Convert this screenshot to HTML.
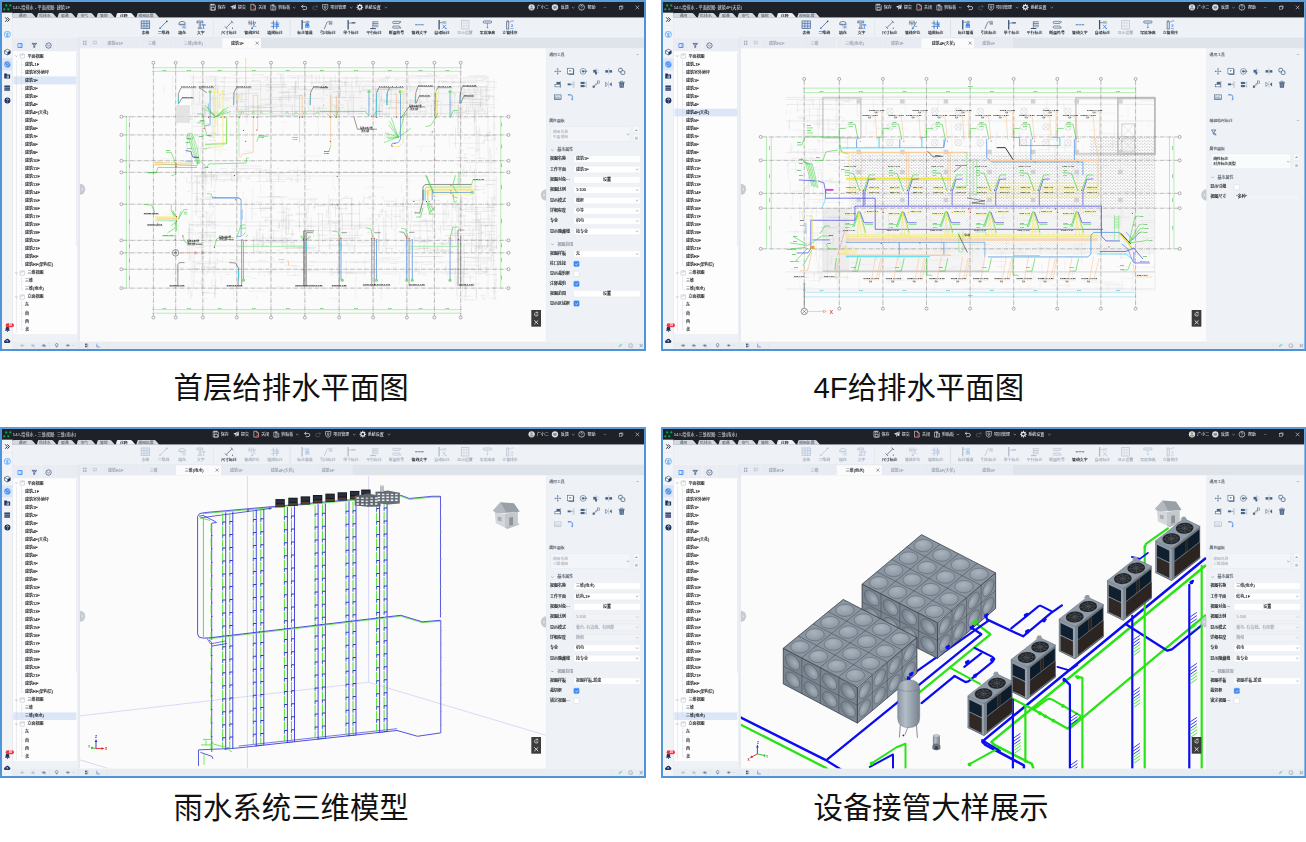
<!DOCTYPE html><html lang="zh"><head><meta charset="utf-8"><title>给排水</title><style>
html,body{margin:0;padding:0;background:#fff;}
body{width:1306px;height:842px;position:relative;overflow:hidden;font-family:"Liberation Sans","Noto Sans CJK SC",sans-serif;}
.win{filter:saturate(1.0001);position:absolute;width:1938px;height:1053px;transform:scale(0.333333);transform-origin:0 0;overflow:hidden;background:#eef1f5;}
.win div,.win span,.win svg{position:absolute;box-sizing:border-box;}
.win svg{overflow:visible;}
.t{font-size:12px;line-height:14px;white-space:nowrap;color:#101215;transform:translateY(-50%);-webkit-text-stroke:0.35px;}
.c{transform:translate(-50%,-50%);}
.cap{position:absolute;font-size:29.4px;line-height:40px;color:#111;white-space:nowrap;font-family:"Liberation Sans","Noto Sans CJK SC",sans-serif;}
.bd{left:0;top:0;width:1938px;height:1053px;border:6px solid #4f94d9;border-top-color:#5c9edc;border-radius:3px;z-index:50;pointer-events:none;}
.inp{background:#fff;border:1px solid #e3e6ec;border-radius:2px;}
.inp.dis{background:#f1f3f6;}
.cb{background:#fff;border:1.5px solid #c4c9d2;border-radius:3px;}
.cb.on{background:#3d8af2;border-color:#3d8af2;}
</style></head><body><div class="win" style="left:0px;top:0px;transform:scale(0.33333,0.333333);"><div style="left:6.0px;top:6.0px;width:1926.0px;height:1041.0px;background:#eef1f5;"></div><div style="left:6.0px;top:6.0px;width:1926.0px;height:47.4px;background:#1e2228;"></div><svg style="left:0.0px;top:0.0px;width:42.0px;height:42.0px;" viewBox="0 0 14 14"><path d="M4.3 9.3L6.2 5.4L8.3 9.3L10.3 5.4" stroke="#0a3d24" stroke-width=".5" fill="none"/><circle cx="6.2" cy="5.4" r="1.15" fill="#00a651"/><circle cx="10.3" cy="5.4" r="1.15" fill="#00a651"/><circle cx="4.3" cy="9.3" r="1.15" fill="#00a651"/><circle cx="8.3" cy="9.3" r="1.15" fill="#00a651"/></svg><span class="t" style="left:38.4px;top:22.2px;color:#dfe2e6;font-size:12.6px;-webkit-text-stroke:0;">14#-给排水 - 平面视图: 建筑1F</span><div style="left:0.0px;top:0;width:0;height:0;"><svg style="left:627.9px;top:11.1px;width:21.0px;height:21.0px;" viewBox="0 0 24 24"><path d="M3 2H17L21 6V22H3z" fill="none" stroke="#e6e8eb" stroke-width="2"/><rect x="7" y="2" width="9" height="6" fill="none" stroke="#e6e8eb" stroke-width="1.8"/><rect x="7" y="13" width="10" height="9" fill="none" stroke="#e6e8eb" stroke-width="1.8"/></svg><span class="t" style="left:653.4px;top:22.2px;color:#e4e6ea;-webkit-text-stroke:0.05px;">保存</span><svg style="left:688.5px;top:11.1px;width:21.0px;height:21.0px;" viewBox="0 0 24 24"><path d="M22 2L2 11L9 14L11 22L14 16L20 19z" fill="#e6e8eb"/><path d="M9 14L22 2L11 16" stroke="#1e2228" stroke-width="1.2" fill="none"/></svg><span class="t" style="left:714.0px;top:22.2px;color:#e4e6ea;-webkit-text-stroke:0.05px;">提交</span><svg style="left:749.4px;top:11.1px;width:21.0px;height:21.0px;" viewBox="0 0 24 24"><path d="M4 2H14L20 8V22H4z" fill="none" stroke="#e6e8eb" stroke-width="2"/><path d="M14 2V8H20" fill="none" stroke="#e6e8eb" stroke-width="1.6"/><path d="M12 13l7 8M19 13l-7 8" stroke="#f0443c" stroke-width="2.6"/></svg><span class="t" style="left:774.6px;top:22.2px;color:#e4e6ea;-webkit-text-stroke:0.05px;">关闭</span><svg style="left:809.4px;top:11.1px;width:21.0px;height:21.0px;" viewBox="0 0 24 24"><path d="M8 5H4V22H13" fill="none" stroke="#e6e8eb" stroke-width="2"/><path d="M8 3H16V7H8z" fill="#e6e8eb"/><path d="M11 9H21V22H11z" fill="none" stroke="#e6e8eb" stroke-width="2"/><path d="M14 13h4M14 17h4" stroke="#e6e8eb" stroke-width="1.5"/></svg><span class="t" style="left:834.9px;top:22.2px;color:#e4e6ea;-webkit-text-stroke:0.05px;">剪贴板</span><svg style="left:878.1px;top:18.9px;width:9.6px;height:7.2px;" viewBox="0 0 10 7"><path d="M1 1.5L5 5.5L9 1.5" stroke="#c8ccd2" stroke-width="1.6" fill="none"/></svg><svg style="left:902.4px;top:11.1px;width:21.0px;height:21.0px;" viewBox="0 0 24 24"><path d="M9 4L3 9.5L9 15" fill="none" stroke="#e6e8eb" stroke-width="2.4"/><path d="M3 9.5H15a6 5.5 0 0 1 0 11H7" fill="none" stroke="#e6e8eb" stroke-width="2.4"/></svg><svg style="left:934.5px;top:11.1px;width:21.0px;height:21.0px;" viewBox="0 0 24 24"><path d="M15 4L21 9.5L15 15" fill="none" stroke="#5a6068" stroke-width="2.2"/><path d="M21 9.5H9a6 5.5 0 0 0 0 11H17" fill="none" stroke="#5a6068" stroke-width="2.2"/></svg><svg style="left:965.4px;top:11.1px;width:21.0px;height:21.0px;" viewBox="0 0 24 24"><path d="M3 3H21V14Q21 20 12 23Q3 20 3 14z" fill="none" stroke="#e6e8eb" stroke-width="2"/><circle cx="12" cy="11" r="3.5" fill="none" stroke="#e6e8eb" stroke-width="2"/><path d="M12 15v4" stroke="#e6e8eb" stroke-width="2"/></svg><span class="t" style="left:990.9px;top:22.2px;color:#e4e6ea;-webkit-text-stroke:0.05px;">项目管理</span><svg style="left:1049.1px;top:18.9px;width:9.6px;height:7.2px;" viewBox="0 0 10 7"><path d="M1 1.5L5 5.5L9 1.5" stroke="#c8ccd2" stroke-width="1.6" fill="none"/></svg><svg style="left:1068.9px;top:11.1px;width:21.0px;height:21.0px;" viewBox="0 0 24 24"><rect x="10.2" y="0.5" width="3.6" height="6" rx="1" fill="#e6e8eb" transform="rotate(0 12 12)"/><rect x="10.2" y="0.5" width="3.6" height="6" rx="1" fill="#e6e8eb" transform="rotate(45 12 12)"/><rect x="10.2" y="0.5" width="3.6" height="6" rx="1" fill="#e6e8eb" transform="rotate(90 12 12)"/><rect x="10.2" y="0.5" width="3.6" height="6" rx="1" fill="#e6e8eb" transform="rotate(135 12 12)"/><rect x="10.2" y="0.5" width="3.6" height="6" rx="1" fill="#e6e8eb" transform="rotate(180 12 12)"/><rect x="10.2" y="0.5" width="3.6" height="6" rx="1" fill="#e6e8eb" transform="rotate(225 12 12)"/><rect x="10.2" y="0.5" width="3.6" height="6" rx="1" fill="#e6e8eb" transform="rotate(270 12 12)"/><rect x="10.2" y="0.5" width="3.6" height="6" rx="1" fill="#e6e8eb" transform="rotate(315 12 12)"/><circle cx="12" cy="12" r="6.3" fill="none" stroke="#e6e8eb" stroke-width="4.2"/></svg><span class="t" style="left:1094.4px;top:22.2px;color:#e4e6ea;-webkit-text-stroke:0.05px;">系统设置</span><svg style="left:1153.2px;top:18.9px;width:9.6px;height:7.2px;" viewBox="0 0 10 7"><path d="M1 1.5L5 5.5L9 1.5" stroke="#c8ccd2" stroke-width="1.6" fill="none"/></svg></div><svg style="left:1584.6px;top:12.0px;width:19.8px;height:19.8px;" viewBox="0 0 24 24"><circle cx="12" cy="12" r="11.5" fill="#d9dde4"/><circle cx="12" cy="9" r="4" fill="#8f98a6"/><path d="M4 20a8 7 0 0 1 16 0z" fill="#8f98a6"/><circle cx="14" cy="12" r="2" fill="#e9a23b"/></svg><span class="t" style="left:1610.4px;top:22.2px;color:#e4e6ea;-webkit-text-stroke:0.05px;">广小二</span><svg style="left:1654.5px;top:12.0px;width:19.8px;height:19.8px;" viewBox="0 0 24 24"><circle cx="12" cy="12" r="11.5" fill="#d9dde4"/><path d="M6 8h12v8h-5l-3 3v-3H6z" fill="#7d8694"/></svg><span class="t" style="left:1682.4px;top:22.2px;color:#e4e6ea;-webkit-text-stroke:0.05px;">反馈</span><svg style="left:1714.8px;top:18.9px;width:9.6px;height:7.2px;" viewBox="0 0 10 7"><path d="M1 1.5L5 5.5L9 1.5" stroke="#c8ccd2" stroke-width="1.6" fill="none"/></svg><svg style="left:1735.2px;top:12.0px;width:19.8px;height:19.8px;" viewBox="0 0 24 24"><circle cx="12" cy="12" r="10.5" fill="#1e2228" stroke="#d9dde4" stroke-width="2.4"/><path d="M9 9a3 3.4 0 1 1 4.5 3q-1.5 1-1.5 3" stroke="#d9dde4" stroke-width="2.2" fill="none"/><circle cx="12" cy="18.5" r="1.4" fill="#d9dde4"/></svg><span class="t" style="left:1762.8px;top:22.2px;color:#e4e6ea;-webkit-text-stroke:0.05px;">帮助</span><div style="left:1810.8px;top:21.6px;width:7.8px;height:1.5px;background:#b9bdc4;"></div><svg style="left:1857.0px;top:15.6px;width:13.2px;height:13.2px;" viewBox="0 0 24 24"><rect x="2" y="7" width="14" height="14" fill="none" stroke="#e6e8eb" stroke-width="2.6"/><path d="M7 7V3H21V17H16" fill="none" stroke="#e6e8eb" stroke-width="2.6"/></svg><svg style="left:1904.7px;top:15.0px;width:14.4px;height:14.4px;" viewBox="0 0 24 24"><path d="M3 3L21 21M21 3L3 21" stroke="#e6e8eb" stroke-width="2.8"/></svg><svg style="left:0.0px;top:0.0px;width:600.0px;height:60.0px;" viewBox="0 0 200 20"><path d="M12.30 17.8 L12.30 13.5 Q12.30 12.9 14.50 12.9 L31.00 12.9 Q32.00 12.9 32.60 13.700000000000001 L36.00 17.8 Z" fill="#d3d8e1"/><path d="M36.80 17.8 L38.00 13.5 Q38.20 12.9 39.00 12.9 L51.70 12.9 Q52.70 12.9 53.30 13.700000000000001 L56.70 17.8 Z" fill="#d3d8e1"/><path d="M57.50 17.8 L58.70 13.5 Q58.90 12.9 59.70 12.9 L70.80 12.9 Q71.80 12.9 72.40 13.700000000000001 L75.80 17.8 Z" fill="#d3d8e1"/><path d="M76.60 17.8 L77.80 13.5 Q78.00 12.9 78.80 12.9 L90.70 12.9 Q91.70 12.9 92.30 13.700000000000001 L95.70 17.8 Z" fill="#d3d8e1"/><path d="M96.50 17.8 L97.70 13.5 Q97.90 12.9 98.70 12.9 L109.90 12.9 Q110.90 12.9 111.50 13.700000000000001 L114.90 17.8 Z" fill="#d3d8e1"/><path d="M115.70 17.8 L116.90 13.5 Q117.10 12.9 117.90 12.9 L130.50 12.9 Q131.50 12.9 132.10 13.700000000000001 L135.50 17.8 Z" fill="#eef1f5"/><path d="M136.30 17.8 L137.50 13.5 Q137.70 12.9 138.50 12.9 L154.30 12.9 Q155.30 12.9 155.90 13.700000000000001 L159.30 17.8 Z" fill="#d3d8e1"/></svg><span class="t c" style="left:67.9px;top:46.2px;color:#6b7480;font-size:11.6px;">通用</span><span class="t c" style="left:134.8px;top:46.2px;color:#6b7480;font-size:11.6px;">给排水</span><span class="t c" style="left:194.6px;top:46.2px;color:#6b7480;font-size:11.6px;">暖通</span><span class="t c" style="left:253.1px;top:46.2px;color:#6b7480;font-size:11.6px;">电气</span><span class="t c" style="left:311.7px;top:46.2px;color:#6b7480;font-size:11.6px;">管综</span><span class="t c" style="left:371.4px;top:46.2px;color:#1f2329;font-size:11.6px;">注释</span><span class="t c" style="left:438.0px;top:46.2px;color:#6b7480;font-size:11.6px;">视图拓展</span><div style="left:36.9px;top:53.4px;width:1895.1px;height:59.1px;background:#eef1f5;"></div><svg style="left:421.2px;top:59.1px;width:30.6px;height:30.6px;" viewBox="0 0 24 24"><rect x="2" y="3" width="20" height="18" fill="#cddbf0" stroke="#4f6f9f" stroke-width="1.8"/><path d="M2 9H22M2 15H22M8.7 3V21M15.3 3V21" stroke="#4f6f9f" stroke-width="1.5" fill="none"/></svg><span class="t c" style="left:436.5px;top:99.3px;color:#1f2329;font-size:11.6px;">表格</span><svg style="left:475.2px;top:59.1px;width:30.6px;height:30.6px;" viewBox="0 0 24 24"><path d="M4 20L20 4" stroke="#3c5273" stroke-width="1.6"/><circle cx="4" cy="20" r="2" fill="#3d8af2"/><circle cx="20" cy="4" r="2" fill="#3c5273"/></svg><span class="t c" style="left:490.5px;top:99.3px;color:#1f2329;font-size:11.6px;">二维线</span><svg style="left:530.7px;top:59.1px;width:30.6px;height:30.6px;" viewBox="0 0 24 24"><path d="M4 11a8 7 0 0 1 16 0z" fill="none" stroke="#3c5273" stroke-width="1.6"/><path d="M8 11v3M12 11v5M16 11v3" stroke="#3c5273" stroke-width="1.4"/><rect x="11" y="13" width="11" height="9" fill="#c9d6ea" opacity=".9"/><circle cx="17" cy="17" r="2.2" fill="none" stroke="#3d8af2" stroke-width="1.3"/></svg><span class="t c" style="left:546.0px;top:99.3px;color:#1f2329;font-size:11.6px;">填充</span><svg style="left:587.1px;top:59.1px;width:30.6px;height:30.6px;" viewBox="0 0 24 24"><path d="M3 3H17V8H15V5.5H11.5V19H14V21H6V19H8.5V5.5H5V8H3z" fill="#e8eef8" stroke="#3c5273" stroke-width="1.3"/><path d="M14 11H23V15H21.5V13H19.5V20H21V21.5H16V20H17.5V13H15.5V15H14z" fill="#3d8af2"/></svg><span class="t c" style="left:602.4px;top:99.3px;color:#1f2329;font-size:11.6px;">文字</span><svg style="left:671.7px;top:59.1px;width:30.6px;height:30.6px;" viewBox="0 0 24 24"><path d="M5 19L19 5" stroke="#3c5273" stroke-width="1.6"/><path d="M2 16l6 6M16 2l6 6" stroke="#3c5273" stroke-width="1.6"/><circle cx="20" cy="20" r="1.3" fill="#3c5273"/></svg><span class="t c" style="left:687.0px;top:99.3px;color:#1f2329;font-size:11.6px;">尺寸标注</span><svg style="left:740.7px;top:59.1px;width:30.6px;height:30.6px;" viewBox="0 0 24 24"><path d="M5 2V12M10 2V14M15 2V12" stroke="#3c5273" stroke-width="1.5"/><path d="M3 7H8M8 9H12M13 7H18" stroke="#3c5273" stroke-width="1.2"/><path d="M21 5L13 19" stroke="#3c5273" stroke-width="1.5"/><circle cx="12" cy="20" r="2.4" fill="#3d8af2"/><path d="M17 16h5" stroke="#3d8af2" stroke-width="1.5"/></svg><span class="t c" style="left:756.0px;top:99.3px;color:#1f2329;font-size:11.6px;">管线定位</span><svg style="left:809.7px;top:59.1px;width:30.6px;height:30.6px;" viewBox="0 0 24 24"><path d="M2 8H22M2 16H22" stroke="#3d8af2" stroke-width="1.7"/><path d="M8 2V22M16 2V22" stroke="#3c5273" stroke-width="1.6"/><path d="M10 12h9" stroke="#3d8af2" stroke-width="2"/><path d="M17 8.5l5 3.5-5 3.5z" fill="#3d8af2"/><circle cx="8" cy="8" r="1.6" fill="#3d8af2"/><circle cx="16" cy="16" r="1.6" fill="#3d8af2"/></svg><span class="t c" style="left:825.0px;top:99.3px;color:#1f2329;font-size:11.6px;">墙间标注</span><svg style="left:899.7px;top:59.1px;width:30.6px;height:30.6px;" viewBox="0 0 24 24"><path d="M5 1V23" stroke="#3c5273" stroke-width="3"/><path d="M5 6H14" stroke="#3c5273" stroke-width="1.4"/><path d="M14 4h8M14 7h8" stroke="#3c5273" stroke-width="1.2"/><path d="M12 13a5 5 0 0 1 10 0v6h-10z" fill="#3d8af2"/><path d="M15 15v3M19 15v3" stroke="#fff" stroke-width="1.2"/></svg><span class="t c" style="left:915.0px;top:99.3px;color:#1f2329;font-size:11.6px;">标注管道</span><svg style="left:968.7px;top:59.1px;width:30.6px;height:30.6px;" viewBox="0 0 24 24"><path d="M3 22L9 7Q10 5 12 5H14" stroke="#3c5273" stroke-width="1.5" fill="none"/><path d="M14 4h8M14 7h8" stroke="#3c5273" stroke-width="1.2"/><rect x="14" y="9" width="8" height="2" fill="#3c5273"/></svg><span class="t c" style="left:984.0px;top:99.3px;color:#1f2329;font-size:11.6px;">引出标注</span><svg style="left:1037.7px;top:59.1px;width:30.6px;height:30.6px;" viewBox="0 0 24 24"><path d="M5 1V23" stroke="#3c5273" stroke-width="3"/><path d="M5 8H13" stroke="#3c5273" stroke-width="1.4"/><rect x="13" y="6" width="9" height="3" fill="#3c5273"/></svg><span class="t c" style="left:1053.0px;top:99.3px;color:#1f2329;font-size:11.6px;">单个标注</span><svg style="left:1106.7px;top:59.1px;width:30.6px;height:30.6px;" viewBox="0 0 24 24"><path d="M3 21H16" stroke="#3c5273" stroke-width="2.4"/><path d="M9 21V4" stroke="#3c5273" stroke-width="1.4"/><path d="M9 5h13M9 9h13M9 13h13" stroke="#3c5273" stroke-width="1.5"/><rect x="11" y="15" width="11" height="3" fill="#9fb4d6"/></svg><span class="t c" style="left:1122.0px;top:99.3px;color:#1f2329;font-size:11.6px;">平行标注</span><svg style="left:1174.2px;top:59.1px;width:30.6px;height:30.6px;" viewBox="0 0 24 24"><rect x="3" y="4" width="17" height="5" rx="2.5" fill="#dfe8f5" stroke="#3c5273" stroke-width="1.4"/><rect x="3" y="15" width="17" height="5" rx="2.5" fill="#dfe8f5" stroke="#3c5273" stroke-width="1.4"/><path d="M20 3l3 2-3 2M20 17l3 2-3 2" stroke="#3c5273" stroke-width="1.2" fill="none"/></svg><span class="t c" style="left:1189.5px;top:99.3px;color:#1f2329;font-size:11.6px;">断面符号</span><svg style="left:1242.6px;top:59.1px;width:30.6px;height:30.6px;" viewBox="0 0 24 24"><path d="M2 12H8M16 12H22" stroke="#3c5273" stroke-width="1.8"/><path d="M9 12h6" stroke="#3d8af2" stroke-width="2.4"/></svg><span class="t c" style="left:1257.9px;top:99.3px;color:#1f2329;font-size:11.6px;">管线文字</span><svg style="left:1310.7px;top:59.1px;width:30.6px;height:30.6px;" viewBox="0 0 24 24"><path d="M5 1V23" stroke="#3c5273" stroke-width="3"/><path d="M5 7H13" stroke="#3c5273" stroke-width="1.4"/><path d="M13 5h9M13 8h9" stroke="#3c5273" stroke-width="1.2"/><path d="M13 12l8 9M21 12l-8 9" stroke="#3d8af2" stroke-width="2"/><circle cx="21" cy="21" r="1.8" fill="#3d8af2"/></svg><span class="t c" style="left:1326.0px;top:99.3px;color:#1f2329;font-size:11.6px;">自动标注</span><svg style="left:1379.7px;top:59.1px;width:30.6px;height:30.6px;" viewBox="0 0 24 24"><rect x="3" y="2" width="18" height="20" fill="#eef1f6" stroke="#b5bdc9" stroke-width="1.4"/><path d="M3 8H21M3 15H21M9 2V22M15 2V22" stroke="#b5bdc9" stroke-width="1.1" stroke-dasharray="2 1.5"/></svg><span class="t c" style="left:1395.0px;top:99.3px;color:#a9b0bb;font-size:11.6px;">显示设置</span><svg style="left:1447.2px;top:59.1px;width:30.6px;height:30.6px;" viewBox="0 0 24 24"><rect x="2" y="3" width="20" height="5" rx="2.5" fill="#dfe8f5" stroke="#3c5273" stroke-width="1.5"/><path d="M12 8V19" stroke="#3d8af2" stroke-width="1.6"/><path d="M9.5 17l2.5 4 2.5-4z" fill="#3d8af2"/></svg><span class="t c" style="left:1462.5px;top:99.3px;color:#1f2329;font-size:11.6px;">梁底净高</span><svg style="left:1514.7px;top:59.1px;width:30.6px;height:30.6px;" viewBox="0 0 24 24"><rect x="4" y="5" width="5" height="17" fill="#dfe8f5" stroke="#3c5273" stroke-width="1.5"/><path d="M4 3h5" stroke="#3c5273" stroke-width="1.6"/><path d="M11 6l5-3M16 3h5" stroke="#3c5273" stroke-width="1.2" fill="none"/><path d="M14 12h4v4M14 16l4 0M13 21h7" stroke="#3d8af2" stroke-width="1.5" fill="none"/></svg><span class="t c" style="left:1530.0px;top:99.3px;color:#1f2329;font-size:11.6px;">立管排序</span><div style="left:640.8px;top:58.5px;width:1.5px;height:51.0px;background:#d5d9e0;"></div><div style="left:869.1px;top:58.5px;width:1.5px;height:51.0px;background:#d5d9e0;"></div><div style="left:6.0px;top:37.8px;width:31.2px;height:1009.2px;background:#f1f3f7;"></div><div style="left:36.6px;top:37.8px;width:1.0px;height:1009.2px;background:#dfe3ea;"></div><div style="left:6.0px;top:75.0px;width:31.2px;height:1.2px;background:#dde1e8;"></div><svg style="left:12.9px;top:49.8px;width:18.6px;height:17.4px;" viewBox="0 0 24 24"><path d="M3 3l8 9-8 9M12 3l8 9-8 9" stroke="#15181d" stroke-width="3.6" fill="none"/></svg><svg style="left:10.8px;top:92.4px;width:22.2px;height:22.2px;" viewBox="0 0 24 24"><circle cx="12" cy="12" r="11" fill="#7db8fb"/><path d="M6 14v-3a6 6 0 0 1 12 0v3" stroke="#fff" stroke-width="2.4" fill="none"/><rect x="4.5" y="12" width="4" height="6" rx="1.5" fill="#fff"/><rect x="15.5" y="12" width="4" height="6" rx="1.5" fill="#fff"/></svg><svg style="left:11.7px;top:145.5px;width:20.4px;height:20.4px;" viewBox="0 0 24 24"><path d="M12 2L22 7V17L12 22L2 17V7z" fill="#fff" stroke="#1d3461" stroke-width="2.2"/><path d="M12 12L22 7V17L12 22z" fill="#1d3461"/><path d="M2 7l10 5" stroke="#1d3461" stroke-width="2"/></svg><div style="left:6.0px;top:174.9px;width:31.2px;height:36.0px;background:#dce6f6;"></div><svg style="left:11.7px;top:182.7px;width:20.4px;height:20.4px;" viewBox="0 0 24 24"><circle cx="12" cy="12" r="11" fill="#4a90f0"/><ellipse cx="12" cy="12" rx="10" ry="4" fill="none" stroke="#cfe2fb" stroke-width="1.8" transform="rotate(-35 12 12)"/></svg><svg style="left:12.3px;top:218.4px;width:19.2px;height:19.2px;" viewBox="0 0 24 24"><path d="M1 3H10L12 7H23V22H1z" fill="#1d3461"/><rect x="10" y="11" width="8" height="8" fill="#fff"/><path d="M12 13h4v4h-4z" fill="#1d3461"/></svg><svg style="left:12.3px;top:254.7px;width:19.2px;height:18.6px;" viewBox="0 0 24 24"><rect x="1" y="2" width="22" height="5.4" fill="#1d3461"/><rect x="1" y="9.3" width="22" height="5.4" fill="#1d3461"/><rect x="1" y="16.6" width="22" height="5.4" fill="#1d3461"/></svg><svg style="left:12.6px;top:292.2px;width:18.6px;height:18.6px;" viewBox="0 0 24 24"><circle cx="12" cy="12" r="11.5" fill="#1d3461"/><path d="M8.5 9.5a3.5 3.5 0 1 1 5 3q-1.5 .8-1.5 2.5" stroke="#fff" stroke-width="2.6" fill="none"/><circle cx="12" cy="18.6" r="1.6" fill="#fff"/></svg><svg style="left:12.6px;top:976.5px;width:18.6px;height:19.8px;" viewBox="0 0 24 24"><path d="M12 2a7 7 0 0 1 7 7v6l3 4H2l3-4V9a7 7 0 0 1 7-7z" fill="#1d3461"/><circle cx="12" cy="21.5" r="2" fill="#1d3461"/></svg><div style="left:17.4px;top:969.6px;width:24.6px;height:12.6px;background:#f5343f;border-radius:6px;z-index:5;"></div><span class="t c" style="left:30.9px;top:975.9px;color:#fff;font-size:9px;z-index:6;">18</span><svg style="left:11.4px;top:1011.6px;width:21.0px;height:18.0px;" viewBox="0 0 24 21"><path d="M6 20a5 5 0 0 1-.5-10A7 7 0 0 1 19 9.5 5.3 5.3 0 0 1 18.5 20z" fill="#1d3461"/><path d="M12 17V11M9 13.5l3-3 3 3" stroke="#fff" stroke-width="2" fill="none"/></svg><div style="left:37.5px;top:112.5px;width:195.6px;height:40.8px;background:#e9ecf2;"></div><div style="left:81.6px;top:114.6px;width:1.4px;height:37.8px;background:#f7f8fa;"></div><div style="left:124.2px;top:114.6px;width:1.4px;height:37.8px;background:#f7f8fa;"></div><div style="left:166.8px;top:114.6px;width:1.4px;height:37.8px;background:#f7f8fa;"></div><div style="left:37.5px;top:112.5px;width:195.6px;height:1.2px;background:#f7f8fa;"></div><svg style="left:52.2px;top:127.8px;width:16.2px;height:16.8px;" viewBox="0 0 24 24"><rect x="1" y="1" width="22" height="22" rx="4" fill="#4a90f0"/><rect x="5" y="5" width="6" height="14" fill="#fff"/><rect x="12.5" y="5" width="6.5" height="14" fill="#bcd6fa"/></svg><svg style="left:93.6px;top:127.8px;width:18.0px;height:16.8px;" viewBox="0 0 24 24"><path d="M2 3H22L14 12V19L10 22V12z" fill="none" stroke="#1d3461" stroke-width="2.6"/><path d="M8 7h8" stroke="#1d3461" stroke-width="2.4"/></svg><svg style="left:135.6px;top:126.6px;width:19.2px;height:19.2px;" viewBox="0 0 24 24"><circle cx="12" cy="12" r="10" fill="none" stroke="#1d3461" stroke-width="2.2"/><path d="M7 10l5 4 5-4" stroke="#1d3461" stroke-width="2" fill="none"/></svg><div style="left:39.0px;top:153.6px;width:192.6px;height:848.4px;background:#fdfdfe;"></div><div style="left:228.6px;top:156.0px;width:2.7px;height:582.0px;background:#e3e6ec;border-radius:2px;"></div><svg style="left:45.3px;top:165.3px;width:7.8px;height:6.0px;" viewBox="0 0 10 7"><path d="M1 1.5L5 5.5L9 1.5" stroke="#5b6573" stroke-width="1.8" fill="none"/></svg><svg style="left:59.4px;top:160.2px;width:15.6px;height:16.2px;" viewBox="0 0 24 24"><rect x="2" y="2" width="20" height="20" rx="2" fill="#fff" stroke="#8e98a6" stroke-width="1.6"/><path d="M2 8H14V2" stroke="#8e98a6" stroke-width="1.4" fill="none"/><path d="M14 8l8-6" stroke="#8e98a6" stroke-width="1.2"/></svg><span class="t" style="left:82.5px;top:168.6px;">平面视图</span><div style="left:64.2px;top:192.7px;width:6.6px;height:0.9px;background:#c6ccd6;"></div><span class="t" style="left:75.3px;top:192.7px;">建筑-1F</span><div style="left:64.2px;top:216.8px;width:6.6px;height:0.9px;background:#c6ccd6;"></div><span class="t" style="left:75.3px;top:216.8px;">建筑室外地坪</span><div style="left:39.6px;top:229.2px;width:189.0px;height:23.4px;background:#dbe7f8;"></div><div style="left:64.2px;top:240.9px;width:6.6px;height:0.9px;background:#c6ccd6;"></div><span class="t" style="left:75.3px;top:240.9px;">建筑1F</span><div style="left:64.2px;top:265.0px;width:6.6px;height:0.9px;background:#c6ccd6;"></div><span class="t" style="left:75.3px;top:265.0px;">建筑2F</span><div style="left:64.2px;top:289.0px;width:6.6px;height:0.9px;background:#c6ccd6;"></div><span class="t" style="left:75.3px;top:289.0px;">建筑3F</span><div style="left:64.2px;top:313.1px;width:6.6px;height:0.9px;background:#c6ccd6;"></div><span class="t" style="left:75.3px;top:313.1px;">建筑4F</span><div style="left:64.2px;top:337.2px;width:6.6px;height:0.9px;background:#c6ccd6;"></div><span class="t" style="left:75.3px;top:337.2px;">建筑4F(天花)</span><div style="left:64.2px;top:361.3px;width:6.6px;height:0.9px;background:#c6ccd6;"></div><span class="t" style="left:75.3px;top:361.3px;">建筑5F</span><div style="left:64.2px;top:385.4px;width:6.6px;height:0.9px;background:#c6ccd6;"></div><span class="t" style="left:75.3px;top:385.4px;">建筑6F</span><div style="left:64.2px;top:409.5px;width:6.6px;height:0.9px;background:#c6ccd6;"></div><span class="t" style="left:75.3px;top:409.5px;">建筑7F</span><div style="left:64.2px;top:433.6px;width:6.6px;height:0.9px;background:#c6ccd6;"></div><span class="t" style="left:75.3px;top:433.6px;">建筑8F</span><div style="left:64.2px;top:457.7px;width:6.6px;height:0.9px;background:#c6ccd6;"></div><span class="t" style="left:75.3px;top:457.7px;">建筑9F</span><div style="left:64.2px;top:481.8px;width:6.6px;height:0.9px;background:#c6ccd6;"></div><span class="t" style="left:75.3px;top:481.8px;">建筑10F</span><div style="left:64.2px;top:505.9px;width:6.6px;height:0.9px;background:#c6ccd6;"></div><span class="t" style="left:75.3px;top:505.9px;">建筑11F</span><div style="left:64.2px;top:529.9px;width:6.6px;height:0.9px;background:#c6ccd6;"></div><span class="t" style="left:75.3px;top:529.9px;">建筑12F</span><div style="left:64.2px;top:554.0px;width:6.6px;height:0.9px;background:#c6ccd6;"></div><span class="t" style="left:75.3px;top:554.0px;">建筑13F</span><div style="left:64.2px;top:578.1px;width:6.6px;height:0.9px;background:#c6ccd6;"></div><span class="t" style="left:75.3px;top:578.1px;">建筑14F</span><div style="left:64.2px;top:602.2px;width:6.6px;height:0.9px;background:#c6ccd6;"></div><span class="t" style="left:75.3px;top:602.2px;">建筑15F</span><div style="left:64.2px;top:626.3px;width:6.6px;height:0.9px;background:#c6ccd6;"></div><span class="t" style="left:75.3px;top:626.3px;">建筑16F</span><div style="left:64.2px;top:650.4px;width:6.6px;height:0.9px;background:#c6ccd6;"></div><span class="t" style="left:75.3px;top:650.4px;">建筑17F</span><div style="left:64.2px;top:674.5px;width:6.6px;height:0.9px;background:#c6ccd6;"></div><span class="t" style="left:75.3px;top:674.5px;">建筑18F</span><div style="left:64.2px;top:698.6px;width:6.6px;height:0.9px;background:#c6ccd6;"></div><span class="t" style="left:75.3px;top:698.6px;">建筑19F</span><div style="left:64.2px;top:722.7px;width:6.6px;height:0.9px;background:#c6ccd6;"></div><span class="t" style="left:75.3px;top:722.7px;">建筑20F</span><div style="left:64.2px;top:746.8px;width:6.6px;height:0.9px;background:#c6ccd6;"></div><span class="t" style="left:75.3px;top:746.8px;">建筑21F</span><div style="left:64.2px;top:770.8px;width:6.6px;height:0.9px;background:#c6ccd6;"></div><span class="t" style="left:75.3px;top:770.8px;">建筑RF</span><div style="left:64.2px;top:794.9px;width:6.6px;height:0.9px;background:#c6ccd6;"></div><span class="t" style="left:75.3px;top:794.9px;">建筑RF(架构层)</span><svg style="left:45.3px;top:815.7px;width:7.8px;height:6.0px;" viewBox="0 0 10 7"><path d="M1 1.5L5 5.5L9 1.5" stroke="#5b6573" stroke-width="1.8" fill="none"/></svg><svg style="left:59.4px;top:810.6px;width:15.6px;height:16.2px;" viewBox="0 0 24 24"><rect x="2" y="2" width="20" height="20" rx="2" fill="#fff" stroke="#8e98a6" stroke-width="1.6"/><path d="M2 8H14V2" stroke="#8e98a6" stroke-width="1.4" fill="none"/><path d="M14 8l8-6" stroke="#8e98a6" stroke-width="1.2"/></svg><span class="t" style="left:82.5px;top:819.0px;">三维视图</span><div style="left:64.2px;top:843.1px;width:6.6px;height:0.9px;background:#c6ccd6;"></div><span class="t" style="left:75.3px;top:843.1px;">三维</span><div style="left:64.2px;top:867.2px;width:6.6px;height:0.9px;background:#c6ccd6;"></div><span class="t" style="left:75.3px;top:867.2px;">三维(雨水)</span><svg style="left:45.3px;top:888.0px;width:7.8px;height:6.0px;" viewBox="0 0 10 7"><path d="M1 1.5L5 5.5L9 1.5" stroke="#5b6573" stroke-width="1.8" fill="none"/></svg><svg style="left:59.4px;top:882.9px;width:15.6px;height:16.2px;" viewBox="0 0 24 24"><rect x="2" y="2" width="20" height="20" rx="2" fill="#fff" stroke="#8e98a6" stroke-width="1.6"/><path d="M2 8H14V2" stroke="#8e98a6" stroke-width="1.4" fill="none"/><path d="M14 8l8-6" stroke="#8e98a6" stroke-width="1.2"/></svg><span class="t" style="left:82.5px;top:891.3px;">立面视图</span><div style="left:64.2px;top:915.4px;width:6.6px;height:0.9px;background:#c6ccd6;"></div><span class="t" style="left:75.3px;top:915.4px;">东</span><div style="left:64.2px;top:939.5px;width:6.6px;height:0.9px;background:#c6ccd6;"></div><span class="t" style="left:75.3px;top:939.5px;">南</span><div style="left:64.2px;top:963.6px;width:6.6px;height:0.9px;background:#c6ccd6;"></div><span class="t" style="left:75.3px;top:963.6px;">西</span><div style="left:64.2px;top:987.7px;width:6.6px;height:0.9px;background:#c6ccd6;"></div><span class="t" style="left:75.3px;top:987.7px;">北</span><div style="left:63.9px;top:179.1px;width:0.9px;height:615.8px;background:#c6ccd6;"></div><div style="left:63.9px;top:829.5px;width:0.9px;height:37.7px;background:#c6ccd6;"></div><div style="left:63.9px;top:901.8px;width:0.9px;height:85.9px;background:#c6ccd6;"></div><div style="left:49.2px;top:179.1px;width:0.9px;height:819.1px;background:#c6ccd6;"></div><div style="left:233.1px;top:112.5px;width:1698.9px;height:32.4px;background:#dfe3ea;"></div><div style="left:233.1px;top:112.5px;width:6.9px;height:912.0px;background:#e6e9ef;"></div><div style="left:240.0px;top:112.5px;width:543.0px;height:32.7px;background:#e8ebf1;"></div><div style="left:240.0px;top:144.9px;width:1398.0px;height:2.4px;background:#f3f5f8;z-index:3;"></div><svg style="left:247.8px;top:120.9px;width:12.6px;height:15.0px;" viewBox="0 0 20 24"><rect x="2" y="2" width="6" height="8" fill="#9aa7bd"/><rect x="12" y="2" width="6" height="8" fill="#9aa7bd"/><rect x="2" y="14" width="6" height="8" fill="#9aa7bd"/><rect x="12" y="14" width="6" height="8" fill="#9aa7bd"/></svg><svg style="left:277.2px;top:122.4px;width:15.0px;height:12.6px;" viewBox="0 0 24 24"><path d="M3 3H21V17H12L9 21V17H3z" fill="none" stroke="#9aa7bd" stroke-width="2.4"/></svg><span class="t c" style="left:345.6px;top:129.6px;color:#9aa3b0;">建筑R1F</span><div style="left:418.8px;top:115.2px;width:1.4px;height:28.2px;background:#f4f6f9;"></div><span class="t c" style="left:456.0px;top:129.6px;color:#9aa3b0;">三维</span><div style="left:520.8px;top:115.2px;width:1.4px;height:28.2px;background:#f4f6f9;"></div><span class="t c" style="left:580.2px;top:129.6px;color:#9aa3b0;">三维(雨水)</span><div style="left:667.2px;top:114.6px;width:115.8px;height:30.6px;background:#fbfbfc;"></div><span class="t c" style="left:712.2px;top:129.6px;color:#1f2329;">建筑1F</span><svg style="left:765.9px;top:124.2px;width:10.8px;height:10.8px;" viewBox="0 0 24 24"><path d="M2 2L22 22M22 2L2 22" stroke="#2a2f36" stroke-width="3"/></svg><div style="left:299.1px;top:115.2px;width:1.4px;height:28.2px;background:#f4f6f9;"></div><div style="left:240.0px;top:145.2px;width:1398.6px;height:879.6px;background:#fbfbfb;overflow:hidden;"><svg style="left:0;top:0;width:1397.4px;height:879.6px;" viewBox="80 48.4 465.8 293.2"><rect x="192" y="86" width="296" height="28" fill="#e9e9e9" stroke="none" stroke-width="0" opacity=".25"/><path d="M268.48 106.39h30M435.13 93.46h20M329.99 80.55h12M240.62 197.64v3M201.47 122.9v30M180.72 205.5v3M175.61 267.73h8M341.13 202.17v20M220.54 204.6h30M192.64 234.36h20M229 227.13v12M315.98 282.54h8M426.12 231.37h5M260.58 184.89v8M256.46 295.48v3M215.26 149.99h12M482.28 89.7v20M453.29 143.53h30M326.39 253.69v3M476.47 180.09h18.53M404.94 142.59v20M435.34 136.89v12M276.25 286.47h8M199.23 85.44h8M242.95 161.14h12M310.48 197.27v5M449.43 135.48v12M388.71 158.74h5M219.03 124.89h5M438.42 113.57h8M300.35 156.19h20M202.04 267.9v20M407.83 176.11v30M291.45 162.97h3M294.15 115.46h5M196.83 208.97h3M210.67 95.13v8M183.56 119.41h12M244.51 151.2h8M198.64 183.28h12M264.47 104.86h30M248.69 260.98v5M228.75 289.06h8M341.96 78.17h20M375.38 92.75v8M464.27 153.1v5M420.98 147.16v5M424.11 244.9v5M434.14 240.69h5M325.08 238.67v3M318.2 116.15v20M309.82 285.64v8M282.15 122.27h5M273.14 182.04v20M320.62 220.88h30M381.3 279.43v20.57M320.14 112.7h30M428.28 293.54h12M409.02 91.36h5M202.56 106.46v12M208.97 260.44v12M277.39 197.09h5M427.78 237.61v3M472.76 170.91v5M230.7 129.42v8M415.83 146.33h20M203.91 279.48v8M381.93 257.83h20M467.44 186.38h20M331.03 271v5M419.97 106.15h5M402.94 198.88v8M337.79 182.01v3M179.04 115.62v3M330.08 200.07h3M365.2 187.27h20M252.86 187.86v12M242.96 191.29v8M459.07 118.19h12M200.74 172.8v3M303.49 120.49v8M460.5 107.21v30M282.67 129.71v5M233.56 289.17v10.83M214.54 224.27h5M304.56 189.56h8M279.47 93.02h8M345.61 172.42h3M333.34 139.36h3M467.71 124.11h3M251.09 278.54h5M203.4 168.27v30M246.63 106.06v20M394.64 92.4v3M221.42 276.13v8M372.54 254.77v3M234.51 132.29h3M273.62 198.1v8M174.47 233.77v3M247.73 113.3v8M337.91 118.94v12M219.6 151.12v3M172.38 76.2v20M223.47 180.25h12M434.34 170.54v12M457.72 293.23v6.77M489.12 150.14v30M206.81 297.59v2.41M164.78 214.6h8M178.56 223.67v12M384.63 136.28v5M175.15 114.26h8M248.19 291.29h20M171.54 273.18h5M160.36 159.01h12M379.77 128.58h3M433.71 104.8h20M167.54 141.37h5M480.81 266.54v5M399.86 272.43v12M401.43 184.68v8M375.48 81.98v30M370.16 239.32h20M335.46 187v3M355.66 275.57v24.43M375.37 91.4h3M280.84 95.92v12M370.3 214.78h30M248.37 176.18v3M328.5 194.03v30M409.82 180.04v3M238.65 244.47v5M486.87 184.62h8.13M465.01 137.51v3M375.33 89.66h5M378.26 229.98v20M164.18 85.83v8M193.34 121.63h12M333.04 177.94v12M492.76 197.19v8M473.65 75.99h12M329.72 298.77h8M467.05 284.16v3M207.48 191.49h8M434.77 187.99v3M237.51 276.68h12M213.29 288.59h30M261.15 104.08h8M200.5 147.54v8M441.1 99.37v5" stroke="#888" stroke-width="0.4" fill="none" opacity="0.22"/><path d="M464.98 86.17h8M309 110.54h3M320.56 85.56h3M205.74 101.8v14.2M266.04 85.16h20M425.82 106.98v9.02M437.65 100.5v15.5M409.47 76.08h30M377.55 79.82h8M468.13 97.1h5M294.82 86.51v29.49M389.11 91.06h5M359.98 90.56v5M212.93 95.03v12M328.16 87.98h12M357.07 84.25h5M217.78 84.04v8M251.65 74.84h12M417.48 82.82h8M208.93 85.66h8M343.54 100.44h5M463.52 90.15h30M480.95 109.64h3M319.69 106.08v9.92M339.4 77.07v20M486.53 84.44h3M236.38 114.82v1.18M410.13 101.19h12M426.94 74.06h5M470.58 101.11v8M381.07 96.19v12M224.2 76.95v20M248.47 84.96h20M353.93 115.85v0.15M386.6 111.12v4.88M356.84 75.23v12M283.76 74.92v12M387.39 77.41v5M472.17 83.53v3M409.09 89.22h12M433.1 105.04h20M341.19 82.42h5M257.54 105.94h8M380.2 99.62h5M467.67 76.37h20M310.01 82.94h20M205.81 76.53h12M407.17 87.2v3M474.14 87.83v5M350.06 93.64v8M305.48 89.7h8M223.23 77.29h3M481.43 79.2h5M424.46 86.97h12M405.1 82.22v20M248.87 89.3h12M315.29 108.1h12M200.63 76.63h3M417.92 111.74h8M292.17 114.06h3M408.57 87.29h8M410.08 99.01v16.99M209.93 108.69h3M481.82 114.06v1.94M468.63 108.22v5M245.8 107.71h30M401.09 80.36h5M287.46 89.2h20M250.18 105.62h5M388.11 94.23h20M488.98 111.11h3M215.65 78.05v12M486.5 81.27h5M379.19 102.31v13.69M426.03 105.9h8M362.9 89.66h30M324.02 81.8h5M459.67 98.29h8M266.75 84.33h20M436.58 101.44h3M334.8 108.4v7.6M202.31 86.33h3M373.15 108.77v5M303.53 110.38v5.62M426.37 101.92h3M371.82 100.04h5M293.71 75.85h8M413.33 112.39v3M314.74 89.62h20M252.04 107.4h20M314.49 107.43v8.57M384.95 77.83h5M272.71 115.51h30M480.72 87.12v20M316.29 74.76v8M309.17 91.01h3M237.75 78.77h3M459.27 93.36h5M205.77 79.98h12M379.77 89.58h20M296.12 80.8v5M223.18 94.6h5M445.37 75.83h12M375.33 100.73v3M379.2 108.63v5M451.26 100.08v15.92M442.9 81.68h5M476.26 80.57h8M265.35 104.45h5M361.51 105.81v3M288.88 90.37v12M381.25 86.86h12M266.02 90.35h8M323.7 74.98v20M331.91 92.77v20M329.78 81.54h12M210.47 89.06h8M324.8 95.43h3M229.73 112.73v3.27M346 76.28v20M389.09 106.94v3M493.82 104.75h1.18M489.43 94.66v5M409.93 83.29v8M266.93 87.6h20M438.77 80.03v20M336.43 98.86v17.14M287.32 75.55h5M384.15 85.68v8M241.47 106.96v3M204.81 110.05v5.95M366.91 111.07h3M353.39 109.98v6.02M270.75 115.6h20M290.9 77.42h5M416.8 76.03h20M384.97 115.33v0.67M463.2 104.79h30M235.56 99.87h12M301.05 76.01h12M389.2 74.94v3M282.64 95.97h20M368 98.74h5M442.68 80.66v3M264.29 80.27h3M234.13 101.95h8M270.59 74.48v30M462.27 98.98h20M475.83 104.81h5M190.12 76.58h3M262.49 76.45h3M358.03 113.52h5M348.07 100.99v15.01M438.08 81.33h8M380.92 115.75v0.25M408.2 74.27v12M331.91 105.15h12M493.97 84.98h1.03M292.33 105.49v10.51M270.31 76.21v30M323 107.11v8.89M280.16 113h5M344.77 81.13v5M251.85 80.69h8M308.56 99.25v12M382.36 103.1v12.9M353.59 93.83v20M451.54 92.36h30M459.85 107.15v8.85M213.73 112.25h5M224.13 100.12h5M233.26 75.21h3M386.28 75.79v3M210.06 98.8h8M481.14 96.42h13.86M454.68 112.41h12M252.75 78.7v3M467.89 105.66v3M382.62 86.07h3M431.55 101.15h8M319.25 74.88v8M204.76 105.91v8M373.61 94v8M199.45 91.34v12M219.98 93.7v3M256.06 110.21v3M277.57 92.31h20M422.47 115.07h3M219.19 103.2v5M370.73 114.2h20M477.88 85.92v5M260.62 80.96v30M339.54 115.63v0.37M381.52 88.94v12M462.01 105.3v10.7M197.68 82.66h8M356.21 81.19h30M330.58 96.32v19.68M387.12 88.64v8M454.74 92.91v20M241.71 92.43v8M228.45 93.4h30M248.43 86.66v29.34M378.29 104.38v5M373.88 88.64h5M247.73 114.96v1.04M240.2 101.63h5M490.07 107.39h4.93M273.52 78.59h3M460 93.48h3M431.26 103.12v12.88M280.35 74.93v8M313.44 105.12v10.88M369.17 101.18v5M389.01 110.86v5.14M450 102.54h30M321.92 84.91h30M317.97 106.86v9.14M237.72 109.68h12M379.58 91.19v24.81M456.26 111.57v4.43M308.56 94.57h3M355.72 80.76v5M220.83 98.13h20M335.1 74.68v8M315.16 113.81v2.19M246.06 95.58v3M377.27 100.78h8M311.9 74.56v12M381.71 102.35h20M258.45 105.14v10.86M493.24 114.36h1.76M229.44 106.62h30M385.87 104.27h5M384.83 108.39h12M279.77 97.03v5M333.17 106.91h5M304.73 84.65v12M336.88 107.83h8M389.59 87.45h12M384.38 101.69h8M282.47 90.17v3M466.27 106.93v5M295.27 98.46h30M480.29 101.55v8M366.44 109.88v5M295.67 80.41v12M241.21 111.43v4.57M217.57 111.87v4.13M445.83 82.29h30M213.98 109.25v6.75M359.29 85.11v5M334.34 97.4h12M234.05 94.64h12M372.88 104.85v5M332.73 97.63h30M332.06 91.88h30M384.3 100.72h3M203.99 104.93v8M218.66 94.34h5M409.05 100.26h8M391 88.34v20M468.26 85.93h8M358.98 108.72h8M340.59 88.02v8M295.17 82.55v12M290.92 87.32h8M486.69 77.68h3M359.06 91.05h20M281.62 74.26v5M334.89 106.17v3M467.5 99.69h20M395.48 102.94h30M202.04 100.61v15.39M220.92 81.61h3M220.68 113.08h3M440.9 107.03v8.97M453.05 81.76h3M321.36 100.95h3M349.26 108.64v7.36M470.18 92.75v3M371.13 115.71v0.29M335.01 91.32h3M334.02 111.62h30M191.46 102.72v3M451.83 83.17h3M195.42 104.21h5M416.98 112.76v3.24M407.63 109.93v6.07M279.41 97.41h12M474.37 84.67v3M193.48 74.62v30M378.56 90.34v8M240.63 110.16v5.84M286.47 113.85h30M396.45 80.09h3M386.69 100.45h12M427.32 93.02v8M362.88 86.28v3M388.54 107.68h20M374.78 115.05v0.95M284.12 92h5M398.87 99.27v5M276.41 74.07h8M237.97 112.67h3M232.9 111.41h20M487.49 107.48v8.52M468.69 88.57v3M337.85 90.03v25.97M261.38 99.49h30M406.04 112.89v3.11M431.46 93.31v3M298.31 76.63v12M463.56 111.17h20M344.38 82.48h5M245.11 103.44v8M299.46 106.74h5M471.4 94.72h3M331.35 77.43v8M295.2 95.82h3M252.42 110.57h20M362.99 84.99h8M478.68 106.22v9.78M267.47 75.59v5M305.35 75.16v3M455.55 93.25v3M385.15 112.73v3.27M268.44 97.71h30M470.87 95.27h5M238.72 114.56h30" stroke="#777" stroke-width="0.4" fill="none" opacity="0.3"/><path d="M187.16 163.08h8M202.59 121.11h3M201.4 252.08h12M190.34 254.91v5M194.96 224.83h21.04M195.72 163.29h3M197.39 197.21v5M212.77 202.09v5M190.71 269.24v3M212 279.52v5M214.74 286.37v12M204.85 199.23h8M193.02 137.27h8M192.65 126.44h23.35M212.68 196.77h3.32M198.35 144.65v8M194.9 263.96h8M195.54 282.18h3M201.4 232.1v30M202.8 269.69h3M192.05 183.03v8M213.75 133.95h2.25M190.87 269.15h8M205.19 197.35h10.81M190.2 116.35h20M196.8 123.46h12M203.14 141.41v5M192.91 148.32h20M188.62 227.97v12M191.26 141.22v30M210.35 223.26h5M206.77 211.6v30M201.55 179.97v8M211.94 206.72h3M208.89 140.52h7.11M191.58 269.02h8M207.07 221.79h3M213.96 294.25h2.04M207.44 266.24v8M212.04 222.04h3M189.23 250.49v12M201.92 214.87h3M188.66 229.91h5M193.51 266.36h3M213.79 251.93h2.21M203.98 222.07h12.02M199.33 180.53v3M187.36 138.64v12M208.85 136.25h3M190.11 224.89h5M203.19 253.37v5M186.56 232.84h29.44M211.19 212.71v12M187.56 182.84h12M196.05 196.15v20M213.38 265.97h2.62M201.52 292.25h8M198.66 232.41h8M191.62 175.68v5M186.62 141.65v12M214.11 232.51h1.89M205.25 164.9v30M204.85 264.36v3M193.52 211.74h12M187.18 136.8v8M189.61 225.35v20M188.53 224.61h5M201.35 278.88v12M194.22 251.41v30M211.19 228.23h4.81M197.6 216.94h8M202.44 228.76v12M186.93 177.39v5M197.5 223.77v3M190.87 291.18v8M200.74 168.41h5M209.16 145.18v3M196.44 237.02h19.56M199.2 251.32v3M215.68 240.69h0.32M206.05 141.82v5M211.5 267.1h4.5M211.69 285.65h4.31M204.92 232.31h11.08M212.12 116.8v20M200.94 293.14h15.06M211.5 167.39v20M197.39 199.22h12M196.58 180.94v20M197.54 175.25v30M200.99 197.7v5M210.09 196.16v12M188.64 285.31v8M204.24 160.65h8M198.79 283.55h3M193.7 280.84v8M209.2 215.08v12M201.52 242.08h12M187.22 240.43v12M206.29 212.65h3M201.03 235.33h14.97M191.65 193.51h12M204.74 299.29v0.71M208.39 132.97h7.61M215.35 267.99h0.65M205.68 170.27v8M215.71 279.42v12M201.72 266.17v5M191.64 149.56v30M189.2 220.86v30M187.27 191.7h3M206.72 116.72h8M188.95 118.84h3M200.94 217.8v8M212.87 210.64v5M198.33 138.36v5M201.28 121.34h3M201.67 267.46h14.33M210.01 235.62v30M195.68 247.64h8" stroke="#777" stroke-width="0.4" fill="none" opacity="0.28"/><path d="M193.95 176.06h20M213 175.98h3M296.86 175.32h3M264.42 169.99h3M260.44 168.78v3M287.91 170.86h20M296.42 181.67h3M236.78 177.5h5M237.83 177.39v3M219.21 168.78h8M190.92 180.12v1.88M203.79 174.54h12M268.15 181.38v0.62M232.15 169.92h5M231.34 172.97v8M230.97 168.49h30M213.56 174.72v5M246.05 178.72h5M232.35 177.56v4.44M259.69 170.76v11.24M217.27 173.24v5M309.75 175.54v6.46M234.16 169.94v12.06M205.06 178.01v3.99M255.11 170.33h12M276.19 168.32h3M200.32 168.83h5M269.53 167.74v14.26M286.62 178.14h5M227.35 169.62v5M237.88 171.69v10.31M295.93 179.78v2.22M211.17 171.87v10.13M297.63 166.4v15.6M219.81 179.55v2.45M201.72 170.66v8M278.09 177.4h3M263.02 172.89h8M278.6 174.84v7.16M211.56 179.43h20M252.49 180.81v1.19M231.88 166.02h30M195.16 179.67v2.33M306.9 176.9v3M215.22 180.63v1.37M240.07 177.9v4.1M216.5 174.44v7.56M240.88 180.88v1.12M272.61 179.42h30M196.52 177.17v4.83M291.59 178.45v3.55M195.24 177.24h20M255.57 181.51h30M221.23 181.42h5M239.4 169.22h8M272.35 173.78h12M219.01 174.25h12M266.91 177.17v4.83M207.03 175.01v6.99M204.16 172.79v5" stroke="#777" stroke-width="0.4" fill="none" opacity="0.28"/><path d="M287.92 250.84v1.16M278.05 212.2h8M260.63 246.17h8M421.9 221.09h3M359.04 227.87h8M267.6 196.61h12M425.7 250.89h20M408.05 249.58h12M383.05 196.46v3M403.8 248.37v3.63M410 200.38h30M439.74 243.02h8M485.7 225.42h9.3M442.23 242.5v9.5M342.95 232.25h8M340.29 226.86v8M312.12 199.23v3M403.91 241.91h30M262.38 208.12h12M288.58 212.78v20M284.76 208.74h5M487.6 201.02v3M367.45 208.22h8M456 243.9h20M319.4 233.05v18.95M468.2 199.51v3M452.39 246.62h5M251.03 241.03h30M297.88 200.76v8M354.95 225.94v26.06M488.72 249.86h6.28M448.38 236.48v8M322.77 227.98h8M408.6 212.76v8M405.27 243.49v5M359.6 200.77v30M385.94 248.82v3.18M388.38 218.2h3M487.29 207.36h7.71M461.23 210.2h3M414.21 235.71v5M305.51 228.07v3M472.77 227.74v12M446.08 203.52v20M425.08 238.39v3M485.29 224.85v12M346.03 205.59v5M439.87 203.66h20M308.04 216.85v3M484.13 221.74v3M354.36 245.76v6.24M299.39 202.42v30M291.16 237.74v8M430.34 196.65h8M341.39 237.29v8M260.66 229.81h3M330.2 229.77v3M415.43 210.26v5M255.21 251.37h12M255.13 202.18h8M385.79 212.24v30M454.87 228.95v8M418.93 241.26h12M333.88 204.45h20M257.75 242.88h3M450.48 234.05v12M487.04 234.8h7.96M463.89 230.21h3M379.42 213.43v5M260.7 205.5v8M331.19 222.23h8M332.2 223.07h5M362.55 251.24v0.76M428.11 204.04h12M372.5 210.68v20M393.18 203.79h30M387.35 239.17v5M405.11 231.54v8M444.3 209.33v5M324.48 238.75h30M459.03 209.73v20M331.93 235.44h30M492.16 222.96v8M448.26 251.81h5M251.77 244.77h12M347.04 239.25v5M285.23 236.31v8M385.06 248.5h8M296.61 247.79h20M392.22 251.3v0.7M419.12 236.39v3M328.22 205.81v8M435.83 231.08v5M303.49 218.38v5M319.25 224.11h3M429.8 249.94h20M267.99 241.72h20M283.48 206.54v20M253.68 214.08h3M330.05 237.96h30M399.4 240.82h5M351.5 198.55v30M440.11 251.32h12M363.53 196.76v8M491.94 199.14v20M454.56 204.77h3M284.95 238.96h3M338.62 215.27v30M385.97 232.81v19.19M306.35 230.65h30M257.75 232.25v19.75M489.46 221.38h5.54M379.76 211.34h8M366.56 232.7h8M404.08 218.45v3M403.03 202.84v20M386.04 206.18h20M286.58 205.94v30M440.88 225.6v8M309.43 251.01h12M473.53 246.46h12M329.34 246.6v3M253.78 241.18v10.82M335.92 208.77h12M475.19 248.92v3.08M257.52 197.16h30M306.69 207.38v12M323.12 251.68v0.32M443.75 222.73v8M283.45 212.8h3M368.96 245.89h5M399.51 249.58v2.42M466.3 207.75h28.7M441.05 244.35h5M284.25 248.43h30M277.33 250.56h3M324.16 224.15h8M291.34 234.24h3M407.33 233.26v12M490.01 197.84h4.99M403.7 196.86v5M306.75 220.11v3M261.84 246.06v3M279.51 223.29v5M250.63 208.54h20M430.86 224.04v3M455.7 249.61h3M302.71 250.18v1.82M316.88 205.92h8M486.75 207h3M386.37 216.31h3M260.14 221.41v8M419.12 251.01v0.99M347.82 213.82h12M287.05 238.61v12M470.03 231.56v5M476.94 210.26v20M492.8 242.23h2.2M456.55 239.9h30M420.08 214.16h30M413.66 221.51h20M432.82 243.79h20M383.81 217.27v30M463.01 215.89h3M378.93 230.32v21.68M267.64 240.65h30M400.07 210.84v12M335.21 229.01h20M284.81 247.93h20M300.19 205.47h8M292.23 242.03h12M482.1 243.92v8.08M260.6 217.35h12M287.69 210.08h3M412.44 225.26h8M271.56 218.15v12M360.08 222.79v5M286.72 234.09h8M411.76 230.87h20M343.38 196.99h5M313.62 229.07v8M317.28 214.14h5M357.33 225.41v12M299.41 219.7v8M341.05 198.46h12M260.23 238.17h12M398.82 210.38h5M391.78 247.79v4.21M458.67 228.49v3M330.72 199.96h12M378.82 223.81v28.19M256.27 229.2v12M421.73 220.42h12M265.95 218.27v5M452.04 233.54h30M382.71 247.84v4.16M438.46 239.11h3M457.73 227.98h3M271.62 238.19h20M451.88 207.19h8M263.42 234.7v12M284.35 218.79v3M285.65 214.72v20M295.61 226.18h20M326.69 210.28v8M375.19 219.53h3M310.89 217.29v12M312.99 207.31h3M409.8 248.22h30M393.03 216.48h8M475.25 227.14v3M252.08 199.79v20M258.65 208.3h12M424.09 240.94v11.06M349.47 236.76v5M264.14 220.29h30M283.56 245.28h20M253.48 236.39v15.61M372.06 233.74v18.26M446.47 225.93h5M474.88 207.59h3M299.4 201.13h3M411.43 210.43v12M287.94 199.17h30M289.24 220.99v5M445.32 235.59h30M473.42 214.17h5M445.85 250.89v1.11M330.27 204.74h8M383.7 201.24h12M295.07 214.66h12M452.98 202.84v5M480.16 225.47h8M254.35 239.76h3M318.6 212.97v20M271.67 203.82v8M437.44 246.64v5.36M257.94 229.53h3M481.38 232.77h3M335.81 222.94v8M293.82 240.11v8M427.3 221.48v30M443.06 229.35h12M259.7 228.44v12M282.33 228.37h8M428.27 237.12h8M480.68 214.57v30M367.66 204.35h3M308.49 204.57v8M278.81 222.2v5M260.31 210.35h5M386.05 251.33v0.67M381.02 209.42h3M481.11 223.35v28.65M418.79 208.84h5M314.72 197.73v12M276.85 227.91h3M391.74 209.1v20M375.67 241.87h5M332.64 201.49v5M419.5 241.62h8M435.99 229.14h5M480.38 219.07h12M443.21 204.29v20M287.05 215.28h5M476.6 234.42v17.58M494.34 240.33h0.66M378.76 214.48v3M405.92 207.15h30M339.57 219.04v30M335.55 205.08v12M432.66 203.56v30M471.67 237.72v14.28M356.65 242.21h20M485.43 225.77h9.57M487.27 240.1v8M457.63 209.45h20M307.98 223.59v28.41M262.3 233.16v12M417.3 248.74h12M271.34 232.54v8M471.51 219.89h8M369.82 196.92v3M366.47 219.01h8M332.18 207.96h8M364.16 197.82h8M316.4 235.27h12M381.85 209.54v5M260.17 242.08h5M331.5 204.45h5M468.01 230.17h12M328.03 245.07h20M453.5 205.08h20M459.11 201.81h5M448.3 210.05v8M491.21 237.14v14.86M283.08 238.19v8M268.6 230.94h12M322.48 213.1v30M342.09 225.24h30M410.38 223.63v28.37M263.96 242.75h30M342.41 213.42v20M428.57 237.99v3M368.21 196.4h8M393.95 228.3v3M292.53 229.02v8M309.23 239.28h3M489.65 232.33v19.67M370.78 250.58v1.42M317.98 205.06h20M261.84 225.81h5M447.82 199.45v8M291.82 213.47v3M488.01 239.52v8M295.85 213.33h12M328.62 220.54v3M338.64 213.9h12M299.97 246.89v5.11M350.02 204.95h8M318.33 226v26M414.3 238.15h8M425.74 218.15v8M279.67 221.18h3M452.53 227.72v8M338.15 250.91v1.09M273.62 229.75v12M424.39 248.08v3.92M486.99 231.5h8.01M348.94 243.13v8.87" stroke="#777" stroke-width="0.4" fill="none" opacity="0.3"/><path d="M471.8 189.96h8M462.8 271.76v20M472.37 284h8M469.23 94.51h12M455.13 206.24v5M471.95 206.22v8M483.54 267.66h5M483.21 245.91h13.79M466.87 87.36h30M467.07 222.44h29.93M492.64 236.64v20M476.38 213.69h5M470.11 205.18h3M484.38 95.88h8M474.22 248.08h12M457.48 178.05v20M456.36 198.33h12M464.43 218.48v8M477.29 130.66v20M463.78 264.67v20M456.28 251.18v3M466.26 162.37h30M458.76 104.72v12M479.73 129.78v3M495.38 152.47h1.62M475.07 109.42v12M491.98 215.89h5M462.98 168.63v8M458.21 277.43h3M463.3 234.82v5M463.45 246.22v8M494.83 282.39v17.61M455.66 157.86h12M491.27 238.84v30M478.43 218.07v20M496.64 147.26v3M484.04 172.62v3M474.11 102.47v3M470.28 274.54v12M493.29 254.84v12M496 266.99v20M476.33 126.04v8M494.38 122.48v8M496.18 176.08v30M461.76 277.2h12M455.54 127.09v20M456.16 258.9h3M456.82 275.58v20M491.06 154.46v20M475.35 220.68h5M463.59 158.01h3M491.86 287.86h5.14M479.59 220v30M486.99 205.44h10.01M474.77 168.05v30M496.58 237.7v12M474.81 111.19v12M457.64 132.49h5M478.78 243.95v5M486.15 88.42v3M463.41 80.21h12M465.1 284.75v5M456.86 202.36v20M466.04 113.75h3M495.17 247.09h1.83M461.02 196.4v20M459.44 253.13v12M455.1 267.31v20M458.6 203.56v20M488.58 97.08v3M480.83 180.56h16.17M486.29 85.3v20M474.24 106.87v30M483.21 296.33v3.67M477.94 157.56h3M465.04 273.9h3M466.51 148.03h8M480.47 295.29h5M458.15 105.01v30M463.98 164.78v12M479.13 126.38v30M458.35 84.74v3M456.29 229.79v12M457.3 216.12h8M484.67 135.58v8M456.19 164.1h5M496.2 223.88v12M490.15 298.74h6.85M465.49 170.73h3M477.85 158.49h8M487.38 132.53v8M477.34 103.07h8M469.15 94.14v3M461.77 196.8v30M465.29 281.8v18.2M495.63 99.72h1.37M486.71 274.85h10.29M485.06 297.73v2.27M480.8 116.62h16.2M471.42 155.18h3M491.38 221.05v20M482.02 210.05h14.98M457.85 166.05h3M457.81 83.2h8M478.41 238.94v30M483.88 140.16h12M459.2 146.7v12M462.28 297.65v2.35M474.35 150.99h5M489.81 129.78v5M483.17 141.08v3M458.05 99.69v30M468.1 137.87h3M459.08 296.19h12M458.74 208.41h3M455.62 267.56v5M469.93 199.28h5M488.1 135.36h8M482.85 271.93h5M470.99 248.25v5M492.24 247.78h4.76M492.5 137.84h3M482.87 264.01h5M474.85 187.23h3M484.88 100.62h3M493.77 280.17h3.23M459.97 94.94h8M465.04 154.48h3M464.34 243.73v20M497 284.25h0M494.64 195.46v5M476.44 149.58h3M466.14 283.3v12M460.53 257.48h30M463.62 225.85h8M484.55 184.49h8M455.46 223.65v20M482.03 231.12v3M464.83 189.78h20M470.31 165.22v8M491.01 160.9h5.99M464.53 211.55h30M464.11 87.9v12M490.25 146.98v8M494.46 168.44h2.54M470.12 186.53h3M476.49 288.63v11.37M463.92 279.32v5M463.48 299.91h12M495.95 246.27h1.05M469.41 227.11v3M487.34 132.46h3M489.09 213.46v12M484.89 110.29v5M466.5 171.53v5M460.68 150.67h3M472.76 97.65v12M465.63 205.44v5M495.19 139.17h1.81M457.17 281.25v3M492.97 95.52v5M472.64 196.46v8M482.44 192.82h3M475.98 196.69v30M492.75 291.72h4.25M479.87 135.74h12M484.07 136.24h5M495.16 136.64v3M457.4 230.12v5M488.58 82.11h8.42" stroke="#777" stroke-width="0.4" fill="none" opacity="0.28"/><path d="M422.04 275.12h5M288.9 275.42h12M486.14 266.85v9.15M464.53 260.65v15.35M305.93 265.89h8M257.88 260.3h8M345.51 273.69h20M213.73 267.65v8M298.48 270.09h12M437.47 269.86v6.14M239.09 263.39v12.61M444.84 268.84h30M370.61 271.38v4.62M281.76 261.12v3M449.14 273.5h20M463.61 267.91v8.09M273.09 257.4v3M216.16 260.98h5M270.87 270.22h5M224.84 274.69h5M292.28 266.45h8M417.99 273.5h8M215.6 259.25h3M205.96 275.47v0.53M412.28 262.83h12M374.58 275.79v0.21M445.88 264.46v8M259.97 271.94h12M368.8 259.83h30M332.87 272.29h20M392.35 267.3h5M474.75 260.32h20.25M419.01 266.03v9.97M410.95 256.62h30M346.4 260.23v15.77M377.49 274.04v1.96M493.58 273.97h1.42M259.02 271.43v4.57M482.41 271.89h8M349.49 262.13h20M279.51 262.5h5M474.16 273.55h12M287.78 271.7v4.3M300.67 270.33h20M212.86 269.18h20M337.48 261.05v14.95M327.14 273.05h30M405.08 266.7v9.3M378.72 258.1h12M471.35 258.66h20M332.09 268.39v7.61M449.99 269.21h8M216.14 263.88v3M414.48 256.64h30M222.5 257.41v5M374.12 264.13h5M423.31 264.52h8M461.79 265.16h20M269.17 270.81v5.19M334.19 275.13v0.87M421.42 263.86v5M229.54 259.87h12M438.09 262.78h5M346.41 272.28h30M450.63 262.42v5M448.84 269.65h30M440.61 273.26h20M430.17 261.09v3M480.37 262.54v8M271.12 263.32v8M310.3 261.68h5M396.12 271.13v4.87M264.53 274.39v1.61M412.06 271.1h8M390.06 263.61h8M354.43 262.73h3M447.38 272.96v3.04M481.17 273.46v2.54M204.64 273.4v2.6M478.58 265.4v10.6M455.3 260.28h8M209.53 258.37v3M197.8 263.4h20M416.04 259.97v12M284.9 265.53h12M382.85 273.89h12M295.21 272.78v3.22M364.85 258.12v17.88M463.28 257.37h12M458.54 269.31h5" stroke="#777" stroke-width="0.4" fill="none" opacity="0.25"/><path d="M192 78L488 78" stroke="#999" stroke-width="0.4" opacity=".4"/><path d="M192 82L488 82" stroke="#999" stroke-width="0.4" opacity=".4"/><path d="M192 86.5L488 86.5" stroke="#999" stroke-width="0.4" opacity=".4"/><path d="M192 114L488 114" stroke="#999" stroke-width="0.4" opacity=".4"/><path d="M192 172.5L488 172.5" stroke="#999" stroke-width="0.4" opacity=".4"/><path d="M192 176L488 176" stroke="#999" stroke-width="0.4" opacity=".4"/><path d="M192 222L488 222" stroke="#999" stroke-width="0.4" opacity=".4"/><path d="M192 226L488 226" stroke="#999" stroke-width="0.4" opacity=".4"/><path d="M192 246L488 246" stroke="#999" stroke-width="0.4" opacity=".4"/><path d="M192 262L488 262" stroke="#999" stroke-width="0.4" opacity=".4"/><path d="M192 272L488 272" stroke="#999" stroke-width="0.4" opacity=".4"/><path d="M192 78L192 298" stroke="#999" stroke-width="0.4" opacity=".3"/><path d="M215 78L215 298" stroke="#999" stroke-width="0.4" opacity=".3"/><path d="M476 78L476 298" stroke="#999" stroke-width="0.4" opacity=".3"/><path d="M488 78L488 298" stroke="#999" stroke-width="0.4" opacity=".3"/><path d="M494 78L494 298" stroke="#999" stroke-width="0.4" opacity=".3"/><path d="M246 78L246 116" stroke="#999" stroke-width="0.4" opacity=".35"/><path d="M246 198L246 250" stroke="#999" stroke-width="0.4" opacity=".35"/><path d="M282 78L282 116" stroke="#999" stroke-width="0.4" opacity=".35"/><path d="M282 198L282 250" stroke="#999" stroke-width="0.4" opacity=".35"/><path d="M330 78L330 116" stroke="#999" stroke-width="0.4" opacity=".35"/><path d="M330 198L330 250" stroke="#999" stroke-width="0.4" opacity=".35"/><path d="M352 78L352 116" stroke="#999" stroke-width="0.4" opacity=".35"/><path d="M352 198L352 250" stroke="#999" stroke-width="0.4" opacity=".35"/><path d="M396 78L396 116" stroke="#999" stroke-width="0.4" opacity=".35"/><path d="M396 198L396 250" stroke="#999" stroke-width="0.4" opacity=".35"/><path d="M420 78L420 116" stroke="#999" stroke-width="0.4" opacity=".35"/><path d="M420 198L420 250" stroke="#999" stroke-width="0.4" opacity=".35"/><path d="M452 78L452 116" stroke="#999" stroke-width="0.4" opacity=".35"/><path d="M452 198L452 250" stroke="#999" stroke-width="0.4" opacity=".35"/><path d="M152 67.8L461.8 67.8" stroke="#7fe07f" stroke-width="0.55" /><path d="M152 71.4L461.8 71.4" stroke="#7fe07f" stroke-width="0.55" /><path d="M152 309.7L461.8 309.7" stroke="#7fe07f" stroke-width="0.55" /><path d="M152 313.3L461.8 313.3" stroke="#7fe07f" stroke-width="0.55" /><path d="M126.4 116L126.4 288.5" stroke="#7fe07f" stroke-width="0.55" /><path d="M129.4 116L129.4 288.5" stroke="#7fe07f" stroke-width="0.55" /><path d="M500.8 116L500.8 288.5" stroke="#7fe07f" stroke-width="0.55" /><path d="M153.4 64.3L153.4 316.1" stroke="#4a4a4a" stroke-width="0.36" stroke-dasharray="4.600 .9 .7 .9"/><circle cx="153.4" cy="62.8" r="1.5" fill="#fbfbfb" stroke="#444" stroke-width="0.4"/><circle cx="153.4" cy="317.6" r="1.5" fill="#fbfbfb" stroke="#444" stroke-width="0.4"/><path d="M175.7 64.3L175.7 316.1" stroke="#4a4a4a" stroke-width="0.36" stroke-dasharray="4.600 .9 .7 .9"/><circle cx="175.7" cy="62.8" r="1.5" fill="#fbfbfb" stroke="#444" stroke-width="0.4"/><circle cx="175.7" cy="317.6" r="1.5" fill="#fbfbfb" stroke="#444" stroke-width="0.4"/><path d="M202.8 64.3L202.8 316.1" stroke="#4a4a4a" stroke-width="0.36" stroke-dasharray="4.600 .9 .7 .9"/><circle cx="202.8" cy="62.8" r="1.5" fill="#fbfbfb" stroke="#444" stroke-width="0.4"/><circle cx="202.8" cy="317.6" r="1.5" fill="#fbfbfb" stroke="#444" stroke-width="0.4"/><path d="M236.8 64.3L236.8 316.1" stroke="#4a4a4a" stroke-width="0.36" stroke-dasharray="4.600 .9 .7 .9"/><circle cx="236.8" cy="62.8" r="1.5" fill="#fbfbfb" stroke="#444" stroke-width="0.4"/><circle cx="236.8" cy="317.6" r="1.5" fill="#fbfbfb" stroke="#444" stroke-width="0.4"/><path d="M271 64.3L271 316.1" stroke="#4a4a4a" stroke-width="0.36" stroke-dasharray="4.600 .9 .7 .9"/><circle cx="271" cy="62.8" r="1.5" fill="#fbfbfb" stroke="#444" stroke-width="0.4"/><circle cx="271" cy="317.6" r="1.5" fill="#fbfbfb" stroke="#444" stroke-width="0.4"/><path d="M304.9 64.3L304.9 316.1" stroke="#4a4a4a" stroke-width="0.36" stroke-dasharray="4.600 .9 .7 .9"/><circle cx="304.9" cy="62.8" r="1.5" fill="#fbfbfb" stroke="#444" stroke-width="0.4"/><circle cx="304.9" cy="317.6" r="1.5" fill="#fbfbfb" stroke="#444" stroke-width="0.4"/><path d="M339.1 64.3L339.1 316.1" stroke="#4a4a4a" stroke-width="0.36" stroke-dasharray="4.600 .9 .7 .9"/><circle cx="339.1" cy="62.8" r="1.5" fill="#fbfbfb" stroke="#444" stroke-width="0.4"/><circle cx="339.1" cy="317.6" r="1.5" fill="#fbfbfb" stroke="#444" stroke-width="0.4"/><path d="M373.1 64.3L373.1 316.1" stroke="#4a4a4a" stroke-width="0.36" stroke-dasharray="4.600 .9 .7 .9"/><circle cx="373.1" cy="62.8" r="1.5" fill="#fbfbfb" stroke="#444" stroke-width="0.4"/><circle cx="373.1" cy="317.6" r="1.5" fill="#fbfbfb" stroke="#444" stroke-width="0.4"/><path d="M406.9 64.3L406.9 316.1" stroke="#4a4a4a" stroke-width="0.36" stroke-dasharray="4.600 .9 .7 .9"/><circle cx="406.9" cy="62.8" r="1.5" fill="#fbfbfb" stroke="#444" stroke-width="0.4"/><circle cx="406.9" cy="317.6" r="1.5" fill="#fbfbfb" stroke="#444" stroke-width="0.4"/><path d="M434.4 64.3L434.4 316.1" stroke="#4a4a4a" stroke-width="0.36" stroke-dasharray="4.600 .9 .7 .9"/><circle cx="434.4" cy="62.8" r="1.5" fill="#fbfbfb" stroke="#444" stroke-width="0.4"/><circle cx="434.4" cy="317.6" r="1.5" fill="#fbfbfb" stroke="#444" stroke-width="0.4"/><path d="M460.7 64.3L460.7 316.1" stroke="#4a4a4a" stroke-width="0.36" stroke-dasharray="4.600 .9 .7 .9"/><circle cx="460.7" cy="62.8" r="1.5" fill="#fbfbfb" stroke="#444" stroke-width="0.4"/><circle cx="460.7" cy="317.6" r="1.5" fill="#fbfbfb" stroke="#444" stroke-width="0.4"/><path d="M122.9 116.8L507 116.8" stroke="#4a4a4a" stroke-width="0.36" stroke-dasharray="4.600 .9 .7 .9"/><circle cx="121.4" cy="116.8" r="1.5" fill="#fbfbfb" stroke="#444" stroke-width="0.4"/><circle cx="508.5" cy="116.8" r="1.5" fill="#fbfbfb" stroke="#444" stroke-width="0.4"/><path d="M122.9 135L507 135" stroke="#4a4a4a" stroke-width="0.36" stroke-dasharray="4.600 .9 .7 .9"/><circle cx="121.4" cy="135" r="1.5" fill="#fbfbfb" stroke="#444" stroke-width="0.4"/><circle cx="508.5" cy="135" r="1.5" fill="#fbfbfb" stroke="#444" stroke-width="0.4"/><path d="M122.9 160.8L507 160.8" stroke="#4a4a4a" stroke-width="0.36" stroke-dasharray="4.600 .9 .7 .9"/><circle cx="121.4" cy="160.8" r="1.5" fill="#fbfbfb" stroke="#444" stroke-width="0.4"/><circle cx="508.5" cy="160.8" r="1.5" fill="#fbfbfb" stroke="#444" stroke-width="0.4"/><path d="M122.9 172.4L507 172.4" stroke="#4a4a4a" stroke-width="0.36" stroke-dasharray="4.600 .9 .7 .9"/><circle cx="121.4" cy="172.4" r="1.5" fill="#fbfbfb" stroke="#444" stroke-width="0.4"/><circle cx="508.5" cy="172.4" r="1.5" fill="#fbfbfb" stroke="#444" stroke-width="0.4"/><path d="M122.9 204.3L507 204.3" stroke="#4a4a4a" stroke-width="0.36" stroke-dasharray="4.600 .9 .7 .9"/><circle cx="121.4" cy="204.3" r="1.5" fill="#fbfbfb" stroke="#444" stroke-width="0.4"/><circle cx="508.5" cy="204.3" r="1.5" fill="#fbfbfb" stroke="#444" stroke-width="0.4"/><path d="M122.9 240.4L507 240.4" stroke="#4a4a4a" stroke-width="0.36" stroke-dasharray="4.600 .9 .7 .9"/><circle cx="121.4" cy="240.4" r="1.5" fill="#fbfbfb" stroke="#444" stroke-width="0.4"/><circle cx="508.5" cy="240.4" r="1.5" fill="#fbfbfb" stroke="#444" stroke-width="0.4"/><path d="M122.9 252.9L507 252.9" stroke="#4a4a4a" stroke-width="0.36" stroke-dasharray="4.600 .9 .7 .9"/><circle cx="121.4" cy="252.9" r="1.5" fill="#fbfbfb" stroke="#444" stroke-width="0.4"/><circle cx="508.5" cy="252.9" r="1.5" fill="#fbfbfb" stroke="#444" stroke-width="0.4"/><path d="M122.9 269.3L507 269.3" stroke="#4a4a4a" stroke-width="0.36" stroke-dasharray="4.600 .9 .7 .9"/><circle cx="121.4" cy="269.3" r="1.5" fill="#fbfbfb" stroke="#444" stroke-width="0.4"/><circle cx="508.5" cy="269.3" r="1.5" fill="#fbfbfb" stroke="#444" stroke-width="0.4"/><path d="M122.9 288.2L507 288.2" stroke="#4a4a4a" stroke-width="0.36" stroke-dasharray="4.600 .9 .7 .9"/><circle cx="121.4" cy="288.2" r="1.5" fill="#fbfbfb" stroke="#444" stroke-width="0.4"/><circle cx="508.5" cy="288.2" r="1.5" fill="#fbfbfb" stroke="#444" stroke-width="0.4"/><text x="162.55" y="70.6" font-size="1.7" fill="#3a3" font-weight="700" >8400</text><text x="162.55" y="309" font-size="1.7" fill="#3a3" font-weight="700" >8400</text><text x="187.25" y="70.6" font-size="1.7" fill="#3a3" font-weight="700" >8400</text><text x="187.25" y="309" font-size="1.7" fill="#3a3" font-weight="700" >8400</text><text x="217.8" y="70.6" font-size="1.7" fill="#3a3" font-weight="700" >8400</text><text x="217.8" y="309" font-size="1.7" fill="#3a3" font-weight="700" >8400</text><text x="251.9" y="70.6" font-size="1.7" fill="#3a3" font-weight="700" >8400</text><text x="251.9" y="309" font-size="1.7" fill="#3a3" font-weight="700" >8400</text><text x="285.95" y="70.6" font-size="1.7" fill="#3a3" font-weight="700" >8400</text><text x="285.95" y="309" font-size="1.7" fill="#3a3" font-weight="700" >8400</text><text x="320" y="70.6" font-size="1.7" fill="#3a3" font-weight="700" >8400</text><text x="320" y="309" font-size="1.7" fill="#3a3" font-weight="700" >8400</text><text x="354.1" y="70.6" font-size="1.7" fill="#3a3" font-weight="700" >8400</text><text x="354.1" y="309" font-size="1.7" fill="#3a3" font-weight="700" >8400</text><text x="388" y="70.6" font-size="1.7" fill="#3a3" font-weight="700" >8400</text><text x="388" y="309" font-size="1.7" fill="#3a3" font-weight="700" >8400</text><text x="418.65" y="70.6" font-size="1.7" fill="#3a3" font-weight="700" >8400</text><text x="418.65" y="309" font-size="1.7" fill="#3a3" font-weight="700" >8400</text><text x="445.55" y="70.6" font-size="1.7" fill="#3a3" font-weight="700" >8400</text><text x="445.55" y="309" font-size="1.7" fill="#3a3" font-weight="700" >8400</text><text x="127" y="127.9" font-size="1.7" fill="#3a3" font-weight="700" transform="rotate(-90 128 125.9)">5400</text><text x="499.5" y="127.9" font-size="1.7" fill="#3a3" font-weight="700" transform="rotate(-90 500 125.9)">5400</text><text x="127" y="149.9" font-size="1.7" fill="#3a3" font-weight="700" transform="rotate(-90 128 147.9)">5400</text><text x="499.5" y="149.9" font-size="1.7" fill="#3a3" font-weight="700" transform="rotate(-90 500 147.9)">5400</text><text x="127" y="168.6" font-size="1.7" fill="#3a3" font-weight="700" transform="rotate(-90 128 166.6)">5400</text><text x="499.5" y="168.6" font-size="1.7" fill="#3a3" font-weight="700" transform="rotate(-90 500 166.6)">5400</text><text x="127" y="190.35" font-size="1.7" fill="#3a3" font-weight="700" transform="rotate(-90 128 188.35)">5400</text><text x="499.5" y="190.35" font-size="1.7" fill="#3a3" font-weight="700" transform="rotate(-90 500 188.35)">5400</text><text x="127" y="224.35" font-size="1.7" fill="#3a3" font-weight="700" transform="rotate(-90 128 222.35)">5400</text><text x="499.5" y="224.35" font-size="1.7" fill="#3a3" font-weight="700" transform="rotate(-90 500 222.35)">5400</text><text x="127" y="248.65" font-size="1.7" fill="#3a3" font-weight="700" transform="rotate(-90 128 246.65)">5400</text><text x="499.5" y="248.65" font-size="1.7" fill="#3a3" font-weight="700" transform="rotate(-90 500 246.65)">5400</text><text x="127" y="263.1" font-size="1.7" fill="#3a3" font-weight="700" transform="rotate(-90 128 261.1)">5400</text><text x="499.5" y="263.1" font-size="1.7" fill="#3a3" font-weight="700" transform="rotate(-90 500 261.1)">5400</text><text x="127" y="280.75" font-size="1.7" fill="#3a3" font-weight="700" transform="rotate(-90 128 278.75)">5400</text><text x="499.5" y="280.75" font-size="1.7" fill="#3a3" font-weight="700" transform="rotate(-90 500 278.75)">5400</text><path d="M178.39 104.34L178.39 93.65L181.06 87.77L196.21 87.77" stroke="#222" stroke-width="0.45" fill="none" /><path d="M178.92 103.45L181.95 98.1L193.53 98.1" stroke="#222" stroke-width="0.45" fill="none" /><path d="M206.89 92.76L198.88 87.77L214.02 87.77" stroke="#222" stroke-width="0.45" fill="none" /><path d="M233.62 105.23L233.97 92.76L236.29 87.77L251.43 87.77" stroke="#222" stroke-width="0.45" fill="none" /><path d="M310.23 105.23L310.58 92.76L312.9 87.77L328.04 87.77" stroke="#222" stroke-width="0.45" fill="none" /><text x="181.36" y="87.47" font-size="1.8" fill="#111" font-weight="700" textLength="14.14">De110 h-1.20</text><text x="182.25" y="97.8" font-size="1.8" fill="#111" font-weight="700" textLength="10.58">De110 h-1.20</text><text x="199.18" y="87.47" font-size="1.8" fill="#111" font-weight="700" textLength="14.14">De110 h-1.20</text><text x="236.59" y="87.47" font-size="1.8" fill="#111" font-weight="700" textLength="14.14">De110 h-1.20</text><text x="313.2" y="87.47" font-size="1.8" fill="#111" font-weight="700" textLength="14.14">De110 h-1.20</text><path d="M178.39 97.21L178.39 104.34" stroke="#30d8f0" stroke-width="0.7" fill="none" /><path d="M233.62 95.43L233.62 105.23" stroke="#30d8f0" stroke-width="0.7" fill="none" /><path d="M310.23 96.68L310.23 104.87" stroke="#30d8f0" stroke-width="0.7" fill="none" /><rect x="175.72" y="105.23" width="14.25" height="17.82" fill="#dedede" stroke="none" stroke-width="0" opacity=".8"/><path d="M210.1 92.76L210.1 124.83L205.11 125.72" stroke="#4a90e2" stroke-width="0.7" fill="none" /><path d="M208.32 103.45L208.32 109.68" stroke="#4a90e2" stroke-width="0.6" fill="none" /><path d="M214.02 91.87L214.02 137.3L211.35 137.65" stroke="#f2e85a" stroke-width="0.7" fill="none" opacity=".85"/><path d="M217.58 91.87L217.58 135.52" stroke="#f2e85a" stroke-width="0.7" fill="none" opacity=".85"/><path d="M222.93 91.87L222.93 146.21L206.89 147.99" stroke="#f2e85a" stroke-width="0.7" fill="none" opacity=".85"/><path d="M226.49 117.7L226.49 142.64L205.11 144.42" stroke="#f2e85a" stroke-width="0.7" fill="none" opacity=".85"/><path d="M215.8 94.54L215.8 124.83" stroke="#f2e85a" stroke-width="0.7" fill="none" opacity=".85"/><path d="M219.72 94.54L219.72 108.79" stroke="#f2e85a" stroke-width="0.7" fill="none" opacity=".85"/><circle cx="210.1" cy="91.87" r="1.3" fill="#8be28b" stroke="#35d235" stroke-width="0.4"/><circle cx="214.02" cy="91.87" r="1.2" fill="#f7f09a" stroke="#f2e85a" stroke-width="0.4"/><circle cx="217.58" cy="91.87" r="1.2" fill="#f7f09a" stroke="#f2e85a" stroke-width="0.4"/><circle cx="222.93" cy="91.87" r="1.2" fill="#f7f09a" stroke="#f2e85a" stroke-width="0.4"/><circle cx="238.96" cy="96.32" r="1.2" fill="#f7f09a" stroke="#f2e85a" stroke-width="0.4"/><path d="M215.8 116.81L205.11 105.23" stroke="#35d235" stroke-width="0.5" fill="none" /><path d="M215.8 116.81L206.54 107.37" stroke="#35d235" stroke-width="0.5" fill="none" /><path d="M215.8 116.81L208.32 110.22" stroke="#35d235" stroke-width="0.5" fill="none" /><path d="M215.8 116.81L204.22 108.79" stroke="#35d235" stroke-width="0.5" fill="none" /><path d="M215.8 116.81L224.71 108.79" stroke="#35d235" stroke-width="0.5" fill="none" /><path d="M215.8 116.81L228.27 107.01" stroke="#35d235" stroke-width="0.5" fill="none" /><path d="M215.8 116.81L230.95 111.46" stroke="#35d235" stroke-width="0.5" fill="none" /><path d="M215.8 116.81L227.38 110.57" stroke="#35d235" stroke-width="0.5" fill="none" /><path d="M197.1 114.14L203.33 114.14L204.22 124.83L206.89 135.52L211.35 136.41" stroke="#35d235" stroke-width="0.55" fill="none" /><path d="M197.63 123.04L202.44 121.26" stroke="#35d235" stroke-width="0.55" fill="none" /><path d="M165.92 152.44L171.26 152.44L175.72 164.02L175.72 174.71L171.26 175.6" stroke="#35d235" stroke-width="0.55" fill="none" /><path d="M155.23 164.02L197.1 165.8L197.99 160.46" stroke="#35d235" stroke-width="0.55" fill="none" /><path d="M157.9 167.58L197.1 167.58" stroke="#35d235" stroke-width="0.55" fill="none" /><path d="M205.11 144.42L226.49 143.89L226.85 117.7" stroke="#35d235" stroke-width="0.55" fill="none" /><path d="M203.33 148.88L206.89 148.88" stroke="#35d235" stroke-width="0.55" fill="none" /><path d="M199.77 160.46L206.89 167.58L208.68 164.02L246.09 163.13L246.45 158.32L248.76 157.96" stroke="#35d235" stroke-width="0.55" fill="none" /><path d="M148.1 172.93L156.12 172.93L157.9 167.58" stroke="#35d235" stroke-width="0.55" fill="none" /><path d="M206.89 193.42L211.35 194.31L212.24 197.51" stroke="#35d235" stroke-width="0.55" fill="none" /><path d="M187.3 134.09L189.97 142.64L197.1 164.02" stroke="#35d235" stroke-width="0.45" fill="none" /><path d="M189.26 134.8L192.29 144.07L197.99 164.02" stroke="#35d235" stroke-width="0.45" fill="none" /><path d="M191.22 135.52L194.6 145.49L198.88 164.02" stroke="#35d235" stroke-width="0.45" fill="none" /><path d="M193.18 136.23L196.92 146.92L199.77 164.02" stroke="#35d235" stroke-width="0.45" fill="none" /><circle cx="189.97" cy="136.41" r="3.2" fill="none" stroke="#35d235" stroke-width="0.5"/><text x="186.41" y="139.08" font-size="1.7" fill="#2a2" font-weight="700" >DN50</text><text x="185.52" y="143.53" font-size="1.7" fill="#2a2" font-weight="700" >DN50</text><text x="187.3" y="148.88" font-size="1.7" fill="#2a2" font-weight="700" >DN50</text><text x="198.88" y="137.3" font-size="1.7" fill="#2a2" font-weight="700" >DN50</text><text x="199.77" y="121.26" font-size="1.7" fill="#2a2" font-weight="700" >DN50</text><text x="165.92" y="151.55" font-size="1.7" fill="#2a2" font-weight="700" >DN50</text><text x="206.89" y="136.05" font-size="1.7" fill="#2a2" font-weight="700" >DN50</text><text x="204.22" y="167.94" font-size="1.7" fill="#2a2" font-weight="700" >DN50</text><path d="M185.52 150.66L190.86 151.55L192.64 156.89L198.88 157.79" stroke="#3848e0" stroke-width="0.7" fill="none" /><path d="M193.53 157.43L198.88 157.43" stroke="#b030d0" stroke-width="0.9" fill="none" /><path d="M185.52 161.35L192.64 161.35" stroke="#30d8f0" stroke-width="0.8" fill="none" /><rect x="154.34" y="161.35" width="8.02" height="4.45" fill="#faf3a0" stroke="#f2e85a" stroke-width="0.4" opacity=".8"/><path d="M155.23 162.6L192.64 163.31" stroke="#f5b87a" stroke-width="0.6" fill="none" /><path d="M155.23 164.38L192.64 165.09" stroke="#f5b87a" stroke-width="0.5" fill="none" /><path d="M238.96 111.46L333.39 111.46" stroke="#7fe07f" stroke-width="0.55" fill="none" /><path d="M238.96 111.46L238.96 156.89" stroke="#7fe07f" stroke-width="0.5" fill="none" /><path d="M245.73 58.02L245.73 85.63" stroke="#f5b87a" stroke-width="0.55" fill="none" /><path d="M253.22 95.43L253.22 152.44L242.53 154.22L239.85 157.79" stroke="#f5b87a" stroke-width="0.55" fill="none" /><path d="M257.67 95.43L257.67 130.17" stroke="#f5b87a" stroke-width="0.55" fill="none" /><path d="M299.54 95.43L299.54 141.75" stroke="#f5b87a" stroke-width="0.55" fill="none" /><path d="M302.21 95.43L302.21 117.7" stroke="#f5b87a" stroke-width="0.55" fill="none" /><path d="M237.18 96.32L238.07 112.36" stroke="#f5b87a" stroke-width="0.55" fill="none" /><path d="M252.86 95.43L258.2 95.43" stroke="#f5b87a" stroke-width="0.5" fill="none" /><path d="M299.18 95.43L302.74 95.43" stroke="#f5b87a" stroke-width="0.5" fill="none" /><rect x="208.18" y="116.84" width="1" height="1" fill="#c82020" stroke="none" stroke-width="0.4" /><rect x="213.52" y="116.84" width="1" height="1" fill="#c82020" stroke="none" stroke-width="0.4" /><rect x="220.65" y="116.84" width="1" height="1" fill="#c82020" stroke="none" stroke-width="0.4" /><rect x="224.21" y="116.84" width="1" height="1" fill="#c82020" stroke="none" stroke-width="0.4" /><rect x="238.82" y="116.84" width="1" height="1" fill="#c82020" stroke="none" stroke-width="0.4" /><rect x="253.07" y="116.84" width="1" height="1" fill="#c82020" stroke="none" stroke-width="0.4" /><rect x="256.64" y="116.84" width="1" height="1" fill="#c82020" stroke="none" stroke-width="0.4" /><rect x="299.04" y="116.84" width="1" height="1" fill="#c82020" stroke="none" stroke-width="0.4" /><rect x="301.71" y="116.84" width="1" height="1" fill="#c82020" stroke="none" stroke-width="0.4" /><rect x="242.92" y="130.03" width="1" height="1" fill="#c82020" stroke="none" stroke-width="0.4" /><rect x="245.23" y="140.89" width="1" height="1" fill="#c82020" stroke="none" stroke-width="0.4" /><rect x="234.01" y="175.1" width="1" height="1" fill="#c82020" stroke="none" stroke-width="0.4" /><rect x="175.57" y="163.52" width="1" height="1" fill="#c82020" stroke="none" stroke-width="0.4" /><rect x="175.57" y="166.19" width="1" height="1" fill="#c82020" stroke="none" stroke-width="0.4" /><rect x="203.72" y="127.89" width="1" height="1" fill="#c82020" stroke="none" stroke-width="0.4" /><rect x="256.28" y="129.67" width="1" height="1" fill="#c82020" stroke="none" stroke-width="0.4" /><path d="M241.03 113.96L242.53 111.46L244.03 113.96" stroke="#35d235" stroke-width="0.45" fill="none" /><path d="M251.72 113.96L253.22 111.46L254.72 113.96" stroke="#35d235" stroke-width="0.45" fill="none" /><path d="M259.73 113.96L261.23 111.46L262.73 113.96" stroke="#35d235" stroke-width="0.45" fill="none" /><path d="M269.53 113.96L271.03 111.46L272.53 113.96" stroke="#35d235" stroke-width="0.45" fill="none" /><path d="M285.57 113.96L287.07 111.46L288.57 113.96" stroke="#35d235" stroke-width="0.45" fill="none" /><path d="M294.47 113.96L295.97 111.46L297.47 113.96" stroke="#35d235" stroke-width="0.45" fill="none" /><path d="M303.38 113.96L304.88 111.46L306.38 113.96" stroke="#35d235" stroke-width="0.45" fill="none" /><path d="M315.85 113.96L317.35 111.46L318.85 113.96" stroke="#35d235" stroke-width="0.45" fill="none" /><path d="M256.78 141.75L258.56 136.41L268.36 136.41" stroke="#35d235" stroke-width="0.5" fill="none" /><text x="259.09" y="136.05" font-size="1.7" fill="#2a2" font-weight="700" >DN100</text><text x="259.09" y="138.05" font-size="1.7" fill="#2a2" font-weight="700" >h-0.80</text><text x="292.41" y="138.54" font-size="1.7" fill="#2a2" font-weight="700" >DN100</text><text x="292.41" y="140.54" font-size="1.7" fill="#2a2" font-weight="700" >h-0.80</text><path d="M299.18 140.86L299.89 142.64" stroke="#f5b87a" stroke-width="0.5" fill="none" /><text x="324.12" y="152.44" font-size="1.7" fill="#2a2" font-weight="700" >DN100</text><text x="324.12" y="154.44" font-size="1.7" fill="#2a2" font-weight="700" >h-0.80</text><text x="147.75" y="173.46" font-size="1.7" fill="#2a2" font-weight="700" >DN150 i=0.01</text><path d="M212.24 197.87L238.96 197.87L241.1 200.01" stroke="#4a90e2" stroke-width="0.7" fill="none" /><path d="M320 87.77L328.02 87.77" stroke="#222" stroke-width="0.45" fill="none" /><path d="M376.12 117.7L376.65 92.76L378.79 87.77L403.73 87.77" stroke="#222" stroke-width="0.45" fill="none" /><path d="M386.81 105.23L387.34 92.76L389.48 87.77" stroke="#222" stroke-width="0.45" fill="none" /><path d="M415.31 103.45L415.85 92.76L417.99 86.52L433.13 86.52" stroke="#222" stroke-width="0.45" fill="none" /><path d="M416.21 103.45L418.88 96.68L430.46 96.68" stroke="#222" stroke-width="0.45" fill="none" /><path d="M434.91 115.92L435.45 92.76L437.58 87.77L451.84 87.77" stroke="#222" stroke-width="0.45" fill="none" /><path d="M459.85 103.45L460.39 92.76L462.53 86.52L476.78 86.52" stroke="#222" stroke-width="0.45" fill="none" /><path d="M460.74 103.45L463.42 96.68L474.11 96.68" stroke="#222" stroke-width="0.45" fill="none" /><path d="M353.85 116.81L357.41 129.28L377.01 129.28" stroke="#222" stroke-width="0.45" fill="none" /><path d="M401.06 117.7L409.08 107.01L425.11 107.01" stroke="#222" stroke-width="0.45" fill="none" /><text x="379.09" y="87.47" font-size="1.8" fill="#111" font-weight="700" textLength="23.94">De110 h-1.20</text><text x="418.29" y="86.22" font-size="1.8" fill="#111" font-weight="700" textLength="14.14">De110 h-1.20</text><text x="419.18" y="96.38" font-size="1.8" fill="#111" font-weight="700" textLength="10.58">De110 h-1.20</text><text x="437.88" y="87.47" font-size="1.8" fill="#111" font-weight="700" textLength="13.25">De110 h-1.20</text><text x="462.83" y="86.22" font-size="1.8" fill="#111" font-weight="700" textLength="13.25">De110 h-1.20</text><text x="463.72" y="96.38" font-size="1.8" fill="#111" font-weight="700" textLength="9.69">De110 h-1.20</text><text x="360.09" y="128.92" font-size="2.1" fill="#111" font-weight="700" >给排水出户管</text><text x="361.09" y="132.02" font-size="2.1" fill="#111" font-weight="700" >详见大样</text><text x="409.08" y="106.65" font-size="2.1" fill="#111" font-weight="700" >给排水出户管</text><text x="410.08" y="109.75" font-size="2.1" fill="#111" font-weight="700" >详见大样</text><circle cx="368.99" cy="91.87" r="1.3" fill="#8be28b" stroke="#35d235" stroke-width="0.4"/><circle cx="400.17" cy="91.87" r="1.3" fill="#8be28b" stroke="#35d235" stroke-width="0.4"/><circle cx="450.06" cy="91.87" r="1.3" fill="#8be28b" stroke="#35d235" stroke-width="0.4"/><circle cx="402.84" cy="91.87" r="1.2" fill="#f7f09a" stroke="#f2e85a" stroke-width="0.4"/><circle cx="436.16" cy="91.87" r="1.2" fill="#f7f09a" stroke="#f2e85a" stroke-width="0.4"/><path d="M368.99 93.65L368.99 115.92" stroke="#4a90e2" stroke-width="0.7" fill="none" /><path d="M400.53 93.65L400.53 139.08L398.39 142.64L392.15 143.53L391.26 146.21" stroke="#4a90e2" stroke-width="0.7" fill="none" /><path d="M450.06 93.65L450.06 117.7" stroke="#4a90e2" stroke-width="0.7" fill="none" /><path d="M376.65 93.65L376.65 115.92" stroke="#30d8f0" stroke-width="0.7" fill="none" /><path d="M386.81 93.65L386.81 105.23" stroke="#30d8f0" stroke-width="0.7" fill="none" /><path d="M415.31 95.43L415.31 103.45" stroke="#30d8f0" stroke-width="0.7" fill="none" /><path d="M459.85 95.43L459.85 103.45" stroke="#30d8f0" stroke-width="0.7" fill="none" /><path d="M403.2 93.65L403.2 142.64L400.17 146.21L393.04 147.1" stroke="#f2e85a" stroke-width="0.8" fill="none" opacity=".9"/><path d="M436.69 93.65L436.69 116.81" stroke="#f2e85a" stroke-width="0.8" fill="none" opacity=".9"/><path d="M330.69 95.43L330.69 146.21" stroke="#f5b87a" stroke-width="0.55" fill="none" /><path d="M336.39 95.43L336.39 117.7" stroke="#f5b87a" stroke-width="0.55" fill="none" /><path d="M396.61 93.65L396.61 117.7" stroke="#f5b87a" stroke-width="0.55" fill="none" /><path d="M330.33 95.43L331.05 95.43" stroke="#f5b87a" stroke-width="0.55" fill="none" /><path d="M320 111.46L365.43 111.46L368.99 116.27" stroke="#35d235" stroke-width="0.55" fill="none" /><path d="M373.45 116.27L376.12 111.46L382.36 111.46" stroke="#35d235" stroke-width="0.55" fill="none" /><path d="M425.47 126.61L430.46 125.72L435.8 117.7L437.58 113.25" stroke="#35d235" stroke-width="0.55" fill="none" /><path d="M450.06 117.7L453.62 110.57L458.07 110.57" stroke="#35d235" stroke-width="0.55" fill="none" /><path d="M328.91 151.55L330.69 146.21" stroke="#35d235" stroke-width="0.55" fill="none" /><path d="M327.13 114.14L330.69 117.34" stroke="#35d235" stroke-width="0.55" fill="none" /><path d="M333.36 114.14L336.39 117.34" stroke="#35d235" stroke-width="0.55" fill="none" /><path d="M337.82 110.57L336.39 117.34" stroke="#35d235" stroke-width="0.55" fill="none" /><path d="M402.84 116.81L407.3 113.25" stroke="#35d235" stroke-width="0.55" fill="none" /><path d="M398.39 137.3L385.03 132.84" stroke="#35d235" stroke-width="0.5" fill="none" /><path d="M398.39 137.3L384.14 142.64" stroke="#35d235" stroke-width="0.5" fill="none" /><path d="M398.39 137.3L388.59 124.83" stroke="#35d235" stroke-width="0.5" fill="none" /><path d="M398.39 137.3L389.48 121.26" stroke="#35d235" stroke-width="0.5" fill="none" /><path d="M398.39 137.3L391.26 117.7" stroke="#35d235" stroke-width="0.5" fill="none" /><path d="M398.39 137.3L404.62 114.14" stroke="#35d235" stroke-width="0.5" fill="none" /><path d="M398.39 137.3L410.86 128.39" stroke="#35d235" stroke-width="0.5" fill="none" /><path d="M398.39 137.3L387.7 139.08" stroke="#35d235" stroke-width="0.5" fill="none" /><path d="M398.39 137.3L385.92 137.3" stroke="#35d235" stroke-width="0.5" fill="none" /><text x="323.92" y="152.44" font-size="1.7" fill="#2a2" font-weight="700" >DN100</text><text x="323.92" y="154.44" font-size="1.7" fill="#2a2" font-weight="700" >h-0.80</text><rect x="329.83" y="116.84" width="1" height="1" fill="#c82020" stroke="none" stroke-width="0.4" /><rect x="335.53" y="116.84" width="1" height="1" fill="#c82020" stroke="none" stroke-width="0.4" /><rect x="371.17" y="115.77" width="1" height="1" fill="#c82020" stroke="none" stroke-width="0.4" /><rect x="376.15" y="116.84" width="1" height="1" fill="#c82020" stroke="none" stroke-width="0.4" /><rect x="396.11" y="116.84" width="1" height="1" fill="#c82020" stroke="none" stroke-width="0.4" /><rect x="400.56" y="116.84" width="1" height="1" fill="#c82020" stroke="none" stroke-width="0.4" /><rect x="435.3" y="116.84" width="1" height="1" fill="#c82020" stroke="none" stroke-width="0.4" /><rect x="329.83" y="140.89" width="1" height="1" fill="#c82020" stroke="none" stroke-width="0.4" /><rect x="431.74" y="131.45" width="1" height="1" fill="#c82020" stroke="none" stroke-width="0.4" /><rect x="434.41" y="159.6" width="1" height="1" fill="#c82020" stroke="none" stroke-width="0.4" /><rect x="336.78" y="175.99" width="1" height="1" fill="#c82020" stroke="none" stroke-width="0.4" /><rect x="391.65" y="145.71" width="1" height="1" fill="#c82020" stroke="none" stroke-width="0.4" /><rect x="394.33" y="143.03" width="1" height="1" fill="#c82020" stroke="none" stroke-width="0.4" /><circle cx="323.56" cy="105.23" r="0.6" fill="#30d8f0" stroke="none" stroke-width="0.4"/><rect x="425.11" y="185.4" width="48.1" height="9.8" fill="#fbf6a8" stroke="none" stroke-width="0" opacity=".75"/><path d="M422.98 200.01L422.98 187.18L425.11 184.51L471.43 184.51" stroke="#222" stroke-width="0.5" fill="none" /><path d="M425.11 200.01L425.11 188.96L426.89 187.18L471.43 187.18" stroke="#30d8f0" stroke-width="0.5" fill="none" /><path d="M427.79 200.01L427.79 191.64L429.03 189.85L471.43 189.85" stroke="#f5b87a" stroke-width="0.6" fill="none" /><path d="M432.24 200.01L432.24 194.31L433.31 192.53L472.32 192.53" stroke="#4a90e2" stroke-width="0.7" fill="none" /><circle cx="472.32" cy="192.53" r="1.3" fill="#8be28b" stroke="#35d235" stroke-width="0.4"/><path d="M426 176.49L433.13 192.53" stroke="#35d235" stroke-width="0.6" fill="none" /><path d="M426.89 176.85L434.02 193.42" stroke="#35d235" stroke-width="0.6" fill="none" /><path d="M425.11 175.6L427.79 176.85" stroke="#35d235" stroke-width="0.6" fill="none" /><path d="M455.4 175.6L452.73 185.4L457.18 193.42" stroke="#35d235" stroke-width="0.6" fill="none" /><path d="M458.96 172.04L458.96 185.4" stroke="#35d235" stroke-width="0.6" fill="none" /><path d="M457.18 197.87L453.62 196.98L452.73 193.42" stroke="#35d235" stroke-width="0.6" fill="none" /><path d="M471.43 185.4L472.86 180.06L481.23 180.06" stroke="#35d235" stroke-width="0.5" fill="none" /><text x="473.22" y="179.7" font-size="1.8" fill="#111" font-weight="700" >De110 h-1.20</text><rect x="450.45" y="184.9" width="1" height="1" fill="#e06020" stroke="none" stroke-width="0.4" /><rect x="450.45" y="190.24" width="1" height="1" fill="#e06020" stroke="none" stroke-width="0.4" /><rect x="450.45" y="192.92" width="1" height="1" fill="#e06020" stroke="none" stroke-width="0.4" /><path d="M212.24 198.02L238.96 198.02L241.1 199.8L241.1 236.32L237.18 236.68" stroke="#4a90e2" stroke-width="0.7" fill="none" /><path d="M243.42 239.88L243.42 279.08" stroke="#4a90e2" stroke-width="0.7" fill="none" /><path d="M241.64 239.88L241.64 286.21" stroke="#444" stroke-width="0.5" fill="none" /><rect x="240.74" y="209.6" width="2.2" height="10" fill="#a8c8f0" stroke="none" stroke-width="0" opacity=".8"/><circle cx="243.42" cy="280.33" r="1.3" fill="#8be28b" stroke="#35d235" stroke-width="0.4"/><path d="M143.65 204.61L151.67 205.14L154.34 211.38" stroke="#35d235" stroke-width="0.55" fill="none" /><path d="M171.26 204.25L171.26 211.38L176.61 216.72L176.61 230.98" stroke="#35d235" stroke-width="0.55" fill="none" /><path d="M181.06 211.38L178.39 219.4" stroke="#35d235" stroke-width="0.55" fill="none" /><path d="M178.39 219.4L183.73 209.6L187.3 209.6" stroke="#35d235" stroke-width="0.55" fill="none" /><path d="M183.73 212.27L187.3 212.27" stroke="#35d235" stroke-width="0.55" fill="none" /><path d="M183.73 214.05L187.3 214.05" stroke="#35d235" stroke-width="0.55" fill="none" /><path d="M172.15 211.38L175.72 221.18" stroke="#35d235" stroke-width="0.55" fill="none" /><path d="M173.04 210.49L176.61 219.4" stroke="#35d235" stroke-width="0.55" fill="none" /><path d="M171.26 225.63L175.72 222.07" stroke="#35d235" stroke-width="0.55" fill="none" /><path d="M167.7 232.76L174.83 228.3L175.72 222.07" stroke="#35d235" stroke-width="0.55" fill="none" /><path d="M162.36 235.96L174.83 235.96" stroke="#35d235" stroke-width="0.55" fill="none" /><path d="M182.84 235.96L184.62 241.67L187.3 243.45L202.44 243.45" stroke="#35d235" stroke-width="0.55" fill="none" /><path d="M214.38 247.37L216.69 238.99L219.37 237.75L233.62 237.75" stroke="#35d235" stroke-width="0.55" fill="none" /><path d="M237.18 236.68L240.74 225.63L245.2 224.74" stroke="#35d235" stroke-width="0.55" fill="none" /><path d="M240.74 228.3L246.09 228.3" stroke="#35d235" stroke-width="0.55" fill="none" /><path d="M242.53 235.96L245.2 232.76" stroke="#35d235" stroke-width="0.55" fill="none" /><path d="M246.09 236.68L247.87 235.43" stroke="#35d235" stroke-width="0.55" fill="none" /><path d="M300.43 236.32L303.1 239.88" stroke="#35d235" stroke-width="0.55" fill="none" /><path d="M301.32 235.43L303.63 238.99" stroke="#35d235" stroke-width="0.55" fill="none" /><path d="M311.12 236.68L307.55 239.88" stroke="#35d235" stroke-width="0.55" fill="none" /><path d="M310.23 235.43L306.66 239.53" stroke="#35d235" stroke-width="0.55" fill="none" /><rect x="155.23" y="216.72" width="21.38" height="4.99" fill="#fbf6a8" stroke="#f2e85a" stroke-width="0.4" opacity=".8"/><path d="M157.01 217.97L176.61 218.51" stroke="#f5b87a" stroke-width="0.6" fill="none" /><path d="M157.01 219.93L176.61 220.46" stroke="#30d8f0" stroke-width="0.5" fill="none" /><path d="M143.65 214.05L158.79 214.05" stroke="#111" stroke-width="0.4" /><text x="144.05" y="213.65" font-size="1.9" fill="#111" font-weight="700" textLength="14.34" lengthAdjust="spacingAndGlyphs">DN150 i=0.01</text><path d="M147.21 225.63L162.36 225.63" stroke="#111" stroke-width="0.4" /><text x="147.61" y="225.23" font-size="1.9" fill="#111" font-weight="700" textLength="14.34" lengthAdjust="spacingAndGlyphs">DN100 i=0.02</text><path d="M169.48 286.21L184.62 286.21" stroke="#111" stroke-width="0.4" /><text x="169.88" y="285.81" font-size="1.9" fill="#111" font-weight="700" textLength="14.34" lengthAdjust="spacingAndGlyphs">De110 h-1.20</text><path d="M226.49 286.21L242.53 286.21" stroke="#111" stroke-width="0.4" /><text x="226.89" y="285.81" font-size="1.9" fill="#111" font-weight="700" textLength="15.23" lengthAdjust="spacingAndGlyphs">De110 h-1.20</text><path d="M295.08 286.21L322.7 286.21" stroke="#111" stroke-width="0.4" /><text x="295.48" y="285.81" font-size="1.9" fill="#111" font-weight="700" textLength="26.81" lengthAdjust="spacingAndGlyphs">De110 h-1.20 De110 h-1.20</text><path d="M154.34 211.38L153.45 214.05" stroke="#222" stroke-width="0.45" fill="none" /><path d="M157.9 222.96L157.01 225.63" stroke="#222" stroke-width="0.45" fill="none" /><text x="162.71" y="235.61" font-size="1.7" fill="#2a2" font-weight="700" >DN100 h-0.80</text><text x="187.3" y="242.2" font-size="2.0" fill="#111" font-weight="700" >给排水出户管</text><text x="187.3" y="245" font-size="2.0" fill="#111" font-weight="700" >详见大样 DN100</text><text x="219.01" y="237.75" font-size="2.0" fill="#111" font-weight="700" >给排水出户管</text><text x="219.01" y="240.55" font-size="2.0" fill="#111" font-weight="700" >详见大样 DN100</text><rect x="176.11" y="216.22" width="1" height="1" fill="#c82020" stroke="none" stroke-width="0.4" /><rect x="176.11" y="220.68" width="1" height="1" fill="#c82020" stroke="none" stroke-width="0.4" /><rect x="174.68" y="239.38" width="1" height="1" fill="#c82020" stroke="none" stroke-width="0.4" /><rect x="182.34" y="235.46" width="1" height="1" fill="#c82020" stroke="none" stroke-width="0.4" /><rect x="235.26" y="199.3" width="1" height="1" fill="#c82020" stroke="none" stroke-width="0.4" /><rect x="241.49" y="239.38" width="1" height="1" fill="#c82020" stroke="none" stroke-width="0.4" /><rect x="245.59" y="240.27" width="1" height="1" fill="#c82020" stroke="none" stroke-width="0.4" /><rect x="213.88" y="246.87" width="1" height="1" fill="#c82020" stroke="none" stroke-width="0.4" /><rect x="303.13" y="239.38" width="1" height="1" fill="#c82020" stroke="none" stroke-width="0.4" /><rect x="305.81" y="239.38" width="1" height="1" fill="#c82020" stroke="none" stroke-width="0.4" /><circle cx="175.54" cy="252.89" r="3.2" fill="none" stroke="#222" stroke-width="0.45"/><circle cx="175.54" cy="252.89" r="1.1" fill="none" stroke="#222" stroke-width="0.4"/><circle cx="175.54" cy="252.89" r="0.4" fill="#222" stroke="none" stroke-width="0.4"/><path d="M179.28 252.89L195.31 252.89" stroke="#e88" stroke-width="0.4" fill="none" /><path d="M194.91 251.59L197.51 252.89L194.91 254.19Z" fill="none" stroke="#e05050" stroke-width=".4"/><path d="M201.5 251.59L204.1 252.89L201.5 254.19Z" fill="none" stroke="#e05050" stroke-width=".4"/><path d="M177.85 286.21L177.85 264.83L179.28 262.69L184.62 262.69" stroke="#333" stroke-width="0.5" fill="none" /><path d="M238.07 286.21L238.61 268.39L235.4 263.04L229.16 262.69" stroke="#333" stroke-width="0.5" fill="none" /><path d="M303.63 286.21L303.63 230.98L313.79 230.98" stroke="#333" stroke-width="0.5" fill="none" /><path d="M306.31 286.21L306.31 232.76L312.9 232.76" stroke="#333" stroke-width="0.5" fill="none" /><path d="M304.88 286.21L304.88 231.33" stroke="#333" stroke-width="0.5" fill="none" /><path d="M177.85 269.28L177.85 272.31" stroke="#30d8f0" stroke-width="0.8" fill="none" /><path d="M238.61 270.17L238.61 279.08" stroke="#30d8f0" stroke-width="0.8" fill="none" /><path d="M306.31 241.67L306.31 250.57" stroke="#30d8f0" stroke-width="0.8" fill="none" /><path d="M237.18 246.65L303.99 246.65" stroke="#7fe07f" stroke-width="0.55" fill="none" /><text x="278.69" y="259.84" font-size="1.9" fill="#f0a040" font-weight="700" >DN100</text><path d="M287.96 260.37L288.85 265.72" stroke="#f0a040" stroke-width="0.5" fill="none" /><path d="M422.98 190L422.98 200.69L419.77 213.16L414.42 212.8" stroke="#222" stroke-width="0.5" fill="none" /><path d="M425.11 190L425.11 200.69" stroke="#30d8f0" stroke-width="0.5" fill="none" /><path d="M427.79 190L427.79 200.69" stroke="#f5b87a" stroke-width="0.6" fill="none" /><path d="M432.24 190L432.24 193.56" stroke="#4a90e2" stroke-width="0.7" fill="none" /><path d="M426.89 202.47L429.57 213.16L434.02 207.82" stroke="#35d235" stroke-width="0.6" fill="none" /><path d="M427.79 202.47L431.35 212.27" stroke="#35d235" stroke-width="0.6" fill="none" /><path d="M429.03 202.47L434.02 211.02" stroke="#35d235" stroke-width="0.6" fill="none" /><path d="M416.21 217.08L420.66 217.08L422.98 207.82" stroke="#35d235" stroke-width="0.6" fill="none" /><path d="M428.68 214.05L433.13 214.05" stroke="#35d235" stroke-width="0.6" fill="none" /><path d="M452.73 195.34L454.51 202.47L457.18 200.69" stroke="#35d235" stroke-width="0.6" fill="none" /><rect x="413.39" y="201.08" width="1" height="1" fill="#c82020" stroke="none" stroke-width="0.4" /><rect x="337.32" y="204.64" width="1" height="1" fill="#c82020" stroke="none" stroke-width="0.4" /><rect x="426.04" y="201.08" width="1" height="1" fill="#3040c0" stroke="none" stroke-width="0.4" /><rect x="428.53" y="201.08" width="1" height="1" fill="#e06020" stroke="none" stroke-width="0.4" /><path d="M339.24 238.99L339.24 286.21" stroke="#555" stroke-width="0.5" fill="none" /><path d="M341.02 238.99L341.02 279.97" stroke="#4a90e2" stroke-width="0.75" fill="none" /><circle cx="342.27" cy="280.33" r="1.3" fill="#8be28b" stroke="#35d235" stroke-width="0.4"/><path d="M332.47 231.33L337.82 231.87L340.49 238.1" stroke="#35d235" stroke-width="0.55" fill="none" /><path d="M331.58 286.21L346.72 286.21" stroke="#111" stroke-width="0.4" /><text x="331.98" y="285.81" font-size="1.9" fill="#111" font-weight="700" textLength="14.34" lengthAdjust="spacingAndGlyphs">De110 h-1.20</text><path d="M371.67 238.99L371.67 286.21" stroke="#555" stroke-width="0.5" fill="none" /><path d="M374.34 238.99L374.34 286.21" stroke="#555" stroke-width="0.5" fill="none" /><path d="M376.48 238.99L376.48 279.97" stroke="#4a90e2" stroke-width="0.75" fill="none" /><circle cx="376.48" cy="280.33" r="1.3" fill="#8be28b" stroke="#35d235" stroke-width="0.4"/><path d="M365.96 227.95L370.77 228.84L372.56 237.21" stroke="#35d235" stroke-width="0.55" fill="none" /><path d="M362.76 285.67L390.37 285.67" stroke="#111" stroke-width="0.4" /><text x="363.16" y="285.27" font-size="1.9" fill="#111" font-weight="700" textLength="26.81" lengthAdjust="spacingAndGlyphs">De110 h-1.20 De110 h-1.20</text><path d="M409.08 238.99L409.08 286.21" stroke="#555" stroke-width="0.5" fill="none" /><path d="M406.76 238.99L406.76 279.97" stroke="#4a90e2" stroke-width="0.75" fill="none" /><path d="M412.29 238.99L412.29 279.97" stroke="#4a90e2" stroke-width="0.75" fill="none" /><circle cx="406.76" cy="280.33" r="1.3" fill="#8be28b" stroke="#35d235" stroke-width="0.4"/><circle cx="412.29" cy="280.33" r="1.3" fill="#8be28b" stroke="#35d235" stroke-width="0.4"/><path d="M401.06 228.3L405.52 229.19L408.19 237.21" stroke="#35d235" stroke-width="0.55" fill="none" /><path d="M409.08 285.67L425.11 285.67" stroke="#111" stroke-width="0.4" /><text x="409.48" y="285.27" font-size="1.9" fill="#111" font-weight="700" textLength="15.23" lengthAdjust="spacingAndGlyphs">De110 h-1.20</text><path d="M450.06 238.99L450.06 279.97" stroke="#4a90e2" stroke-width="0.75" fill="none" /><circle cx="450.06" cy="280.33" r="1.3" fill="#8be28b" stroke="#35d235" stroke-width="0.4"/><path d="M450.06 238.1L452.73 227.41L458.07 227.06" stroke="#35d235" stroke-width="0.55" fill="none" /><path d="M458.96 285.67L474.11 285.67" stroke="#111" stroke-width="0.4" /><text x="459.36" y="285.27" font-size="1.9" fill="#111" font-weight="700" textLength="14.34" lengthAdjust="spacingAndGlyphs">De110 h-1.20</text><path d="M458.07 286.21L458.07 230.09L464.31 230.09" stroke="#444" stroke-width="0.5" fill="none" /><path d="M460.74 286.21L460.74 236.32" stroke="#444" stroke-width="0.5" fill="none" /><path d="M341.38 232.76L346.72 232.76" stroke="#333" stroke-width="0.45" fill="none" /><path d="M374.34 232.76L380.57 232.76" stroke="#333" stroke-width="0.45" fill="none" /><path d="M409.08 232.4L414.42 232.4" stroke="#333" stroke-width="0.45" fill="none" /><path d="M399.28 231.87L403.73 232.4L406.76 237.75" stroke="#333" stroke-width="0.45" fill="none" /><rect x="340.52" y="237.96" width="1" height="1" fill="#c82020" stroke="none" stroke-width="0.4" /><rect x="371.17" y="237.96" width="1" height="1" fill="#c82020" stroke="none" stroke-width="0.4" /><rect x="373.84" y="237.96" width="1" height="1" fill="#c82020" stroke="none" stroke-width="0.4" /><rect x="406.26" y="237.6" width="1" height="1" fill="#c82020" stroke="none" stroke-width="0.4" /><rect x="408.58" y="237.96" width="1" height="1" fill="#c82020" stroke="none" stroke-width="0.4" /><rect x="449.56" y="237.96" width="1" height="1" fill="#c82020" stroke="none" stroke-width="0.4" /><rect x="458.11" y="239.03" width="1" height="1" fill="#c82020" stroke="none" stroke-width="0.4" /><path d="M341.02 243.45L341.02 250.57" stroke="#30d8f0" stroke-width="0.8" fill="none" /><path d="M409.08 246.65L461.64 246.65" stroke="#7fe07f" stroke-width="0.55" fill="none" /><path d="M476.78 257.7L499.94 234.54" stroke="#ccc" stroke-width="0.4" fill="none" /></svg></div><div style="left:1638.0px;top:144.9px;width:294.0px;height:874.2px;background:#eef1f5;"></div><div style="left:1638.3px;top:144.9px;width:1.2px;height:879.0px;background:#e6e9ee;"></div><span class="t" style="left:1647.6px;top:163.2px;color:#5b6573;font-size:11.6px;">通用工具</span><div style="left:1908.9px;top:162.9px;width:8.4px;height:1.2px;background:#6b7480;"></div><svg style="left:1662.0px;top:203.1px;width:22.2px;height:22.2px;" viewBox="0 0 24 24"><path d="M12 1l3 4h-6zM12 23l3-4h-6zM1 12l4-3v6zM23 12l-4-3v6z" fill="#4a6484"/><path d="M12 4v16M4 12h16" stroke="#4a6484" stroke-width="1.6"/></svg><svg style="left:1701.3px;top:203.1px;width:22.2px;height:22.2px;" viewBox="0 0 24 24"><rect x="5" y="5" width="18" height="18" fill="#4a6484"/><rect x="2" y="2" width="18" height="18" fill="#fff" stroke="#4a6484" stroke-width="2"/><rect x="9" y="9" width="4" height="4" fill="none" stroke="#4a6484" stroke-width="1.2"/></svg><svg style="left:1738.8px;top:203.1px;width:22.2px;height:22.2px;" viewBox="0 0 24 24"><circle cx="11" cy="12" r="9.500" fill="none" stroke="#4a6484" stroke-width="1.8"/><circle cx="11" cy="12" r="4" fill="#4a6484"/><path d="M11 12h12" stroke="#4a6484" stroke-width="2"/><path d="M19 8l4 4-4 4" stroke="#4a6484" stroke-width="1.6" fill="none"/></svg><svg style="left:1776.6px;top:203.1px;width:22.2px;height:22.2px;" viewBox="0 0 24 24"><path d="M13 1V23" stroke="#9fb0c6" stroke-width="1.6"/><rect x="3" y="7" width="10" height="9" fill="#4a6484"/><rect x="9" y="14" width="6" height="8" fill="#4a6484"/><path d="M15 8h7M15 15h7" stroke="#9fb0c6" stroke-width="1.6"/></svg><svg style="left:1815.0px;top:203.1px;width:22.2px;height:22.2px;" viewBox="0 0 24 24"><path d="M12 1V23" stroke="#9fb0c6" stroke-width="1.6"/><rect x="1" y="8" width="9" height="8" fill="#4a6484"/><rect x="14" y="8" width="9" height="8" fill="#4a6484"/></svg><svg style="left:1854.3px;top:203.1px;width:22.2px;height:22.2px;" viewBox="0 0 24 24"><rect x="2" y="2" width="12" height="12" rx="3.500" fill="none" stroke="#4a6484" stroke-width="2.6"/><rect x="10" y="10" width="12" height="12" rx="3.500" fill="#eef1f5" stroke="#4a6484" stroke-width="2.6"/></svg><svg style="left:1662.0px;top:242.1px;width:22.2px;height:22.2px;" viewBox="0 0 24 24"><path d="M21 2V23" stroke="#4a6484" stroke-width="1.6"/><rect x="8" y="4" width="12" height="7" fill="#4a6484"/><rect x="3" y="13" width="17" height="7" fill="#fff" stroke="#4a6484" stroke-width="2"/></svg><svg style="left:1701.3px;top:242.1px;width:22.2px;height:22.2px;" viewBox="0 0 24 24"><path d="M20 2V23M23 2V23" stroke="#9fb0c6" stroke-width="1.4"/><rect x="2" y="9" width="10" height="6" fill="#4a6484"/><path d="M12 12h7" stroke="#4a6484" stroke-width="1.8"/></svg><svg style="left:1738.8px;top:242.1px;width:22.2px;height:22.2px;" viewBox="0 0 24 24"><path d="M22 2V23" stroke="#9fb0c6" stroke-width="1.6"/><rect x="3" y="4" width="13" height="7" fill="#4a6484"/><rect x="3" y="14" width="13" height="7" fill="#4a6484"/><path d="M16 7.5h5M16 17.500h5" stroke="#4a6484" stroke-width="1.6"/></svg><svg style="left:1776.6px;top:242.1px;width:22.2px;height:22.2px;" viewBox="0 0 24 24"><rect x="1" y="16" width="7" height="7" fill="#4a6484"/><rect x="16" y="1" width="7" height="7" fill="#fff" stroke="#4a6484" stroke-width="1.8"/><path d="M7 17L17 7" stroke="#4a6484" stroke-width="1.8"/><circle cx="12" cy="12" r="2.2" fill="#fff" stroke="#4a6484" stroke-width="1.4"/></svg><svg style="left:1815.0px;top:242.1px;width:22.2px;height:22.2px;" viewBox="0 0 24 24"><path d="M12 1V23" stroke="#9fb0c6" stroke-width="1.6"/><path d="M2 5v14l7-7z" fill="none" stroke="#4a6484" stroke-width="1.8"/><path d="M22 5v14l-7-7z" fill="#4a6484"/></svg><svg style="left:1854.3px;top:242.1px;width:22.2px;height:22.2px;" viewBox="0 0 24 24"><path d="M4 7H20L18.500 23H5.500z" fill="#4a6484"/><path d="M2 5.500H22" stroke="#4a6484" stroke-width="2.4"/><path d="M8 4.500V2H16V4.500" stroke="#4a6484" stroke-width="2" fill="none"/><path d="M9.500 10v10M14.500 10v10" stroke="#c8d3e2" stroke-width="1.4"/></svg><svg style="left:1662.0px;top:279.6px;width:22.2px;height:22.2px;" viewBox="0 0 24 24"><rect x="1" y="5" width="22" height="14" fill="#dfe6f0" stroke="#4a6484" stroke-width="2"/><path d="M5 15v-5M9 15v-3M13 15v-5M17 15v-3" stroke="#4a6484" stroke-width="1.6"/><path d="M1 19h22" stroke="#4a6484" stroke-width="2.4"/></svg><svg style="left:1701.3px;top:279.6px;width:22.2px;height:22.2px;" viewBox="0 0 24 24"><path d="M3 6Q17 2 18 12L17 22" stroke="#7fb0f8" stroke-width="4.500" fill="none"/><path d="M3 4.500Q8 3 11 4M16.500 17L15.800 22" stroke="#4a6484" stroke-width="1.6" fill="none"/></svg><div style="left:1638.0px;top:344.7px;width:294.0px;height:1.5px;background:#f9fafb;"></div><span class="t" style="left:1647.6px;top:361.8px;color:#5b6573;font-size:11.6px;">属性面板</span><div style="left:1651.8px;top:378.9px;width:240.6px;height:46.2px;background:#f3f5f8;border:1px solid #e1e4ea;border-radius:2px;"></div><span class="t" style="left:1658.4px;top:394.5px;color:#b4bac4;font-size:11.4px;">视图名称</span><span class="t" style="left:1658.4px;top:409.5px;color:#b4bac4;font-size:11.4px;">平面视图</span><svg style="left:1879.5px;top:399.9px;width:9.0px;height:6.3px;" viewBox="0 0 10 7"><path d="M1 1.5L5 5.5L9 1.5" stroke="#6b7480" stroke-width="1.7" fill="none"/></svg><div style="left:1899.0px;top:378.3px;width:19.8px;height:20.4px;background:#f7f8fa;border:1px solid #e1e4ea;"></div><div style="left:1899.0px;top:404.1px;width:19.8px;height:20.4px;background:#f7f8fa;border:1px solid #e1e4ea;"></div><span class="t c" style="left:1908.9px;top:388.2px;color:#7c8593;font-size:13px;">+</span><svg style="left:1903.8px;top:409.5px;width:10.2px;height:9.6px;" viewBox="0 0 24 24"><path d="M2 5h20M2 12h20M2 19h20" stroke="#5b6573" stroke-width="2.6"/></svg><svg style="left:1653.0px;top:446.7px;width:8.4px;height:6.3px;" viewBox="0 0 10 7"><path d="M1 1.5L5 5.5L9 1.5" stroke="#6b7480" stroke-width="1.8" fill="none"/></svg><span class="t" style="left:1671.6px;top:450.0px;color:#5b6573;">基本属性</span><span class="t" style="left:1650.0px;top:477.3px;">视图名称</span><div class="inp" style="left:1721.4px;top:467.1px;width:199.2px;height:20.7px;"></div><span class="t" style="left:1728.0px;top:477.3px;color:#1f2329;">建筑1F</span><span class="t" style="left:1650.0px;top:508.3px;">工作平面</span><div class="inp" style="left:1721.4px;top:498.1px;width:199.2px;height:20.7px;"></div><span class="t" style="left:1728.0px;top:508.3px;color:#1f2329;">建筑1F</span><svg style="left:1906.5px;top:505.3px;width:9.0px;height:6.3px;" viewBox="0 0 10 7"><path d="M1 1.5L5 5.5L9 1.5" stroke="#6b7480" stroke-width="1.7" fill="none"/></svg><span class="t" style="left:1650.0px;top:539.3px;">视图对象···</span><div class="inp" style="left:1721.4px;top:529.1px;width:199.2px;height:20.7px;"></div><span class="t c" style="left:1821.0px;top:539.3px;">设置</span><span class="t" style="left:1650.0px;top:570.3px;">视图比例</span><div class="inp" style="left:1721.4px;top:560.1px;width:199.2px;height:20.7px;"></div><span class="t" style="left:1728.0px;top:570.3px;color:#1f2329;">1:100</span><svg style="left:1906.5px;top:567.3px;width:9.0px;height:6.3px;" viewBox="0 0 10 7"><path d="M1 1.5L5 5.5L9 1.5" stroke="#6b7480" stroke-width="1.7" fill="none"/></svg><span class="t" style="left:1650.0px;top:601.3px;">显示模式</span><div class="inp" style="left:1721.4px;top:591.1px;width:199.2px;height:20.7px;"></div><span class="t" style="left:1728.0px;top:601.3px;color:#1f2329;">线框</span><svg style="left:1906.5px;top:598.3px;width:9.0px;height:6.3px;" viewBox="0 0 10 7"><path d="M1 1.5L5 5.5L9 1.5" stroke="#6b7480" stroke-width="1.7" fill="none"/></svg><span class="t" style="left:1650.0px;top:632.3px;">详细程度</span><div class="inp" style="left:1721.4px;top:622.1px;width:199.2px;height:20.7px;"></div><span class="t" style="left:1728.0px;top:632.3px;color:#1f2329;">中等</span><svg style="left:1906.5px;top:629.3px;width:9.0px;height:6.3px;" viewBox="0 0 10 7"><path d="M1 1.5L5 5.5L9 1.5" stroke="#6b7480" stroke-width="1.7" fill="none"/></svg><span class="t" style="left:1650.0px;top:663.2px;">专业</span><div class="inp" style="left:1721.4px;top:653.0px;width:199.2px;height:20.7px;"></div><span class="t" style="left:1728.0px;top:663.2px;color:#1f2329;">机电</span><svg style="left:1906.5px;top:660.2px;width:9.0px;height:6.3px;" viewBox="0 0 10 7"><path d="M1 1.5L5 5.5L9 1.5" stroke="#6b7480" stroke-width="1.7" fill="none"/></svg><span class="t" style="left:1650.0px;top:694.2px;">显示隐藏线</span><div class="inp" style="left:1721.4px;top:684.0px;width:199.2px;height:20.7px;"></div><span class="t" style="left:1728.0px;top:694.2px;color:#1f2329;">按专业</span><svg style="left:1906.5px;top:691.2px;width:9.0px;height:6.3px;" viewBox="0 0 10 7"><path d="M1 1.5L5 5.5L9 1.5" stroke="#6b7480" stroke-width="1.7" fill="none"/></svg><svg style="left:1653.0px;top:729.7px;width:8.4px;height:6.3px;" viewBox="0 0 10 7"><path d="M1 1.5L5 5.5L9 1.5" stroke="#6b7480" stroke-width="1.8" fill="none"/></svg><span class="t" style="left:1671.6px;top:733.0px;color:#8a93a0;">视图范围</span><span class="t" style="left:1650.0px;top:761.8px;">视图样板</span><div class="inp" style="left:1721.4px;top:751.6px;width:199.2px;height:20.7px;"></div><span class="t" style="left:1728.0px;top:761.8px;color:#1f2329;">无</span><svg style="left:1906.5px;top:758.8px;width:9.0px;height:6.3px;" viewBox="0 0 10 7"><path d="M1 1.5L5 5.5L9 1.5" stroke="#6b7480" stroke-width="1.7" fill="none"/></svg><span class="t" style="left:1650.0px;top:791.6px;">柱口连接</span><div class="cb on" style="left:1721.4px;top:783.2px;width:17.1px;height:17.1px;"></div><svg style="left:1723.8px;top:785.6px;width:12.3px;height:12.3px;" viewBox="0 0 24 24"><path d="M4 12.500L10 18L20 6.500" stroke="#fff" stroke-width="3.4" fill="none"/></svg><span class="t" style="left:1650.0px;top:821.4px;">显示裁剪框</span><div class="cb" style="left:1721.4px;top:813.0px;width:17.1px;height:17.1px;"></div><span class="t" style="left:1650.0px;top:851.2px;">注释裁剪</span><div class="cb on" style="left:1721.4px;top:842.8px;width:17.1px;height:17.1px;"></div><svg style="left:1723.8px;top:845.2px;width:12.3px;height:12.3px;" viewBox="0 0 24 24"><path d="M4 12.500L10 18L20 6.500" stroke="#fff" stroke-width="3.4" fill="none"/></svg><span class="t" style="left:1650.0px;top:881.0px;">视图范围</span><div class="inp" style="left:1721.4px;top:870.8px;width:199.2px;height:20.7px;"></div><span class="t c" style="left:1821.0px;top:881.0px;">设置</span><span class="t" style="left:1650.0px;top:910.8px;">显示区域框</span><div class="cb on" style="left:1721.4px;top:902.4px;width:17.1px;height:17.1px;"></div><svg style="left:1723.8px;top:904.8px;width:12.3px;height:12.3px;" viewBox="0 0 24 24"><path d="M4 12.500L10 18L20 6.500" stroke="#fff" stroke-width="3.4" fill="none"/></svg><div style="left:37.5px;top:1002.0px;width:195.6px;height:22.8px;background:#eef1f5;"></div><div style="left:37.5px;top:1024.8px;width:1894.5px;height:22.2px;background:#e9edf2;"></div><div style="left:37.5px;top:1024.5px;width:1894.5px;height:1.2px;background:#f6f7f9;"></div><svg style="left:58.8px;top:1029.6px;width:15.0px;height:13.2px;" viewBox="0 0 24 24"><path d="M1 12Q12 1 23 12Q12 23 1 12z" fill="none" stroke="#aab2bf" stroke-width="2.4"/><circle cx="12" cy="12" r="4" fill="#aab2bf"/></svg><svg style="left:91.2px;top:1029.6px;width:15.0px;height:13.2px;" viewBox="0 0 24 24"><path d="M1 12Q12 1 23 12Q12 23 1 12z" fill="none" stroke="#aab2bf" stroke-width="2.4"/><circle cx="12" cy="12" r="4" fill="#aab2bf"/><path d="M16 18l6 4" stroke="#6aa6f5" stroke-width="3"/></svg><svg style="left:123.6px;top:1029.6px;width:15.0px;height:13.2px;" viewBox="0 0 24 24"><path d="M1 12Q12 1 23 12Q12 23 1 12z" fill="none" stroke="#55637a" stroke-width="2.4"/><circle cx="12" cy="12" r="4" fill="#55637a"/><path d="M15 17l7 5" stroke="#3d8af2" stroke-width="3.4"/></svg><div style="left:148.8px;top:1026.9px;width:1.2px;height:18.6px;background:#d6dae1;"></div><svg style="left:164.1px;top:1028.4px;width:12.0px;height:15.6px;" viewBox="0 0 24 25"><path d="M12 2a8 8 0 0 1 4.5 14.5V19h-9v-2.500A8 8 0 0 1 12 2z" fill="none" stroke="#1d3461" stroke-width="2.6"/><path d="M8.5 22.500h7" stroke="#1d3461" stroke-width="2.4"/></svg><svg style="left:195.6px;top:1029.9px;width:15.0px;height:12.6px;" viewBox="0 0 24 24"><path d="M1 12Q12 1 23 12Q12 23 1 12z" fill="none" stroke="#55637a" stroke-width="2.4"/><circle cx="12" cy="12" r="4" fill="#55637a"/></svg><div style="left:217.8px;top:1036.5px;width:4.2px;height:1.2px;background:#8a93a0;"></div><div style="left:235.8px;top:1026.9px;width:1.2px;height:18.6px;background:#d6dae1;"></div><svg style="left:253.8px;top:1029.0px;width:13.8px;height:15.0px;" viewBox="0 0 24 24"><rect x="3" y="2" width="7" height="8" fill="#1d3461"/><rect x="3" y="13" width="7" height="8" fill="#1d3461"/><path d="M13 2V22" stroke="#1d3461" stroke-width="2"/><path d="M14 6h7M14 17h7" stroke="#8a93a0" stroke-width="2"/></svg><svg style="left:288.0px;top:1029.0px;width:13.8px;height:15.0px;" viewBox="0 0 24 24"><path d="M4 2V20H22" stroke="#3d6fd0" stroke-width="2.6" fill="none"/><path d="M4 12a8 8 0 0 1 8 8" stroke="#3d8af2" stroke-width="2" fill="none"/></svg><div style="left:321.9px;top:1026.9px;width:1.2px;height:18.6px;background:#d6dae1;"></div><div style="left:1837.8px;top:1026.9px;width:1.2px;height:18.6px;background:#d6dae1;"></div><svg style="left:1851.6px;top:1029.0px;width:18.0px;height:15.0px;" viewBox="0 0 24 24"><rect x="2" y="8" width="20" height="8" rx="1" fill="#8fd9c0" transform="rotate(-40 12 12)"/></svg><svg style="left:1885.2px;top:1029.6px;width:14.4px;height:14.4px;" viewBox="0 0 24 24"><rect x="3" y="3" width="16" height="16" rx="2" fill="none" stroke="#7d8aa0" stroke-width="2.4"/><path d="M7 22h15V7" stroke="#b7c0ce" stroke-width="2.2" fill="none"/></svg><svg style="left:1915.8px;top:1029.6px;width:15.0px;height:14.4px;" viewBox="0 0 24 24"><path d="M3 3l7 7M21 3l-7 7M3 21l7-7M21 21l-7-7" stroke="#7d8aa0" stroke-width="2.4"/><rect x="8" y="8" width="8" height="8" fill="none" stroke="#7d8aa0" stroke-width="2"/></svg><svg style="left:240.0px;top:550.8px;width:16.2px;height:33.6px;" viewBox="0 0 10.8 22.4"><path d="M0 0A10.500 11.200 0 0 1 0 22.400z" fill="#c5cad3"/><path d="M3 9l3 2.200-3 2.200" stroke="#fff" stroke-width="1.2" fill="none"/></svg><svg style="left:1621.8px;top:568.2px;width:16.2px;height:33.6px;" viewBox="0 0 10.8 22.4"><path d="M10.8 0A10.500 11.200 0 0 0 10.8 22.400z" fill="#c5cad3"/><path d="M5 9l3 2.200-3 2.200" stroke="#fff" stroke-width="1.2" fill="none"/></svg><div style="left:1594.2px;top:930.0px;width:28.8px;height:50.4px;background:#3b3b3b;"></div><svg style="left:1599.6px;top:934.2px;width:18.0px;height:18.0px;" viewBox="0 0 24 24"><path d="M19 12a7 7 0 1 1-3-5.700" stroke="#fff" stroke-width="2.6" fill="none"/><path d="M12 3h6v6" stroke="#fff" stroke-width="2.4" fill="none"/><circle cx="12" cy="12" r="1.8" fill="#fff"/></svg><svg style="left:1600.8px;top:958.8px;width:15.6px;height:15.6px;" viewBox="0 0 24 24"><path d="M3 3L21 21M21 3L3 21" stroke="#fff" stroke-width="3.6"/></svg><div class="bd"></div></div><div class="win" style="left:661.1px;top:0px;transform:scale(0.33293,0.333333);"><div style="left:6.0px;top:6.0px;width:1926.0px;height:1041.0px;background:#eef1f5;"></div><div style="left:6.0px;top:6.0px;width:1926.0px;height:47.4px;background:#1e2228;"></div><svg style="left:0.0px;top:0.0px;width:42.0px;height:42.0px;" viewBox="0 0 14 14"><path d="M4.3 9.3L6.2 5.4L8.3 9.3L10.3 5.4" stroke="#0a3d24" stroke-width=".5" fill="none"/><circle cx="6.2" cy="5.4" r="1.15" fill="#00a651"/><circle cx="10.3" cy="5.4" r="1.15" fill="#00a651"/><circle cx="4.3" cy="9.3" r="1.15" fill="#00a651"/><circle cx="8.3" cy="9.3" r="1.15" fill="#00a651"/></svg><span class="t" style="left:38.4px;top:22.2px;color:#dfe2e6;font-size:12.6px;-webkit-text-stroke:0;">14#-给排水 - 平面视图: 建筑4F(天花)</span><div style="left:15.6px;top:0;width:0;height:0;"><svg style="left:627.9px;top:11.1px;width:21.0px;height:21.0px;" viewBox="0 0 24 24"><path d="M3 2H17L21 6V22H3z" fill="none" stroke="#e6e8eb" stroke-width="2"/><rect x="7" y="2" width="9" height="6" fill="none" stroke="#e6e8eb" stroke-width="1.8"/><rect x="7" y="13" width="10" height="9" fill="none" stroke="#e6e8eb" stroke-width="1.8"/></svg><span class="t" style="left:653.4px;top:22.2px;color:#e4e6ea;-webkit-text-stroke:0.05px;">保存</span><svg style="left:688.5px;top:11.1px;width:21.0px;height:21.0px;" viewBox="0 0 24 24"><path d="M22 2L2 11L9 14L11 22L14 16L20 19z" fill="#e6e8eb"/><path d="M9 14L22 2L11 16" stroke="#1e2228" stroke-width="1.2" fill="none"/></svg><span class="t" style="left:714.0px;top:22.2px;color:#e4e6ea;-webkit-text-stroke:0.05px;">提交</span><svg style="left:749.4px;top:11.1px;width:21.0px;height:21.0px;" viewBox="0 0 24 24"><path d="M4 2H14L20 8V22H4z" fill="none" stroke="#e6e8eb" stroke-width="2"/><path d="M14 2V8H20" fill="none" stroke="#e6e8eb" stroke-width="1.6"/><path d="M12 13l7 8M19 13l-7 8" stroke="#f0443c" stroke-width="2.6"/></svg><span class="t" style="left:774.6px;top:22.2px;color:#e4e6ea;-webkit-text-stroke:0.05px;">关闭</span><svg style="left:809.4px;top:11.1px;width:21.0px;height:21.0px;" viewBox="0 0 24 24"><path d="M8 5H4V22H13" fill="none" stroke="#e6e8eb" stroke-width="2"/><path d="M8 3H16V7H8z" fill="#e6e8eb"/><path d="M11 9H21V22H11z" fill="none" stroke="#e6e8eb" stroke-width="2"/><path d="M14 13h4M14 17h4" stroke="#e6e8eb" stroke-width="1.5"/></svg><span class="t" style="left:834.9px;top:22.2px;color:#e4e6ea;-webkit-text-stroke:0.05px;">剪贴板</span><svg style="left:878.1px;top:18.9px;width:9.6px;height:7.2px;" viewBox="0 0 10 7"><path d="M1 1.5L5 5.5L9 1.5" stroke="#c8ccd2" stroke-width="1.6" fill="none"/></svg><svg style="left:902.4px;top:11.1px;width:21.0px;height:21.0px;" viewBox="0 0 24 24"><path d="M9 4L3 9.5L9 15" fill="none" stroke="#e6e8eb" stroke-width="2.4"/><path d="M3 9.5H15a6 5.5 0 0 1 0 11H7" fill="none" stroke="#e6e8eb" stroke-width="2.4"/></svg><svg style="left:934.5px;top:11.1px;width:21.0px;height:21.0px;" viewBox="0 0 24 24"><path d="M15 4L21 9.5L15 15" fill="none" stroke="#5a6068" stroke-width="2.2"/><path d="M21 9.5H9a6 5.5 0 0 0 0 11H17" fill="none" stroke="#5a6068" stroke-width="2.2"/></svg><svg style="left:965.4px;top:11.1px;width:21.0px;height:21.0px;" viewBox="0 0 24 24"><path d="M3 3H21V14Q21 20 12 23Q3 20 3 14z" fill="none" stroke="#e6e8eb" stroke-width="2"/><circle cx="12" cy="11" r="3.5" fill="none" stroke="#e6e8eb" stroke-width="2"/><path d="M12 15v4" stroke="#e6e8eb" stroke-width="2"/></svg><span class="t" style="left:990.9px;top:22.2px;color:#e4e6ea;-webkit-text-stroke:0.05px;">项目管理</span><svg style="left:1049.1px;top:18.9px;width:9.6px;height:7.2px;" viewBox="0 0 10 7"><path d="M1 1.5L5 5.5L9 1.5" stroke="#c8ccd2" stroke-width="1.6" fill="none"/></svg><svg style="left:1068.9px;top:11.1px;width:21.0px;height:21.0px;" viewBox="0 0 24 24"><rect x="10.2" y="0.5" width="3.6" height="6" rx="1" fill="#e6e8eb" transform="rotate(0 12 12)"/><rect x="10.2" y="0.5" width="3.6" height="6" rx="1" fill="#e6e8eb" transform="rotate(45 12 12)"/><rect x="10.2" y="0.5" width="3.6" height="6" rx="1" fill="#e6e8eb" transform="rotate(90 12 12)"/><rect x="10.2" y="0.5" width="3.6" height="6" rx="1" fill="#e6e8eb" transform="rotate(135 12 12)"/><rect x="10.2" y="0.5" width="3.6" height="6" rx="1" fill="#e6e8eb" transform="rotate(180 12 12)"/><rect x="10.2" y="0.5" width="3.6" height="6" rx="1" fill="#e6e8eb" transform="rotate(225 12 12)"/><rect x="10.2" y="0.5" width="3.6" height="6" rx="1" fill="#e6e8eb" transform="rotate(270 12 12)"/><rect x="10.2" y="0.5" width="3.6" height="6" rx="1" fill="#e6e8eb" transform="rotate(315 12 12)"/><circle cx="12" cy="12" r="6.3" fill="none" stroke="#e6e8eb" stroke-width="4.2"/></svg><span class="t" style="left:1094.4px;top:22.2px;color:#e4e6ea;-webkit-text-stroke:0.05px;">系统设置</span><svg style="left:1153.2px;top:18.9px;width:9.6px;height:7.2px;" viewBox="0 0 10 7"><path d="M1 1.5L5 5.5L9 1.5" stroke="#c8ccd2" stroke-width="1.6" fill="none"/></svg></div><svg style="left:1584.6px;top:12.0px;width:19.8px;height:19.8px;" viewBox="0 0 24 24"><circle cx="12" cy="12" r="11.5" fill="#d9dde4"/><circle cx="12" cy="9" r="4" fill="#8f98a6"/><path d="M4 20a8 7 0 0 1 16 0z" fill="#8f98a6"/><circle cx="14" cy="12" r="2" fill="#e9a23b"/></svg><span class="t" style="left:1610.4px;top:22.2px;color:#e4e6ea;-webkit-text-stroke:0.05px;">广小二</span><svg style="left:1654.5px;top:12.0px;width:19.8px;height:19.8px;" viewBox="0 0 24 24"><circle cx="12" cy="12" r="11.5" fill="#d9dde4"/><path d="M6 8h12v8h-5l-3 3v-3H6z" fill="#7d8694"/></svg><span class="t" style="left:1682.4px;top:22.2px;color:#e4e6ea;-webkit-text-stroke:0.05px;">反馈</span><svg style="left:1714.8px;top:18.9px;width:9.6px;height:7.2px;" viewBox="0 0 10 7"><path d="M1 1.5L5 5.5L9 1.5" stroke="#c8ccd2" stroke-width="1.6" fill="none"/></svg><svg style="left:1735.2px;top:12.0px;width:19.8px;height:19.8px;" viewBox="0 0 24 24"><circle cx="12" cy="12" r="10.5" fill="#1e2228" stroke="#d9dde4" stroke-width="2.4"/><path d="M9 9a3 3.4 0 1 1 4.5 3q-1.5 1-1.5 3" stroke="#d9dde4" stroke-width="2.2" fill="none"/><circle cx="12" cy="18.5" r="1.4" fill="#d9dde4"/></svg><span class="t" style="left:1762.8px;top:22.2px;color:#e4e6ea;-webkit-text-stroke:0.05px;">帮助</span><div style="left:1810.8px;top:21.6px;width:7.8px;height:1.5px;background:#b9bdc4;"></div><svg style="left:1857.0px;top:15.6px;width:13.2px;height:13.2px;" viewBox="0 0 24 24"><rect x="2" y="7" width="14" height="14" fill="none" stroke="#e6e8eb" stroke-width="2.6"/><path d="M7 7V3H21V17H16" fill="none" stroke="#e6e8eb" stroke-width="2.6"/></svg><svg style="left:1904.7px;top:15.0px;width:14.4px;height:14.4px;" viewBox="0 0 24 24"><path d="M3 3L21 21M21 3L3 21" stroke="#e6e8eb" stroke-width="2.8"/></svg><svg style="left:0.0px;top:0.0px;width:600.0px;height:60.0px;" viewBox="0 0 200 20"><path d="M12.30 17.8 L12.30 13.5 Q12.30 12.9 14.50 12.9 L31.00 12.9 Q32.00 12.9 32.60 13.700000000000001 L36.00 17.8 Z" fill="#d3d8e1"/><path d="M36.80 17.8 L38.00 13.5 Q38.20 12.9 39.00 12.9 L51.70 12.9 Q52.70 12.9 53.30 13.700000000000001 L56.70 17.8 Z" fill="#d3d8e1"/><path d="M57.50 17.8 L58.70 13.5 Q58.90 12.9 59.70 12.9 L70.80 12.9 Q71.80 12.9 72.40 13.700000000000001 L75.80 17.8 Z" fill="#d3d8e1"/><path d="M76.60 17.8 L77.80 13.5 Q78.00 12.9 78.80 12.9 L90.70 12.9 Q91.70 12.9 92.30 13.700000000000001 L95.70 17.8 Z" fill="#d3d8e1"/><path d="M96.50 17.8 L97.70 13.5 Q97.90 12.9 98.70 12.9 L109.90 12.9 Q110.90 12.9 111.50 13.700000000000001 L114.90 17.8 Z" fill="#d3d8e1"/><path d="M115.70 17.8 L116.90 13.5 Q117.10 12.9 117.90 12.9 L130.50 12.9 Q131.50 12.9 132.10 13.700000000000001 L135.50 17.8 Z" fill="#eef1f5"/><path d="M136.30 17.8 L137.50 13.5 Q137.70 12.9 138.50 12.9 L154.30 12.9 Q155.30 12.9 155.90 13.700000000000001 L159.30 17.8 Z" fill="#d3d8e1"/></svg><span class="t c" style="left:67.9px;top:46.2px;color:#6b7480;font-size:11.6px;">通用</span><span class="t c" style="left:134.8px;top:46.2px;color:#6b7480;font-size:11.6px;">给排水</span><span class="t c" style="left:194.6px;top:46.2px;color:#6b7480;font-size:11.6px;">暖通</span><span class="t c" style="left:253.1px;top:46.2px;color:#6b7480;font-size:11.6px;">电气</span><span class="t c" style="left:311.7px;top:46.2px;color:#6b7480;font-size:11.6px;">管综</span><span class="t c" style="left:371.4px;top:46.2px;color:#1f2329;font-size:11.6px;">注释</span><span class="t c" style="left:438.0px;top:46.2px;color:#6b7480;font-size:11.6px;">视图拓展</span><div style="left:36.9px;top:53.4px;width:1895.1px;height:59.1px;background:#eef1f5;"></div><svg style="left:421.2px;top:59.1px;width:30.6px;height:30.6px;" viewBox="0 0 24 24"><rect x="2" y="3" width="20" height="18" fill="#cddbf0" stroke="#4f6f9f" stroke-width="1.8"/><path d="M2 9H22M2 15H22M8.7 3V21M15.3 3V21" stroke="#4f6f9f" stroke-width="1.5" fill="none"/></svg><span class="t c" style="left:436.5px;top:99.3px;color:#1f2329;font-size:11.6px;">表格</span><svg style="left:475.2px;top:59.1px;width:30.6px;height:30.6px;" viewBox="0 0 24 24"><path d="M4 20L20 4" stroke="#3c5273" stroke-width="1.6"/><circle cx="4" cy="20" r="2" fill="#3d8af2"/><circle cx="20" cy="4" r="2" fill="#3c5273"/></svg><span class="t c" style="left:490.5px;top:99.3px;color:#1f2329;font-size:11.6px;">二维线</span><svg style="left:530.7px;top:59.1px;width:30.6px;height:30.6px;" viewBox="0 0 24 24"><path d="M4 11a8 7 0 0 1 16 0z" fill="none" stroke="#3c5273" stroke-width="1.6"/><path d="M8 11v3M12 11v5M16 11v3" stroke="#3c5273" stroke-width="1.4"/><rect x="11" y="13" width="11" height="9" fill="#c9d6ea" opacity=".9"/><circle cx="17" cy="17" r="2.2" fill="none" stroke="#3d8af2" stroke-width="1.3"/></svg><span class="t c" style="left:546.0px;top:99.3px;color:#1f2329;font-size:11.6px;">填充</span><svg style="left:587.1px;top:59.1px;width:30.6px;height:30.6px;" viewBox="0 0 24 24"><path d="M3 3H17V8H15V5.5H11.5V19H14V21H6V19H8.5V5.5H5V8H3z" fill="#e8eef8" stroke="#3c5273" stroke-width="1.3"/><path d="M14 11H23V15H21.5V13H19.5V20H21V21.5H16V20H17.5V13H15.5V15H14z" fill="#3d8af2"/></svg><span class="t c" style="left:602.4px;top:99.3px;color:#1f2329;font-size:11.6px;">文字</span><svg style="left:671.7px;top:59.1px;width:30.6px;height:30.6px;" viewBox="0 0 24 24"><path d="M5 19L19 5" stroke="#3c5273" stroke-width="1.6"/><path d="M2 16l6 6M16 2l6 6" stroke="#3c5273" stroke-width="1.6"/><circle cx="20" cy="20" r="1.3" fill="#3c5273"/></svg><span class="t c" style="left:687.0px;top:99.3px;color:#1f2329;font-size:11.6px;">尺寸标注</span><svg style="left:740.7px;top:59.1px;width:30.6px;height:30.6px;" viewBox="0 0 24 24"><path d="M5 2V12M10 2V14M15 2V12" stroke="#3c5273" stroke-width="1.5"/><path d="M3 7H8M8 9H12M13 7H18" stroke="#3c5273" stroke-width="1.2"/><path d="M21 5L13 19" stroke="#3c5273" stroke-width="1.5"/><circle cx="12" cy="20" r="2.4" fill="#3d8af2"/><path d="M17 16h5" stroke="#3d8af2" stroke-width="1.5"/></svg><span class="t c" style="left:756.0px;top:99.3px;color:#1f2329;font-size:11.6px;">管线定位</span><svg style="left:809.7px;top:59.1px;width:30.6px;height:30.6px;" viewBox="0 0 24 24"><path d="M2 8H22M2 16H22" stroke="#3d8af2" stroke-width="1.7"/><path d="M8 2V22M16 2V22" stroke="#3c5273" stroke-width="1.6"/><path d="M10 12h9" stroke="#3d8af2" stroke-width="2"/><path d="M17 8.5l5 3.5-5 3.5z" fill="#3d8af2"/><circle cx="8" cy="8" r="1.6" fill="#3d8af2"/><circle cx="16" cy="16" r="1.6" fill="#3d8af2"/></svg><span class="t c" style="left:825.0px;top:99.3px;color:#1f2329;font-size:11.6px;">墙间标注</span><svg style="left:899.7px;top:59.1px;width:30.6px;height:30.6px;" viewBox="0 0 24 24"><path d="M5 1V23" stroke="#3c5273" stroke-width="3"/><path d="M5 6H14" stroke="#3c5273" stroke-width="1.4"/><path d="M14 4h8M14 7h8" stroke="#3c5273" stroke-width="1.2"/><path d="M12 13a5 5 0 0 1 10 0v6h-10z" fill="#3d8af2"/><path d="M15 15v3M19 15v3" stroke="#fff" stroke-width="1.2"/></svg><span class="t c" style="left:915.0px;top:99.3px;color:#1f2329;font-size:11.6px;">标注管道</span><svg style="left:968.7px;top:59.1px;width:30.6px;height:30.6px;" viewBox="0 0 24 24"><path d="M3 22L9 7Q10 5 12 5H14" stroke="#3c5273" stroke-width="1.5" fill="none"/><path d="M14 4h8M14 7h8" stroke="#3c5273" stroke-width="1.2"/><rect x="14" y="9" width="8" height="2" fill="#3c5273"/></svg><span class="t c" style="left:984.0px;top:99.3px;color:#1f2329;font-size:11.6px;">引出标注</span><svg style="left:1037.7px;top:59.1px;width:30.6px;height:30.6px;" viewBox="0 0 24 24"><path d="M5 1V23" stroke="#3c5273" stroke-width="3"/><path d="M5 8H13" stroke="#3c5273" stroke-width="1.4"/><rect x="13" y="6" width="9" height="3" fill="#3c5273"/></svg><span class="t c" style="left:1053.0px;top:99.3px;color:#1f2329;font-size:11.6px;">单个标注</span><svg style="left:1106.7px;top:59.1px;width:30.6px;height:30.6px;" viewBox="0 0 24 24"><path d="M3 21H16" stroke="#3c5273" stroke-width="2.4"/><path d="M9 21V4" stroke="#3c5273" stroke-width="1.4"/><path d="M9 5h13M9 9h13M9 13h13" stroke="#3c5273" stroke-width="1.5"/><rect x="11" y="15" width="11" height="3" fill="#9fb4d6"/></svg><span class="t c" style="left:1122.0px;top:99.3px;color:#1f2329;font-size:11.6px;">平行标注</span><svg style="left:1174.2px;top:59.1px;width:30.6px;height:30.6px;" viewBox="0 0 24 24"><rect x="3" y="4" width="17" height="5" rx="2.5" fill="#dfe8f5" stroke="#3c5273" stroke-width="1.4"/><rect x="3" y="15" width="17" height="5" rx="2.5" fill="#dfe8f5" stroke="#3c5273" stroke-width="1.4"/><path d="M20 3l3 2-3 2M20 17l3 2-3 2" stroke="#3c5273" stroke-width="1.2" fill="none"/></svg><span class="t c" style="left:1189.5px;top:99.3px;color:#1f2329;font-size:11.6px;">断面符号</span><svg style="left:1242.6px;top:59.1px;width:30.6px;height:30.6px;" viewBox="0 0 24 24"><path d="M2 12H8M16 12H22" stroke="#3c5273" stroke-width="1.8"/><path d="M9 12h6" stroke="#3d8af2" stroke-width="2.4"/></svg><span class="t c" style="left:1257.9px;top:99.3px;color:#1f2329;font-size:11.6px;">管线文字</span><svg style="left:1310.7px;top:59.1px;width:30.6px;height:30.6px;" viewBox="0 0 24 24"><path d="M5 1V23" stroke="#3c5273" stroke-width="3"/><path d="M5 7H13" stroke="#3c5273" stroke-width="1.4"/><path d="M13 5h9M13 8h9" stroke="#3c5273" stroke-width="1.2"/><path d="M13 12l8 9M21 12l-8 9" stroke="#3d8af2" stroke-width="2"/><circle cx="21" cy="21" r="1.8" fill="#3d8af2"/></svg><span class="t c" style="left:1326.0px;top:99.3px;color:#1f2329;font-size:11.6px;">自动标注</span><svg style="left:1379.7px;top:59.1px;width:30.6px;height:30.6px;" viewBox="0 0 24 24"><rect x="3" y="2" width="18" height="20" fill="#eef1f6" stroke="#b5bdc9" stroke-width="1.4"/><path d="M3 8H21M3 15H21M9 2V22M15 2V22" stroke="#b5bdc9" stroke-width="1.1" stroke-dasharray="2 1.5"/></svg><span class="t c" style="left:1395.0px;top:99.3px;color:#a9b0bb;font-size:11.6px;">显示设置</span><svg style="left:1447.2px;top:59.1px;width:30.6px;height:30.6px;" viewBox="0 0 24 24"><rect x="2" y="3" width="20" height="5" rx="2.5" fill="#dfe8f5" stroke="#3c5273" stroke-width="1.5"/><path d="M12 8V19" stroke="#3d8af2" stroke-width="1.6"/><path d="M9.5 17l2.5 4 2.5-4z" fill="#3d8af2"/></svg><span class="t c" style="left:1462.5px;top:99.3px;color:#1f2329;font-size:11.6px;">梁底净高</span><svg style="left:1514.7px;top:59.1px;width:30.6px;height:30.6px;" viewBox="0 0 24 24"><rect x="4" y="5" width="5" height="17" fill="#dfe8f5" stroke="#3c5273" stroke-width="1.5"/><path d="M4 3h5" stroke="#3c5273" stroke-width="1.6"/><path d="M11 6l5-3M16 3h5" stroke="#3c5273" stroke-width="1.2" fill="none"/><path d="M14 12h4v4M14 16l4 0M13 21h7" stroke="#3d8af2" stroke-width="1.5" fill="none"/></svg><span class="t c" style="left:1530.0px;top:99.3px;color:#1f2329;font-size:11.6px;">立管排序</span><div style="left:640.8px;top:58.5px;width:1.5px;height:51.0px;background:#d5d9e0;"></div><div style="left:869.1px;top:58.5px;width:1.5px;height:51.0px;background:#d5d9e0;"></div><div style="left:6.0px;top:37.8px;width:31.2px;height:1009.2px;background:#f1f3f7;"></div><div style="left:36.6px;top:37.8px;width:1.0px;height:1009.2px;background:#dfe3ea;"></div><div style="left:6.0px;top:75.0px;width:31.2px;height:1.2px;background:#dde1e8;"></div><svg style="left:12.9px;top:49.8px;width:18.6px;height:17.4px;" viewBox="0 0 24 24"><path d="M3 3l8 9-8 9M12 3l8 9-8 9" stroke="#15181d" stroke-width="3.6" fill="none"/></svg><svg style="left:10.8px;top:92.4px;width:22.2px;height:22.2px;" viewBox="0 0 24 24"><circle cx="12" cy="12" r="11" fill="#7db8fb"/><path d="M6 14v-3a6 6 0 0 1 12 0v3" stroke="#fff" stroke-width="2.4" fill="none"/><rect x="4.5" y="12" width="4" height="6" rx="1.5" fill="#fff"/><rect x="15.5" y="12" width="4" height="6" rx="1.5" fill="#fff"/></svg><svg style="left:11.7px;top:145.5px;width:20.4px;height:20.4px;" viewBox="0 0 24 24"><path d="M12 2L22 7V17L12 22L2 17V7z" fill="#fff" stroke="#1d3461" stroke-width="2.2"/><path d="M12 12L22 7V17L12 22z" fill="#1d3461"/><path d="M2 7l10 5" stroke="#1d3461" stroke-width="2"/></svg><div style="left:6.0px;top:174.9px;width:31.2px;height:36.0px;background:#dce6f6;"></div><svg style="left:11.7px;top:182.7px;width:20.4px;height:20.4px;" viewBox="0 0 24 24"><circle cx="12" cy="12" r="11" fill="#4a90f0"/><ellipse cx="12" cy="12" rx="10" ry="4" fill="none" stroke="#cfe2fb" stroke-width="1.8" transform="rotate(-35 12 12)"/></svg><svg style="left:12.3px;top:218.4px;width:19.2px;height:19.2px;" viewBox="0 0 24 24"><path d="M1 3H10L12 7H23V22H1z" fill="#1d3461"/><rect x="10" y="11" width="8" height="8" fill="#fff"/><path d="M12 13h4v4h-4z" fill="#1d3461"/></svg><svg style="left:12.3px;top:254.7px;width:19.2px;height:18.6px;" viewBox="0 0 24 24"><rect x="1" y="2" width="22" height="5.4" fill="#1d3461"/><rect x="1" y="9.3" width="22" height="5.4" fill="#1d3461"/><rect x="1" y="16.6" width="22" height="5.4" fill="#1d3461"/></svg><svg style="left:12.6px;top:292.2px;width:18.6px;height:18.6px;" viewBox="0 0 24 24"><circle cx="12" cy="12" r="11.5" fill="#1d3461"/><path d="M8.5 9.5a3.5 3.5 0 1 1 5 3q-1.5 .8-1.5 2.5" stroke="#fff" stroke-width="2.6" fill="none"/><circle cx="12" cy="18.6" r="1.6" fill="#fff"/></svg><svg style="left:12.6px;top:976.5px;width:18.6px;height:19.8px;" viewBox="0 0 24 24"><path d="M12 2a7 7 0 0 1 7 7v6l3 4H2l3-4V9a7 7 0 0 1 7-7z" fill="#1d3461"/><circle cx="12" cy="21.5" r="2" fill="#1d3461"/></svg><div style="left:17.4px;top:969.6px;width:24.6px;height:12.6px;background:#f5343f;border-radius:6px;z-index:5;"></div><span class="t c" style="left:30.9px;top:975.9px;color:#fff;font-size:9px;z-index:6;">18</span><svg style="left:11.4px;top:1011.6px;width:21.0px;height:18.0px;" viewBox="0 0 24 21"><path d="M6 20a5 5 0 0 1-.5-10A7 7 0 0 1 19 9.5 5.3 5.3 0 0 1 18.5 20z" fill="#1d3461"/><path d="M12 17V11M9 13.5l3-3 3 3" stroke="#fff" stroke-width="2" fill="none"/></svg><div style="left:37.5px;top:112.5px;width:195.6px;height:40.8px;background:#e9ecf2;"></div><div style="left:81.6px;top:114.6px;width:1.4px;height:37.8px;background:#f7f8fa;"></div><div style="left:124.2px;top:114.6px;width:1.4px;height:37.8px;background:#f7f8fa;"></div><div style="left:166.8px;top:114.6px;width:1.4px;height:37.8px;background:#f7f8fa;"></div><div style="left:37.5px;top:112.5px;width:195.6px;height:1.2px;background:#f7f8fa;"></div><svg style="left:52.2px;top:127.8px;width:16.2px;height:16.8px;" viewBox="0 0 24 24"><rect x="1" y="1" width="22" height="22" rx="4" fill="#4a90f0"/><rect x="5" y="5" width="6" height="14" fill="#fff"/><rect x="12.5" y="5" width="6.5" height="14" fill="#bcd6fa"/></svg><svg style="left:93.6px;top:127.8px;width:18.0px;height:16.8px;" viewBox="0 0 24 24"><path d="M2 3H22L14 12V19L10 22V12z" fill="none" stroke="#1d3461" stroke-width="2.6"/><path d="M8 7h8" stroke="#1d3461" stroke-width="2.4"/></svg><svg style="left:135.6px;top:126.6px;width:19.2px;height:19.2px;" viewBox="0 0 24 24"><circle cx="12" cy="12" r="10" fill="none" stroke="#1d3461" stroke-width="2.2"/><path d="M7 10l5 4 5-4" stroke="#1d3461" stroke-width="2" fill="none"/></svg><div style="left:39.0px;top:153.6px;width:192.6px;height:848.4px;background:#fdfdfe;"></div><div style="left:228.6px;top:156.0px;width:2.7px;height:582.0px;background:#e3e6ec;border-radius:2px;"></div><svg style="left:45.3px;top:165.3px;width:7.8px;height:6.0px;" viewBox="0 0 10 7"><path d="M1 1.5L5 5.5L9 1.5" stroke="#5b6573" stroke-width="1.8" fill="none"/></svg><svg style="left:59.4px;top:160.2px;width:15.6px;height:16.2px;" viewBox="0 0 24 24"><rect x="2" y="2" width="20" height="20" rx="2" fill="#fff" stroke="#8e98a6" stroke-width="1.6"/><path d="M2 8H14V2" stroke="#8e98a6" stroke-width="1.4" fill="none"/><path d="M14 8l8-6" stroke="#8e98a6" stroke-width="1.2"/></svg><span class="t" style="left:82.5px;top:168.6px;">平面视图</span><div style="left:64.2px;top:192.7px;width:6.6px;height:0.9px;background:#c6ccd6;"></div><span class="t" style="left:75.3px;top:192.7px;">建筑-1F</span><div style="left:64.2px;top:216.8px;width:6.6px;height:0.9px;background:#c6ccd6;"></div><span class="t" style="left:75.3px;top:216.8px;">建筑室外地坪</span><div style="left:64.2px;top:240.9px;width:6.6px;height:0.9px;background:#c6ccd6;"></div><span class="t" style="left:75.3px;top:240.9px;">建筑1F</span><div style="left:64.2px;top:265.0px;width:6.6px;height:0.9px;background:#c6ccd6;"></div><span class="t" style="left:75.3px;top:265.0px;">建筑2F</span><div style="left:64.2px;top:289.0px;width:6.6px;height:0.9px;background:#c6ccd6;"></div><span class="t" style="left:75.3px;top:289.0px;">建筑3F</span><div style="left:64.2px;top:313.1px;width:6.6px;height:0.9px;background:#c6ccd6;"></div><span class="t" style="left:75.3px;top:313.1px;">建筑4F</span><div style="left:39.6px;top:325.5px;width:189.0px;height:23.4px;background:#dbe7f8;"></div><div style="left:64.2px;top:337.2px;width:6.6px;height:0.9px;background:#c6ccd6;"></div><span class="t" style="left:75.3px;top:337.2px;">建筑4F(天花)</span><div style="left:64.2px;top:361.3px;width:6.6px;height:0.9px;background:#c6ccd6;"></div><span class="t" style="left:75.3px;top:361.3px;">建筑5F</span><div style="left:64.2px;top:385.4px;width:6.6px;height:0.9px;background:#c6ccd6;"></div><span class="t" style="left:75.3px;top:385.4px;">建筑6F</span><div style="left:64.2px;top:409.5px;width:6.6px;height:0.9px;background:#c6ccd6;"></div><span class="t" style="left:75.3px;top:409.5px;">建筑7F</span><div style="left:64.2px;top:433.6px;width:6.6px;height:0.9px;background:#c6ccd6;"></div><span class="t" style="left:75.3px;top:433.6px;">建筑8F</span><div style="left:64.2px;top:457.7px;width:6.6px;height:0.9px;background:#c6ccd6;"></div><span class="t" style="left:75.3px;top:457.7px;">建筑9F</span><div style="left:64.2px;top:481.8px;width:6.6px;height:0.9px;background:#c6ccd6;"></div><span class="t" style="left:75.3px;top:481.8px;">建筑10F</span><div style="left:64.2px;top:505.9px;width:6.6px;height:0.9px;background:#c6ccd6;"></div><span class="t" style="left:75.3px;top:505.9px;">建筑11F</span><div style="left:64.2px;top:529.9px;width:6.6px;height:0.9px;background:#c6ccd6;"></div><span class="t" style="left:75.3px;top:529.9px;">建筑12F</span><div style="left:64.2px;top:554.0px;width:6.6px;height:0.9px;background:#c6ccd6;"></div><span class="t" style="left:75.3px;top:554.0px;">建筑13F</span><div style="left:64.2px;top:578.1px;width:6.6px;height:0.9px;background:#c6ccd6;"></div><span class="t" style="left:75.3px;top:578.1px;">建筑14F</span><div style="left:64.2px;top:602.2px;width:6.6px;height:0.9px;background:#c6ccd6;"></div><span class="t" style="left:75.3px;top:602.2px;">建筑15F</span><div style="left:64.2px;top:626.3px;width:6.6px;height:0.9px;background:#c6ccd6;"></div><span class="t" style="left:75.3px;top:626.3px;">建筑16F</span><div style="left:64.2px;top:650.4px;width:6.6px;height:0.9px;background:#c6ccd6;"></div><span class="t" style="left:75.3px;top:650.4px;">建筑17F</span><div style="left:64.2px;top:674.5px;width:6.6px;height:0.9px;background:#c6ccd6;"></div><span class="t" style="left:75.3px;top:674.5px;">建筑18F</span><div style="left:64.2px;top:698.6px;width:6.6px;height:0.9px;background:#c6ccd6;"></div><span class="t" style="left:75.3px;top:698.6px;">建筑19F</span><div style="left:64.2px;top:722.7px;width:6.6px;height:0.9px;background:#c6ccd6;"></div><span class="t" style="left:75.3px;top:722.7px;">建筑20F</span><div style="left:64.2px;top:746.8px;width:6.6px;height:0.9px;background:#c6ccd6;"></div><span class="t" style="left:75.3px;top:746.8px;">建筑21F</span><div style="left:64.2px;top:770.8px;width:6.6px;height:0.9px;background:#c6ccd6;"></div><span class="t" style="left:75.3px;top:770.8px;">建筑RF</span><div style="left:64.2px;top:794.9px;width:6.6px;height:0.9px;background:#c6ccd6;"></div><span class="t" style="left:75.3px;top:794.9px;">建筑RF(架构层)</span><svg style="left:45.3px;top:815.7px;width:7.8px;height:6.0px;" viewBox="0 0 10 7"><path d="M1 1.5L5 5.5L9 1.5" stroke="#5b6573" stroke-width="1.8" fill="none"/></svg><svg style="left:59.4px;top:810.6px;width:15.6px;height:16.2px;" viewBox="0 0 24 24"><rect x="2" y="2" width="20" height="20" rx="2" fill="#fff" stroke="#8e98a6" stroke-width="1.6"/><path d="M2 8H14V2" stroke="#8e98a6" stroke-width="1.4" fill="none"/><path d="M14 8l8-6" stroke="#8e98a6" stroke-width="1.2"/></svg><span class="t" style="left:82.5px;top:819.0px;">三维视图</span><div style="left:64.2px;top:843.1px;width:6.6px;height:0.9px;background:#c6ccd6;"></div><span class="t" style="left:75.3px;top:843.1px;">三维</span><div style="left:64.2px;top:867.2px;width:6.6px;height:0.9px;background:#c6ccd6;"></div><span class="t" style="left:75.3px;top:867.2px;">三维(雨水)</span><svg style="left:45.3px;top:888.0px;width:7.8px;height:6.0px;" viewBox="0 0 10 7"><path d="M1 1.5L5 5.5L9 1.5" stroke="#5b6573" stroke-width="1.8" fill="none"/></svg><svg style="left:59.4px;top:882.9px;width:15.6px;height:16.2px;" viewBox="0 0 24 24"><rect x="2" y="2" width="20" height="20" rx="2" fill="#fff" stroke="#8e98a6" stroke-width="1.6"/><path d="M2 8H14V2" stroke="#8e98a6" stroke-width="1.4" fill="none"/><path d="M14 8l8-6" stroke="#8e98a6" stroke-width="1.2"/></svg><span class="t" style="left:82.5px;top:891.3px;">立面视图</span><div style="left:64.2px;top:915.4px;width:6.6px;height:0.9px;background:#c6ccd6;"></div><span class="t" style="left:75.3px;top:915.4px;">东</span><div style="left:64.2px;top:939.5px;width:6.6px;height:0.9px;background:#c6ccd6;"></div><span class="t" style="left:75.3px;top:939.5px;">南</span><div style="left:64.2px;top:963.6px;width:6.6px;height:0.9px;background:#c6ccd6;"></div><span class="t" style="left:75.3px;top:963.6px;">西</span><div style="left:64.2px;top:987.7px;width:6.6px;height:0.9px;background:#c6ccd6;"></div><span class="t" style="left:75.3px;top:987.7px;">北</span><div style="left:63.9px;top:179.1px;width:0.9px;height:615.8px;background:#c6ccd6;"></div><div style="left:63.9px;top:829.5px;width:0.9px;height:37.7px;background:#c6ccd6;"></div><div style="left:63.9px;top:901.8px;width:0.9px;height:85.9px;background:#c6ccd6;"></div><div style="left:49.2px;top:179.1px;width:0.9px;height:819.1px;background:#c6ccd6;"></div><div style="left:233.1px;top:112.5px;width:1698.9px;height:32.4px;background:#dfe3ea;"></div><div style="left:233.1px;top:112.5px;width:6.9px;height:912.0px;background:#e6e9ef;"></div><div style="left:240.0px;top:112.5px;width:816.0px;height:32.7px;background:#e8ebf1;"></div><div style="left:240.0px;top:144.9px;width:1398.0px;height:2.4px;background:#f3f5f8;z-index:3;"></div><svg style="left:247.8px;top:120.9px;width:12.6px;height:15.0px;" viewBox="0 0 20 24"><rect x="2" y="2" width="6" height="8" fill="#9aa7bd"/><rect x="12" y="2" width="6" height="8" fill="#9aa7bd"/><rect x="2" y="14" width="6" height="8" fill="#9aa7bd"/><rect x="12" y="14" width="6" height="8" fill="#9aa7bd"/></svg><svg style="left:277.2px;top:122.4px;width:15.0px;height:12.6px;" viewBox="0 0 24 24"><path d="M3 3H21V17H12L9 21V17H3z" fill="none" stroke="#9aa7bd" stroke-width="2.4"/></svg><span class="t c" style="left:347.7px;top:129.6px;color:#9aa3b0;">建筑R1F</span><div style="left:423.0px;top:115.2px;width:1.4px;height:28.2px;background:#f4f6f9;"></div><span class="t c" style="left:460.8px;top:129.6px;color:#9aa3b0;">三维</span><div style="left:526.2px;top:115.2px;width:1.4px;height:28.2px;background:#f4f6f9;"></div><span class="t c" style="left:581.5px;top:129.6px;color:#9aa3b0;">三维(雨水)</span><div style="left:664.5px;top:115.2px;width:1.4px;height:28.2px;background:#f4f6f9;"></div><span class="t c" style="left:709.5px;top:129.6px;color:#9aa3b0;">建筑1F</span><div style="left:782.1px;top:114.6px;width:157.5px;height:30.6px;background:#fbfbfc;"></div><span class="t c" style="left:847.9px;top:129.6px;color:#1f2329;">建筑4F(天花)</span><svg style="left:922.5px;top:124.2px;width:10.8px;height:10.8px;" viewBox="0 0 24 24"><path d="M2 2L22 22M22 2L2 22" stroke="#2a2f36" stroke-width="3"/></svg><span class="t c" style="left:984.0px;top:129.6px;color:#9aa3b0;">建筑5F</span><div style="left:1056.0px;top:115.2px;width:1.4px;height:28.2px;background:#f4f6f9;"></div><div style="left:299.1px;top:115.2px;width:1.4px;height:28.2px;background:#f4f6f9;"></div><div style="left:240.0px;top:145.2px;width:1398.6px;height:879.6px;background:#fbfbfb;overflow:hidden;"><svg style="left:0;top:0;width:1397.4px;height:879.6px;" viewBox="80 48.4 465.8 293.2"><g transform="scale(1.0012 1) translate(-661.1 0)"><defs><pattern id="stip" width="3.4" height="3" patternUnits="userSpaceOnUse"><circle cx=".7" cy=".7" r=".42" fill="#5c5c5c"/><circle cx="2.4" cy="2.2" r=".42" fill="#5c5c5c"/></pattern><pattern id="hat" width="2.6" height="2.6" patternUnits="userSpaceOnUse"><path d="M-0.5 3.1L3.1 -0.5" stroke="#b9b9b9" stroke-width=".35"/></pattern></defs><rect x="851" y="154" width="304" height="54.5" fill="url(#stip)" stroke="none" stroke-width="0" opacity=".95"/><rect x="1090" y="136" width="65" height="20" fill="url(#stip)" stroke="none" stroke-width="0" opacity=".9"/><rect x="823" y="208.5" width="332" height="46" fill="url(#hat)" stroke="none" stroke-width="0" opacity=".9"/><rect x="823" y="254.5" width="160" height="17" fill="url(#hat)" stroke="none" stroke-width="0" opacity=".8"/><rect x="823" y="208" width="26" height="64" fill="#e4e4e4" stroke="none" stroke-width="0" opacity=".45"/><rect x="823" y="270.5" width="160" height="1.6" fill="#cfcfcf" stroke="none" stroke-width="0.4" /><rect x="823" y="97" width="332" height="175" fill="none" stroke="#c4c4c4" stroke-width="0.5" opacity=".6"/><rect x="800" y="272" width="355" height="18" fill="none" stroke="#d0d0d0" stroke-width="0.4" stroke-dasharray="1 1" opacity=".7"/><rect x="823" y="98" width="38" height="40" fill="none" stroke="#bdbdbd" stroke-width="1.2" opacity=".8"/><rect x="1076" y="98" width="79" height="56" fill="none" stroke="#bdbdbd" stroke-width="1.6" opacity=".75"/><rect x="1118" y="98" width="37" height="56" fill="none" stroke="#b5b5b5" stroke-width="1.8" opacity=".75"/><rect x="1122" y="124" width="12.5" height="13" fill="none" stroke="#b5b5b5" stroke-width="0.6" /><path d="M1122 124L1134.5 137" stroke="#c5c5c5" stroke-width="0.4" fill="none" /><path d="M1134.5 124L1122 137" stroke="#c5c5c5" stroke-width="0.4" fill="none" /><rect x="1122" y="139" width="12.5" height="13" fill="none" stroke="#b5b5b5" stroke-width="0.6" /><path d="M1122 139L1134.5 152" stroke="#c5c5c5" stroke-width="0.4" fill="none" /><path d="M1134.5 139L1122 152" stroke="#c5c5c5" stroke-width="0.4" fill="none" /><path d="M952.93 205.04h12M1101.51 133.65h20M1012.55 132.93h12M819.46 253.26v30M1005.72 173.46v12M1013.14 127.4v3M809.31 103.88v5M1073.12 159.97v20M977.56 220.58h12M817.36 223.38v12M1153.41 259.16h1.59M1065.7 195.99h3M1068.76 174.28h8M1139.52 260.53h3M1128.08 107.1v12M932.65 111.1h30M1035.04 162.02h8M1141.74 243.3h3M1046.89 99.11v12M851.56 204.94v12M1149.57 245.52v12M828.99 178.21h5M1104.94 285.15h20M1112.52 137.67v12M1008.14 208.35v3M864.69 146.85h20M895.34 111.17h3M1020.9 99.99h8M953.23 282.11v7.89M836.09 171.52h30M1121.21 254.84v5M844.48 218.39h20M1136.6 267.26h18.4M803.49 118.05v20M873.97 232.98h8M1119.88 191.76h20M1051.81 110.27h5M1027.14 215.86h3M1124.51 136.37h3M937.82 145.07h3M922.08 207.43h5M837.07 183.92v8M1041.06 209.8v5M1126.8 188.64v8M1141.26 101.1h13.74M810.82 157.04v5M813.77 202.4h30M1131.48 239.27v5M1123.64 164.9h30M814.66 262.46v3M997.37 217.62h12M790.59 110.94v3M1152.54 266.8h2.46M1130.74 230.97h12M1095.36 113.17h20M1007.87 189.82v5M827.65 247.53v30M880.4 99.18h8M1011.74 197.05v8M949.07 269.1h8M878.47 219.4v5M927.85 209.54h8M835.65 164.69v3M1136.55 150.42h5M959.93 275.67h12M977.87 226.72v30M1148.37 184.33v3M888.63 214.26v30M996.54 156.64h20M836.14 184.78v3M884.31 247.4v3M828.55 118.04v20M1083.93 281.98h30M1090 146.42h30M960.24 234.83h5M1073.3 201.16v20M1153.82 127.72v30M818.18 276.99h30M952.24 135h3M995.89 266.71h8M1026.34 136.54v30M1080.58 275.38h3M1118.09 286.24v3.76M1077.8 158.84v30M914.6 112.98h12M941.5 150.12h3M1106.13 179.78h3M909.62 249.07h5M1154.94 270.81v19.19M1040.38 279.53v10.47M1040.26 243.26v12M893.07 237.67h30M975.75 272.09h8M926.67 260.14h20M1099.93 283.91h20M969.63 176.34v3M1009.33 102.36v3M933.82 251.61h20M820.4 129.19h20M1125.77 251.48h12M960.6 121.5v12M1131.27 274.56h20M856.65 216.25h8M1073.56 101.4h5M790.37 151.83h30M1014.69 117.24v30M1100.36 217.34h30M981.7 181.3v12M1090.49 215.85h20M1018.96 220.22h20M986.35 210.22h5M1059.34 253.43h5M902.23 275.09v5M857.79 115.69h5M818.53 171.86v12M941.58 249.46h5M1017.73 251.18h3M1037.8 272.89h8M972.6 243.32v20M1093.36 251.95h12M799.81 203.47v20M963.59 133.59h3M1096.04 288.13h30M808.86 280.64h12M821.69 172.44v12M944.7 212.98v3M801.08 135.65h12M1058.81 175.22v5M820.98 249.92v8M1081.83 233v30M996.21 133.85v20M1082.98 146.84v3M1073.08 254.23h12M907.74 201v8M1068.37 175.31h30M1080.22 155.23h3M917.23 220.27h20M886.73 282.55h8M1029.45 206.93h20M975.92 193.04v5M1067.08 286.16h3M825.87 142.75h12M804.62 134.72h12M881.41 150.21v8M973.39 283.66v6.34M822.77 182.76h30M1006.49 243.53h3M1132.34 171.48v5M985.98 212.14v12M941.24 198.66h20M981.72 190.27v8M890.62 235.3h8M1071.05 210.06h30M1064.46 172.26v8M804.51 287.83h8M1120.15 179.9h12M1064.78 105.77v3M1052.69 187.39v5M828.47 217.48h12M1103.76 165.84h5M949.42 225.9v12M1022.01 228.63v8M981.85 289.54v0.46M873.97 118.98v8M1016.62 166.32v8M1053.55 231.91v5M1063.99 133.63v5M1026.93 134.82h30M808.43 149.29h12M800.04 139.95h8M817.9 227.52h20M1148.17 190.41h6.83M912.83 240.75v3M951.06 255.65h5M1061.76 172.29h5M1027.2 287.91h8M1066.07 256.45h5M922.26 115.72h8M816.63 205.89v12M957.04 255.93h3M864.69 224.78v3M968.57 244.48h8M838.74 166.06h30M1120.42 159.23v12M1124.95 278.41h8M1082.33 155.82h8M1143.11 237.85h11.89M919.47 167.55v8M1001.79 250.65v30M1080.12 201.33v20M851.16 243.48v8M867.64 108.14v5M1142.61 222.68h12M987.78 249.1h3M886.97 117.34h8M1019.99 124.77v30M941.74 234.46v12M978.45 244.59h12M1083.88 161.26h5M984.28 236.14v30M803.06 243.11h30M787.43 169.95v3M1139.42 220.57h15.58M789.74 118.22v12M876.67 128.31h30M847.86 136.44v12M887.12 268.01h12M828.37 222.06v5M1063.91 100.31v12M799.42 117.97h5M1003.1 212.81v12M868.64 132.7h8M1122.04 277.91v12.09M1087.52 189.54h8M934.57 281.45v8.55M1139.14 190.14h5M866.23 122.92v12M1079.25 246.41v3M873.68 99.1v12M952.06 144.58v12M844.04 127.28h8M1121.09 253.33v5M1152.46 148.44h2.54M997.02 131.41v5M1098.24 255.66h3M1012.88 198.89v12M816.57 241.48v20M898.03 249.34h12M1037.74 247.81h12M986.5 198.45v5M1141.69 158.01h12M898.8 187.17h30M813.43 124.13h30M956.39 283.61v3M790.56 169.79h30M894.29 118.87v3M1097.62 235.81h20M1017.65 277.93h30M910.5 172.69h30M855.61 169.67h3M1134.72 205.62v30M950.89 170.81h3M820.83 227.8h30M857.28 104.04v12M819.25 140.73v5M946.08 245.84v8M943.57 195.73h30M840.6 230.42h12M938.08 99.98v12M903.23 249.23v5M1010.57 100.58h8M899.2 182.16h20M973.95 249.19v3M844.43 244.94v8M916.09 193.58v5M859.12 277.17v12.83M1131.35 206.5v3M859.02 113.06h5M940.06 161.38v3M919.28 186.37h3M1055.29 143.06v20M992.91 205.15h8M1061.17 270.11v8M831.26 256.16v8M920.18 243.36v8M854.48 202.74h3M934.85 248.06h30M1065 260.54v12M1022.28 244.32h5M958.7 124.6h12M935.72 161.89h5M995.6 161.09v30M1052.28 248.99v12M1007.43 187.69v12M1122.92 206v12M965.26 288.96h30M946.13 206.23h20M978.13 178.13h3M806.18 237.04v12M1006.49 242.11v8M1109.63 144.16h12M1108.16 284.7v5.3M980.18 143.16v8M1132.95 266.79v23.21M1031.64 264.23v12M846.56 222.35v12M1119.36 116.02h5M984.37 280.54h3M1054.7 101.62h5M1116.3 254.38h12M1041.45 141.54h8M1117.55 156.41h12M1072.59 246.87h5M1102.97 230.66h3M1095.19 165.35h12M1020.45 231.7h20M1019.35 133.96v3M898.94 254.81v8M1049.15 123.03v30M1073.42 177.13h5M899.34 234.13h5M1051.73 193.78v8M923.46 224.77v3M870.5 155.08v5M888.15 220.51h3M814.14 274.01v3M802.73 212.74v8M942.25 206.73h5M1064.85 144.46v8M796.64 249.54v5M798.4 186.1h20M1128.9 193.48h5M1072.63 272.57v8M1074.93 196.73v20M1020.22 286.8v3.2M850.18 247.47h5M946.72 226.01v20M1076.24 249.69h5M986.79 261.56h20M799.04 212.19h30M951.45 266.97h8M792.56 192.75v12M1052.84 262.34h3M1120.8 206.8v20M1052.49 217.28h3M801.62 157.67v20M1074.08 244.7h12M1088.79 130.12h8M969.35 224.19v20M808.56 176.25v8M1045.69 281.74h5M1066.91 287.33v2.67M978.5 287.23h3M1114.44 124.32v12M960.13 277.56v3M1050.58 285.38h20M879.43 203.51h5M817.74 140.86h8M1148.08 214.9h3M1001.95 288.98h30M1042.34 263.83v20M851.42 262.97h5M1074.32 138.57h8M1078.72 252.2h12M865.13 187.27h8M966.89 217.94v5M861.49 170.91h3M888.03 280.1h20M853.18 147.63v12M1025.65 138.99h3M842.65 277.77h8M874.88 258.99h3M904.85 171.19v3M926.73 146.46v20M897.53 214.33h12M841.67 211.91h3M937.54 189.37h30M1046.74 147.26h30M925.11 266.86v8M951.82 123.38v20M869.41 153.37v8M837.77 260.7v29.3M994.83 253.09h30M1033.41 274.38v5M916.39 120.57h8M1019.4 114.35h12M967.89 191.55h8M1045.53 139.77h12M1069.5 164.69h30M820.33 162.97v12M962.5 146.6h20M1123.47 271.19h3M809.22 175.04h3M1098.47 154.9h30M879.5 101.54h8M923.74 154.38v30M1023.02 171.19v8M919.81 208.2v5M1017.49 216.82v12M809.48 110.19v12M926.91 272.56v3M1038.18 149.66h12M1146.5 125.92h5M881.26 139.47h20M986.67 173.02v5M1099.27 244.7v3M992.92 257.4h8M824.34 100.74h30M932.21 127.19v5M844.84 216.97v12M894.37 177.06v8M983.04 142.75h5M1046.58 274.07h30M809.33 110.25v3M900.45 260.85v20M963.38 128.38v12M805.72 146v20M1042.02 145.82h30M1050.1 160.08v8M861.59 205.8v5M941.2 233.44v20M885.24 128.04h5M1032.99 141.59v5M960.11 230.91h5M886.04 145.63h30M1130.42 287.84h3M1154.02 265.07h0.98M1055.83 288.77h3M1119.85 257.72h12M810.86 181.69h30M930.53 216.23v5M929.67 230.95h20M1105.8 182.35v3M1116.87 266.94h12M905.43 100.71v20M887.02 174.23h8M963.93 167.61v8M841.95 98.38v8M787.48 161.91v5M860.61 264.38h12" stroke="#888" stroke-width="0.4" fill="none" opacity="0.22"/><path d="M808.49 199.44h20M821.24 217.21h20M798.07 150.22v5M814.36 249.57h30M840.87 269.88h9.13M790.78 162.68h20M818.91 98.92h5M809.33 237.34v8M836.71 231.58h12M820.01 218.86v3M816.85 250.71h12M844.22 101.3h5.78M806.71 229.55v20M837.89 163.74h12.11M805.98 109.2h30M792.03 158.27h30M789 120.93v8M797.35 116.37h5M797.67 101.02v12M811.81 155.83v20M834.74 100.81h5M834.26 116.83h8M847.61 137.19v12M842.82 245.7v3M846.65 155.97v5M819.61 98.84v30M810.2 214.83v5M808.05 177.42v30M818.31 200.9h3M833.28 233.18v12M812.84 167.39h5M820.63 104.79v3M814.91 149v3M845.62 124.8h4.38M802.38 210.98v5M849.32 170.58v5M843.43 117.32v5M827.55 268.6v3M818.74 278.84h3M788.45 159.66v20M815.06 195.15h12M803.9 214.8h3M814.19 235.54h5M817.79 107.24v20M790.21 269.32h8M807.36 266.98v5M793.51 130.25h12M829.64 182.22h12M849.22 134.83h0.78M847.25 274.54v5.46M813.57 99.81v8M840.06 270.11v9.89M830.47 130.06h5M823.15 104.57h8M846.23 208.63h3.77M786.51 109.63v5M809.06 153.78h12M790.57 145.65v8M812.18 180.59h20M792.08 191.03h12M823.07 149.13v8M791 215.65v5M810.81 233.02h20M826.94 164.17h8M814.22 271.68v8M786.81 208.74h3M794.46 260.85h8M803.81 115.68h20M828.08 179.92h5M809.27 165.53v30M830.63 278.15v1.85M795.97 110.27h5M806.23 219.77h20M800.22 100.84h12M800.72 196.07v3M790.26 181.59v12M845.65 191.77h4.35M809.67 123.16h12M836.86 97.66v30M836.33 262.82v17.18M832.78 239.01h3M795.97 164.88v8M843.33 101.43h6.67M821.91 275.32h3M818.47 119.8h20M828.41 190.28h8M835.76 142.16h12M849.35 204.76v5M815.4 252.69v3M818.24 123.34v20M812.01 209.03v30M812.46 98.96v5M793.01 231.92h12M819.99 102.22h3M844.37 196.4h3M805.17 136.28h20M844.8 157.17h5.2M849.57 199.5v5M818.06 262.41v12M803.11 206.76h5M813.47 184.27v8M807.37 118.37v8M789.95 193.6h20M838.39 220.53h11.61M806.12 185.57v5M819.72 231.16h8M847.84 98.3h2.16M801.76 273.29h30M805.28 208.48h20M797.76 118.58h8M791.94 143.11v8M846.4 215.44h3.6M804.29 221.42h3M800.42 142.81h3M838.44 241.26h11.56M849.98 186.73v12M821.33 266.7v13.3M825.49 221.96v5M786.36 231.86h12M826.03 264.17h3" stroke="#888" stroke-width="0.4" fill="none" opacity="0.25"/><path d="M786 97.5L1155 97.5" stroke="#aaa" stroke-width="0.4" opacity=".5"/><path d="M786 99.5L1155 99.5" stroke="#aaa" stroke-width="0.4" opacity=".5"/><path d="M786 104.5L1155 104.5" stroke="#aaa" stroke-width="0.4" opacity=".5"/><path d="M786 121L1155 121" stroke="#aaa" stroke-width="0.4" opacity=".5"/><path d="M786 152.5L1155 152.5" stroke="#aaa" stroke-width="0.4" opacity=".5"/><path d="M786 272L1155 272" stroke="#aaa" stroke-width="0.4" opacity=".5"/><path d="M786 289L1155 289" stroke="#aaa" stroke-width="0.4" opacity=".5"/><rect x="856.6" y="99.2" width="4.5" height="4.5" fill="#c9c9c9" stroke="none" stroke-width="0" opacity=".8"/><rect x="856.6" y="149.8" width="4.5" height="4.5" fill="#c9c9c9" stroke="none" stroke-width="0" opacity=".8"/><rect x="856.6" y="169.8" width="4.5" height="4.5" fill="#c9c9c9" stroke="none" stroke-width="0" opacity=".8"/><rect x="856.6" y="197.8" width="4.5" height="4.5" fill="#c9c9c9" stroke="none" stroke-width="0" opacity=".8"/><rect x="900.2" y="99.2" width="4.5" height="4.5" fill="#c9c9c9" stroke="none" stroke-width="0" opacity=".8"/><rect x="900.2" y="149.8" width="4.5" height="4.5" fill="#c9c9c9" stroke="none" stroke-width="0" opacity=".8"/><rect x="900.2" y="169.8" width="4.5" height="4.5" fill="#c9c9c9" stroke="none" stroke-width="0" opacity=".8"/><rect x="900.2" y="197.8" width="4.5" height="4.5" fill="#c9c9c9" stroke="none" stroke-width="0" opacity=".8"/><rect x="943.8" y="99.2" width="4.5" height="4.5" fill="#c9c9c9" stroke="none" stroke-width="0" opacity=".8"/><rect x="943.8" y="149.8" width="4.5" height="4.5" fill="#c9c9c9" stroke="none" stroke-width="0" opacity=".8"/><rect x="943.8" y="169.8" width="4.5" height="4.5" fill="#c9c9c9" stroke="none" stroke-width="0" opacity=".8"/><rect x="943.8" y="197.8" width="4.5" height="4.5" fill="#c9c9c9" stroke="none" stroke-width="0" opacity=".8"/><rect x="987.4" y="99.2" width="4.5" height="4.5" fill="#c9c9c9" stroke="none" stroke-width="0" opacity=".8"/><rect x="987.4" y="149.8" width="4.5" height="4.5" fill="#c9c9c9" stroke="none" stroke-width="0" opacity=".8"/><rect x="987.4" y="169.8" width="4.5" height="4.5" fill="#c9c9c9" stroke="none" stroke-width="0" opacity=".8"/><rect x="987.4" y="197.8" width="4.5" height="4.5" fill="#c9c9c9" stroke="none" stroke-width="0" opacity=".8"/><rect x="1031" y="99.2" width="4.5" height="4.5" fill="#c9c9c9" stroke="none" stroke-width="0" opacity=".8"/><rect x="1031" y="149.8" width="4.5" height="4.5" fill="#c9c9c9" stroke="none" stroke-width="0" opacity=".8"/><rect x="1031" y="169.8" width="4.5" height="4.5" fill="#c9c9c9" stroke="none" stroke-width="0" opacity=".8"/><rect x="1031" y="197.8" width="4.5" height="4.5" fill="#c9c9c9" stroke="none" stroke-width="0" opacity=".8"/><rect x="1074.6" y="99.2" width="4.5" height="4.5" fill="#c9c9c9" stroke="none" stroke-width="0" opacity=".8"/><rect x="1074.6" y="149.8" width="4.5" height="4.5" fill="#c9c9c9" stroke="none" stroke-width="0" opacity=".8"/><rect x="1074.6" y="169.8" width="4.5" height="4.5" fill="#c9c9c9" stroke="none" stroke-width="0" opacity=".8"/><rect x="1074.6" y="197.8" width="4.5" height="4.5" fill="#c9c9c9" stroke="none" stroke-width="0" opacity=".8"/><rect x="1118.2" y="99.2" width="4.5" height="4.5" fill="#c9c9c9" stroke="none" stroke-width="0" opacity=".8"/><rect x="1118.2" y="149.8" width="4.5" height="4.5" fill="#c9c9c9" stroke="none" stroke-width="0" opacity=".8"/><rect x="1118.2" y="169.8" width="4.5" height="4.5" fill="#c9c9c9" stroke="none" stroke-width="0" opacity=".8"/><rect x="1118.2" y="197.8" width="4.5" height="4.5" fill="#c9c9c9" stroke="none" stroke-width="0" opacity=".8"/><circle cx="934.8" cy="111.4" r="3.3" fill="none" stroke="#cfcfcf" stroke-width="0.5"/><path d="M931.8 108.4L937.8 114.4" stroke="#d2d2d2" stroke-width="0.5" fill="none" /><path d="M937.8 108.4L931.8 114.4" stroke="#d2d2d2" stroke-width="0.5" fill="none" /><circle cx="934.8" cy="127" r="3.3" fill="none" stroke="#cfcfcf" stroke-width="0.5"/><path d="M931.8 124L937.8 130" stroke="#d2d2d2" stroke-width="0.5" fill="none" /><path d="M937.8 124L931.8 130" stroke="#d2d2d2" stroke-width="0.5" fill="none" /><circle cx="934.8" cy="142.7" r="3.3" fill="none" stroke="#cfcfcf" stroke-width="0.5"/><path d="M931.8 139.7L937.8 145.7" stroke="#d2d2d2" stroke-width="0.5" fill="none" /><path d="M937.8 139.7L931.8 145.7" stroke="#d2d2d2" stroke-width="0.5" fill="none" /><circle cx="958.3" cy="111.4" r="3.3" fill="none" stroke="#cfcfcf" stroke-width="0.5"/><path d="M955.3 108.4L961.3 114.4" stroke="#d2d2d2" stroke-width="0.5" fill="none" /><path d="M961.3 108.4L955.3 114.4" stroke="#d2d2d2" stroke-width="0.5" fill="none" /><circle cx="958.3" cy="127" r="3.3" fill="none" stroke="#cfcfcf" stroke-width="0.5"/><path d="M955.3 124L961.3 130" stroke="#d2d2d2" stroke-width="0.5" fill="none" /><path d="M961.3 124L955.3 130" stroke="#d2d2d2" stroke-width="0.5" fill="none" /><circle cx="958.3" cy="142.7" r="3.3" fill="none" stroke="#cfcfcf" stroke-width="0.5"/><path d="M955.3 139.7L961.3 145.7" stroke="#d2d2d2" stroke-width="0.5" fill="none" /><path d="M961.3 139.7L955.3 145.7" stroke="#d2d2d2" stroke-width="0.5" fill="none" /><circle cx="980.4" cy="111.4" r="3.3" fill="none" stroke="#cfcfcf" stroke-width="0.5"/><path d="M977.4 108.4L983.4 114.4" stroke="#d2d2d2" stroke-width="0.5" fill="none" /><path d="M983.4 108.4L977.4 114.4" stroke="#d2d2d2" stroke-width="0.5" fill="none" /><circle cx="980.4" cy="127" r="3.3" fill="none" stroke="#cfcfcf" stroke-width="0.5"/><path d="M977.4 124L983.4 130" stroke="#d2d2d2" stroke-width="0.5" fill="none" /><path d="M983.4 124L977.4 130" stroke="#d2d2d2" stroke-width="0.5" fill="none" /><circle cx="980.4" cy="142.7" r="3.3" fill="none" stroke="#cfcfcf" stroke-width="0.5"/><path d="M977.4 139.7L983.4 145.7" stroke="#d2d2d2" stroke-width="0.5" fill="none" /><path d="M983.4 139.7L977.4 145.7" stroke="#d2d2d2" stroke-width="0.5" fill="none" /><circle cx="890" cy="111.4" r="3.3" fill="none" stroke="#cfcfcf" stroke-width="0.5"/><path d="M887 108.4L893 114.4" stroke="#d2d2d2" stroke-width="0.5" fill="none" /><path d="M893 108.4L887 114.4" stroke="#d2d2d2" stroke-width="0.5" fill="none" /><circle cx="890" cy="127" r="3.3" fill="none" stroke="#cfcfcf" stroke-width="0.5"/><path d="M887 124L893 130" stroke="#d2d2d2" stroke-width="0.5" fill="none" /><path d="M893 124L887 130" stroke="#d2d2d2" stroke-width="0.5" fill="none" /><circle cx="890" cy="142.7" r="3.3" fill="none" stroke="#cfcfcf" stroke-width="0.5"/><path d="M887 139.7L893 145.7" stroke="#d2d2d2" stroke-width="0.5" fill="none" /><path d="M893 139.7L887 145.7" stroke="#d2d2d2" stroke-width="0.5" fill="none" /><circle cx="1024" cy="111.4" r="3.3" fill="none" stroke="#cfcfcf" stroke-width="0.5"/><path d="M1021 108.4L1027 114.4" stroke="#d2d2d2" stroke-width="0.5" fill="none" /><path d="M1027 108.4L1021 114.4" stroke="#d2d2d2" stroke-width="0.5" fill="none" /><circle cx="1024" cy="127" r="3.3" fill="none" stroke="#cfcfcf" stroke-width="0.5"/><path d="M1021 124L1027 130" stroke="#d2d2d2" stroke-width="0.5" fill="none" /><path d="M1027 124L1021 130" stroke="#d2d2d2" stroke-width="0.5" fill="none" /><circle cx="1024" cy="142.7" r="3.3" fill="none" stroke="#cfcfcf" stroke-width="0.5"/><path d="M1021 139.7L1027 145.7" stroke="#d2d2d2" stroke-width="0.5" fill="none" /><path d="M1027 139.7L1021 145.7" stroke="#d2d2d2" stroke-width="0.5" fill="none" /><circle cx="1046" cy="111.4" r="3.3" fill="none" stroke="#cfcfcf" stroke-width="0.5"/><path d="M1043 108.4L1049 114.4" stroke="#d2d2d2" stroke-width="0.5" fill="none" /><path d="M1049 108.4L1043 114.4" stroke="#d2d2d2" stroke-width="0.5" fill="none" /><circle cx="1046" cy="127" r="3.3" fill="none" stroke="#cfcfcf" stroke-width="0.5"/><path d="M1043 124L1049 130" stroke="#d2d2d2" stroke-width="0.5" fill="none" /><path d="M1049 124L1043 130" stroke="#d2d2d2" stroke-width="0.5" fill="none" /><circle cx="1046" cy="142.7" r="3.3" fill="none" stroke="#cfcfcf" stroke-width="0.5"/><path d="M1043 139.7L1049 145.7" stroke="#d2d2d2" stroke-width="0.5" fill="none" /><path d="M1049 139.7L1043 145.7" stroke="#d2d2d2" stroke-width="0.5" fill="none" /><circle cx="1068" cy="111.4" r="3.3" fill="none" stroke="#cfcfcf" stroke-width="0.5"/><path d="M1065 108.4L1071 114.4" stroke="#d2d2d2" stroke-width="0.5" fill="none" /><path d="M1071 108.4L1065 114.4" stroke="#d2d2d2" stroke-width="0.5" fill="none" /><circle cx="1068" cy="127" r="3.3" fill="none" stroke="#cfcfcf" stroke-width="0.5"/><path d="M1065 124L1071 130" stroke="#d2d2d2" stroke-width="0.5" fill="none" /><path d="M1071 124L1065 130" stroke="#d2d2d2" stroke-width="0.5" fill="none" /><circle cx="1068" cy="142.7" r="3.3" fill="none" stroke="#cfcfcf" stroke-width="0.5"/><path d="M1065 139.7L1071 145.7" stroke="#d2d2d2" stroke-width="0.5" fill="none" /><path d="M1071 139.7L1065 145.7" stroke="#d2d2d2" stroke-width="0.5" fill="none" /><path d="M803 88.2L1136.5 88.2" stroke="#7fe07f" stroke-width="0.55" /><path d="M803 92.6L1136.5 92.6" stroke="#7fe07f" stroke-width="0.55" /><path d="M804 292.3L1136.5 292.3" stroke="#84d6ec" stroke-width="0.55" /><path d="M804 297L1136.5 297" stroke="#84d6ec" stroke-width="0.55" /><path d="M766.7 137L766.7 249" stroke="#7fe07f" stroke-width="0.55" /><path d="M771.3 137L771.3 249" stroke="#7fe07f" stroke-width="0.55" /><path d="M1169.6 137L1169.6 249" stroke="#7fe07f" stroke-width="0.55" /><path d="M1174 137L1174 249" stroke="#7fe07f" stroke-width="0.55" /><path d="M804.3 80.5L804.3 307.2" stroke="#4a4a4a" stroke-width="0.36" stroke-dasharray="4.600 .9 .7 .9"/><circle cx="804.3" cy="79" r="1.5" fill="#fbfbfb" stroke="#444" stroke-width="0.4"/><path d="M839.4 80.5L839.4 307.2" stroke="#4a4a4a" stroke-width="0.36" stroke-dasharray="4.600 .9 .7 .9"/><circle cx="839.4" cy="79" r="1.5" fill="#fbfbfb" stroke="#444" stroke-width="0.4"/><circle cx="839.4" cy="308.7" r="1.5" fill="#fbfbfb" stroke="#444" stroke-width="0.4"/><path d="M883 80.5L883 307.2" stroke="#4a4a4a" stroke-width="0.36" stroke-dasharray="4.600 .9 .7 .9"/><circle cx="883" cy="79" r="1.5" fill="#fbfbfb" stroke="#444" stroke-width="0.4"/><circle cx="883" cy="308.7" r="1.5" fill="#fbfbfb" stroke="#444" stroke-width="0.4"/><path d="M926.6 80.5L926.6 307.2" stroke="#4a4a4a" stroke-width="0.36" stroke-dasharray="4.600 .9 .7 .9"/><circle cx="926.6" cy="79" r="1.5" fill="#fbfbfb" stroke="#444" stroke-width="0.4"/><circle cx="926.6" cy="308.7" r="1.5" fill="#fbfbfb" stroke="#444" stroke-width="0.4"/><path d="M970.2 80.5L970.2 307.2" stroke="#4a4a4a" stroke-width="0.36" stroke-dasharray="4.600 .9 .7 .9"/><circle cx="970.2" cy="79" r="1.5" fill="#fbfbfb" stroke="#444" stroke-width="0.4"/><circle cx="970.2" cy="308.7" r="1.5" fill="#fbfbfb" stroke="#444" stroke-width="0.4"/><path d="M1013.8 80.5L1013.8 307.2" stroke="#4a4a4a" stroke-width="0.36" stroke-dasharray="4.600 .9 .7 .9"/><circle cx="1013.8" cy="79" r="1.5" fill="#fbfbfb" stroke="#444" stroke-width="0.4"/><circle cx="1013.8" cy="308.7" r="1.5" fill="#fbfbfb" stroke="#444" stroke-width="0.4"/><path d="M1057.4 80.5L1057.4 307.2" stroke="#4a4a4a" stroke-width="0.36" stroke-dasharray="4.600 .9 .7 .9"/><circle cx="1057.4" cy="79" r="1.5" fill="#fbfbfb" stroke="#444" stroke-width="0.4"/><circle cx="1057.4" cy="308.7" r="1.5" fill="#fbfbfb" stroke="#444" stroke-width="0.4"/><path d="M1101 80.5L1101 307.2" stroke="#4a4a4a" stroke-width="0.36" stroke-dasharray="4.600 .9 .7 .9"/><circle cx="1101" cy="79" r="1.5" fill="#fbfbfb" stroke="#444" stroke-width="0.4"/><circle cx="1101" cy="308.7" r="1.5" fill="#fbfbfb" stroke="#444" stroke-width="0.4"/><path d="M1135.7 80.5L1135.7 307.2" stroke="#4a4a4a" stroke-width="0.36" stroke-dasharray="4.600 .9 .7 .9"/><circle cx="1135.7" cy="79" r="1.5" fill="#fbfbfb" stroke="#444" stroke-width="0.4"/><circle cx="1135.7" cy="308.7" r="1.5" fill="#fbfbfb" stroke="#444" stroke-width="0.4"/><path d="M762.3 137L1178.3 137" stroke="#4a4a4a" stroke-width="0.36" stroke-dasharray="4.600 .9 .7 .9"/><circle cx="760.8" cy="137" r="1.5" fill="#fbfbfb" stroke="#444" stroke-width="0.4"/><circle cx="1179.8" cy="137" r="1.5" fill="#fbfbfb" stroke="#444" stroke-width="0.4"/><path d="M762.3 160.4L1178.3 160.4" stroke="#4a4a4a" stroke-width="0.36" stroke-dasharray="4.600 .9 .7 .9"/><circle cx="760.8" cy="160.4" r="1.5" fill="#fbfbfb" stroke="#444" stroke-width="0.4"/><circle cx="1179.8" cy="160.4" r="1.5" fill="#fbfbfb" stroke="#444" stroke-width="0.4"/><path d="M762.3 193.4L1178.3 193.4" stroke="#4a4a4a" stroke-width="0.36" stroke-dasharray="4.600 .9 .7 .9"/><circle cx="760.8" cy="193.4" r="1.5" fill="#fbfbfb" stroke="#444" stroke-width="0.4"/><circle cx="1179.8" cy="193.4" r="1.5" fill="#fbfbfb" stroke="#444" stroke-width="0.4"/><path d="M762.3 208.3L1178.3 208.3" stroke="#4a4a4a" stroke-width="0.36" stroke-dasharray="4.600 .9 .7 .9"/><circle cx="760.8" cy="208.3" r="1.5" fill="#fbfbfb" stroke="#444" stroke-width="0.4"/><circle cx="1179.8" cy="208.3" r="1.5" fill="#fbfbfb" stroke="#444" stroke-width="0.4"/><path d="M762.3 248.9L1178.3 248.9" stroke="#4a4a4a" stroke-width="0.36" stroke-dasharray="4.600 .9 .7 .9"/><circle cx="760.8" cy="248.9" r="1.5" fill="#fbfbfb" stroke="#444" stroke-width="0.4"/><circle cx="1179.8" cy="248.9" r="1.5" fill="#fbfbfb" stroke="#444" stroke-width="0.4"/><text x="819.85" y="91.6" font-size="1.7" fill="#3a3" font-weight="700" >8400</text><text x="819.85" y="291.5" font-size="1.7" fill="#3ab" font-weight="700" >8400</text><text x="859.2" y="91.6" font-size="1.7" fill="#3a3" font-weight="700" >8400</text><text x="859.2" y="291.5" font-size="1.7" fill="#3ab" font-weight="700" >8400</text><text x="902.8" y="91.6" font-size="1.7" fill="#3a3" font-weight="700" >8400</text><text x="902.8" y="291.5" font-size="1.7" fill="#3ab" font-weight="700" >8400</text><text x="946.4" y="91.6" font-size="1.7" fill="#3a3" font-weight="700" >8400</text><text x="946.4" y="291.5" font-size="1.7" fill="#3ab" font-weight="700" >8400</text><text x="990" y="91.6" font-size="1.7" fill="#3a3" font-weight="700" >8400</text><text x="990" y="291.5" font-size="1.7" fill="#3ab" font-weight="700" >8400</text><text x="1033.6" y="91.6" font-size="1.7" fill="#3a3" font-weight="700" >8400</text><text x="1033.6" y="291.5" font-size="1.7" fill="#3ab" font-weight="700" >8400</text><text x="1077.2" y="91.6" font-size="1.7" fill="#3a3" font-weight="700" >8400</text><text x="1077.2" y="291.5" font-size="1.7" fill="#3ab" font-weight="700" >8400</text><text x="1116.35" y="91.6" font-size="1.7" fill="#3a3" font-weight="700" >8400</text><text x="1116.35" y="291.5" font-size="1.7" fill="#3ab" font-weight="700" >8400</text><text x="968" y="296.2" font-size="1.7" fill="#3ab" font-weight="700" >67200</text><text x="968" y="87.4" font-size="1.7" fill="#3a3" font-weight="700" >67200</text><text x="767.5" y="150.7" font-size="1.7" fill="#3a3" font-weight="700" transform="rotate(-90 768.5 148.7)">5400</text><text x="1170.5" y="150.7" font-size="1.7" fill="#3a3" font-weight="700" transform="rotate(-90 1171.5 148.7)">5400</text><text x="767.5" y="178.9" font-size="1.7" fill="#3a3" font-weight="700" transform="rotate(-90 768.5 176.9)">5400</text><text x="1170.5" y="178.9" font-size="1.7" fill="#3a3" font-weight="700" transform="rotate(-90 1171.5 176.9)">5400</text><text x="767.5" y="202.85" font-size="1.7" fill="#3a3" font-weight="700" transform="rotate(-90 768.5 200.85)">5400</text><text x="1170.5" y="202.85" font-size="1.7" fill="#3a3" font-weight="700" transform="rotate(-90 1171.5 200.85)">5400</text><text x="767.5" y="230.6" font-size="1.7" fill="#3a3" font-weight="700" transform="rotate(-90 768.5 228.6)">5400</text><text x="1170.5" y="230.6" font-size="1.7" fill="#3a3" font-weight="700" transform="rotate(-90 1171.5 228.6)">5400</text><circle cx="804.4" cy="311.5" r="3.2" fill="#fbfbfb" stroke="#222" stroke-width="0.45"/><path d="M802.6 309.7L806.2 313.3" stroke="#222" stroke-width="0.4" fill="none" /><path d="M806.2 309.7L802.6 313.3" stroke="#222" stroke-width="0.4" fill="none" /><path d="M808 311.5L823.5 311.5" stroke="#e88" stroke-width="0.45" /><path d="M823.6 310.200L826.4 311.500L823.6 312.800Z" fill="none" stroke="#e05050" stroke-width=".4"/><text x="829.5" y="313.6" font-size="5.4" fill="#e05050" font-weight="700" >X</text><path d="M804.4 283L804.4 308.3" stroke="#444" stroke-width="0.45" fill="none" /><path d="M803.200 284h2.400l-1.200 2.200z" fill="none" stroke="#4cc" stroke-width=".4"/><path d="M803.200 290h2.400l-1.200 2.200z" fill="none" stroke="#4cc" stroke-width=".4"/><path d="M842 148L925.5 147.7" stroke="#30d8f0" stroke-width="0.9" fill="none" /><path d="M925.5 147.7L943.5 147.7L945.5 139.5" stroke="#4a90e2" stroke-width="0.75" fill="none" /><path d="M879.2 137.8L879.2 147.7" stroke="#30d8f0" stroke-width="0.9" fill="none" /><path d="M922 137.8L922 147.7" stroke="#30d8f0" stroke-width="0.9" fill="none" /><path d="M877 137.8L882 137.2" stroke="#30d8f0" stroke-width="0.9" fill="none" /><path d="M920 137.8L926 137.2" stroke="#30d8f0" stroke-width="0.9" fill="none" /><path d="M856.7 139.5L856.7 147.7" stroke="#4a90e2" stroke-width="0.75" fill="none" /><path d="M899.9 139.5L899.9 147.7" stroke="#4a90e2" stroke-width="0.75" fill="none" /><path d="M944.1 139.5L944.1 147.7" stroke="#4a90e2" stroke-width="0.75" fill="none" /><path d="M986.8 139L986.8 157.7L991.8 162L1083 162L1083 175" stroke="#4a90e2" stroke-width="0.75" fill="none" /><path d="M1019.6 137.8L1019.6 145.6L1060 145.6L1060 138" stroke="#30d8f0" stroke-width="0.9" fill="none" /><path d="M1031 139.2L1031 160L1036 162.5" stroke="#4a90e2" stroke-width="0.75" fill="none" /><path d="M1074.5 139.2L1074.5 160L1079 162.5" stroke="#4a90e2" stroke-width="0.75" fill="none" /><path d="M1013 137.3L1020 137.8" stroke="#30d8f0" stroke-width="0.9" fill="none" /><path d="M1052 137.3L1060 137.8" stroke="#30d8f0" stroke-width="0.9" fill="none" /><path d="M842 152.5L968 152.5" stroke="#f7cfa6" stroke-width="1.5" /><path d="M990 160.6L1098 160.6" stroke="#f7cfa6" stroke-width="1.3" /><path d="M1098 160.6L1098 186" stroke="#f7cfa6" stroke-width="1.0" fill="none" /><path d="M1094 136L1099 160" stroke="#f5b87a" stroke-width="0.5" fill="none" /><path d="M906.5 152L906.5 189" stroke="#f5b87a" stroke-width="0.5" fill="none" /><path d="M908.8 152L908.8 189" stroke="#f5b87a" stroke-width="0.5" fill="none" /><path d="M948 152L948 189" stroke="#f5b87a" stroke-width="0.5" fill="none" /><path d="M950.3 152L950.3 189" stroke="#f5b87a" stroke-width="0.5" fill="none" /><path d="M861.4 152L861.4 189" stroke="#f5b87a" stroke-width="0.5" fill="none" /><path d="M847.9 124.2L855.1 124.2L857.9 137.8" stroke="#35d235" stroke-width="0.6" fill="none" /><text x="848.9" y="122.6" font-size="1.6" fill="#2a2" font-weight="700" >DN50</text><text x="848.9" y="126.6" font-size="1.5" fill="#2a2" font-weight="700" >h+3.2</text><path d="M839.4 137.8L839.4 128.5L845.8 128.5" stroke="#35d235" stroke-width="0.6" fill="none" /><rect x="857.6" y="138.4" width="0.9" height="0.9" fill="#3050c0" stroke="none" stroke-width="0.4" /><rect x="859.9" y="141" width="0.9" height="0.9" fill="#e06020" stroke="none" stroke-width="0.4" /><text x="869" y="111.4" font-size="1.75" fill="#111" font-weight="700" textLength="15.500" lengthAdjust="spacingAndGlyphs">DN25 H+3.20</text><text x="874.5" y="113.3" font-size="1.5" fill="#555" font-weight="700" >喷淋</text><path d="M878 111.9L882 111.9L881.5 138" stroke="#f5b87a" stroke-width="0.45" fill="none" /><text x="862.5" y="116.4" font-size="1.75" fill="#111" font-weight="700" textLength="15.500" lengthAdjust="spacingAndGlyphs">DN25 H+3.20</text><text x="868" y="118.3" font-size="1.5" fill="#555" font-weight="700" >喷淋</text><path d="M871.5 116.9L875.5 116.9L877 140" stroke="#f5b87a" stroke-width="0.45" fill="none" /><text x="888.5" y="116.4" font-size="1.75" fill="#111" font-weight="700" textLength="15.500" lengthAdjust="spacingAndGlyphs">DN25 H+3.20</text><text x="894" y="118.3" font-size="1.5" fill="#555" font-weight="700" >喷淋</text><path d="M897.5 116.9L901.5 116.9L904 141" stroke="#f5b87a" stroke-width="0.45" fill="none" /><path d="M891.5 124.2L898.7 124.2L901.5 137.8" stroke="#35d235" stroke-width="0.6" fill="none" /><text x="892.5" y="122.6" font-size="1.6" fill="#2a2" font-weight="700" >DN50</text><text x="892.5" y="126.6" font-size="1.5" fill="#2a2" font-weight="700" >h+3.2</text><path d="M883 137.8L883 128.5L889.4 128.5" stroke="#35d235" stroke-width="0.6" fill="none" /><rect x="901.2" y="138.4" width="0.9" height="0.9" fill="#3050c0" stroke="none" stroke-width="0.4" /><rect x="903.5" y="141" width="0.9" height="0.9" fill="#e06020" stroke="none" stroke-width="0.4" /><text x="912.6" y="111.4" font-size="1.75" fill="#111" font-weight="700" textLength="15.500" lengthAdjust="spacingAndGlyphs">DN25 H+3.20</text><text x="918.1" y="113.3" font-size="1.5" fill="#555" font-weight="700" >喷淋</text><path d="M921.6 111.9L925.6 111.9L925.1 138" stroke="#f5b87a" stroke-width="0.45" fill="none" /><text x="906.1" y="116.4" font-size="1.75" fill="#111" font-weight="700" textLength="15.500" lengthAdjust="spacingAndGlyphs">DN25 H+3.20</text><text x="911.6" y="118.3" font-size="1.5" fill="#555" font-weight="700" >喷淋</text><path d="M915.1 116.9L919.1 116.9L920.6 140" stroke="#f5b87a" stroke-width="0.45" fill="none" /><text x="932.1" y="116.4" font-size="1.75" fill="#111" font-weight="700" textLength="15.500" lengthAdjust="spacingAndGlyphs">DN25 H+3.20</text><text x="937.6" y="118.3" font-size="1.5" fill="#555" font-weight="700" >喷淋</text><path d="M941.1 116.9L945.1 116.9L947.6 141" stroke="#f5b87a" stroke-width="0.45" fill="none" /><path d="M935.1 124.2L942.3 124.2L945.1 137.8" stroke="#35d235" stroke-width="0.6" fill="none" /><text x="936.1" y="122.6" font-size="1.6" fill="#2a2" font-weight="700" >DN50</text><text x="936.1" y="126.6" font-size="1.5" fill="#2a2" font-weight="700" >h+3.2</text><path d="M926.6 137.8L926.6 128.5L933 128.5" stroke="#35d235" stroke-width="0.6" fill="none" /><rect x="944.8" y="138.4" width="0.9" height="0.9" fill="#3050c0" stroke="none" stroke-width="0.4" /><rect x="947.1" y="141" width="0.9" height="0.9" fill="#e06020" stroke="none" stroke-width="0.4" /><text x="956.2" y="111.4" font-size="1.75" fill="#111" font-weight="700" textLength="15.500" lengthAdjust="spacingAndGlyphs">DN25 H+3.20</text><text x="961.7" y="113.3" font-size="1.5" fill="#555" font-weight="700" >喷淋</text><path d="M965.2 111.9L969.2 111.9L968.7 138" stroke="#f5b87a" stroke-width="0.45" fill="none" /><text x="949.7" y="116.4" font-size="1.75" fill="#111" font-weight="700" textLength="15.500" lengthAdjust="spacingAndGlyphs">DN25 H+3.20</text><text x="955.2" y="118.3" font-size="1.5" fill="#555" font-weight="700" >喷淋</text><path d="M958.7 116.9L962.7 116.9L964.2 140" stroke="#f5b87a" stroke-width="0.45" fill="none" /><text x="975.7" y="116.4" font-size="1.75" fill="#111" font-weight="700" textLength="15.500" lengthAdjust="spacingAndGlyphs">DN25 H+3.20</text><text x="981.2" y="118.3" font-size="1.5" fill="#555" font-weight="700" >喷淋</text><path d="M984.7 116.9L988.7 116.9L991.2 141" stroke="#f5b87a" stroke-width="0.45" fill="none" /><path d="M978.7 124.2L985.9 124.2L988.7 137.8" stroke="#35d235" stroke-width="0.6" fill="none" /><text x="979.7" y="122.6" font-size="1.6" fill="#2a2" font-weight="700" >DN50</text><text x="979.7" y="126.6" font-size="1.5" fill="#2a2" font-weight="700" >h+3.2</text><path d="M970.2 137.8L970.2 128.5L976.6 128.5" stroke="#35d235" stroke-width="0.6" fill="none" /><rect x="988.4" y="138.4" width="0.9" height="0.9" fill="#3050c0" stroke="none" stroke-width="0.4" /><rect x="990.7" y="141" width="0.9" height="0.9" fill="#e06020" stroke="none" stroke-width="0.4" /><text x="999.8" y="111.4" font-size="1.75" fill="#111" font-weight="700" textLength="15.500" lengthAdjust="spacingAndGlyphs">DN25 H+3.20</text><text x="1005.3" y="113.3" font-size="1.5" fill="#555" font-weight="700" >喷淋</text><path d="M1008.8 111.9L1012.8 111.9L1012.3 138" stroke="#f5b87a" stroke-width="0.45" fill="none" /><text x="993.3" y="116.4" font-size="1.75" fill="#111" font-weight="700" textLength="15.500" lengthAdjust="spacingAndGlyphs">DN25 H+3.20</text><text x="998.8" y="118.3" font-size="1.5" fill="#555" font-weight="700" >喷淋</text><path d="M1002.3 116.9L1006.3 116.9L1007.8 140" stroke="#f5b87a" stroke-width="0.45" fill="none" /><text x="1019.3" y="116.4" font-size="1.75" fill="#111" font-weight="700" textLength="15.500" lengthAdjust="spacingAndGlyphs">DN25 H+3.20</text><text x="1024.8" y="118.3" font-size="1.5" fill="#555" font-weight="700" >喷淋</text><path d="M1028.3 116.9L1032.3 116.9L1034.8 141" stroke="#f5b87a" stroke-width="0.45" fill="none" /><path d="M1022.3 124.2L1029.5 124.2L1032.3 137.8" stroke="#35d235" stroke-width="0.6" fill="none" /><text x="1023.3" y="122.6" font-size="1.6" fill="#2a2" font-weight="700" >DN50</text><text x="1023.3" y="126.6" font-size="1.5" fill="#2a2" font-weight="700" >h+3.2</text><path d="M1013.8 137.8L1013.8 128.5L1020.2 128.5" stroke="#35d235" stroke-width="0.6" fill="none" /><rect x="1032" y="138.4" width="0.9" height="0.9" fill="#3050c0" stroke="none" stroke-width="0.4" /><rect x="1034.3" y="141" width="0.9" height="0.9" fill="#e06020" stroke="none" stroke-width="0.4" /><text x="1043.4" y="111.4" font-size="1.75" fill="#111" font-weight="700" textLength="15.500" lengthAdjust="spacingAndGlyphs">DN25 H+3.20</text><text x="1048.9" y="113.3" font-size="1.5" fill="#555" font-weight="700" >喷淋</text><path d="M1052.4 111.9L1056.4 111.9L1055.9 138" stroke="#f5b87a" stroke-width="0.45" fill="none" /><text x="1036.9" y="116.4" font-size="1.75" fill="#111" font-weight="700" textLength="15.500" lengthAdjust="spacingAndGlyphs">DN25 H+3.20</text><text x="1042.4" y="118.3" font-size="1.5" fill="#555" font-weight="700" >喷淋</text><path d="M1045.9 116.9L1049.9 116.9L1051.4 140" stroke="#f5b87a" stroke-width="0.45" fill="none" /><text x="1062.9" y="116.4" font-size="1.75" fill="#111" font-weight="700" textLength="15.500" lengthAdjust="spacingAndGlyphs">DN25 H+3.20</text><text x="1068.4" y="118.3" font-size="1.5" fill="#555" font-weight="700" >喷淋</text><path d="M1071.9 116.9L1075.9 116.9L1078.4 141" stroke="#f5b87a" stroke-width="0.45" fill="none" /><path d="M1065.9 124.2L1073.1 124.2L1075.9 137.8" stroke="#35d235" stroke-width="0.6" fill="none" /><text x="1066.9" y="122.6" font-size="1.6" fill="#2a2" font-weight="700" >DN50</text><text x="1066.9" y="126.6" font-size="1.5" fill="#2a2" font-weight="700" >h+3.2</text><path d="M1057.4 137.8L1057.4 128.5L1063.8 128.5" stroke="#35d235" stroke-width="0.6" fill="none" /><rect x="1075.6" y="138.4" width="0.9" height="0.9" fill="#3050c0" stroke="none" stroke-width="0.4" /><rect x="1077.9" y="141" width="0.9" height="0.9" fill="#e06020" stroke="none" stroke-width="0.4" /><text x="1087" y="111.4" font-size="1.75" fill="#111" font-weight="700" textLength="15.500" lengthAdjust="spacingAndGlyphs">DN25 H+3.20</text><text x="1092.5" y="113.3" font-size="1.5" fill="#555" font-weight="700" >喷淋</text><path d="M1096 111.9L1100 111.9L1099.5 138" stroke="#f5b87a" stroke-width="0.45" fill="none" /><text x="1080.5" y="116.4" font-size="1.75" fill="#111" font-weight="700" textLength="15.500" lengthAdjust="spacingAndGlyphs">DN25 H+3.20</text><text x="1086" y="118.3" font-size="1.5" fill="#555" font-weight="700" >喷淋</text><path d="M1089.5 116.9L1093.5 116.9L1095 140" stroke="#f5b87a" stroke-width="0.45" fill="none" /><rect x="1119.2" y="138.4" width="0.9" height="0.9" fill="#3050c0" stroke="none" stroke-width="0.4" /><rect x="1121.5" y="141" width="0.9" height="0.9" fill="#e06020" stroke="none" stroke-width="0.4" /><path d="M818 137L840 137L840 152" stroke="#35d235" stroke-width="0.6" fill="none" /><path d="M797 145L802 145L805 137L818 137" stroke="#35d235" stroke-width="0.6" fill="none" /><path d="M807 128L813 128" stroke="#35d235" stroke-width="0.6" fill="none" /><path d="M807 133L813 133" stroke="#35d235" stroke-width="0.6" fill="none" /><path d="M840 145L842 152L848 154" stroke="#35d235" stroke-width="0.6" fill="none" /><path d="M815 160.5L823 160.5L826 152L838 150" stroke="#35d235" stroke-width="0.6" fill="none" /><path d="M801 158L806 164L812 186" stroke="#35d235" stroke-width="0.5" fill="none" /><path d="M802.2 159.5L807.6 164L813.5 186.5" stroke="#35d235" stroke-width="0.5" fill="none" /><path d="M803.4 161L809.2 164L815 187" stroke="#35d235" stroke-width="0.5" fill="none" /><path d="M804.6 162.5L810.8 164L816.5 187.5" stroke="#35d235" stroke-width="0.5" fill="none" /><path d="M805.8 164L812.4 164L818 188" stroke="#35d235" stroke-width="0.5" fill="none" /><text x="797" y="143.5" font-size="1.6" fill="#2a2" font-weight="700" >DN50</text><text x="807" y="126.5" font-size="1.6" fill="#2a2" font-weight="700" >DN50</text><text x="807" y="131.5" font-size="1.6" fill="#2a2" font-weight="700" >DN50</text><text x="799" y="160" font-size="1.6" fill="#2a2" font-weight="700" >DN50</text><text x="799" y="164" font-size="1.6" fill="#2a2" font-weight="700" >DN50</text><text x="797" y="171" font-size="1.6" fill="#2a2" font-weight="700" >DN50</text><text x="799" y="176" font-size="1.6" fill="#2a2" font-weight="700" >DN50</text><text x="816" y="158.5" font-size="1.6" fill="#2a2" font-weight="700" >DN50</text><text x="841" y="170" font-size="1.6" fill="#2a2" font-weight="700" >DN50</text><path d="M840 152L849 154L850 190L869 190" stroke="#f2e85a" stroke-width="0.7" fill="none" /><path d="M927.7 151.3L933.4 157L943.4 156.3" stroke="#222" stroke-width="0.6" fill="none" /><text x="935" y="156.3" font-size="1.7" fill="#111" font-weight="700" >DN150</text><path d="M996.8 147.7L1005.4 147.7L1013.2 159.8" stroke="#222" stroke-width="0.9" fill="none" /><path d="M846 178.4L951.5 178.4" stroke="#efe73a" stroke-width="1.1" /><path d="M846 180L951.5 180" stroke="#b8b04a" stroke-width="0.35" /><path d="M985.4 183.3L1098 183.3" stroke="#f2e85a" stroke-width="0.7" opacity=".85"/><path d="M985.4 187L1098 187" stroke="#f2e85a" stroke-width="0.7" opacity=".85"/><path d="M985.4 190L1098 190" stroke="#f2e85a" stroke-width="0.7" opacity=".85"/><path d="M985.4 193.5L1098 193.5" stroke="#f2e85a" stroke-width="0.7" opacity=".85"/><path d="M985.4 197L1098 197" stroke="#f2e85a" stroke-width="0.7" opacity=".85"/><path d="M1098 183.3L1098 197" stroke="#f2e85a" stroke-width="0.7" fill="none" /><path d="M855 206.2L1101.5 206.2" stroke="#4a4ae6" stroke-width="0.8" /><path d="M825.6 190L825.6 198.3L875.3 198.3L875.3 229.4L1103 229.4" stroke="#4a4ae6" stroke-width="0.75" fill="none" /><path d="M1101.5 205.6L1101.5 236L1106 241L1120 241" stroke="#4a4ae6" stroke-width="0.75" fill="none" /><path d="M865 205.4L865 192L868.9 179.4L875.4 179" stroke="#4a4ae6" stroke-width="0.7" fill="none" /><path d="M845 172.7L853.6 173.4L859.9 190.5" stroke="#35d235" stroke-width="0.65" fill="none" /><path d="M869.4 175L863.8 190.5" stroke="#35d235" stroke-width="0.65" fill="none" /><path d="M869.4 175L875.4 175" stroke="#35d235" stroke-width="0.6" fill="none" /><text x="845.4" y="171.5" font-size="1.6" fill="#2a2" font-weight="700" >DN50</text><text x="845.4" y="176" font-size="1.5" fill="#2a2" font-weight="700" >h+3.0</text><text x="844.4" y="167.5" font-size="1.7" fill="#111" font-weight="700" textLength="12">DN25 H+3.20</text><path d="M846.4 188.6L856.4 188.6" stroke="#f2e85a" stroke-width="0.5" /><text x="846.4" y="188.3" font-size="1.6" fill="#222" font-weight="700" textLength="9.500">DN25 H+3.2</text><path d="M869.4 188.6L879.4 188.6" stroke="#f2e85a" stroke-width="0.5" /><text x="869.4" y="188.3" font-size="1.6" fill="#222" font-weight="700" textLength="9.500">DN25 H+3.2</text><path d="M846.4 193L856.4 193" stroke="#f2e85a" stroke-width="0.5" /><text x="846.4" y="192.7" font-size="1.6" fill="#222" font-weight="700" textLength="9.500">DN25 H+3.2</text><path d="M869.4 193L879.4 193" stroke="#f2e85a" stroke-width="0.5" /><text x="869.4" y="192.7" font-size="1.6" fill="#222" font-weight="700" textLength="9.500">DN25 H+3.2</text><rect x="859.4" y="190" width="1" height="1" fill="#e0a020" stroke="none" stroke-width="0.4" /><rect x="863.4" y="190" width="1" height="1" fill="#3050c0" stroke="none" stroke-width="0.4" /><path d="M908.6 205.4L908.6 192L912.5 179.4L919 179" stroke="#4a4ae6" stroke-width="0.7" fill="none" /><path d="M888.6 172.7L897.2 173.4L903.5 190.5" stroke="#35d235" stroke-width="0.65" fill="none" /><path d="M913 175L907.4 190.5" stroke="#35d235" stroke-width="0.65" fill="none" /><path d="M913 175L919 175" stroke="#35d235" stroke-width="0.6" fill="none" /><text x="889" y="171.5" font-size="1.6" fill="#2a2" font-weight="700" >DN50</text><text x="889" y="176" font-size="1.5" fill="#2a2" font-weight="700" >h+3.0</text><text x="888" y="167.5" font-size="1.7" fill="#111" font-weight="700" textLength="12">DN25 H+3.20</text><path d="M890 188.6L900 188.6" stroke="#f2e85a" stroke-width="0.5" /><text x="890" y="188.3" font-size="1.6" fill="#222" font-weight="700" textLength="9.500">DN25 H+3.2</text><path d="M913 188.6L923 188.6" stroke="#f2e85a" stroke-width="0.5" /><text x="913" y="188.3" font-size="1.6" fill="#222" font-weight="700" textLength="9.500">DN25 H+3.2</text><path d="M890 193L900 193" stroke="#f2e85a" stroke-width="0.5" /><text x="890" y="192.7" font-size="1.6" fill="#222" font-weight="700" textLength="9.500">DN25 H+3.2</text><path d="M913 193L923 193" stroke="#f2e85a" stroke-width="0.5" /><text x="913" y="192.7" font-size="1.6" fill="#222" font-weight="700" textLength="9.500">DN25 H+3.2</text><rect x="903" y="190" width="1" height="1" fill="#e0a020" stroke="none" stroke-width="0.4" /><rect x="907" y="190" width="1" height="1" fill="#3050c0" stroke="none" stroke-width="0.4" /><path d="M952.2 205.4L952.2 192L956.1 179.4L962.6 179" stroke="#4a4ae6" stroke-width="0.7" fill="none" /><path d="M932.2 172.7L940.8 173.4L947.1 190.5" stroke="#35d235" stroke-width="0.65" fill="none" /><path d="M956.6 175L951 190.5" stroke="#35d235" stroke-width="0.65" fill="none" /><path d="M956.6 175L962.6 175" stroke="#35d235" stroke-width="0.6" fill="none" /><text x="932.6" y="171.5" font-size="1.6" fill="#2a2" font-weight="700" >DN50</text><text x="932.6" y="176" font-size="1.5" fill="#2a2" font-weight="700" >h+3.0</text><text x="931.6" y="167.5" font-size="1.7" fill="#111" font-weight="700" textLength="12">DN25 H+3.20</text><path d="M933.6 188.6L943.6 188.6" stroke="#f2e85a" stroke-width="0.5" /><text x="933.6" y="188.3" font-size="1.6" fill="#222" font-weight="700" textLength="9.500">DN25 H+3.2</text><path d="M956.6 188.6L966.6 188.6" stroke="#f2e85a" stroke-width="0.5" /><text x="956.6" y="188.3" font-size="1.6" fill="#222" font-weight="700" textLength="9.500">DN25 H+3.2</text><path d="M933.6 193L943.6 193" stroke="#f2e85a" stroke-width="0.5" /><text x="933.6" y="192.7" font-size="1.6" fill="#222" font-weight="700" textLength="9.500">DN25 H+3.2</text><path d="M956.6 193L966.6 193" stroke="#f2e85a" stroke-width="0.5" /><text x="956.6" y="192.7" font-size="1.6" fill="#222" font-weight="700" textLength="9.500">DN25 H+3.2</text><rect x="946.6" y="190" width="1" height="1" fill="#e0a020" stroke="none" stroke-width="0.4" /><rect x="950.6" y="190" width="1" height="1" fill="#3050c0" stroke="none" stroke-width="0.4" /><path d="M995.8 205.4L995.8 192L999.7 179.4L1006.2 179" stroke="#4a4ae6" stroke-width="0.7" fill="none" /><path d="M975.8 172.7L984.4 173.4L990.7 190.5" stroke="#35d235" stroke-width="0.65" fill="none" /><path d="M1000.2 175L994.6 190.5" stroke="#35d235" stroke-width="0.65" fill="none" /><path d="M1000.2 175L1006.2 175" stroke="#35d235" stroke-width="0.6" fill="none" /><text x="976.2" y="171.5" font-size="1.6" fill="#2a2" font-weight="700" >DN50</text><text x="976.2" y="176" font-size="1.5" fill="#2a2" font-weight="700" >h+3.0</text><text x="975.2" y="167.5" font-size="1.7" fill="#111" font-weight="700" textLength="12">DN25 H+3.20</text><path d="M977.2 188.6L987.2 188.6" stroke="#f2e85a" stroke-width="0.5" /><text x="977.2" y="188.3" font-size="1.6" fill="#222" font-weight="700" textLength="9.500">DN25 H+3.2</text><path d="M1000.2 188.6L1010.2 188.6" stroke="#f2e85a" stroke-width="0.5" /><text x="1000.2" y="188.3" font-size="1.6" fill="#222" font-weight="700" textLength="9.500">DN25 H+3.2</text><path d="M977.2 193L987.2 193" stroke="#f2e85a" stroke-width="0.5" /><text x="977.2" y="192.7" font-size="1.6" fill="#222" font-weight="700" textLength="9.500">DN25 H+3.2</text><path d="M1000.2 193L1010.2 193" stroke="#f2e85a" stroke-width="0.5" /><text x="1000.2" y="192.7" font-size="1.6" fill="#222" font-weight="700" textLength="9.500">DN25 H+3.2</text><rect x="990.2" y="190" width="1" height="1" fill="#e0a020" stroke="none" stroke-width="0.4" /><rect x="994.2" y="190" width="1" height="1" fill="#3050c0" stroke="none" stroke-width="0.4" /><path d="M1039.4 205.4L1039.4 192L1043.3 179.4L1049.8 179" stroke="#4a4ae6" stroke-width="0.7" fill="none" /><path d="M1019.4 172.7L1028 173.4L1034.3 190.5" stroke="#35d235" stroke-width="0.65" fill="none" /><path d="M1043.8 175L1038.2 190.5" stroke="#35d235" stroke-width="0.65" fill="none" /><path d="M1043.8 175L1049.8 175" stroke="#35d235" stroke-width="0.6" fill="none" /><text x="1019.8" y="171.5" font-size="1.6" fill="#2a2" font-weight="700" >DN50</text><text x="1019.8" y="176" font-size="1.5" fill="#2a2" font-weight="700" >h+3.0</text><text x="1018.8" y="167.5" font-size="1.7" fill="#111" font-weight="700" textLength="12">DN25 H+3.20</text><path d="M1020.8 188.6L1030.8 188.6" stroke="#f2e85a" stroke-width="0.5" /><text x="1020.8" y="188.3" font-size="1.6" fill="#222" font-weight="700" textLength="9.500">DN25 H+3.2</text><path d="M1043.8 188.6L1053.8 188.6" stroke="#f2e85a" stroke-width="0.5" /><text x="1043.8" y="188.3" font-size="1.6" fill="#222" font-weight="700" textLength="9.500">DN25 H+3.2</text><path d="M1020.8 193L1030.8 193" stroke="#f2e85a" stroke-width="0.5" /><text x="1020.8" y="192.7" font-size="1.6" fill="#222" font-weight="700" textLength="9.500">DN25 H+3.2</text><path d="M1043.8 193L1053.8 193" stroke="#f2e85a" stroke-width="0.5" /><text x="1043.8" y="192.7" font-size="1.6" fill="#222" font-weight="700" textLength="9.500">DN25 H+3.2</text><rect x="1033.8" y="190" width="1" height="1" fill="#e0a020" stroke="none" stroke-width="0.4" /><rect x="1037.8" y="190" width="1" height="1" fill="#3050c0" stroke="none" stroke-width="0.4" /><path d="M1083 205.4L1083 192L1086.9 179.4L1093.4 179" stroke="#4a4ae6" stroke-width="0.7" fill="none" /><path d="M1063 172.7L1071.6 173.4L1077.9 190.5" stroke="#35d235" stroke-width="0.65" fill="none" /><path d="M1087.4 175L1081.8 190.5" stroke="#35d235" stroke-width="0.65" fill="none" /><path d="M1087.4 175L1093.4 175" stroke="#35d235" stroke-width="0.6" fill="none" /><text x="1063.4" y="171.5" font-size="1.6" fill="#2a2" font-weight="700" >DN50</text><text x="1063.4" y="176" font-size="1.5" fill="#2a2" font-weight="700" >h+3.0</text><text x="1062.4" y="167.5" font-size="1.7" fill="#111" font-weight="700" textLength="12">DN25 H+3.20</text><path d="M1064.4 188.6L1074.4 188.6" stroke="#f2e85a" stroke-width="0.5" /><text x="1064.4" y="188.3" font-size="1.6" fill="#222" font-weight="700" textLength="9.500">DN25 H+3.2</text><path d="M1087.4 188.6L1097.4 188.6" stroke="#f2e85a" stroke-width="0.5" /><text x="1087.4" y="188.3" font-size="1.6" fill="#222" font-weight="700" textLength="9.500">DN25 H+3.2</text><path d="M1064.4 193L1074.4 193" stroke="#f2e85a" stroke-width="0.5" /><text x="1064.4" y="192.7" font-size="1.6" fill="#222" font-weight="700" textLength="9.500">DN25 H+3.2</text><path d="M1087.4 193L1097.4 193" stroke="#f2e85a" stroke-width="0.5" /><text x="1087.4" y="192.7" font-size="1.6" fill="#222" font-weight="700" textLength="9.500">DN25 H+3.2</text><rect x="1077.4" y="190" width="1" height="1" fill="#e0a020" stroke="none" stroke-width="0.4" /><rect x="1081.4" y="190" width="1" height="1" fill="#3050c0" stroke="none" stroke-width="0.4" /><path d="M964 152.7L966.9 152.7L966.9 186.2L954 187" stroke="#7fe07f" stroke-width="0.6" fill="none" /><path d="M973.3 159.8L976.9 159.8L976.9 194.8L973.3 194.8L973.3 159.8" stroke="#7fe07f" stroke-width="0.6" fill="none" /><path d="M954 172L962 165.5L967 165.5" stroke="#222" stroke-width="0.45" fill="none" /><text x="955.5" y="166" font-size="1.7" fill="#111" font-weight="700" >DN100</text><path d="M967 198L985 201L972 203L985 204" stroke="#222" stroke-width="0.5" fill="none" /><path d="M852.8 227L858.2 212L859.2 211.4" stroke="#35d235" stroke-width="0.7" fill="none" /><path d="M854.2 227L859.2 211.4" stroke="#35d235" stroke-width="0.6" fill="none" /><path d="M859.2 211.4L863.2 224L865.6 232.7" stroke="#35d235" stroke-width="0.7" fill="none" /><path d="M859.2 211.4L857.7 236.3" stroke="#f2e85a" stroke-width="0.7" fill="none" /><path d="M859.7 211.4L865.6 236.3" stroke="#f2e85a" stroke-width="0.7" fill="none" /><path d="M858.4 213L861.7 236.3" stroke="#f2e85a" stroke-width="0.6" fill="none" /><path d="M860.2 212L864.2 222.8L873.2 222.8" stroke="#4a4ae6" stroke-width="0.7" fill="none" /><path d="M865.2 224.6L873.2 224.6" stroke="#35d235" stroke-width="0.5" fill="none" /><path d="M845.2 224.6L853.2 224.6" stroke="#35d235" stroke-width="0.5" fill="none" /><text x="845.7" y="223.6" font-size="1.6" fill="#2a2" font-weight="700" >DN50</text><text x="845.7" y="227.6" font-size="1.5" fill="#2a2" font-weight="700" >h+3.0</text><path d="M845.2 214.8L856.2 214.8" stroke="#f2e85a" stroke-width="0.5" /><text x="845.2" y="214.4" font-size="1.6" fill="#222" font-weight="700" textLength="10.500">DN25 H+3.2</text><path d="M867.2 212.8L878.2 212.8" stroke="#f2e85a" stroke-width="0.5" /><text x="867.2" y="212.4" font-size="1.6" fill="#222" font-weight="700" textLength="10.500">DN25 H+3.2</text><text x="843.2" y="231.5" font-size="1.7" fill="#222" font-weight="700" textLength="12">DN25 H+3.20</text><rect x="864.7" y="211.8" width="1" height="1" fill="#e0a020" stroke="none" stroke-width="0.4" /><path d="M875.7 256.5L871.7 279.8L863.7 279.8" stroke="#f5b87a" stroke-width="0.45" fill="none" /><path d="M871.7 279.8L879.7 279.8" stroke="#f5b87a" stroke-width="0.45" fill="none" /><text x="863.7" y="279.4" font-size="1.75" fill="#111" font-weight="700" textLength="15.500" lengthAdjust="spacingAndGlyphs">DN25 H+3.20</text><text x="869.2" y="281.9" font-size="1.5" fill="#555" font-weight="700" >喷淋</text><path d="M860.7 258.4L857.8 271.2L852.2 271.2" stroke="#35d235" stroke-width="0.6" fill="none" /><text x="851.7" y="267.8" font-size="1.6" fill="#2a2" font-weight="700" >DN50</text><path d="M839.2 258L835.2 279" stroke="#f5b87a" stroke-width="0.45" fill="none" /><path d="M881.2 258L876.2 279" stroke="#f5b87a" stroke-width="0.45" fill="none" /><path d="M896.4 227L901.8 212L902.8 211.4" stroke="#35d235" stroke-width="0.7" fill="none" /><path d="M897.8 227L902.8 211.4" stroke="#35d235" stroke-width="0.6" fill="none" /><path d="M902.8 211.4L906.8 224L909.2 232.7" stroke="#35d235" stroke-width="0.7" fill="none" /><path d="M902.8 211.4L901.3 236.3" stroke="#f2e85a" stroke-width="0.7" fill="none" /><path d="M903.3 211.4L909.2 236.3" stroke="#f2e85a" stroke-width="0.7" fill="none" /><path d="M902 213L905.3 236.3" stroke="#f2e85a" stroke-width="0.6" fill="none" /><path d="M903.8 212L907.8 222.8L916.8 222.8" stroke="#4a4ae6" stroke-width="0.7" fill="none" /><path d="M908.8 224.6L916.8 224.6" stroke="#35d235" stroke-width="0.5" fill="none" /><path d="M888.8 224.6L896.8 224.6" stroke="#35d235" stroke-width="0.5" fill="none" /><text x="889.3" y="223.6" font-size="1.6" fill="#2a2" font-weight="700" >DN50</text><text x="889.3" y="227.6" font-size="1.5" fill="#2a2" font-weight="700" >h+3.0</text><path d="M888.8 214.8L899.8 214.8" stroke="#f2e85a" stroke-width="0.5" /><text x="888.8" y="214.4" font-size="1.6" fill="#222" font-weight="700" textLength="10.500">DN25 H+3.2</text><path d="M910.8 212.8L921.8 212.8" stroke="#f2e85a" stroke-width="0.5" /><text x="910.8" y="212.4" font-size="1.6" fill="#222" font-weight="700" textLength="10.500">DN25 H+3.2</text><text x="886.8" y="231.5" font-size="1.7" fill="#222" font-weight="700" textLength="12">DN25 H+3.20</text><rect x="908.3" y="211.8" width="1" height="1" fill="#e0a020" stroke="none" stroke-width="0.4" /><rect x="880.8" y="208.5" width="1" height="1" fill="#c82020" stroke="none" stroke-width="0.4" /><rect x="882.8" y="212" width="1" height="1" fill="#c82020" stroke="none" stroke-width="0.4" /><path d="M897.8 256.5L893.8 279.8L885.8 279.8" stroke="#f5b87a" stroke-width="0.45" fill="none" /><path d="M893.8 279.8L901.8 279.8" stroke="#f5b87a" stroke-width="0.45" fill="none" /><text x="885.8" y="279.4" font-size="1.75" fill="#111" font-weight="700" textLength="15.500" lengthAdjust="spacingAndGlyphs">DN25 H+3.20</text><text x="891.3" y="281.9" font-size="1.5" fill="#555" font-weight="700" >喷淋</text><path d="M919.3 256.5L915.3 279.8L907.3 279.8" stroke="#f5b87a" stroke-width="0.45" fill="none" /><path d="M915.3 279.8L923.3 279.8" stroke="#f5b87a" stroke-width="0.45" fill="none" /><text x="907.3" y="279.4" font-size="1.75" fill="#111" font-weight="700" textLength="15.500" lengthAdjust="spacingAndGlyphs">DN25 H+3.20</text><text x="912.8" y="281.9" font-size="1.5" fill="#555" font-weight="700" >喷淋</text><path d="M904.3 258.4L901.4 271.2L895.8 271.2" stroke="#35d235" stroke-width="0.6" fill="none" /><text x="895.3" y="267.8" font-size="1.6" fill="#2a2" font-weight="700" >DN50</text><path d="M882.8 258L878.8 279" stroke="#f5b87a" stroke-width="0.45" fill="none" /><path d="M924.8 258L919.8 279" stroke="#f5b87a" stroke-width="0.45" fill="none" /><path d="M940 227L945.4 212L946.4 211.4" stroke="#35d235" stroke-width="0.7" fill="none" /><path d="M941.4 227L946.4 211.4" stroke="#35d235" stroke-width="0.6" fill="none" /><path d="M946.4 211.4L950.4 224L952.8 232.7" stroke="#35d235" stroke-width="0.7" fill="none" /><path d="M946.4 211.4L944.9 236.3" stroke="#f2e85a" stroke-width="0.7" fill="none" /><path d="M946.9 211.4L952.8 236.3" stroke="#f2e85a" stroke-width="0.7" fill="none" /><path d="M945.6 213L948.9 236.3" stroke="#f2e85a" stroke-width="0.6" fill="none" /><path d="M947.4 212L951.4 222.8L960.4 222.8" stroke="#4a4ae6" stroke-width="0.7" fill="none" /><path d="M952.4 224.6L960.4 224.6" stroke="#35d235" stroke-width="0.5" fill="none" /><path d="M932.4 224.6L940.4 224.6" stroke="#35d235" stroke-width="0.5" fill="none" /><text x="932.9" y="223.6" font-size="1.6" fill="#2a2" font-weight="700" >DN50</text><text x="932.9" y="227.6" font-size="1.5" fill="#2a2" font-weight="700" >h+3.0</text><path d="M932.4 214.8L943.4 214.8" stroke="#f2e85a" stroke-width="0.5" /><text x="932.4" y="214.4" font-size="1.6" fill="#222" font-weight="700" textLength="10.500">DN25 H+3.2</text><path d="M954.4 212.8L965.4 212.8" stroke="#f2e85a" stroke-width="0.5" /><text x="954.4" y="212.4" font-size="1.6" fill="#222" font-weight="700" textLength="10.500">DN25 H+3.2</text><text x="930.4" y="231.5" font-size="1.7" fill="#222" font-weight="700" textLength="12">DN25 H+3.20</text><rect x="951.9" y="211.8" width="1" height="1" fill="#e0a020" stroke="none" stroke-width="0.4" /><path d="M941.4 256.5L937.4 279.8L929.4 279.8" stroke="#f5b87a" stroke-width="0.45" fill="none" /><path d="M937.4 279.8L945.4 279.8" stroke="#f5b87a" stroke-width="0.45" fill="none" /><text x="929.4" y="279.4" font-size="1.75" fill="#111" font-weight="700" textLength="15.500" lengthAdjust="spacingAndGlyphs">DN25 H+3.20</text><text x="934.9" y="281.9" font-size="1.5" fill="#555" font-weight="700" >喷淋</text><path d="M962.9 256.5L958.9 279.8L950.9 279.8" stroke="#f5b87a" stroke-width="0.45" fill="none" /><path d="M958.9 279.8L966.9 279.8" stroke="#f5b87a" stroke-width="0.45" fill="none" /><text x="950.9" y="279.4" font-size="1.75" fill="#111" font-weight="700" textLength="15.500" lengthAdjust="spacingAndGlyphs">DN25 H+3.20</text><text x="956.4" y="281.9" font-size="1.5" fill="#555" font-weight="700" >喷淋</text><path d="M947.9 258.4L945 271.2L939.4 271.2" stroke="#35d235" stroke-width="0.6" fill="none" /><text x="938.9" y="267.8" font-size="1.6" fill="#2a2" font-weight="700" >DN50</text><path d="M926.4 258L922.4 279" stroke="#f5b87a" stroke-width="0.45" fill="none" /><path d="M968.4 258L963.4 279" stroke="#f5b87a" stroke-width="0.45" fill="none" /><path d="M983.6 227L989 212L990 211.4" stroke="#35d235" stroke-width="0.7" fill="none" /><path d="M985 227L990 211.4" stroke="#35d235" stroke-width="0.6" fill="none" /><path d="M990 211.4L994 224L996.4 232.7" stroke="#35d235" stroke-width="0.7" fill="none" /><path d="M990 211.4L988.5 236.3" stroke="#f2e85a" stroke-width="0.7" fill="none" /><path d="M990.5 211.4L996.4 236.3" stroke="#f2e85a" stroke-width="0.7" fill="none" /><path d="M989.2 213L992.5 236.3" stroke="#f2e85a" stroke-width="0.6" fill="none" /><path d="M991 212L995 222.8L1004 222.8" stroke="#4a4ae6" stroke-width="0.7" fill="none" /><path d="M996 224.6L1004 224.6" stroke="#35d235" stroke-width="0.5" fill="none" /><path d="M976 224.6L984 224.6" stroke="#35d235" stroke-width="0.5" fill="none" /><text x="976.5" y="223.6" font-size="1.6" fill="#2a2" font-weight="700" >DN50</text><text x="976.5" y="227.6" font-size="1.5" fill="#2a2" font-weight="700" >h+3.0</text><path d="M976 214.8L987 214.8" stroke="#f2e85a" stroke-width="0.5" /><text x="976" y="214.4" font-size="1.6" fill="#222" font-weight="700" textLength="10.500">DN25 H+3.2</text><path d="M998 212.8L1009 212.8" stroke="#f2e85a" stroke-width="0.5" /><text x="998" y="212.4" font-size="1.6" fill="#222" font-weight="700" textLength="10.500">DN25 H+3.2</text><text x="974" y="231.5" font-size="1.7" fill="#222" font-weight="700" textLength="12">DN25 H+3.20</text><rect x="995.5" y="211.8" width="1" height="1" fill="#e0a020" stroke="none" stroke-width="0.4" /><rect x="968" y="208.5" width="1" height="1" fill="#c82020" stroke="none" stroke-width="0.4" /><rect x="970" y="212" width="1" height="1" fill="#c82020" stroke="none" stroke-width="0.4" /><path d="M985 256.5L981 279.8L973 279.8" stroke="#f5b87a" stroke-width="0.45" fill="none" /><path d="M981 279.8L989 279.8" stroke="#f5b87a" stroke-width="0.45" fill="none" /><text x="973" y="279.4" font-size="1.75" fill="#111" font-weight="700" textLength="15.500" lengthAdjust="spacingAndGlyphs">DN25 H+3.20</text><text x="978.5" y="281.9" font-size="1.5" fill="#555" font-weight="700" >喷淋</text><path d="M1006.5 256.5L1002.5 279.8L994.5 279.8" stroke="#f5b87a" stroke-width="0.45" fill="none" /><path d="M1002.5 279.8L1010.5 279.8" stroke="#f5b87a" stroke-width="0.45" fill="none" /><text x="994.5" y="279.4" font-size="1.75" fill="#111" font-weight="700" textLength="15.500" lengthAdjust="spacingAndGlyphs">DN25 H+3.20</text><text x="1000" y="281.9" font-size="1.5" fill="#555" font-weight="700" >喷淋</text><path d="M991.5 258.4L988.6 271.2L983 271.2" stroke="#35d235" stroke-width="0.6" fill="none" /><text x="982.5" y="267.8" font-size="1.6" fill="#2a2" font-weight="700" >DN50</text><path d="M970 258L966 279" stroke="#f5b87a" stroke-width="0.45" fill="none" /><path d="M1012 258L1007 279" stroke="#f5b87a" stroke-width="0.45" fill="none" /><path d="M1027.2 227L1032.6 212L1033.6 211.4" stroke="#35d235" stroke-width="0.7" fill="none" /><path d="M1028.6 227L1033.6 211.4" stroke="#35d235" stroke-width="0.6" fill="none" /><path d="M1033.6 211.4L1037.6 224L1040 232.7" stroke="#35d235" stroke-width="0.7" fill="none" /><path d="M1033.6 211.4L1032.1 236.3" stroke="#f2e85a" stroke-width="0.7" fill="none" /><path d="M1034.1 211.4L1040 236.3" stroke="#f2e85a" stroke-width="0.7" fill="none" /><path d="M1032.8 213L1036.1 236.3" stroke="#f2e85a" stroke-width="0.6" fill="none" /><path d="M1034.6 212L1038.6 222.8L1047.6 222.8" stroke="#4a4ae6" stroke-width="0.7" fill="none" /><path d="M1039.6 224.6L1047.6 224.6" stroke="#35d235" stroke-width="0.5" fill="none" /><path d="M1019.6 224.6L1027.6 224.6" stroke="#35d235" stroke-width="0.5" fill="none" /><text x="1020.1" y="223.6" font-size="1.6" fill="#2a2" font-weight="700" >DN50</text><text x="1020.1" y="227.6" font-size="1.5" fill="#2a2" font-weight="700" >h+3.0</text><path d="M1019.6 214.8L1030.6 214.8" stroke="#f2e85a" stroke-width="0.5" /><text x="1019.6" y="214.4" font-size="1.6" fill="#222" font-weight="700" textLength="10.500">DN25 H+3.2</text><path d="M1041.6 212.8L1052.6 212.8" stroke="#f2e85a" stroke-width="0.5" /><text x="1041.6" y="212.4" font-size="1.6" fill="#222" font-weight="700" textLength="10.500">DN25 H+3.2</text><text x="1017.6" y="231.5" font-size="1.7" fill="#222" font-weight="700" textLength="12">DN25 H+3.20</text><rect x="1039.1" y="211.8" width="1" height="1" fill="#e0a020" stroke="none" stroke-width="0.4" /><path d="M1028.6 256.5L1024.6 279.8L1016.6 279.8" stroke="#f5b87a" stroke-width="0.45" fill="none" /><path d="M1024.6 279.8L1032.6 279.8" stroke="#f5b87a" stroke-width="0.45" fill="none" /><text x="1016.6" y="279.4" font-size="1.75" fill="#111" font-weight="700" textLength="15.500" lengthAdjust="spacingAndGlyphs">DN25 H+3.20</text><text x="1022.1" y="281.9" font-size="1.5" fill="#555" font-weight="700" >喷淋</text><path d="M1050.1 256.5L1046.1 279.8L1038.1 279.8" stroke="#f5b87a" stroke-width="0.45" fill="none" /><path d="M1046.1 279.8L1054.1 279.8" stroke="#f5b87a" stroke-width="0.45" fill="none" /><text x="1038.1" y="279.4" font-size="1.75" fill="#111" font-weight="700" textLength="15.500" lengthAdjust="spacingAndGlyphs">DN25 H+3.20</text><text x="1043.6" y="281.9" font-size="1.5" fill="#555" font-weight="700" >喷淋</text><path d="M1035.1 258.4L1032.2 271.2L1026.6 271.2" stroke="#35d235" stroke-width="0.6" fill="none" /><text x="1026.1" y="267.8" font-size="1.6" fill="#2a2" font-weight="700" >DN50</text><path d="M1013.6 258L1009.6 279" stroke="#f5b87a" stroke-width="0.45" fill="none" /><path d="M1055.6 258L1050.6 279" stroke="#f5b87a" stroke-width="0.45" fill="none" /><path d="M1070.8 227L1076.2 212L1077.2 211.4" stroke="#35d235" stroke-width="0.7" fill="none" /><path d="M1072.2 227L1077.2 211.4" stroke="#35d235" stroke-width="0.6" fill="none" /><path d="M1077.2 211.4L1081.2 224L1083.6 232.7" stroke="#35d235" stroke-width="0.7" fill="none" /><path d="M1077.2 211.4L1075.7 236.3" stroke="#f2e85a" stroke-width="0.7" fill="none" /><path d="M1077.7 211.4L1083.6 236.3" stroke="#f2e85a" stroke-width="0.7" fill="none" /><path d="M1076.4 213L1079.7 236.3" stroke="#f2e85a" stroke-width="0.6" fill="none" /><path d="M1078.2 212L1082.2 222.8L1091.2 222.8" stroke="#4a4ae6" stroke-width="0.7" fill="none" /><path d="M1083.2 224.6L1091.2 224.6" stroke="#35d235" stroke-width="0.5" fill="none" /><path d="M1063.2 224.6L1071.2 224.6" stroke="#35d235" stroke-width="0.5" fill="none" /><text x="1063.7" y="223.6" font-size="1.6" fill="#2a2" font-weight="700" >DN50</text><text x="1063.7" y="227.6" font-size="1.5" fill="#2a2" font-weight="700" >h+3.0</text><path d="M1063.2 214.8L1074.2 214.8" stroke="#f2e85a" stroke-width="0.5" /><text x="1063.2" y="214.4" font-size="1.6" fill="#222" font-weight="700" textLength="10.500">DN25 H+3.2</text><path d="M1085.2 212.8L1096.2 212.8" stroke="#f2e85a" stroke-width="0.5" /><text x="1085.2" y="212.4" font-size="1.6" fill="#222" font-weight="700" textLength="10.500">DN25 H+3.2</text><text x="1061.2" y="231.5" font-size="1.7" fill="#222" font-weight="700" textLength="12">DN25 H+3.20</text><rect x="1082.7" y="211.8" width="1" height="1" fill="#e0a020" stroke="none" stroke-width="0.4" /><rect x="1055.2" y="208.5" width="1" height="1" fill="#c82020" stroke="none" stroke-width="0.4" /><rect x="1057.2" y="212" width="1" height="1" fill="#c82020" stroke="none" stroke-width="0.4" /><path d="M1072.2 256.5L1068.2 279.8L1060.2 279.8" stroke="#f5b87a" stroke-width="0.45" fill="none" /><path d="M1068.2 279.8L1076.2 279.8" stroke="#f5b87a" stroke-width="0.45" fill="none" /><text x="1060.2" y="279.4" font-size="1.75" fill="#111" font-weight="700" textLength="15.500" lengthAdjust="spacingAndGlyphs">DN25 H+3.20</text><text x="1065.7" y="281.9" font-size="1.5" fill="#555" font-weight="700" >喷淋</text><path d="M1093.7 256.5L1089.7 279.8L1081.7 279.8" stroke="#f5b87a" stroke-width="0.45" fill="none" /><path d="M1089.7 279.8L1097.7 279.8" stroke="#f5b87a" stroke-width="0.45" fill="none" /><text x="1081.7" y="279.4" font-size="1.75" fill="#111" font-weight="700" textLength="15.500" lengthAdjust="spacingAndGlyphs">DN25 H+3.20</text><text x="1087.2" y="281.9" font-size="1.5" fill="#555" font-weight="700" >喷淋</text><path d="M1078.7 258.4L1075.8 271.2L1070.2 271.2" stroke="#35d235" stroke-width="0.6" fill="none" /><text x="1069.7" y="267.8" font-size="1.6" fill="#2a2" font-weight="700" >DN50</text><path d="M1057.2 258L1053.2 279" stroke="#f5b87a" stroke-width="0.45" fill="none" /><path d="M1099.2 258L1094.2 279" stroke="#f5b87a" stroke-width="0.45" fill="none" /><path d="M927 258.4L927 275L932.5 275.5" stroke="#35d235" stroke-width="0.6" fill="none" /><path d="M1013.2 258.4L1013.2 275L1018.7 275.5" stroke="#35d235" stroke-width="0.6" fill="none" /><path d="M846 236.5L1098 236.5" stroke="#f3eb80" stroke-width="1.5" opacity=".85"/><path d="M846 234.8L1098 234.8" stroke="#f2e85a" stroke-width="0.5" /><path d="M846 240L1098 240" stroke="#f7cfa6" stroke-width="1.4" /><path d="M846 238.4L1098 238.4" stroke="#f5b87a" stroke-width="0.4" /><path d="M846 242.4L944 242.4L944 256.3" stroke="#4a90e2" stroke-width="0.75" fill="none" /><path d="M899.3 242.4L899.3 256.3" stroke="#4a90e2" stroke-width="0.75" fill="none" /><path d="M944 242.4L985 242.4L985 257" stroke="#4a90e2" stroke-width="0.6" fill="none" /><path d="M846 255.3L951 255.3" stroke="#f7cfa6" stroke-width="1.3" /><path d="M846 256.8L930 256.8" stroke="#30d8f0" stroke-width="0.9" /><path d="M988 257L1088 257L1091 254L1091 235L1094 232.5L1120 232.5L1127 240" stroke="#4a90e2" stroke-width="0.75" fill="none" /><path d="M1013 255.8L1040 255.8" stroke="#30d8f0" stroke-width="0.7" /><rect x="880.8" y="243.1" width="1" height="1" fill="#c82020" stroke="none" stroke-width="0.4" /><rect x="919.5" y="242.5" width="1" height="1" fill="#c82020" stroke="none" stroke-width="0.4" /><rect x="1108.5" y="246.5" width="1" height="1" fill="#c82020" stroke="none" stroke-width="0.4" /><rect x="1132" y="213" width="1" height="1" fill="#c82020" stroke="none" stroke-width="0.4" /><rect x="1133.5" y="224.5" width="1" height="1" fill="#c82020" stroke="none" stroke-width="0.4" /><path d="M958.5 234L962 241.5L967.5 252.5" stroke="#222" stroke-width="0.6" fill="none" /><path d="M963 232L963 252L959 252L959 232" stroke="#7fe07f" stroke-width="0.55" fill="none" /><path d="M975.5 232L986 232L986 236" stroke="#7fe07f" stroke-width="0.55" fill="none" /><text x="964.5" y="236" font-size="2.0" fill="#111" font-weight="700" >消火栓</text><path d="M855 206.2L855 220.4L810.9 220.4L810.9 248.9" stroke="#4a4ae6" stroke-width="0.7" fill="none" /><path d="M863.3 190L863.3 206.2" stroke="#4a4ae6" stroke-width="0.7" fill="none" /><path d="M797 253L808 253L812 247" stroke="#4a4ae6" stroke-width="0.7" fill="none" /><path d="M812 240L830 240" stroke="#4a4ae6" stroke-width="0.7" fill="none" /><path d="M790 243L808 245.5L822 236L830 236" stroke="#35d235" stroke-width="0.6" fill="none" /><path d="M794 237L806 244" stroke="#35d235" stroke-width="0.6" fill="none" /><path d="M790 249L806 247.5" stroke="#35d235" stroke-width="0.6" fill="none" /><path d="M795 262L808 248" stroke="#35d235" stroke-width="0.6" fill="none" /><path d="M803 266L812 250" stroke="#35d235" stroke-width="0.6" fill="none" /><path d="M820 234L825 226L830 226" stroke="#35d235" stroke-width="0.6" fill="none" /><path d="M835 270L836.5 258" stroke="#35d235" stroke-width="0.6" fill="none" /><path d="M855 270L858 257" stroke="#35d235" stroke-width="0.6" fill="none" /><path d="M826 244L829 249L836 249" stroke="#35d235" stroke-width="0.6" fill="none" /><path d="M806 223L806 234" stroke="#4a90e2" stroke-width="0.6" fill="none" /><path d="M806 216L812 216L814 248" stroke="#f2e85a" stroke-width="0.7" fill="none" /><rect x="810.5" y="246" width="4" height="3" fill="#f0a030" stroke="none" stroke-width="0.4" /><path d="M812 252L808 270L800 271" stroke="#f5b87a" stroke-width="0.55" fill="none" /><path d="M845 230L838 255" stroke="#f08080" stroke-width="0.5" fill="none" /><path d="M839 254L846 254L846 246" stroke="#efe73a" stroke-width="1.0" fill="none" /><rect x="839" y="250" width="18" height="4" fill="#f5f0a0" stroke="none" stroke-width="0" opacity=".7"/><text x="800" y="221" font-size="1.6" fill="#222" font-weight="700" >DN65</text><text x="800" y="226" font-size="1.6" fill="#2a2" font-weight="700" >h+3.0</text><text x="793" y="237" font-size="1.6" fill="#2a2" font-weight="700" >DN50</text><text x="793" y="242" font-size="1.6" fill="#2a2" font-weight="700" >DN50</text><text x="787" y="250" font-size="1.6" fill="#2a2" font-weight="700" >DN100 h-0.8</text><text x="792" y="255" font-size="1.6" fill="#2a2" font-weight="700" >DN50</text><text x="790" y="262" font-size="1.6" fill="#2a2" font-weight="700" >DN80 i=0.01</text><text x="794" y="268" font-size="1.6" fill="#2a2" font-weight="700" >DN50</text><text x="827" y="244" font-size="1.6" fill="#2a2" font-weight="700" >DN50</text><text x="829" y="236" font-size="1.6" fill="#222" font-weight="700" >DN65</text><text x="794" y="277" font-size="1.75" fill="#111" font-weight="700" >DN25 H+3.20</text><path d="M793 277.5L809 277.5" stroke="#f5b87a" stroke-width="0.45" /><text x="824" y="277" font-size="1.75" fill="#111" font-weight="700" >DN25 H+3.20</text><path d="M823 277.5L839 277.5" stroke="#f5b87a" stroke-width="0.45" /><rect x="826" y="189" width="7.5" height="1.8" fill="#d040d0" stroke="none" stroke-width="0.4" /><path d="M826 192L825 201L822 208" stroke="#30d8f0" stroke-width="0.6" fill="none" /><path d="M818 181L824 183L826 193" stroke="#4a4ae6" stroke-width="0.7" fill="none" /><path d="M816 181L799 180" stroke="#4a4ae6" stroke-width="0.7" fill="none" /><path d="M1129 243L1139 225L1143 224" stroke="#35d235" stroke-width="0.55" fill="none" /><text x="1143.5" y="224.6" font-size="1.6" fill="#2a2" font-weight="700" >DN50</text><path d="M1129 243L1140 229L1144 228" stroke="#35d235" stroke-width="0.55" fill="none" /><text x="1144.5" y="228.6" font-size="1.6" fill="#2a2" font-weight="700" >DN50</text><path d="M1129 243L1139 233L1143 232" stroke="#35d235" stroke-width="0.55" fill="none" /><text x="1143.5" y="232.6" font-size="1.6" fill="#2a2" font-weight="700" >DN50</text><path d="M1129 243L1135 217L1139 216" stroke="#35d235" stroke-width="0.55" fill="none" /><text x="1139.5" y="216.6" font-size="1.6" fill="#2a2" font-weight="700" >DN50</text><path d="M1129 243L1144 241L1148 240" stroke="#35d235" stroke-width="0.55" fill="none" /><text x="1148.5" y="240.6" font-size="1.6" fill="#2a2" font-weight="700" >DN50</text><path d="M1119 233L1129 244L1133 250" stroke="#e8d820" stroke-width="1.2" fill="none" /><path d="M1121 233.5L1131 244" stroke="#222" stroke-width="0.7" fill="none" /><path d="M1100 251.5L1126 251.5L1134 248L1137 252L1143 259" stroke="#4a4ae6" stroke-width="0.75" fill="none" /><path d="M1134 252L1134 263L1150 263" stroke="#4a4ae6" stroke-width="0.7" fill="none" /><path d="M1097 254L1126 254L1131 258L1133 260" stroke="#30d8f0" stroke-width="0.7" fill="none" /><path d="M1122 244L1128 249L1133 262" stroke="#4a90e2" stroke-width="0.7" fill="none" /><path d="M1126 232L1133 240L1140 232" stroke="#4a90e2" stroke-width="0.6" fill="none" /><rect x="1114.5" y="217" width="4.5" height="2" fill="none" stroke="#7fe07f" stroke-width="0.5" /><rect x="1114.5" y="220" width="4.5" height="2" fill="none" stroke="#7fe07f" stroke-width="0.5" /><rect x="1114.5" y="223" width="4.5" height="2" fill="none" stroke="#7fe07f" stroke-width="0.5" /><rect x="1114.5" y="226" width="4.5" height="2" fill="none" stroke="#7fe07f" stroke-width="0.5" /><path d="M1114.5 215L1114.5 241" stroke="#7fe07f" stroke-width="0.55" fill="none" /><path d="M1119 215L1119 241" stroke="#7fe07f" stroke-width="0.55" fill="none" /><text x="1143" y="257" font-size="1.6" fill="#2a2" font-weight="700" >DN65</text><text x="1140" y="262.5" font-size="1.6" fill="#2a2" font-weight="700" >DN100 h-0.8</text><text x="1120" y="266" font-size="1.6" fill="#2a2" font-weight="700" >DN50</text><text x="1120" y="270" font-size="1.6" fill="#2a2" font-weight="700" >h+3.0</text><path d="M1131 262L1128 270L1121 270" stroke="#35d235" stroke-width="0.55" fill="none" /><path d="M1133 264L1136 277L1152 277" stroke="#f5b87a" stroke-width="0.5" fill="none" /><text x="1137" y="276.5" font-size="1.75" fill="#111" font-weight="700" >DN25 H+3.20</text></g></svg></div><div style="left:1638.0px;top:144.9px;width:294.0px;height:874.2px;background:#eef1f5;"></div><div style="left:1638.3px;top:144.9px;width:1.2px;height:879.0px;background:#e6e9ee;"></div><span class="t" style="left:1647.6px;top:163.2px;color:#5b6573;font-size:11.6px;">通用工具</span><div style="left:1908.9px;top:162.9px;width:8.4px;height:1.2px;background:#6b7480;"></div><svg style="left:1662.0px;top:203.1px;width:22.2px;height:22.2px;" viewBox="0 0 24 24"><path d="M12 1l3 4h-6zM12 23l3-4h-6zM1 12l4-3v6zM23 12l-4-3v6z" fill="#4a6484"/><path d="M12 4v16M4 12h16" stroke="#4a6484" stroke-width="1.6"/></svg><svg style="left:1701.3px;top:203.1px;width:22.2px;height:22.2px;" viewBox="0 0 24 24"><rect x="5" y="5" width="18" height="18" fill="#4a6484"/><rect x="2" y="2" width="18" height="18" fill="#fff" stroke="#4a6484" stroke-width="2"/><rect x="9" y="9" width="4" height="4" fill="none" stroke="#4a6484" stroke-width="1.2"/></svg><svg style="left:1738.8px;top:203.1px;width:22.2px;height:22.2px;" viewBox="0 0 24 24"><circle cx="11" cy="12" r="9.500" fill="none" stroke="#4a6484" stroke-width="1.8"/><circle cx="11" cy="12" r="4" fill="#4a6484"/><path d="M11 12h12" stroke="#4a6484" stroke-width="2"/><path d="M19 8l4 4-4 4" stroke="#4a6484" stroke-width="1.6" fill="none"/></svg><svg style="left:1776.6px;top:203.1px;width:22.2px;height:22.2px;" viewBox="0 0 24 24"><path d="M13 1V23" stroke="#9fb0c6" stroke-width="1.6"/><rect x="3" y="7" width="10" height="9" fill="#4a6484"/><rect x="9" y="14" width="6" height="8" fill="#4a6484"/><path d="M15 8h7M15 15h7" stroke="#9fb0c6" stroke-width="1.6"/></svg><svg style="left:1815.0px;top:203.1px;width:22.2px;height:22.2px;" viewBox="0 0 24 24"><path d="M12 1V23" stroke="#9fb0c6" stroke-width="1.6"/><rect x="1" y="8" width="9" height="8" fill="#4a6484"/><rect x="14" y="8" width="9" height="8" fill="#4a6484"/></svg><svg style="left:1854.3px;top:203.1px;width:22.2px;height:22.2px;" viewBox="0 0 24 24"><rect x="2" y="2" width="12" height="12" rx="3.500" fill="none" stroke="#4a6484" stroke-width="2.6"/><rect x="10" y="10" width="12" height="12" rx="3.500" fill="#eef1f5" stroke="#4a6484" stroke-width="2.6"/></svg><svg style="left:1662.0px;top:242.1px;width:22.2px;height:22.2px;" viewBox="0 0 24 24"><path d="M21 2V23" stroke="#4a6484" stroke-width="1.6"/><rect x="8" y="4" width="12" height="7" fill="#4a6484"/><rect x="3" y="13" width="17" height="7" fill="#fff" stroke="#4a6484" stroke-width="2"/></svg><svg style="left:1701.3px;top:242.1px;width:22.2px;height:22.2px;" viewBox="0 0 24 24"><path d="M20 2V23M23 2V23" stroke="#9fb0c6" stroke-width="1.4"/><rect x="2" y="9" width="10" height="6" fill="#4a6484"/><path d="M12 12h7" stroke="#4a6484" stroke-width="1.8"/></svg><svg style="left:1738.8px;top:242.1px;width:22.2px;height:22.2px;" viewBox="0 0 24 24"><path d="M22 2V23" stroke="#9fb0c6" stroke-width="1.6"/><rect x="3" y="4" width="13" height="7" fill="#4a6484"/><rect x="3" y="14" width="13" height="7" fill="#4a6484"/><path d="M16 7.5h5M16 17.500h5" stroke="#4a6484" stroke-width="1.6"/></svg><svg style="left:1776.6px;top:242.1px;width:22.2px;height:22.2px;" viewBox="0 0 24 24"><rect x="1" y="16" width="7" height="7" fill="#4a6484"/><rect x="16" y="1" width="7" height="7" fill="#fff" stroke="#4a6484" stroke-width="1.8"/><path d="M7 17L17 7" stroke="#4a6484" stroke-width="1.8"/><circle cx="12" cy="12" r="2.2" fill="#fff" stroke="#4a6484" stroke-width="1.4"/></svg><svg style="left:1815.0px;top:242.1px;width:22.2px;height:22.2px;" viewBox="0 0 24 24"><path d="M12 1V23" stroke="#9fb0c6" stroke-width="1.6"/><path d="M2 5v14l7-7z" fill="none" stroke="#4a6484" stroke-width="1.8"/><path d="M22 5v14l-7-7z" fill="#4a6484"/></svg><svg style="left:1854.3px;top:242.1px;width:22.2px;height:22.2px;" viewBox="0 0 24 24"><path d="M4 7H20L18.500 23H5.500z" fill="#4a6484"/><path d="M2 5.500H22" stroke="#4a6484" stroke-width="2.4"/><path d="M8 4.500V2H16V4.500" stroke="#4a6484" stroke-width="2" fill="none"/><path d="M9.500 10v10M14.500 10v10" stroke="#c8d3e2" stroke-width="1.4"/></svg><svg style="left:1662.0px;top:279.6px;width:22.2px;height:22.2px;" viewBox="0 0 24 24"><rect x="1" y="5" width="22" height="14" fill="#dfe6f0" stroke="#4a6484" stroke-width="2"/><path d="M5 15v-5M9 15v-3M13 15v-5M17 15v-3" stroke="#4a6484" stroke-width="1.6"/><path d="M1 19h22" stroke="#4a6484" stroke-width="2.4"/></svg><svg style="left:1701.3px;top:279.6px;width:22.2px;height:22.2px;" viewBox="0 0 24 24"><path d="M3 6Q17 2 18 12L17 22" stroke="#7fb0f8" stroke-width="4.500" fill="none"/><path d="M3 4.500Q8 3 11 4M16.500 17L15.800 22" stroke="#4a6484" stroke-width="1.6" fill="none"/></svg><div style="left:1638.0px;top:343.8px;width:294.0px;height:1.5px;background:#f9fafb;"></div><span class="t" style="left:1647.6px;top:361.2px;color:#5b6573;font-size:11.6px;">编辑临时标注</span><div style="left:1908.9px;top:360.9px;width:8.4px;height:1.2px;background:#6b7480;"></div><svg style="left:1652.4px;top:388.2px;width:19.2px;height:19.8px;" viewBox="0 0 24 24"><path d="M2 2H18L12 10V19L8 16V10z" fill="none" stroke="#1d3461" stroke-width="2.2"/><path d="M14 13l8 5-4 .8 2 4-2 1-2-4-3 2.500z" fill="#3d8af2"/></svg><div style="left:1638.0px;top:428.7px;width:294.0px;height:1.5px;background:#f9fafb;"></div><span class="t" style="left:1647.6px;top:445.5px;color:#5b6573;font-size:11.6px;">属性面板</span><div style="left:1651.8px;top:461.1px;width:240.6px;height:46.2px;background:#fafbfc;border:1px solid #e1e4ea;border-radius:2px;"></div><span class="t" style="left:1658.4px;top:476.7px;color:#1f2329;font-size:11.4px;">线性标注</span><span class="t" style="left:1658.4px;top:491.7px;color:#1f2329;font-size:11.4px;">对齐标注类型</span><svg style="left:1879.5px;top:482.1px;width:9.0px;height:6.3px;" viewBox="0 0 10 7"><path d="M1 1.5L5 5.5L9 1.5" stroke="#6b7480" stroke-width="1.7" fill="none"/></svg><div style="left:1899.0px;top:460.5px;width:19.8px;height:20.4px;background:#f7f8fa;border:1px solid #e1e4ea;"></div><div style="left:1899.0px;top:486.3px;width:19.8px;height:20.4px;background:#f7f8fa;border:1px solid #e1e4ea;"></div><span class="t c" style="left:1908.9px;top:470.4px;color:#7c8593;font-size:13px;">+</span><svg style="left:1903.8px;top:491.7px;width:10.2px;height:9.6px;" viewBox="0 0 24 24"><path d="M2 5h20M2 12h20M2 19h20" stroke="#5b6573" stroke-width="2.6"/></svg><svg style="left:1653.0px;top:528.6px;width:8.4px;height:6.3px;" viewBox="0 0 10 7"><path d="M1 1.5L5 5.5L9 1.5" stroke="#6b7480" stroke-width="1.8" fill="none"/></svg><span class="t" style="left:1671.6px;top:531.9px;color:#5b6573;">基本属性</span><span class="t" style="left:1650.0px;top:561.0px;">显示引线</span><div class="cb" style="left:1721.4px;top:552.6px;width:17.1px;height:17.1px;"></div><span class="t" style="left:1650.0px;top:591.0px;">视图尺寸</span><div style="left:1721.4px;top:580.5px;width:199.2px;height:20.7px;background:#f1f3f6;border:1px solid #e3e6ec;border-radius:2px;"></div><span class="t" style="left:1728.0px;top:591.0px;">"多种"</span><div style="left:37.5px;top:1002.0px;width:195.6px;height:22.8px;background:#eef1f5;"></div><div style="left:37.5px;top:1024.8px;width:1894.5px;height:22.2px;background:#e9edf2;"></div><div style="left:37.5px;top:1024.5px;width:1894.5px;height:1.2px;background:#f6f7f9;"></div><svg style="left:58.8px;top:1029.6px;width:15.0px;height:13.2px;" viewBox="0 0 24 24"><path d="M1 12Q12 1 23 12Q12 23 1 12z" fill="none" stroke="#55637a" stroke-width="2.4"/><circle cx="12" cy="12" r="4" fill="#55637a"/></svg><svg style="left:91.2px;top:1029.6px;width:15.0px;height:13.2px;" viewBox="0 0 24 24"><path d="M1 12Q12 1 23 12Q12 23 1 12z" fill="none" stroke="#55637a" stroke-width="2.4"/><circle cx="12" cy="12" r="4" fill="#55637a"/><path d="M16 18l6 4" stroke="#6aa6f5" stroke-width="3"/></svg><svg style="left:123.6px;top:1029.6px;width:15.0px;height:13.2px;" viewBox="0 0 24 24"><path d="M1 12Q12 1 23 12Q12 23 1 12z" fill="none" stroke="#55637a" stroke-width="2.4"/><circle cx="12" cy="12" r="4" fill="#55637a"/><path d="M15 17l7 5" stroke="#3d8af2" stroke-width="3.4"/></svg><div style="left:148.8px;top:1026.9px;width:1.2px;height:18.6px;background:#d6dae1;"></div><svg style="left:164.1px;top:1028.4px;width:12.0px;height:15.6px;" viewBox="0 0 24 25"><path d="M12 2a8 8 0 0 1 4.5 14.5V19h-9v-2.500A8 8 0 0 1 12 2z" fill="none" stroke="#1d3461" stroke-width="2.6"/><path d="M8.5 22.500h7" stroke="#1d3461" stroke-width="2.4"/></svg><svg style="left:195.6px;top:1029.9px;width:15.0px;height:12.6px;" viewBox="0 0 24 24"><path d="M1 12Q12 1 23 12Q12 23 1 12z" fill="none" stroke="#55637a" stroke-width="2.4"/><circle cx="12" cy="12" r="4" fill="#55637a"/></svg><div style="left:217.8px;top:1036.5px;width:4.2px;height:1.2px;background:#8a93a0;"></div><div style="left:235.8px;top:1026.9px;width:1.2px;height:18.6px;background:#d6dae1;"></div><svg style="left:253.8px;top:1029.0px;width:13.8px;height:15.0px;" viewBox="0 0 24 24"><rect x="3" y="2" width="7" height="8" fill="#1d3461"/><rect x="3" y="13" width="7" height="8" fill="#1d3461"/><path d="M13 2V22" stroke="#1d3461" stroke-width="2"/><path d="M14 6h7M14 17h7" stroke="#8a93a0" stroke-width="2"/></svg><svg style="left:288.0px;top:1029.0px;width:13.8px;height:15.0px;" viewBox="0 0 24 24"><path d="M4 2V20H22" stroke="#3d6fd0" stroke-width="2.6" fill="none"/><path d="M4 12a8 8 0 0 1 8 8" stroke="#3d8af2" stroke-width="2" fill="none"/></svg><div style="left:321.9px;top:1026.9px;width:1.2px;height:18.6px;background:#d6dae1;"></div><div style="left:1837.8px;top:1026.9px;width:1.2px;height:18.6px;background:#d6dae1;"></div><svg style="left:1851.6px;top:1029.0px;width:18.0px;height:15.0px;" viewBox="0 0 24 24"><rect x="2" y="8" width="20" height="8" rx="1" fill="#8fd9c0" transform="rotate(-40 12 12)"/></svg><svg style="left:1885.2px;top:1029.6px;width:14.4px;height:14.4px;" viewBox="0 0 24 24"><rect x="3" y="3" width="16" height="16" rx="2" fill="none" stroke="#7d8aa0" stroke-width="2.4"/><path d="M7 22h15V7" stroke="#b7c0ce" stroke-width="2.2" fill="none"/></svg><svg style="left:1915.8px;top:1029.6px;width:15.0px;height:14.4px;" viewBox="0 0 24 24"><path d="M3 3l7 7M21 3l-7 7M3 21l7-7M21 21l-7-7" stroke="#7d8aa0" stroke-width="2.4"/><rect x="8" y="8" width="8" height="8" fill="none" stroke="#7d8aa0" stroke-width="2"/></svg><svg style="left:240.0px;top:550.8px;width:16.2px;height:33.6px;" viewBox="0 0 10.8 22.4"><path d="M0 0A10.500 11.200 0 0 1 0 22.400z" fill="#c5cad3"/><path d="M3 9l3 2.200-3 2.200" stroke="#fff" stroke-width="1.2" fill="none"/></svg><svg style="left:1621.8px;top:568.2px;width:16.2px;height:33.6px;" viewBox="0 0 10.8 22.4"><path d="M10.8 0A10.500 11.200 0 0 0 10.8 22.400z" fill="#c5cad3"/><path d="M5 9l3 2.200-3 2.200" stroke="#fff" stroke-width="1.2" fill="none"/></svg><div style="left:1594.2px;top:930.0px;width:28.8px;height:50.4px;background:#3b3b3b;"></div><svg style="left:1599.6px;top:934.2px;width:18.0px;height:18.0px;" viewBox="0 0 24 24"><path d="M19 12a7 7 0 1 1-3-5.700" stroke="#fff" stroke-width="2.6" fill="none"/><path d="M12 3h6v6" stroke="#fff" stroke-width="2.4" fill="none"/><circle cx="12" cy="12" r="1.8" fill="#fff"/></svg><svg style="left:1600.8px;top:958.8px;width:15.6px;height:15.6px;" viewBox="0 0 24 24"><path d="M3 3L21 21M21 3L3 21" stroke="#fff" stroke-width="3.6"/></svg><div class="bd"></div></div><div class="win" style="left:0px;top:427.05px;transform:scale(0.33333,0.333333);"><div style="left:6.0px;top:6.0px;width:1926.0px;height:1041.0px;background:#eef1f5;"></div><div style="left:6.0px;top:6.0px;width:1926.0px;height:47.4px;background:#1e2228;"></div><svg style="left:0.0px;top:0.0px;width:42.0px;height:42.0px;" viewBox="0 0 14 14"><path d="M4.3 9.3L6.2 5.4L8.3 9.3L10.3 5.4" stroke="#0a3d24" stroke-width=".5" fill="none"/><circle cx="6.2" cy="5.4" r="1.15" fill="#00a651"/><circle cx="10.3" cy="5.4" r="1.15" fill="#00a651"/><circle cx="4.3" cy="9.3" r="1.15" fill="#00a651"/><circle cx="8.3" cy="9.3" r="1.15" fill="#00a651"/></svg><span class="t" style="left:38.4px;top:22.2px;color:#dfe2e6;font-size:12.6px;-webkit-text-stroke:0;">14#-给排水 - 三维视图: 三维(雨水)</span><div style="left:9.0px;top:0;width:0;height:0;"><svg style="left:627.9px;top:11.1px;width:21.0px;height:21.0px;" viewBox="0 0 24 24"><path d="M3 2H17L21 6V22H3z" fill="none" stroke="#e6e8eb" stroke-width="2"/><rect x="7" y="2" width="9" height="6" fill="none" stroke="#e6e8eb" stroke-width="1.8"/><rect x="7" y="13" width="10" height="9" fill="none" stroke="#e6e8eb" stroke-width="1.8"/></svg><span class="t" style="left:653.4px;top:22.2px;color:#e4e6ea;-webkit-text-stroke:0.05px;">保存</span><svg style="left:688.5px;top:11.1px;width:21.0px;height:21.0px;" viewBox="0 0 24 24"><path d="M22 2L2 11L9 14L11 22L14 16L20 19z" fill="#e6e8eb"/><path d="M9 14L22 2L11 16" stroke="#1e2228" stroke-width="1.2" fill="none"/></svg><span class="t" style="left:714.0px;top:22.2px;color:#e4e6ea;-webkit-text-stroke:0.05px;">提交</span><svg style="left:749.4px;top:11.1px;width:21.0px;height:21.0px;" viewBox="0 0 24 24"><path d="M4 2H14L20 8V22H4z" fill="none" stroke="#e6e8eb" stroke-width="2"/><path d="M14 2V8H20" fill="none" stroke="#e6e8eb" stroke-width="1.6"/><path d="M12 13l7 8M19 13l-7 8" stroke="#f0443c" stroke-width="2.6"/></svg><span class="t" style="left:774.6px;top:22.2px;color:#e4e6ea;-webkit-text-stroke:0.05px;">关闭</span><svg style="left:809.4px;top:11.1px;width:21.0px;height:21.0px;" viewBox="0 0 24 24"><path d="M8 5H4V22H13" fill="none" stroke="#e6e8eb" stroke-width="2"/><path d="M8 3H16V7H8z" fill="#e6e8eb"/><path d="M11 9H21V22H11z" fill="none" stroke="#e6e8eb" stroke-width="2"/><path d="M14 13h4M14 17h4" stroke="#e6e8eb" stroke-width="1.5"/></svg><span class="t" style="left:834.9px;top:22.2px;color:#e4e6ea;-webkit-text-stroke:0.05px;">剪贴板</span><svg style="left:878.1px;top:18.9px;width:9.6px;height:7.2px;" viewBox="0 0 10 7"><path d="M1 1.5L5 5.5L9 1.5" stroke="#c8ccd2" stroke-width="1.6" fill="none"/></svg><svg style="left:902.4px;top:11.1px;width:21.0px;height:21.0px;" viewBox="0 0 24 24"><path d="M9 4L3 9.5L9 15" fill="none" stroke="#e6e8eb" stroke-width="2.4"/><path d="M3 9.5H15a6 5.5 0 0 1 0 11H7" fill="none" stroke="#e6e8eb" stroke-width="2.4"/></svg><svg style="left:934.5px;top:11.1px;width:21.0px;height:21.0px;" viewBox="0 0 24 24"><path d="M15 4L21 9.5L15 15" fill="none" stroke="#5a6068" stroke-width="2.2"/><path d="M21 9.5H9a6 5.5 0 0 0 0 11H17" fill="none" stroke="#5a6068" stroke-width="2.2"/></svg><svg style="left:965.4px;top:11.1px;width:21.0px;height:21.0px;" viewBox="0 0 24 24"><path d="M3 3H21V14Q21 20 12 23Q3 20 3 14z" fill="none" stroke="#e6e8eb" stroke-width="2"/><circle cx="12" cy="11" r="3.5" fill="none" stroke="#e6e8eb" stroke-width="2"/><path d="M12 15v4" stroke="#e6e8eb" stroke-width="2"/></svg><span class="t" style="left:990.9px;top:22.2px;color:#e4e6ea;-webkit-text-stroke:0.05px;">项目管理</span><svg style="left:1049.1px;top:18.9px;width:9.6px;height:7.2px;" viewBox="0 0 10 7"><path d="M1 1.5L5 5.5L9 1.5" stroke="#c8ccd2" stroke-width="1.6" fill="none"/></svg><svg style="left:1068.9px;top:11.1px;width:21.0px;height:21.0px;" viewBox="0 0 24 24"><rect x="10.2" y="0.5" width="3.6" height="6" rx="1" fill="#e6e8eb" transform="rotate(0 12 12)"/><rect x="10.2" y="0.5" width="3.6" height="6" rx="1" fill="#e6e8eb" transform="rotate(45 12 12)"/><rect x="10.2" y="0.5" width="3.6" height="6" rx="1" fill="#e6e8eb" transform="rotate(90 12 12)"/><rect x="10.2" y="0.5" width="3.6" height="6" rx="1" fill="#e6e8eb" transform="rotate(135 12 12)"/><rect x="10.2" y="0.5" width="3.6" height="6" rx="1" fill="#e6e8eb" transform="rotate(180 12 12)"/><rect x="10.2" y="0.5" width="3.6" height="6" rx="1" fill="#e6e8eb" transform="rotate(225 12 12)"/><rect x="10.2" y="0.5" width="3.6" height="6" rx="1" fill="#e6e8eb" transform="rotate(270 12 12)"/><rect x="10.2" y="0.5" width="3.6" height="6" rx="1" fill="#e6e8eb" transform="rotate(315 12 12)"/><circle cx="12" cy="12" r="6.3" fill="none" stroke="#e6e8eb" stroke-width="4.2"/></svg><span class="t" style="left:1094.4px;top:22.2px;color:#e4e6ea;-webkit-text-stroke:0.05px;">系统设置</span><svg style="left:1153.2px;top:18.9px;width:9.6px;height:7.2px;" viewBox="0 0 10 7"><path d="M1 1.5L5 5.5L9 1.5" stroke="#c8ccd2" stroke-width="1.6" fill="none"/></svg></div><svg style="left:1584.6px;top:12.0px;width:19.8px;height:19.8px;" viewBox="0 0 24 24"><circle cx="12" cy="12" r="11.5" fill="#d9dde4"/><circle cx="12" cy="9" r="4" fill="#8f98a6"/><path d="M4 20a8 7 0 0 1 16 0z" fill="#8f98a6"/><circle cx="14" cy="12" r="2" fill="#e9a23b"/></svg><span class="t" style="left:1610.4px;top:22.2px;color:#e4e6ea;-webkit-text-stroke:0.05px;">广小二</span><svg style="left:1654.5px;top:12.0px;width:19.8px;height:19.8px;" viewBox="0 0 24 24"><circle cx="12" cy="12" r="11.5" fill="#d9dde4"/><path d="M6 8h12v8h-5l-3 3v-3H6z" fill="#7d8694"/></svg><span class="t" style="left:1682.4px;top:22.2px;color:#e4e6ea;-webkit-text-stroke:0.05px;">反馈</span><svg style="left:1714.8px;top:18.9px;width:9.6px;height:7.2px;" viewBox="0 0 10 7"><path d="M1 1.5L5 5.5L9 1.5" stroke="#c8ccd2" stroke-width="1.6" fill="none"/></svg><svg style="left:1735.2px;top:12.0px;width:19.8px;height:19.8px;" viewBox="0 0 24 24"><circle cx="12" cy="12" r="10.5" fill="#1e2228" stroke="#d9dde4" stroke-width="2.4"/><path d="M9 9a3 3.4 0 1 1 4.5 3q-1.5 1-1.5 3" stroke="#d9dde4" stroke-width="2.2" fill="none"/><circle cx="12" cy="18.5" r="1.4" fill="#d9dde4"/></svg><span class="t" style="left:1762.8px;top:22.2px;color:#e4e6ea;-webkit-text-stroke:0.05px;">帮助</span><div style="left:1810.8px;top:21.6px;width:7.8px;height:1.5px;background:#b9bdc4;"></div><svg style="left:1857.0px;top:15.6px;width:13.2px;height:13.2px;" viewBox="0 0 24 24"><rect x="2" y="7" width="14" height="14" fill="none" stroke="#e6e8eb" stroke-width="2.6"/><path d="M7 7V3H21V17H16" fill="none" stroke="#e6e8eb" stroke-width="2.6"/></svg><svg style="left:1904.7px;top:15.0px;width:14.4px;height:14.4px;" viewBox="0 0 24 24"><path d="M3 3L21 21M21 3L3 21" stroke="#e6e8eb" stroke-width="2.8"/></svg><svg style="left:0.0px;top:0.0px;width:600.0px;height:60.0px;" viewBox="0 0 200 20"><path d="M12.30 17.8 L12.30 13.5 Q12.30 12.9 14.50 12.9 L31.00 12.9 Q32.00 12.9 32.60 13.700000000000001 L36.00 17.8 Z" fill="#d3d8e1"/><path d="M36.80 17.8 L38.00 13.5 Q38.20 12.9 39.00 12.9 L51.70 12.9 Q52.70 12.9 53.30 13.700000000000001 L56.70 17.8 Z" fill="#d3d8e1"/><path d="M57.50 17.8 L58.70 13.5 Q58.90 12.9 59.70 12.9 L70.80 12.9 Q71.80 12.9 72.40 13.700000000000001 L75.80 17.8 Z" fill="#d3d8e1"/><path d="M76.60 17.8 L77.80 13.5 Q78.00 12.9 78.80 12.9 L90.70 12.9 Q91.70 12.9 92.30 13.700000000000001 L95.70 17.8 Z" fill="#d3d8e1"/><path d="M96.50 17.8 L97.70 13.5 Q97.90 12.9 98.70 12.9 L109.90 12.9 Q110.90 12.9 111.50 13.700000000000001 L114.90 17.8 Z" fill="#d3d8e1"/><path d="M115.70 17.8 L116.90 13.5 Q117.10 12.9 117.90 12.9 L130.50 12.9 Q131.50 12.9 132.10 13.700000000000001 L135.50 17.8 Z" fill="#eef1f5"/><path d="M136.30 17.8 L137.50 13.5 Q137.70 12.9 138.50 12.9 L154.30 12.9 Q155.30 12.9 155.90 13.700000000000001 L159.30 17.8 Z" fill="#d3d8e1"/></svg><span class="t c" style="left:67.9px;top:46.2px;color:#6b7480;font-size:11.6px;">通用</span><span class="t c" style="left:134.8px;top:46.2px;color:#6b7480;font-size:11.6px;">给排水</span><span class="t c" style="left:194.6px;top:46.2px;color:#6b7480;font-size:11.6px;">暖通</span><span class="t c" style="left:253.1px;top:46.2px;color:#6b7480;font-size:11.6px;">电气</span><span class="t c" style="left:311.7px;top:46.2px;color:#6b7480;font-size:11.6px;">管综</span><span class="t c" style="left:371.4px;top:46.2px;color:#1f2329;font-size:11.6px;">注释</span><span class="t c" style="left:438.0px;top:46.2px;color:#6b7480;font-size:11.6px;">视图拓展</span><div style="left:36.9px;top:53.4px;width:1895.1px;height:59.1px;background:#eef1f5;"></div><svg style="left:421.2px;top:59.1px;width:30.6px;height:30.6px;opacity:.33;" viewBox="0 0 24 24"><rect x="2" y="3" width="20" height="18" fill="#cddbf0" stroke="#4f6f9f" stroke-width="1.8"/><path d="M2 9H22M2 15H22M8.7 3V21M15.3 3V21" stroke="#4f6f9f" stroke-width="1.5" fill="none"/></svg><span class="t c" style="left:436.5px;top:99.3px;color:#a9b0bb;font-size:11.6px;">表格</span><svg style="left:475.2px;top:59.1px;width:30.6px;height:30.6px;opacity:.33;" viewBox="0 0 24 24"><path d="M4 20L20 4" stroke="#3c5273" stroke-width="1.6"/><circle cx="4" cy="20" r="2" fill="#3d8af2"/><circle cx="20" cy="4" r="2" fill="#3c5273"/></svg><span class="t c" style="left:490.5px;top:99.3px;color:#a9b0bb;font-size:11.6px;">二维线</span><svg style="left:530.7px;top:59.1px;width:30.6px;height:30.6px;opacity:.33;" viewBox="0 0 24 24"><path d="M4 11a8 7 0 0 1 16 0z" fill="none" stroke="#3c5273" stroke-width="1.6"/><path d="M8 11v3M12 11v5M16 11v3" stroke="#3c5273" stroke-width="1.4"/><rect x="11" y="13" width="11" height="9" fill="#c9d6ea" opacity=".9"/><circle cx="17" cy="17" r="2.2" fill="none" stroke="#3d8af2" stroke-width="1.3"/></svg><span class="t c" style="left:546.0px;top:99.3px;color:#a9b0bb;font-size:11.6px;">填充</span><svg style="left:587.1px;top:59.1px;width:30.6px;height:30.6px;opacity:.33;" viewBox="0 0 24 24"><path d="M3 3H17V8H15V5.5H11.5V19H14V21H6V19H8.5V5.5H5V8H3z" fill="#e8eef8" stroke="#3c5273" stroke-width="1.3"/><path d="M14 11H23V15H21.5V13H19.5V20H21V21.5H16V20H17.5V13H15.5V15H14z" fill="#3d8af2"/></svg><span class="t c" style="left:602.4px;top:99.3px;color:#a9b0bb;font-size:11.6px;">文字</span><svg style="left:671.7px;top:59.1px;width:30.6px;height:30.6px;" viewBox="0 0 24 24"><path d="M5 19L19 5" stroke="#3c5273" stroke-width="1.6"/><path d="M2 16l6 6M16 2l6 6" stroke="#3c5273" stroke-width="1.6"/><circle cx="20" cy="20" r="1.3" fill="#3c5273"/></svg><span class="t c" style="left:687.0px;top:99.3px;color:#1f2329;font-size:11.6px;">尺寸标注</span><svg style="left:740.7px;top:59.1px;width:30.6px;height:30.6px;opacity:.33;" viewBox="0 0 24 24"><path d="M5 2V12M10 2V14M15 2V12" stroke="#3c5273" stroke-width="1.5"/><path d="M3 7H8M8 9H12M13 7H18" stroke="#3c5273" stroke-width="1.2"/><path d="M21 5L13 19" stroke="#3c5273" stroke-width="1.5"/><circle cx="12" cy="20" r="2.4" fill="#3d8af2"/><path d="M17 16h5" stroke="#3d8af2" stroke-width="1.5"/></svg><span class="t c" style="left:756.0px;top:99.3px;color:#a9b0bb;font-size:11.6px;">管线定位</span><svg style="left:809.7px;top:59.1px;width:30.6px;height:30.6px;opacity:.33;" viewBox="0 0 24 24"><path d="M2 8H22M2 16H22" stroke="#3d8af2" stroke-width="1.7"/><path d="M8 2V22M16 2V22" stroke="#3c5273" stroke-width="1.6"/><path d="M10 12h9" stroke="#3d8af2" stroke-width="2"/><path d="M17 8.5l5 3.5-5 3.5z" fill="#3d8af2"/><circle cx="8" cy="8" r="1.6" fill="#3d8af2"/><circle cx="16" cy="16" r="1.6" fill="#3d8af2"/></svg><span class="t c" style="left:825.0px;top:99.3px;color:#a9b0bb;font-size:11.6px;">墙间标注</span><svg style="left:899.7px;top:59.1px;width:30.6px;height:30.6px;opacity:.33;" viewBox="0 0 24 24"><path d="M5 1V23" stroke="#3c5273" stroke-width="3"/><path d="M5 6H14" stroke="#3c5273" stroke-width="1.4"/><path d="M14 4h8M14 7h8" stroke="#3c5273" stroke-width="1.2"/><path d="M12 13a5 5 0 0 1 10 0v6h-10z" fill="#3d8af2"/><path d="M15 15v3M19 15v3" stroke="#fff" stroke-width="1.2"/></svg><span class="t c" style="left:915.0px;top:99.3px;color:#a9b0bb;font-size:11.6px;">标注管道</span><svg style="left:968.7px;top:59.1px;width:30.6px;height:30.6px;opacity:.33;" viewBox="0 0 24 24"><path d="M3 22L9 7Q10 5 12 5H14" stroke="#3c5273" stroke-width="1.5" fill="none"/><path d="M14 4h8M14 7h8" stroke="#3c5273" stroke-width="1.2"/><rect x="14" y="9" width="8" height="2" fill="#3c5273"/></svg><span class="t c" style="left:984.0px;top:99.3px;color:#a9b0bb;font-size:11.6px;">引出标注</span><svg style="left:1037.7px;top:59.1px;width:30.6px;height:30.6px;opacity:.33;" viewBox="0 0 24 24"><path d="M5 1V23" stroke="#3c5273" stroke-width="3"/><path d="M5 8H13" stroke="#3c5273" stroke-width="1.4"/><rect x="13" y="6" width="9" height="3" fill="#3c5273"/></svg><span class="t c" style="left:1053.0px;top:99.3px;color:#a9b0bb;font-size:11.6px;">单个标注</span><svg style="left:1106.7px;top:59.1px;width:30.6px;height:30.6px;opacity:.33;" viewBox="0 0 24 24"><path d="M3 21H16" stroke="#3c5273" stroke-width="2.4"/><path d="M9 21V4" stroke="#3c5273" stroke-width="1.4"/><path d="M9 5h13M9 9h13M9 13h13" stroke="#3c5273" stroke-width="1.5"/><rect x="11" y="15" width="11" height="3" fill="#9fb4d6"/></svg><span class="t c" style="left:1122.0px;top:99.3px;color:#a9b0bb;font-size:11.6px;">平行标注</span><svg style="left:1174.2px;top:59.1px;width:30.6px;height:30.6px;opacity:.33;" viewBox="0 0 24 24"><rect x="3" y="4" width="17" height="5" rx="2.5" fill="#dfe8f5" stroke="#3c5273" stroke-width="1.4"/><rect x="3" y="15" width="17" height="5" rx="2.5" fill="#dfe8f5" stroke="#3c5273" stroke-width="1.4"/><path d="M20 3l3 2-3 2M20 17l3 2-3 2" stroke="#3c5273" stroke-width="1.2" fill="none"/></svg><span class="t c" style="left:1189.5px;top:99.3px;color:#a9b0bb;font-size:11.6px;">断面符号</span><svg style="left:1242.6px;top:59.1px;width:30.6px;height:30.6px;" viewBox="0 0 24 24"><path d="M2 12H8M16 12H22" stroke="#3c5273" stroke-width="1.8"/><path d="M9 12h6" stroke="#3d8af2" stroke-width="2.4"/></svg><span class="t c" style="left:1257.9px;top:99.3px;color:#1f2329;font-size:11.6px;">管线文字</span><svg style="left:1310.7px;top:59.1px;width:30.6px;height:30.6px;opacity:.33;" viewBox="0 0 24 24"><path d="M5 1V23" stroke="#3c5273" stroke-width="3"/><path d="M5 7H13" stroke="#3c5273" stroke-width="1.4"/><path d="M13 5h9M13 8h9" stroke="#3c5273" stroke-width="1.2"/><path d="M13 12l8 9M21 12l-8 9" stroke="#3d8af2" stroke-width="2"/><circle cx="21" cy="21" r="1.8" fill="#3d8af2"/></svg><span class="t c" style="left:1326.0px;top:99.3px;color:#a9b0bb;font-size:11.6px;">自动标注</span><svg style="left:1379.7px;top:59.1px;width:30.6px;height:30.6px;" viewBox="0 0 24 24"><rect x="3" y="2" width="18" height="20" fill="#eef1f6" stroke="#b5bdc9" stroke-width="1.4"/><path d="M3 8H21M3 15H21M9 2V22M15 2V22" stroke="#b5bdc9" stroke-width="1.1" stroke-dasharray="2 1.5"/></svg><span class="t c" style="left:1395.0px;top:99.3px;color:#a9b0bb;font-size:11.6px;">显示设置</span><svg style="left:1447.2px;top:59.1px;width:30.6px;height:30.6px;opacity:.33;" viewBox="0 0 24 24"><rect x="2" y="3" width="20" height="5" rx="2.5" fill="#dfe8f5" stroke="#3c5273" stroke-width="1.5"/><path d="M12 8V19" stroke="#3d8af2" stroke-width="1.6"/><path d="M9.5 17l2.5 4 2.5-4z" fill="#3d8af2"/></svg><span class="t c" style="left:1462.5px;top:99.3px;color:#a9b0bb;font-size:11.6px;">梁底净高</span><svg style="left:1514.7px;top:59.1px;width:30.6px;height:30.6px;opacity:.33;" viewBox="0 0 24 24"><rect x="4" y="5" width="5" height="17" fill="#dfe8f5" stroke="#3c5273" stroke-width="1.5"/><path d="M4 3h5" stroke="#3c5273" stroke-width="1.6"/><path d="M11 6l5-3M16 3h5" stroke="#3c5273" stroke-width="1.2" fill="none"/><path d="M14 12h4v4M14 16l4 0M13 21h7" stroke="#3d8af2" stroke-width="1.5" fill="none"/></svg><span class="t c" style="left:1530.0px;top:99.3px;color:#a9b0bb;font-size:11.6px;">立管排序</span><div style="left:640.8px;top:58.5px;width:1.5px;height:51.0px;background:#d5d9e0;"></div><div style="left:869.1px;top:58.5px;width:1.5px;height:51.0px;background:#d5d9e0;"></div><div style="left:6.0px;top:37.8px;width:31.2px;height:1009.2px;background:#f1f3f7;"></div><div style="left:36.6px;top:37.8px;width:1.0px;height:1009.2px;background:#dfe3ea;"></div><div style="left:6.0px;top:75.0px;width:31.2px;height:1.2px;background:#dde1e8;"></div><svg style="left:12.9px;top:49.8px;width:18.6px;height:17.4px;" viewBox="0 0 24 24"><path d="M3 3l8 9-8 9M12 3l8 9-8 9" stroke="#15181d" stroke-width="3.6" fill="none"/></svg><svg style="left:10.8px;top:92.4px;width:22.2px;height:22.2px;" viewBox="0 0 24 24"><circle cx="12" cy="12" r="11" fill="#7db8fb"/><path d="M6 14v-3a6 6 0 0 1 12 0v3" stroke="#fff" stroke-width="2.4" fill="none"/><rect x="4.5" y="12" width="4" height="6" rx="1.5" fill="#fff"/><rect x="15.5" y="12" width="4" height="6" rx="1.5" fill="#fff"/></svg><svg style="left:11.7px;top:145.5px;width:20.4px;height:20.4px;" viewBox="0 0 24 24"><path d="M12 2L22 7V17L12 22L2 17V7z" fill="#fff" stroke="#1d3461" stroke-width="2.2"/><path d="M12 12L22 7V17L12 22z" fill="#1d3461"/><path d="M2 7l10 5" stroke="#1d3461" stroke-width="2"/></svg><div style="left:6.0px;top:174.9px;width:31.2px;height:36.0px;background:#dce6f6;"></div><svg style="left:11.7px;top:182.7px;width:20.4px;height:20.4px;" viewBox="0 0 24 24"><circle cx="12" cy="12" r="11" fill="#4a90f0"/><ellipse cx="12" cy="12" rx="10" ry="4" fill="none" stroke="#cfe2fb" stroke-width="1.8" transform="rotate(-35 12 12)"/></svg><svg style="left:12.3px;top:218.4px;width:19.2px;height:19.2px;" viewBox="0 0 24 24"><path d="M1 3H10L12 7H23V22H1z" fill="#1d3461"/><rect x="10" y="11" width="8" height="8" fill="#fff"/><path d="M12 13h4v4h-4z" fill="#1d3461"/></svg><svg style="left:12.3px;top:254.7px;width:19.2px;height:18.6px;" viewBox="0 0 24 24"><rect x="1" y="2" width="22" height="5.4" fill="#1d3461"/><rect x="1" y="9.3" width="22" height="5.4" fill="#1d3461"/><rect x="1" y="16.6" width="22" height="5.4" fill="#1d3461"/></svg><svg style="left:12.6px;top:292.2px;width:18.6px;height:18.6px;" viewBox="0 0 24 24"><circle cx="12" cy="12" r="11.5" fill="#1d3461"/><path d="M8.5 9.5a3.5 3.5 0 1 1 5 3q-1.5 .8-1.5 2.5" stroke="#fff" stroke-width="2.6" fill="none"/><circle cx="12" cy="18.6" r="1.6" fill="#fff"/></svg><svg style="left:12.6px;top:976.5px;width:18.6px;height:19.8px;" viewBox="0 0 24 24"><path d="M12 2a7 7 0 0 1 7 7v6l3 4H2l3-4V9a7 7 0 0 1 7-7z" fill="#1d3461"/><circle cx="12" cy="21.5" r="2" fill="#1d3461"/></svg><div style="left:17.4px;top:969.6px;width:24.6px;height:12.6px;background:#f5343f;border-radius:6px;z-index:5;"></div><span class="t c" style="left:30.9px;top:975.9px;color:#fff;font-size:9px;z-index:6;">18</span><svg style="left:11.4px;top:1011.6px;width:21.0px;height:18.0px;" viewBox="0 0 24 21"><path d="M6 20a5 5 0 0 1-.5-10A7 7 0 0 1 19 9.5 5.3 5.3 0 0 1 18.5 20z" fill="#1d3461"/><path d="M12 17V11M9 13.5l3-3 3 3" stroke="#fff" stroke-width="2" fill="none"/></svg><div style="left:37.5px;top:112.5px;width:195.6px;height:40.8px;background:#e9ecf2;"></div><div style="left:81.6px;top:114.6px;width:1.4px;height:37.8px;background:#f7f8fa;"></div><div style="left:124.2px;top:114.6px;width:1.4px;height:37.8px;background:#f7f8fa;"></div><div style="left:166.8px;top:114.6px;width:1.4px;height:37.8px;background:#f7f8fa;"></div><div style="left:37.5px;top:112.5px;width:195.6px;height:1.2px;background:#f7f8fa;"></div><svg style="left:52.2px;top:127.8px;width:16.2px;height:16.8px;" viewBox="0 0 24 24"><rect x="1" y="1" width="22" height="22" rx="4" fill="#4a90f0"/><rect x="5" y="5" width="6" height="14" fill="#fff"/><rect x="12.5" y="5" width="6.5" height="14" fill="#bcd6fa"/></svg><svg style="left:93.6px;top:127.8px;width:18.0px;height:16.8px;" viewBox="0 0 24 24"><path d="M2 3H22L14 12V19L10 22V12z" fill="none" stroke="#1d3461" stroke-width="2.6"/><path d="M8 7h8" stroke="#1d3461" stroke-width="2.4"/></svg><svg style="left:135.6px;top:126.6px;width:19.2px;height:19.2px;" viewBox="0 0 24 24"><circle cx="12" cy="12" r="10" fill="none" stroke="#1d3461" stroke-width="2.2"/><path d="M7 10l5 4 5-4" stroke="#1d3461" stroke-width="2" fill="none"/></svg><div style="left:39.0px;top:153.6px;width:192.6px;height:848.4px;background:#fdfdfe;"></div><div style="left:228.6px;top:156.0px;width:2.7px;height:582.0px;background:#e3e6ec;border-radius:2px;"></div><svg style="left:45.3px;top:165.3px;width:7.8px;height:6.0px;" viewBox="0 0 10 7"><path d="M1 1.5L5 5.5L9 1.5" stroke="#5b6573" stroke-width="1.8" fill="none"/></svg><svg style="left:59.4px;top:160.2px;width:15.6px;height:16.2px;" viewBox="0 0 24 24"><rect x="2" y="2" width="20" height="20" rx="2" fill="#fff" stroke="#8e98a6" stroke-width="1.6"/><path d="M2 8H14V2" stroke="#8e98a6" stroke-width="1.4" fill="none"/><path d="M14 8l8-6" stroke="#8e98a6" stroke-width="1.2"/></svg><span class="t" style="left:82.5px;top:168.6px;">平面视图</span><div style="left:64.2px;top:192.7px;width:6.6px;height:0.9px;background:#c6ccd6;"></div><span class="t" style="left:75.3px;top:192.7px;">建筑-1F</span><div style="left:64.2px;top:216.8px;width:6.6px;height:0.9px;background:#c6ccd6;"></div><span class="t" style="left:75.3px;top:216.8px;">建筑室外地坪</span><div style="left:64.2px;top:240.9px;width:6.6px;height:0.9px;background:#c6ccd6;"></div><span class="t" style="left:75.3px;top:240.9px;">建筑1F</span><div style="left:64.2px;top:265.0px;width:6.6px;height:0.9px;background:#c6ccd6;"></div><span class="t" style="left:75.3px;top:265.0px;">建筑2F</span><div style="left:64.2px;top:289.0px;width:6.6px;height:0.9px;background:#c6ccd6;"></div><span class="t" style="left:75.3px;top:289.0px;">建筑3F</span><div style="left:64.2px;top:313.1px;width:6.6px;height:0.9px;background:#c6ccd6;"></div><span class="t" style="left:75.3px;top:313.1px;">建筑4F</span><div style="left:64.2px;top:337.2px;width:6.6px;height:0.9px;background:#c6ccd6;"></div><span class="t" style="left:75.3px;top:337.2px;">建筑4F(天花)</span><div style="left:64.2px;top:361.3px;width:6.6px;height:0.9px;background:#c6ccd6;"></div><span class="t" style="left:75.3px;top:361.3px;">建筑5F</span><div style="left:64.2px;top:385.4px;width:6.6px;height:0.9px;background:#c6ccd6;"></div><span class="t" style="left:75.3px;top:385.4px;">建筑6F</span><div style="left:64.2px;top:409.5px;width:6.6px;height:0.9px;background:#c6ccd6;"></div><span class="t" style="left:75.3px;top:409.5px;">建筑7F</span><div style="left:64.2px;top:433.6px;width:6.6px;height:0.9px;background:#c6ccd6;"></div><span class="t" style="left:75.3px;top:433.6px;">建筑8F</span><div style="left:64.2px;top:457.7px;width:6.6px;height:0.9px;background:#c6ccd6;"></div><span class="t" style="left:75.3px;top:457.7px;">建筑9F</span><div style="left:64.2px;top:481.8px;width:6.6px;height:0.9px;background:#c6ccd6;"></div><span class="t" style="left:75.3px;top:481.8px;">建筑10F</span><div style="left:64.2px;top:505.9px;width:6.6px;height:0.9px;background:#c6ccd6;"></div><span class="t" style="left:75.3px;top:505.9px;">建筑11F</span><div style="left:64.2px;top:529.9px;width:6.6px;height:0.9px;background:#c6ccd6;"></div><span class="t" style="left:75.3px;top:529.9px;">建筑12F</span><div style="left:64.2px;top:554.0px;width:6.6px;height:0.9px;background:#c6ccd6;"></div><span class="t" style="left:75.3px;top:554.0px;">建筑13F</span><div style="left:64.2px;top:578.1px;width:6.6px;height:0.9px;background:#c6ccd6;"></div><span class="t" style="left:75.3px;top:578.1px;">建筑14F</span><div style="left:64.2px;top:602.2px;width:6.6px;height:0.9px;background:#c6ccd6;"></div><span class="t" style="left:75.3px;top:602.2px;">建筑15F</span><div style="left:64.2px;top:626.3px;width:6.6px;height:0.9px;background:#c6ccd6;"></div><span class="t" style="left:75.3px;top:626.3px;">建筑16F</span><div style="left:64.2px;top:650.4px;width:6.6px;height:0.9px;background:#c6ccd6;"></div><span class="t" style="left:75.3px;top:650.4px;">建筑17F</span><div style="left:64.2px;top:674.5px;width:6.6px;height:0.9px;background:#c6ccd6;"></div><span class="t" style="left:75.3px;top:674.5px;">建筑18F</span><div style="left:64.2px;top:698.6px;width:6.6px;height:0.9px;background:#c6ccd6;"></div><span class="t" style="left:75.3px;top:698.6px;">建筑19F</span><div style="left:64.2px;top:722.7px;width:6.6px;height:0.9px;background:#c6ccd6;"></div><span class="t" style="left:75.3px;top:722.7px;">建筑20F</span><div style="left:64.2px;top:746.8px;width:6.6px;height:0.9px;background:#c6ccd6;"></div><span class="t" style="left:75.3px;top:746.8px;">建筑21F</span><div style="left:64.2px;top:770.8px;width:6.6px;height:0.9px;background:#c6ccd6;"></div><span class="t" style="left:75.3px;top:770.8px;">建筑RF</span><div style="left:64.2px;top:794.9px;width:6.6px;height:0.9px;background:#c6ccd6;"></div><span class="t" style="left:75.3px;top:794.9px;">建筑RF(架构层)</span><svg style="left:45.3px;top:815.7px;width:7.8px;height:6.0px;" viewBox="0 0 10 7"><path d="M1 1.5L5 5.5L9 1.5" stroke="#5b6573" stroke-width="1.8" fill="none"/></svg><svg style="left:59.4px;top:810.6px;width:15.6px;height:16.2px;" viewBox="0 0 24 24"><rect x="2" y="2" width="20" height="20" rx="2" fill="#fff" stroke="#8e98a6" stroke-width="1.6"/><path d="M2 8H14V2" stroke="#8e98a6" stroke-width="1.4" fill="none"/><path d="M14 8l8-6" stroke="#8e98a6" stroke-width="1.2"/></svg><span class="t" style="left:82.5px;top:819.0px;">三维视图</span><div style="left:64.2px;top:843.1px;width:6.6px;height:0.9px;background:#c6ccd6;"></div><span class="t" style="left:75.3px;top:843.1px;">三维</span><div style="left:39.6px;top:855.5px;width:189.0px;height:23.4px;background:#dbe7f8;"></div><div style="left:64.2px;top:867.2px;width:6.6px;height:0.9px;background:#c6ccd6;"></div><span class="t" style="left:75.3px;top:867.2px;">三维(雨水)</span><svg style="left:45.3px;top:888.0px;width:7.8px;height:6.0px;" viewBox="0 0 10 7"><path d="M1 1.5L5 5.5L9 1.5" stroke="#5b6573" stroke-width="1.8" fill="none"/></svg><svg style="left:59.4px;top:882.9px;width:15.6px;height:16.2px;" viewBox="0 0 24 24"><rect x="2" y="2" width="20" height="20" rx="2" fill="#fff" stroke="#8e98a6" stroke-width="1.6"/><path d="M2 8H14V2" stroke="#8e98a6" stroke-width="1.4" fill="none"/><path d="M14 8l8-6" stroke="#8e98a6" stroke-width="1.2"/></svg><span class="t" style="left:82.5px;top:891.3px;">立面视图</span><div style="left:64.2px;top:915.4px;width:6.6px;height:0.9px;background:#c6ccd6;"></div><span class="t" style="left:75.3px;top:915.4px;">东</span><div style="left:64.2px;top:939.5px;width:6.6px;height:0.9px;background:#c6ccd6;"></div><span class="t" style="left:75.3px;top:939.5px;">南</span><div style="left:64.2px;top:963.6px;width:6.6px;height:0.9px;background:#c6ccd6;"></div><span class="t" style="left:75.3px;top:963.6px;">西</span><div style="left:64.2px;top:987.7px;width:6.6px;height:0.9px;background:#c6ccd6;"></div><span class="t" style="left:75.3px;top:987.7px;">北</span><div style="left:63.9px;top:179.1px;width:0.9px;height:615.8px;background:#c6ccd6;"></div><div style="left:63.9px;top:829.5px;width:0.9px;height:37.7px;background:#c6ccd6;"></div><div style="left:63.9px;top:901.8px;width:0.9px;height:85.9px;background:#c6ccd6;"></div><div style="left:49.2px;top:179.1px;width:0.9px;height:819.1px;background:#c6ccd6;"></div><div style="left:233.1px;top:112.5px;width:1698.9px;height:32.4px;background:#dfe3ea;"></div><div style="left:233.1px;top:112.5px;width:6.9px;height:912.0px;background:#e6e9ef;"></div><div style="left:240.0px;top:112.5px;width:816.0px;height:32.7px;background:#e8ebf1;"></div><div style="left:240.0px;top:144.9px;width:1398.0px;height:2.4px;background:#f3f5f8;z-index:3;"></div><svg style="left:247.8px;top:120.9px;width:12.6px;height:15.0px;" viewBox="0 0 20 24"><rect x="2" y="2" width="6" height="8" fill="#9aa7bd"/><rect x="12" y="2" width="6" height="8" fill="#9aa7bd"/><rect x="2" y="14" width="6" height="8" fill="#9aa7bd"/><rect x="12" y="14" width="6" height="8" fill="#9aa7bd"/></svg><svg style="left:277.2px;top:122.4px;width:15.0px;height:12.6px;" viewBox="0 0 24 24"><path d="M3 3H21V17H12L9 21V17H3z" fill="none" stroke="#9aa7bd" stroke-width="2.4"/></svg><span class="t c" style="left:347.0px;top:129.6px;color:#9aa3b0;">建筑R1F</span><div style="left:421.5px;top:115.2px;width:1.4px;height:28.2px;background:#f4f6f9;"></div><span class="t c" style="left:461.0px;top:129.6px;color:#9aa3b0;">三维</span><div style="left:528.0px;top:114.6px;width:135.0px;height:30.6px;background:#fbfbfc;"></div><span class="t c" style="left:582.6px;top:129.6px;color:#1f2329;">三维(雨水)</span><svg style="left:645.9px;top:124.2px;width:10.8px;height:10.8px;" viewBox="0 0 24 24"><path d="M2 2L22 22M22 2L2 22" stroke="#2a2f36" stroke-width="3"/></svg><span class="t c" style="left:709.2px;top:129.6px;color:#9aa3b0;">建筑1F</span><div style="left:783.0px;top:115.2px;width:1.4px;height:28.2px;background:#f4f6f9;"></div><span class="t c" style="left:847.6px;top:129.6px;color:#9aa3b0;">建筑4F(天花)</span><div style="left:939.9px;top:115.2px;width:1.4px;height:28.2px;background:#f4f6f9;"></div><span class="t c" style="left:984.1px;top:129.6px;color:#9aa3b0;">建筑5F</span><div style="left:1056.0px;top:115.2px;width:1.4px;height:28.2px;background:#f4f6f9;"></div><div style="left:299.1px;top:115.2px;width:1.4px;height:28.2px;background:#f4f6f9;"></div><div style="left:240.0px;top:145.2px;width:1398.6px;height:879.6px;background:#fbfbfb;overflow:hidden;"><svg style="left:0;top:0;width:1397.4px;height:879.6px;" viewBox="80 48.4 465.8 293.2"><g transform="translate(0 -427.05)"><path d="M247.4 476L247.4 770" stroke="#a6a6f0" stroke-width="0.4" /><path d="M368.6 476L368.6 682" stroke="#a6a6f0" stroke-width="0.4" /><path d="M80 716L368.6 682.4L545.5 735.3" stroke="#a6a6f0" stroke-width="0.4" fill="none" /><path d="M80 760L108 768.5" stroke="#a6a6f0" stroke-width="0.4" fill="none" /><path d="M203 513.9L209 513.2L400.8 496.3L409.4 499.5L432 497.3L440.5 497.3" stroke="#48e030" stroke-width="0.8" fill="none" /><path d="M203 513L209 512.3L400.8 495.4L409.4 498.6L432 496.4L440.5 496.4" stroke="#3232dc" stroke-width="0.8" fill="none" /><path d="M200.3 518L228 514.3L272 508.3" stroke="#3232dc" stroke-width="0.8" fill="none" /><path d="M209 638.9L400.8 616.3L422.3 622.8L440.5 621.3" stroke="#48e030" stroke-width="0.75" fill="none" /><path d="M197.6 634L199 637.2L203 638.2L209 638L400.8 615.4L422.3 621.9L440.5 620.4" stroke="#3232dc" stroke-width="0.85" fill="none" /><path d="M231.5 748.6L238.6 748L397 730.6L417.5 736.4L440.8 733" stroke="#3232dc" stroke-width="0.85" fill="none" /><path d="M238.6 746.2L397 728.8" stroke="#3232dc" stroke-width="0.65" fill="none" /><path d="M222.7 513.44L222.7 635.19" stroke="#48e030" stroke-width="0.95" stroke-dasharray="9.800 3.200"/><path d="M225.7 512.44L225.7 636.19" stroke="#3232dc" stroke-width="0.9" /><path d="M224.2 521.74L224.2 636.19" stroke="#3232dc" stroke-width="3.0" stroke-dasharray="1 12"/><path d="M222.7 522.24L222.7 636.19" stroke="#3232dc" stroke-width="0.8" stroke-dasharray="3.200 9.800"/><path d="M222.7 638.19L222.7 748.56" stroke="#48e030" stroke-width="0.95" stroke-dasharray="9.800 3.200"/><path d="M225.7 637.19L225.7 749.56" stroke="#3232dc" stroke-width="0.9" /><path d="M224.2 646.49L224.2 749.56" stroke="#3232dc" stroke-width="3.0" stroke-dasharray="1 12"/><path d="M222.7 646.99L222.7 749.56" stroke="#3232dc" stroke-width="0.8" stroke-dasharray="3.200 9.800"/><path d="M229.8 512.82L229.8 634.35" stroke="#48e030" stroke-width="0.95" stroke-dasharray="9.800 3.200"/><path d="M232.8 511.82L232.8 635.35" stroke="#3232dc" stroke-width="0.9" /><path d="M231.3 521.12L231.3 635.35" stroke="#3232dc" stroke-width="3.0" stroke-dasharray="1 12"/><path d="M229.8 521.62L229.8 635.35" stroke="#3232dc" stroke-width="0.8" stroke-dasharray="3.200 9.800"/><path d="M229.8 637.35L229.8 747.78" stroke="#48e030" stroke-width="0.95" stroke-dasharray="9.800 3.200"/><path d="M232.8 636.35L232.8 748.78" stroke="#3232dc" stroke-width="0.9" /><path d="M231.3 645.65L231.3 748.78" stroke="#3232dc" stroke-width="3.0" stroke-dasharray="1 12"/><path d="M229.8 646.15L229.8 748.78" stroke="#3232dc" stroke-width="0.8" stroke-dasharray="3.200 9.800"/><circle cx="222.9" cy="635.99" r="0.7" fill="#3232dc" stroke="none" stroke-width="0.4"/><circle cx="228.5" cy="635.65" r="0.6" fill="#3232dc" stroke="none" stroke-width="0.4"/><path d="M224.4 749.56L231.5 748.58" stroke="#3232dc" stroke-width="0.55" fill="none" /><path d="M253.3 510.75L253.3 631.58" stroke="#48e030" stroke-width="0.95" stroke-dasharray="9.800 3.200"/><path d="M256.3 509.75L256.3 632.58" stroke="#3232dc" stroke-width="0.9" /><path d="M254.8 519.05L254.8 632.58" stroke="#3232dc" stroke-width="3.0" stroke-dasharray="1 12"/><path d="M253.3 519.55L253.3 632.58" stroke="#3232dc" stroke-width="0.8" stroke-dasharray="3.200 9.800"/><path d="M253.3 634.58L253.3 745.2" stroke="#48e030" stroke-width="0.95" stroke-dasharray="9.800 3.200"/><path d="M256.3 633.58L256.3 746.2" stroke="#3232dc" stroke-width="0.9" /><path d="M254.8 642.88L254.8 746.2" stroke="#3232dc" stroke-width="3.0" stroke-dasharray="1 12"/><path d="M253.3 643.38L253.3 746.2" stroke="#3232dc" stroke-width="0.8" stroke-dasharray="3.200 9.800"/><path d="M260.8 510.09L260.8 630.7" stroke="#48e030" stroke-width="0.95" stroke-dasharray="9.800 3.200"/><path d="M263.8 509.09L263.8 631.7" stroke="#3232dc" stroke-width="0.9" /><path d="M262.3 518.39L262.3 631.7" stroke="#3232dc" stroke-width="3.0" stroke-dasharray="1 12"/><path d="M260.8 518.89L260.8 631.7" stroke="#3232dc" stroke-width="0.8" stroke-dasharray="3.200 9.800"/><path d="M260.8 633.7L260.8 744.38" stroke="#48e030" stroke-width="0.95" stroke-dasharray="9.800 3.200"/><path d="M263.8 632.7L263.8 745.38" stroke="#3232dc" stroke-width="0.9" /><path d="M262.3 642L262.3 745.38" stroke="#3232dc" stroke-width="3.0" stroke-dasharray="1 12"/><path d="M260.8 642.5L260.8 745.38" stroke="#3232dc" stroke-width="0.8" stroke-dasharray="3.200 9.800"/><circle cx="253.5" cy="632.38" r="0.7" fill="#3232dc" stroke="none" stroke-width="0.4"/><circle cx="259.5" cy="632" r="0.6" fill="#3232dc" stroke="none" stroke-width="0.4"/><path d="M255 746.2L262.5 745.18" stroke="#3232dc" stroke-width="0.55" fill="none" /><path d="M284.4 508.01L284.4 627.92" stroke="#48e030" stroke-width="0.95" stroke-dasharray="9.800 3.200"/><path d="M287.4 507.01L287.4 628.92" stroke="#3232dc" stroke-width="0.9" /><path d="M285.9 516.31L285.9 628.92" stroke="#3232dc" stroke-width="3.0" stroke-dasharray="1 12"/><path d="M284.4 516.81L284.4 628.92" stroke="#3232dc" stroke-width="0.8" stroke-dasharray="3.200 9.800"/><path d="M284.4 630.92L284.4 741.78" stroke="#48e030" stroke-width="0.95" stroke-dasharray="9.800 3.200"/><path d="M287.4 629.92L287.4 742.78" stroke="#3232dc" stroke-width="0.9" /><path d="M285.9 639.22L285.9 742.78" stroke="#3232dc" stroke-width="3.0" stroke-dasharray="1 12"/><path d="M284.4 639.72L284.4 742.78" stroke="#3232dc" stroke-width="0.8" stroke-dasharray="3.200 9.800"/><path d="M291.5 507.38L291.5 627.08" stroke="#48e030" stroke-width="0.95" stroke-dasharray="9.800 3.200"/><path d="M294.5 506.38L294.5 628.08" stroke="#3232dc" stroke-width="0.9" /><path d="M293 515.68L293 628.08" stroke="#3232dc" stroke-width="3.0" stroke-dasharray="1 12"/><path d="M291.5 516.18L291.5 628.08" stroke="#3232dc" stroke-width="0.8" stroke-dasharray="3.200 9.800"/><path d="M291.5 630.08L291.5 741" stroke="#48e030" stroke-width="0.95" stroke-dasharray="9.800 3.200"/><path d="M294.5 629.08L294.5 742" stroke="#3232dc" stroke-width="0.9" /><path d="M293 638.38L293 742" stroke="#3232dc" stroke-width="3.0" stroke-dasharray="1 12"/><path d="M291.5 638.88L291.5 742" stroke="#3232dc" stroke-width="0.8" stroke-dasharray="3.200 9.800"/><circle cx="284.6" cy="628.72" r="0.7" fill="#3232dc" stroke="none" stroke-width="0.4"/><circle cx="290.2" cy="628.38" r="0.6" fill="#3232dc" stroke="none" stroke-width="0.4"/><path d="M286.1 742.78L293.2 741.8" stroke="#3232dc" stroke-width="0.55" fill="none" /><path d="M315.1 505.3L315.1 624.3" stroke="#48e030" stroke-width="0.95" stroke-dasharray="9.800 3.200"/><path d="M318.1 504.3L318.1 625.3" stroke="#3232dc" stroke-width="0.9" /><path d="M316.6 513.6L316.6 625.3" stroke="#3232dc" stroke-width="3.0" stroke-dasharray="1 12"/><path d="M315.1 514.1L315.1 625.3" stroke="#3232dc" stroke-width="0.8" stroke-dasharray="3.200 9.800"/><path d="M315.1 627.3L315.1 738.41" stroke="#48e030" stroke-width="0.95" stroke-dasharray="9.800 3.200"/><path d="M318.1 626.3L318.1 739.41" stroke="#3232dc" stroke-width="0.9" /><path d="M316.6 635.6L316.6 739.41" stroke="#3232dc" stroke-width="3.0" stroke-dasharray="1 12"/><path d="M315.1 636.1L315.1 739.41" stroke="#3232dc" stroke-width="0.8" stroke-dasharray="3.200 9.800"/><path d="M322.4 504.66L322.4 623.44" stroke="#48e030" stroke-width="0.95" stroke-dasharray="9.800 3.200"/><path d="M325.4 503.66L325.4 624.44" stroke="#3232dc" stroke-width="0.9" /><path d="M323.9 512.96L323.9 624.44" stroke="#3232dc" stroke-width="3.0" stroke-dasharray="1 12"/><path d="M322.4 513.46L322.4 624.44" stroke="#3232dc" stroke-width="0.8" stroke-dasharray="3.200 9.800"/><path d="M322.4 626.44L322.4 737.61" stroke="#48e030" stroke-width="0.95" stroke-dasharray="9.800 3.200"/><path d="M325.4 625.44L325.4 738.61" stroke="#3232dc" stroke-width="0.9" /><path d="M323.9 634.74L323.9 738.61" stroke="#3232dc" stroke-width="3.0" stroke-dasharray="1 12"/><path d="M322.4 635.24L322.4 738.61" stroke="#3232dc" stroke-width="0.8" stroke-dasharray="3.200 9.800"/><circle cx="315.3" cy="625.1" r="0.7" fill="#3232dc" stroke="none" stroke-width="0.4"/><circle cx="321.1" cy="624.74" r="0.6" fill="#3232dc" stroke="none" stroke-width="0.4"/><path d="M316.8 739.41L324.1 738.41" stroke="#3232dc" stroke-width="0.55" fill="none" /><path d="M346 502.58L346 620.66" stroke="#48e030" stroke-width="0.95" stroke-dasharray="9.800 3.200"/><path d="M349 501.58L349 621.66" stroke="#3232dc" stroke-width="0.9" /><path d="M347.5 510.88L347.5 621.66" stroke="#3232dc" stroke-width="3.0" stroke-dasharray="1 12"/><path d="M346 511.38L346 621.66" stroke="#3232dc" stroke-width="0.8" stroke-dasharray="3.200 9.800"/><path d="M346 623.66L346 735.02" stroke="#48e030" stroke-width="0.95" stroke-dasharray="9.800 3.200"/><path d="M349 622.66L349 736.02" stroke="#3232dc" stroke-width="0.9" /><path d="M347.5 631.96L347.5 736.02" stroke="#3232dc" stroke-width="3.0" stroke-dasharray="1 12"/><path d="M346 632.46L346 736.02" stroke="#3232dc" stroke-width="0.8" stroke-dasharray="3.200 9.800"/><path d="M353 501.96L353 619.84" stroke="#48e030" stroke-width="0.95" stroke-dasharray="9.800 3.200"/><path d="M356 500.96L356 620.84" stroke="#3232dc" stroke-width="0.9" /><path d="M354.5 510.26L354.5 620.84" stroke="#3232dc" stroke-width="3.0" stroke-dasharray="1 12"/><path d="M353 510.76L353 620.84" stroke="#3232dc" stroke-width="0.8" stroke-dasharray="3.200 9.800"/><path d="M353 622.84L353 734.25" stroke="#48e030" stroke-width="0.95" stroke-dasharray="9.800 3.200"/><path d="M356 621.84L356 735.25" stroke="#3232dc" stroke-width="0.9" /><path d="M354.5 631.14L354.5 735.25" stroke="#3232dc" stroke-width="3.0" stroke-dasharray="1 12"/><path d="M353 631.64L353 735.25" stroke="#3232dc" stroke-width="0.8" stroke-dasharray="3.200 9.800"/><circle cx="346.2" cy="621.46" r="0.7" fill="#3232dc" stroke="none" stroke-width="0.4"/><circle cx="351.7" cy="621.14" r="0.6" fill="#3232dc" stroke="none" stroke-width="0.4"/><path d="M347.7 736.02L354.7 735.05" stroke="#3232dc" stroke-width="0.55" fill="none" /><path d="M376.6 499.88L376.6 617.06" stroke="#48e030" stroke-width="0.95" stroke-dasharray="9.800 3.200"/><path d="M379.6 498.88L379.6 618.06" stroke="#3232dc" stroke-width="0.9" /><path d="M378.1 508.18L378.1 618.06" stroke="#3232dc" stroke-width="3.0" stroke-dasharray="1 12"/><path d="M376.6 508.68L376.6 618.06" stroke="#3232dc" stroke-width="0.8" stroke-dasharray="3.200 9.800"/><path d="M376.6 620.06L376.6 731.66" stroke="#48e030" stroke-width="0.95" stroke-dasharray="9.800 3.200"/><path d="M379.6 619.06L379.6 732.66" stroke="#3232dc" stroke-width="0.9" /><path d="M378.1 628.36L378.1 732.66" stroke="#3232dc" stroke-width="3.0" stroke-dasharray="1 12"/><path d="M376.6 628.86L376.6 732.66" stroke="#3232dc" stroke-width="0.8" stroke-dasharray="3.200 9.800"/><path d="M384.1 499.22L384.1 616.17" stroke="#48e030" stroke-width="0.95" stroke-dasharray="9.800 3.200"/><path d="M387.1 498.22L387.1 617.17" stroke="#3232dc" stroke-width="0.9" /><path d="M385.6 507.52L385.6 617.17" stroke="#3232dc" stroke-width="3.0" stroke-dasharray="1 12"/><path d="M384.1 508.02L384.1 617.17" stroke="#3232dc" stroke-width="0.8" stroke-dasharray="3.200 9.800"/><path d="M384.1 619.17L384.1 730.84" stroke="#48e030" stroke-width="0.95" stroke-dasharray="9.800 3.200"/><path d="M387.1 618.17L387.1 731.84" stroke="#3232dc" stroke-width="0.9" /><path d="M385.6 627.47L385.6 731.84" stroke="#3232dc" stroke-width="3.0" stroke-dasharray="1 12"/><path d="M384.1 627.97L384.1 731.84" stroke="#3232dc" stroke-width="0.8" stroke-dasharray="3.200 9.800"/><circle cx="376.8" cy="617.86" r="0.7" fill="#3232dc" stroke="none" stroke-width="0.4"/><circle cx="382.8" cy="617.47" r="0.6" fill="#3232dc" stroke="none" stroke-width="0.4"/><path d="M378.3 732.66L385.8 731.64" stroke="#3232dc" stroke-width="0.55" fill="none" /><path d="M203 513L199.5 513.8L197.6 516.5L197.6 634" stroke="#3232dc" stroke-width="0.85" fill="none" /><path d="M203.4 517L203.4 637" stroke="#48e030" stroke-width="0.95" fill="none" /><path d="M199 516.5L203 515.5L214 521L216.5 522.6L211.7 523.3" stroke="#3232dc" stroke-width="0.8" fill="none" /><path d="M200 518L210 520.5" stroke="#48e030" stroke-width="0.8" fill="none" /><path d="M211.7 523.3L211.7 640" stroke="#3232dc" stroke-width="0.8" /><path d="M211 524L211 640" stroke="#48e030" stroke-width="0.65" stroke-dasharray="9 4.500"/><path d="M211.7 535L211.7 640" stroke="#3232dc" stroke-width="1.5" stroke-dasharray="0.900 12.600"/><path d="M209 640L211.7 642.5L211.7 646.2L227 643.6" stroke="#3232dc" stroke-width="0.8" fill="none" /><path d="M207 638.5L210.5 644L226 641" stroke="#3232dc" stroke-width="0.65" fill="none" /><path d="M211.7 646.2L211.7 752" stroke="#3232dc" stroke-width="0.8" /><path d="M211 648L211 750" stroke="#48e030" stroke-width="0.65" stroke-dasharray="9 4.500"/><path d="M211.7 655L211.7 750" stroke="#3232dc" stroke-width="1.5" stroke-dasharray="0.900 12.600"/><path d="M198.5 766L198.5 750L231.5 748.6" stroke="#3232dc" stroke-width="0.8" fill="none" /><path d="M200.5 752.5L212 756.5L213 759" stroke="#3232dc" stroke-width="0.8" fill="none" /><path d="M203 739.5L211 739.5L213 744L220 746L231 748.3" stroke="#48e030" stroke-width="0.8" fill="none" /><path d="M201 745L212 745L212 751" stroke="#48e030" stroke-width="0.8" fill="none" /><path d="M204 753L204 765" stroke="#48e030" stroke-width="0.7" fill="none" /><path d="M206 740L206 745" stroke="#48e030" stroke-width="0.65" fill="none" /><path d="M229 750L232 752" stroke="#48e030" stroke-width="0.8" fill="none" /><path d="M440.5 496.4L440.5 617.6" stroke="#3232dc" stroke-width="0.8" /><path d="M440.8 620.4L440.8 733" stroke="#3232dc" stroke-width="0.8" /><path d="M441 505L441 617" stroke="#48e030" stroke-width="1.4" stroke-dasharray="0.800 12.700"/><path d="M441.3 630L441.3 733" stroke="#48e030" stroke-width="1.4" stroke-dasharray="0.800 12.700"/><rect x="275.4" y="499.2" width="9.4" height="8.2" fill="#171b21" stroke="none" stroke-width="0.4" /><rect x="276" y="504.6" width="8.2" height="2.2" fill="#5a3f2e" stroke="none" stroke-width="0.4" /><rect x="276.2" y="500.2" width="7.8" height="3.2" fill="#27313d" stroke="none" stroke-width="0.4" /><rect x="288.3" y="497.84" width="9.4" height="8.2" fill="#171b21" stroke="none" stroke-width="0.4" /><rect x="288.9" y="503.24" width="8.2" height="2.2" fill="#5a3f2e" stroke="none" stroke-width="0.4" /><rect x="289.1" y="498.84" width="7.8" height="3.2" fill="#27313d" stroke="none" stroke-width="0.4" /><rect x="300.7" y="496.48" width="9.4" height="8.2" fill="#171b21" stroke="none" stroke-width="0.4" /><rect x="301.3" y="501.88" width="8.2" height="2.2" fill="#5a3f2e" stroke="none" stroke-width="0.4" /><rect x="301.5" y="497.48" width="7.8" height="3.2" fill="#27313d" stroke="none" stroke-width="0.4" /><rect x="312.9" y="495.12" width="9.4" height="8.2" fill="#171b21" stroke="none" stroke-width="0.4" /><rect x="313.5" y="500.52" width="8.2" height="2.2" fill="#5a3f2e" stroke="none" stroke-width="0.4" /><rect x="313.7" y="496.12" width="7.8" height="3.2" fill="#27313d" stroke="none" stroke-width="0.4" /><rect x="325.4" y="493.76" width="9.4" height="8.2" fill="#171b21" stroke="none" stroke-width="0.4" /><rect x="326" y="499.16" width="8.2" height="2.2" fill="#5a3f2e" stroke="none" stroke-width="0.4" /><rect x="326.2" y="494.76" width="7.8" height="3.2" fill="#27313d" stroke="none" stroke-width="0.4" /><rect x="337.6" y="492.4" width="9.4" height="8.2" fill="#171b21" stroke="none" stroke-width="0.4" /><rect x="338.2" y="497.8" width="8.2" height="2.2" fill="#5a3f2e" stroke="none" stroke-width="0.4" /><rect x="338.4" y="493.4" width="7.8" height="3.2" fill="#27313d" stroke="none" stroke-width="0.4" /><rect x="350" y="491.04" width="9.4" height="8.2" fill="#171b21" stroke="none" stroke-width="0.4" /><rect x="350.6" y="496.44" width="8.2" height="2.2" fill="#5a3f2e" stroke="none" stroke-width="0.4" /><rect x="350.8" y="492.04" width="7.8" height="3.2" fill="#27313d" stroke="none" stroke-width="0.4" /><rect x="361.2" y="489.68" width="9.4" height="8.2" fill="#171b21" stroke="none" stroke-width="0.4" /><rect x="361.8" y="495.08" width="8.2" height="2.2" fill="#5a3f2e" stroke="none" stroke-width="0.4" /><rect x="362" y="490.68" width="7.8" height="3.2" fill="#27313d" stroke="none" stroke-width="0.4" /><rect x="247.2" y="509.5" width="1.6" height="2" fill="#555" stroke="none" stroke-width="0.4" /><rect x="268.8" y="507.6" width="1.6" height="2" fill="#555" stroke="none" stroke-width="0.4" /><polygon points="354.7,496 368,493.500 380.500,496 380.500,506.500 368,506.800 354.7,505.500" fill="#5f656d"/><polygon points="375.500,492 388,490.500 399.8,493 399.8,503.500 388,504.500 375.500,503" fill="#686e76"/><rect x="356.5" y="497.3" width="2.6" height="1.6" fill="#e8ebee" stroke="none" stroke-width="0.4" /><rect x="377.5" y="493.6" width="2.6" height="1.6" fill="#eceff2" stroke="none" stroke-width="0.4" /><rect x="356.5" y="500.3" width="2.6" height="1.6" fill="#e8ebee" stroke="none" stroke-width="0.4" /><rect x="377.5" y="496.6" width="2.6" height="1.6" fill="#eceff2" stroke="none" stroke-width="0.4" /><rect x="356.5" y="503.3" width="2.6" height="1.6" fill="#e8ebee" stroke="none" stroke-width="0.4" /><rect x="377.5" y="499.6" width="2.6" height="1.6" fill="#eceff2" stroke="none" stroke-width="0.4" /><rect x="361.1" y="497.5" width="2.6" height="1.6" fill="#e8ebee" stroke="none" stroke-width="0.4" /><rect x="381.9" y="493.6" width="2.6" height="1.6" fill="#eceff2" stroke="none" stroke-width="0.4" /><rect x="361.1" y="500.5" width="2.6" height="1.6" fill="#e8ebee" stroke="none" stroke-width="0.4" /><rect x="381.9" y="496.6" width="2.6" height="1.6" fill="#eceff2" stroke="none" stroke-width="0.4" /><rect x="361.1" y="503.5" width="2.6" height="1.6" fill="#e8ebee" stroke="none" stroke-width="0.4" /><rect x="381.9" y="499.6" width="2.6" height="1.6" fill="#eceff2" stroke="none" stroke-width="0.4" /><rect x="365.7" y="497.7" width="2.6" height="1.6" fill="#e8ebee" stroke="none" stroke-width="0.4" /><rect x="386.3" y="493.6" width="2.6" height="1.6" fill="#eceff2" stroke="none" stroke-width="0.4" /><rect x="365.7" y="500.7" width="2.6" height="1.6" fill="#e8ebee" stroke="none" stroke-width="0.4" /><rect x="386.3" y="496.6" width="2.6" height="1.6" fill="#eceff2" stroke="none" stroke-width="0.4" /><rect x="365.7" y="503.7" width="2.6" height="1.6" fill="#e8ebee" stroke="none" stroke-width="0.4" /><rect x="386.3" y="499.6" width="2.6" height="1.6" fill="#eceff2" stroke="none" stroke-width="0.4" /><rect x="370.3" y="497.3" width="2.6" height="1.6" fill="#e8ebee" stroke="none" stroke-width="0.4" /><rect x="390.7" y="493.6" width="2.6" height="1.6" fill="#eceff2" stroke="none" stroke-width="0.4" /><rect x="370.3" y="500.3" width="2.6" height="1.6" fill="#e8ebee" stroke="none" stroke-width="0.4" /><rect x="390.7" y="496.6" width="2.6" height="1.6" fill="#eceff2" stroke="none" stroke-width="0.4" /><rect x="370.3" y="503.3" width="2.6" height="1.6" fill="#e8ebee" stroke="none" stroke-width="0.4" /><rect x="390.7" y="499.6" width="2.6" height="1.6" fill="#eceff2" stroke="none" stroke-width="0.4" /><rect x="374.9" y="497.3" width="2.6" height="1.6" fill="#e8ebee" stroke="none" stroke-width="0.4" /><rect x="395.1" y="493.6" width="2.6" height="1.6" fill="#eceff2" stroke="none" stroke-width="0.4" /><rect x="374.9" y="500.3" width="2.6" height="1.6" fill="#e8ebee" stroke="none" stroke-width="0.4" /><rect x="395.1" y="496.6" width="2.6" height="1.6" fill="#eceff2" stroke="none" stroke-width="0.4" /><rect x="374.9" y="503.3" width="2.6" height="1.6" fill="#e8ebee" stroke="none" stroke-width="0.4" /><rect x="395.1" y="499.6" width="2.6" height="1.6" fill="#eceff2" stroke="none" stroke-width="0.4" /><path d="M354.7 496L368 498.5L380.5 496" stroke="#3c4148" stroke-width="0.4" fill="none" /><path d="M368 498.5L368 506.8" stroke="#3c4148" stroke-width="0.4" fill="none" /><path d="M375.5 492L388 494L399.8 493" stroke="#3c4148" stroke-width="0.4" fill="none" /><rect x="380.3" y="486" width="3.4" height="6" fill="#b9bec5" stroke="#8a8f97" stroke-width="0.3" /><ellipse cx="382" cy="486" rx="1.700" ry=".9" fill="#d5d9de"/><polygon points="492.92,510.96 500.6,502.32 514.04,503.28 519.8,511.92 506.36,512.88" fill="#9aa0a8"/><polygon points="492.92,510.96 500.6,502.32 506.36,512.88 496.76,513.84" fill="#b4b9c0"/><polygon points="494.84,512.88 504.44,513.84 504.44,527.28 495.8,523.44" fill="#d4d7db"/><polygon points="504.44,513.84 517.88,511.92 517.88,523.44 504.44,527.28" fill="#c4c8cd"/><polygon points="509.24,517.68 513.08,517.2 513.08,524.88 509.24,525.94" fill="#8d939b"/><polygon points="497.72,516.72 501.56,517.3 501.56,521.52 497.72,520.56" fill="#a9aeb5"/><polygon points="504.44,527.28 517.88,523.44 519.8,524.4 507.32,529.2" fill="#8d939b" opacity=".6"/><path d="M96 748.6L96 741.6" stroke="#2030e0" stroke-width="0.9" /><path d="M94.7 742.1L96 739.1L97.3 742.1z" fill="#2030e0"/><path d="M96 748.6L102 748.6" stroke="#e02020" stroke-width="0.9" /><path d="M101.5 747.3000000000001L104.5 748.6L101.5 749.9z" fill="#e02020"/><path d="M96 748.6L92.5 748.1" stroke="#20c020" stroke-width="0.9" /><circle cx="92" cy="748" r="1.1" fill="#20c020" stroke="none" stroke-width="0.4"/><text x="95.1" y="738.6" font-size="3.4" fill="#2030e0" font-weight="700" >Z</text><text x="105" y="749.9" font-size="3.4" fill="#e02020" font-weight="700" >X</text><text x="88" y="748.2" font-size="3.2" fill="#20c020" font-weight="700" >Y</text></g></svg></div><div style="left:1638.0px;top:144.9px;width:294.0px;height:874.2px;background:#eef1f5;"></div><div style="left:1638.3px;top:144.9px;width:1.2px;height:879.0px;background:#e6e9ee;"></div><span class="t" style="left:1647.6px;top:163.2px;color:#5b6573;font-size:11.6px;">通用工具</span><div style="left:1908.9px;top:162.9px;width:8.4px;height:1.2px;background:#6b7480;"></div><svg style="left:1662.0px;top:203.1px;width:22.2px;height:22.2px;" viewBox="0 0 24 24"><path d="M12 1l3 4h-6zM12 23l3-4h-6zM1 12l4-3v6zM23 12l-4-3v6z" fill="#4a6484"/><path d="M12 4v16M4 12h16" stroke="#4a6484" stroke-width="1.6"/></svg><svg style="left:1701.3px;top:203.1px;width:22.2px;height:22.2px;" viewBox="0 0 24 24"><rect x="5" y="5" width="18" height="18" fill="#4a6484"/><rect x="2" y="2" width="18" height="18" fill="#fff" stroke="#4a6484" stroke-width="2"/><rect x="9" y="9" width="4" height="4" fill="none" stroke="#4a6484" stroke-width="1.2"/></svg><svg style="left:1738.8px;top:203.1px;width:22.2px;height:22.2px;" viewBox="0 0 24 24"><circle cx="11" cy="12" r="9.500" fill="none" stroke="#4a6484" stroke-width="1.8"/><circle cx="11" cy="12" r="4" fill="#4a6484"/><path d="M11 12h12" stroke="#4a6484" stroke-width="2"/><path d="M19 8l4 4-4 4" stroke="#4a6484" stroke-width="1.6" fill="none"/></svg><svg style="left:1776.6px;top:203.1px;width:22.2px;height:22.2px;" viewBox="0 0 24 24"><path d="M13 1V23" stroke="#9fb0c6" stroke-width="1.6"/><rect x="3" y="7" width="10" height="9" fill="#4a6484"/><rect x="9" y="14" width="6" height="8" fill="#4a6484"/><path d="M15 8h7M15 15h7" stroke="#9fb0c6" stroke-width="1.6"/></svg><svg style="left:1815.0px;top:203.1px;width:22.2px;height:22.2px;" viewBox="0 0 24 24"><path d="M12 1V23" stroke="#9fb0c6" stroke-width="1.6"/><rect x="1" y="8" width="9" height="8" fill="#4a6484"/><rect x="14" y="8" width="9" height="8" fill="#4a6484"/></svg><svg style="left:1854.3px;top:203.1px;width:22.2px;height:22.2px;" viewBox="0 0 24 24"><rect x="2" y="2" width="12" height="12" rx="3.500" fill="none" stroke="#4a6484" stroke-width="2.6"/><rect x="10" y="10" width="12" height="12" rx="3.500" fill="#eef1f5" stroke="#4a6484" stroke-width="2.6"/></svg><svg style="left:1662.0px;top:242.1px;width:22.2px;height:22.2px;" viewBox="0 0 24 24"><path d="M21 2V23" stroke="#4a6484" stroke-width="1.6"/><rect x="8" y="4" width="12" height="7" fill="#4a6484"/><rect x="3" y="13" width="17" height="7" fill="#fff" stroke="#4a6484" stroke-width="2"/></svg><svg style="left:1701.3px;top:242.1px;width:22.2px;height:22.2px;" viewBox="0 0 24 24"><path d="M20 2V23M23 2V23" stroke="#9fb0c6" stroke-width="1.4"/><rect x="2" y="9" width="10" height="6" fill="#4a6484"/><path d="M12 12h7" stroke="#4a6484" stroke-width="1.8"/></svg><svg style="left:1738.8px;top:242.1px;width:22.2px;height:22.2px;" viewBox="0 0 24 24"><path d="M22 2V23" stroke="#9fb0c6" stroke-width="1.6"/><rect x="3" y="4" width="13" height="7" fill="#4a6484"/><rect x="3" y="14" width="13" height="7" fill="#4a6484"/><path d="M16 7.5h5M16 17.500h5" stroke="#4a6484" stroke-width="1.6"/></svg><svg style="left:1776.6px;top:242.1px;width:22.2px;height:22.2px;" viewBox="0 0 24 24"><rect x="1" y="16" width="7" height="7" fill="#4a6484"/><rect x="16" y="1" width="7" height="7" fill="#fff" stroke="#4a6484" stroke-width="1.8"/><path d="M7 17L17 7" stroke="#4a6484" stroke-width="1.8"/><circle cx="12" cy="12" r="2.2" fill="#fff" stroke="#4a6484" stroke-width="1.4"/></svg><svg style="left:1815.0px;top:242.1px;width:22.2px;height:22.2px;" viewBox="0 0 24 24"><path d="M12 1V23" stroke="#9fb0c6" stroke-width="1.6"/><path d="M2 5v14l7-7z" fill="none" stroke="#4a6484" stroke-width="1.8"/><path d="M22 5v14l-7-7z" fill="#4a6484"/></svg><svg style="left:1854.3px;top:242.1px;width:22.2px;height:22.2px;" viewBox="0 0 24 24"><path d="M4 7H20L18.500 23H5.500z" fill="#4a6484"/><path d="M2 5.500H22" stroke="#4a6484" stroke-width="2.4"/><path d="M8 4.500V2H16V4.500" stroke="#4a6484" stroke-width="2" fill="none"/><path d="M9.500 10v10M14.500 10v10" stroke="#c8d3e2" stroke-width="1.4"/></svg><svg style="left:1662.0px;top:279.6px;width:22.2px;height:22.2px;opacity:.35;" viewBox="0 0 24 24"><rect x="1" y="5" width="22" height="14" fill="#dfe6f0" stroke="#4a6484" stroke-width="2"/><path d="M5 15v-5M9 15v-3M13 15v-5M17 15v-3" stroke="#4a6484" stroke-width="1.6"/><path d="M1 19h22" stroke="#4a6484" stroke-width="2.4"/></svg><svg style="left:1701.3px;top:279.6px;width:22.2px;height:22.2px;" viewBox="0 0 24 24"><path d="M3 6Q17 2 18 12L17 22" stroke="#7fb0f8" stroke-width="4.500" fill="none"/><path d="M3 4.500Q8 3 11 4M16.500 17L15.800 22" stroke="#4a6484" stroke-width="1.6" fill="none"/></svg><div style="left:1638.0px;top:344.7px;width:294.0px;height:1.5px;background:#f9fafb;"></div><span class="t" style="left:1647.6px;top:361.8px;color:#5b6573;font-size:11.6px;">属性面板</span><div style="left:1651.8px;top:378.9px;width:240.6px;height:46.2px;background:#f3f5f8;border:1px solid #e1e4ea;border-radius:2px;"></div><span class="t" style="left:1658.4px;top:394.5px;color:#b4bac4;font-size:11.4px;">视图名称</span><span class="t" style="left:1658.4px;top:409.5px;color:#b4bac4;font-size:11.4px;">三维视图</span><svg style="left:1879.5px;top:399.9px;width:9.0px;height:6.3px;" viewBox="0 0 10 7"><path d="M1 1.5L5 5.5L9 1.5" stroke="#6b7480" stroke-width="1.7" fill="none"/></svg><div style="left:1899.0px;top:378.3px;width:19.8px;height:20.4px;background:#f7f8fa;border:1px solid #e1e4ea;"></div><div style="left:1899.0px;top:404.1px;width:19.8px;height:20.4px;background:#f7f8fa;border:1px solid #e1e4ea;"></div><span class="t c" style="left:1908.9px;top:388.2px;color:#7c8593;font-size:13px;">+</span><svg style="left:1903.8px;top:409.5px;width:10.2px;height:9.6px;" viewBox="0 0 24 24"><path d="M2 5h20M2 12h20M2 19h20" stroke="#5b6573" stroke-width="2.6"/></svg><svg style="left:1653.0px;top:446.7px;width:8.4px;height:6.3px;" viewBox="0 0 10 7"><path d="M1 1.5L5 5.5L9 1.5" stroke="#6b7480" stroke-width="1.8" fill="none"/></svg><span class="t" style="left:1671.6px;top:450.0px;color:#5b6573;">基本属性</span><span class="t" style="left:1650.0px;top:477.3px;">视图名称</span><div class="inp" style="left:1721.4px;top:467.1px;width:199.2px;height:20.7px;"></div><span class="t" style="left:1728.0px;top:477.3px;color:#1f2329;">三维(雨水)</span><span class="t" style="left:1650.0px;top:508.3px;">工作平面</span><div class="inp" style="left:1721.4px;top:498.1px;width:199.2px;height:20.7px;"></div><span class="t" style="left:1728.0px;top:508.3px;color:#1f2329;">结构-1F</span><svg style="left:1906.5px;top:505.3px;width:9.0px;height:6.3px;" viewBox="0 0 10 7"><path d="M1 1.5L5 5.5L9 1.5" stroke="#6b7480" stroke-width="1.7" fill="none"/></svg><span class="t" style="left:1650.0px;top:539.3px;">视图对象···</span><div class="inp" style="left:1721.4px;top:529.1px;width:199.2px;height:20.7px;"></div><span class="t c" style="left:1821.0px;top:539.3px;">设置</span><span class="t" style="left:1650.0px;top:570.3px;">视图比例</span><div class="inp dis" style="left:1721.4px;top:560.1px;width:199.2px;height:20.7px;"></div><span class="t" style="left:1728.0px;top:570.3px;color:#a5acb8;">1:100</span><svg style="left:1906.5px;top:567.3px;width:9.0px;height:6.3px;" viewBox="0 0 10 7"><path d="M1 1.5L5 5.5L9 1.5" stroke="#a5acb8" stroke-width="1.7" fill="none"/></svg><span class="t" style="left:1650.0px;top:601.3px;">显示模式</span><div class="inp dis" style="left:1721.4px;top:591.1px;width:199.2px;height:20.7px;"></div><span class="t" style="left:1728.0px;top:601.3px;color:#a5acb8;">着色: 有边线、有阴影</span><svg style="left:1906.5px;top:598.3px;width:9.0px;height:6.3px;" viewBox="0 0 10 7"><path d="M1 1.5L5 5.5L9 1.5" stroke="#a5acb8" stroke-width="1.7" fill="none"/></svg><span class="t" style="left:1650.0px;top:632.3px;">详细程度</span><div class="inp dis" style="left:1721.4px;top:622.1px;width:199.2px;height:20.7px;"></div><span class="t" style="left:1728.0px;top:632.3px;color:#a5acb8;">精细</span><svg style="left:1906.5px;top:629.3px;width:9.0px;height:6.3px;" viewBox="0 0 10 7"><path d="M1 1.5L5 5.5L9 1.5" stroke="#a5acb8" stroke-width="1.7" fill="none"/></svg><span class="t" style="left:1650.0px;top:663.2px;">专业</span><div class="inp" style="left:1721.4px;top:653.0px;width:199.2px;height:20.7px;"></div><span class="t" style="left:1728.0px;top:663.2px;color:#1f2329;">机电</span><svg style="left:1906.5px;top:660.2px;width:9.0px;height:6.3px;" viewBox="0 0 10 7"><path d="M1 1.5L5 5.5L9 1.5" stroke="#6b7480" stroke-width="1.7" fill="none"/></svg><span class="t" style="left:1650.0px;top:694.2px;">显示隐藏线</span><div class="inp" style="left:1721.4px;top:684.0px;width:199.2px;height:20.7px;"></div><span class="t" style="left:1728.0px;top:694.2px;color:#1f2329;">按专业</span><svg style="left:1906.5px;top:691.2px;width:9.0px;height:6.3px;" viewBox="0 0 10 7"><path d="M1 1.5L5 5.5L9 1.5" stroke="#6b7480" stroke-width="1.7" fill="none"/></svg><svg style="left:1653.0px;top:729.7px;width:8.4px;height:6.3px;" viewBox="0 0 10 7"><path d="M1 1.5L5 5.5L9 1.5" stroke="#6b7480" stroke-width="1.8" fill="none"/></svg><span class="t" style="left:1671.6px;top:733.0px;color:#8a93a0;">视图范围</span><span class="t" style="left:1650.0px;top:761.8px;">视图样板</span><div class="inp" style="left:1721.4px;top:751.6px;width:199.2px;height:20.7px;"></div><span class="t" style="left:1728.0px;top:761.8px;color:#1f2329;">视图样板-新建</span><svg style="left:1906.5px;top:758.8px;width:9.0px;height:6.3px;" viewBox="0 0 10 7"><path d="M1 1.5L5 5.5L9 1.5" stroke="#6b7480" stroke-width="1.7" fill="none"/></svg><span class="t" style="left:1650.0px;top:791.6px;">裁切框</span><div class="cb on" style="left:1721.4px;top:783.2px;width:17.1px;height:17.1px;"></div><svg style="left:1723.8px;top:785.6px;width:12.3px;height:12.3px;" viewBox="0 0 24 24"><path d="M4 12.500L10 18L20 6.500" stroke="#fff" stroke-width="3.4" fill="none"/></svg><span class="t" style="left:1650.0px;top:821.4px;">锁定视图···</span><div class="cb" style="left:1721.4px;top:813.0px;width:17.1px;height:17.1px;"></div><div style="left:37.5px;top:1002.0px;width:195.6px;height:22.8px;background:#eef1f5;"></div><div style="left:37.5px;top:1024.8px;width:1894.5px;height:22.2px;background:#e9edf2;"></div><div style="left:37.5px;top:1024.5px;width:1894.5px;height:1.2px;background:#f6f7f9;"></div><svg style="left:58.8px;top:1029.6px;width:15.0px;height:13.2px;" viewBox="0 0 24 24"><path d="M1 12Q12 1 23 12Q12 23 1 12z" fill="none" stroke="#aab2bf" stroke-width="2.4"/><circle cx="12" cy="12" r="4" fill="#aab2bf"/></svg><svg style="left:91.2px;top:1029.6px;width:15.0px;height:13.2px;" viewBox="0 0 24 24"><path d="M1 12Q12 1 23 12Q12 23 1 12z" fill="none" stroke="#aab2bf" stroke-width="2.4"/><circle cx="12" cy="12" r="4" fill="#aab2bf"/><path d="M16 18l6 4" stroke="#6aa6f5" stroke-width="3"/></svg><svg style="left:123.6px;top:1029.6px;width:15.0px;height:13.2px;" viewBox="0 0 24 24"><path d="M1 12Q12 1 23 12Q12 23 1 12z" fill="none" stroke="#55637a" stroke-width="2.4"/><circle cx="12" cy="12" r="4" fill="#55637a"/><path d="M15 17l7 5" stroke="#3d8af2" stroke-width="3.4"/></svg><div style="left:148.8px;top:1026.9px;width:1.2px;height:18.6px;background:#d6dae1;"></div><svg style="left:164.1px;top:1028.4px;width:12.0px;height:15.6px;" viewBox="0 0 24 25"><path d="M12 2a8 8 0 0 1 4.5 14.5V19h-9v-2.500A8 8 0 0 1 12 2z" fill="none" stroke="#1d3461" stroke-width="2.6"/><path d="M8.5 22.500h7" stroke="#1d3461" stroke-width="2.4"/></svg><svg style="left:195.6px;top:1029.9px;width:15.0px;height:12.6px;" viewBox="0 0 24 24"><path d="M1 12Q12 1 23 12Q12 23 1 12z" fill="none" stroke="#55637a" stroke-width="2.4"/><circle cx="12" cy="12" r="4" fill="#55637a"/></svg><div style="left:217.8px;top:1036.5px;width:4.2px;height:1.2px;background:#8a93a0;"></div><div style="left:235.8px;top:1026.9px;width:1.2px;height:18.6px;background:#d6dae1;"></div><svg style="left:253.8px;top:1029.0px;width:13.8px;height:15.0px;" viewBox="0 0 24 24"><rect x="3" y="2" width="7" height="8" fill="#1d3461"/><rect x="3" y="13" width="7" height="8" fill="#1d3461"/><path d="M13 2V22" stroke="#1d3461" stroke-width="2"/><path d="M14 6h7M14 17h7" stroke="#8a93a0" stroke-width="2"/></svg><svg style="left:288.0px;top:1029.0px;width:13.8px;height:15.0px;" viewBox="0 0 24 24"><path d="M4 2V20H22" stroke="#3d6fd0" stroke-width="2.6" fill="none"/><path d="M4 12a8 8 0 0 1 8 8" stroke="#3d8af2" stroke-width="2" fill="none"/></svg><div style="left:321.9px;top:1026.9px;width:1.2px;height:18.6px;background:#d6dae1;"></div><div style="left:1837.8px;top:1026.9px;width:1.2px;height:18.6px;background:#d6dae1;"></div><svg style="left:1851.6px;top:1029.0px;width:18.0px;height:15.0px;" viewBox="0 0 24 24"><rect x="2" y="8" width="20" height="8" rx="1" fill="#8fd9c0" transform="rotate(-40 12 12)"/></svg><svg style="left:1885.2px;top:1029.6px;width:14.4px;height:14.4px;" viewBox="0 0 24 24"><rect x="3" y="3" width="16" height="16" rx="2" fill="none" stroke="#7d8aa0" stroke-width="2.4"/><path d="M7 22h15V7" stroke="#b7c0ce" stroke-width="2.2" fill="none"/></svg><svg style="left:1915.8px;top:1029.6px;width:15.0px;height:14.4px;" viewBox="0 0 24 24"><path d="M3 3l7 7M21 3l-7 7M3 21l7-7M21 21l-7-7" stroke="#7d8aa0" stroke-width="2.4"/><rect x="8" y="8" width="8" height="8" fill="none" stroke="#7d8aa0" stroke-width="2"/></svg><svg style="left:240.0px;top:550.8px;width:16.2px;height:33.6px;" viewBox="0 0 10.8 22.4"><path d="M0 0A10.500 11.200 0 0 1 0 22.400z" fill="#c5cad3"/><path d="M3 9l3 2.200-3 2.200" stroke="#fff" stroke-width="1.2" fill="none"/></svg><svg style="left:1621.8px;top:568.2px;width:16.2px;height:33.6px;" viewBox="0 0 10.8 22.4"><path d="M10.8 0A10.500 11.200 0 0 0 10.8 22.400z" fill="#c5cad3"/><path d="M5 9l3 2.200-3 2.200" stroke="#fff" stroke-width="1.2" fill="none"/></svg><div style="left:1594.2px;top:930.0px;width:28.8px;height:50.4px;background:#3b3b3b;"></div><svg style="left:1599.6px;top:934.2px;width:18.0px;height:18.0px;" viewBox="0 0 24 24"><path d="M19 12a7 7 0 1 1-3-5.700" stroke="#fff" stroke-width="2.6" fill="none"/><path d="M12 3h6v6" stroke="#fff" stroke-width="2.4" fill="none"/><circle cx="12" cy="12" r="1.8" fill="#fff"/></svg><svg style="left:1600.8px;top:958.8px;width:15.6px;height:15.6px;" viewBox="0 0 24 24"><path d="M3 3L21 21M21 3L3 21" stroke="#fff" stroke-width="3.6"/></svg><div class="bd"></div></div><div class="win" style="left:661.1px;top:427.05px;transform:scale(0.33293,0.333333);"><div style="left:6.0px;top:6.0px;width:1926.0px;height:1041.0px;background:#eef1f5;"></div><div style="left:6.0px;top:6.0px;width:1926.0px;height:47.4px;background:#1e2228;"></div><svg style="left:0.0px;top:0.0px;width:42.0px;height:42.0px;" viewBox="0 0 14 14"><path d="M4.3 9.3L6.2 5.4L8.3 9.3L10.3 5.4" stroke="#0a3d24" stroke-width=".5" fill="none"/><circle cx="6.2" cy="5.4" r="1.15" fill="#00a651"/><circle cx="10.3" cy="5.4" r="1.15" fill="#00a651"/><circle cx="4.3" cy="9.3" r="1.15" fill="#00a651"/><circle cx="8.3" cy="9.3" r="1.15" fill="#00a651"/></svg><span class="t" style="left:38.4px;top:22.2px;color:#dfe2e6;font-size:12.6px;-webkit-text-stroke:0;">14#-给排水 - 三维视图: 三维(雨水)</span><div style="left:9.0px;top:0;width:0;height:0;"><svg style="left:627.9px;top:11.1px;width:21.0px;height:21.0px;" viewBox="0 0 24 24"><path d="M3 2H17L21 6V22H3z" fill="none" stroke="#e6e8eb" stroke-width="2"/><rect x="7" y="2" width="9" height="6" fill="none" stroke="#e6e8eb" stroke-width="1.8"/><rect x="7" y="13" width="10" height="9" fill="none" stroke="#e6e8eb" stroke-width="1.8"/></svg><span class="t" style="left:653.4px;top:22.2px;color:#e4e6ea;-webkit-text-stroke:0.05px;">保存</span><svg style="left:688.5px;top:11.1px;width:21.0px;height:21.0px;" viewBox="0 0 24 24"><path d="M22 2L2 11L9 14L11 22L14 16L20 19z" fill="#e6e8eb"/><path d="M9 14L22 2L11 16" stroke="#1e2228" stroke-width="1.2" fill="none"/></svg><span class="t" style="left:714.0px;top:22.2px;color:#e4e6ea;-webkit-text-stroke:0.05px;">提交</span><svg style="left:749.4px;top:11.1px;width:21.0px;height:21.0px;" viewBox="0 0 24 24"><path d="M4 2H14L20 8V22H4z" fill="none" stroke="#e6e8eb" stroke-width="2"/><path d="M14 2V8H20" fill="none" stroke="#e6e8eb" stroke-width="1.6"/><path d="M12 13l7 8M19 13l-7 8" stroke="#f0443c" stroke-width="2.6"/></svg><span class="t" style="left:774.6px;top:22.2px;color:#e4e6ea;-webkit-text-stroke:0.05px;">关闭</span><svg style="left:809.4px;top:11.1px;width:21.0px;height:21.0px;" viewBox="0 0 24 24"><path d="M8 5H4V22H13" fill="none" stroke="#e6e8eb" stroke-width="2"/><path d="M8 3H16V7H8z" fill="#e6e8eb"/><path d="M11 9H21V22H11z" fill="none" stroke="#e6e8eb" stroke-width="2"/><path d="M14 13h4M14 17h4" stroke="#e6e8eb" stroke-width="1.5"/></svg><span class="t" style="left:834.9px;top:22.2px;color:#e4e6ea;-webkit-text-stroke:0.05px;">剪贴板</span><svg style="left:878.1px;top:18.9px;width:9.6px;height:7.2px;" viewBox="0 0 10 7"><path d="M1 1.5L5 5.5L9 1.5" stroke="#c8ccd2" stroke-width="1.6" fill="none"/></svg><svg style="left:902.4px;top:11.1px;width:21.0px;height:21.0px;" viewBox="0 0 24 24"><path d="M9 4L3 9.5L9 15" fill="none" stroke="#e6e8eb" stroke-width="2.4"/><path d="M3 9.5H15a6 5.5 0 0 1 0 11H7" fill="none" stroke="#e6e8eb" stroke-width="2.4"/></svg><svg style="left:934.5px;top:11.1px;width:21.0px;height:21.0px;" viewBox="0 0 24 24"><path d="M15 4L21 9.5L15 15" fill="none" stroke="#5a6068" stroke-width="2.2"/><path d="M21 9.5H9a6 5.5 0 0 0 0 11H17" fill="none" stroke="#5a6068" stroke-width="2.2"/></svg><svg style="left:965.4px;top:11.1px;width:21.0px;height:21.0px;" viewBox="0 0 24 24"><path d="M3 3H21V14Q21 20 12 23Q3 20 3 14z" fill="none" stroke="#e6e8eb" stroke-width="2"/><circle cx="12" cy="11" r="3.5" fill="none" stroke="#e6e8eb" stroke-width="2"/><path d="M12 15v4" stroke="#e6e8eb" stroke-width="2"/></svg><span class="t" style="left:990.9px;top:22.2px;color:#e4e6ea;-webkit-text-stroke:0.05px;">项目管理</span><svg style="left:1049.1px;top:18.9px;width:9.6px;height:7.2px;" viewBox="0 0 10 7"><path d="M1 1.5L5 5.5L9 1.5" stroke="#c8ccd2" stroke-width="1.6" fill="none"/></svg><svg style="left:1068.9px;top:11.1px;width:21.0px;height:21.0px;" viewBox="0 0 24 24"><rect x="10.2" y="0.5" width="3.6" height="6" rx="1" fill="#e6e8eb" transform="rotate(0 12 12)"/><rect x="10.2" y="0.5" width="3.6" height="6" rx="1" fill="#e6e8eb" transform="rotate(45 12 12)"/><rect x="10.2" y="0.5" width="3.6" height="6" rx="1" fill="#e6e8eb" transform="rotate(90 12 12)"/><rect x="10.2" y="0.5" width="3.6" height="6" rx="1" fill="#e6e8eb" transform="rotate(135 12 12)"/><rect x="10.2" y="0.5" width="3.6" height="6" rx="1" fill="#e6e8eb" transform="rotate(180 12 12)"/><rect x="10.2" y="0.5" width="3.6" height="6" rx="1" fill="#e6e8eb" transform="rotate(225 12 12)"/><rect x="10.2" y="0.5" width="3.6" height="6" rx="1" fill="#e6e8eb" transform="rotate(270 12 12)"/><rect x="10.2" y="0.5" width="3.6" height="6" rx="1" fill="#e6e8eb" transform="rotate(315 12 12)"/><circle cx="12" cy="12" r="6.3" fill="none" stroke="#e6e8eb" stroke-width="4.2"/></svg><span class="t" style="left:1094.4px;top:22.2px;color:#e4e6ea;-webkit-text-stroke:0.05px;">系统设置</span><svg style="left:1153.2px;top:18.9px;width:9.6px;height:7.2px;" viewBox="0 0 10 7"><path d="M1 1.5L5 5.5L9 1.5" stroke="#c8ccd2" stroke-width="1.6" fill="none"/></svg></div><svg style="left:1584.6px;top:12.0px;width:19.8px;height:19.8px;" viewBox="0 0 24 24"><circle cx="12" cy="12" r="11.5" fill="#d9dde4"/><circle cx="12" cy="9" r="4" fill="#8f98a6"/><path d="M4 20a8 7 0 0 1 16 0z" fill="#8f98a6"/><circle cx="14" cy="12" r="2" fill="#e9a23b"/></svg><span class="t" style="left:1610.4px;top:22.2px;color:#e4e6ea;-webkit-text-stroke:0.05px;">广小二</span><svg style="left:1654.5px;top:12.0px;width:19.8px;height:19.8px;" viewBox="0 0 24 24"><circle cx="12" cy="12" r="11.5" fill="#d9dde4"/><path d="M6 8h12v8h-5l-3 3v-3H6z" fill="#7d8694"/></svg><span class="t" style="left:1682.4px;top:22.2px;color:#e4e6ea;-webkit-text-stroke:0.05px;">反馈</span><svg style="left:1714.8px;top:18.9px;width:9.6px;height:7.2px;" viewBox="0 0 10 7"><path d="M1 1.5L5 5.5L9 1.5" stroke="#c8ccd2" stroke-width="1.6" fill="none"/></svg><svg style="left:1735.2px;top:12.0px;width:19.8px;height:19.8px;" viewBox="0 0 24 24"><circle cx="12" cy="12" r="10.5" fill="#1e2228" stroke="#d9dde4" stroke-width="2.4"/><path d="M9 9a3 3.4 0 1 1 4.5 3q-1.5 1-1.5 3" stroke="#d9dde4" stroke-width="2.2" fill="none"/><circle cx="12" cy="18.5" r="1.4" fill="#d9dde4"/></svg><span class="t" style="left:1762.8px;top:22.2px;color:#e4e6ea;-webkit-text-stroke:0.05px;">帮助</span><div style="left:1810.8px;top:21.6px;width:7.8px;height:1.5px;background:#b9bdc4;"></div><svg style="left:1857.0px;top:15.6px;width:13.2px;height:13.2px;" viewBox="0 0 24 24"><rect x="2" y="7" width="14" height="14" fill="none" stroke="#e6e8eb" stroke-width="2.6"/><path d="M7 7V3H21V17H16" fill="none" stroke="#e6e8eb" stroke-width="2.6"/></svg><svg style="left:1904.7px;top:15.0px;width:14.4px;height:14.4px;" viewBox="0 0 24 24"><path d="M3 3L21 21M21 3L3 21" stroke="#e6e8eb" stroke-width="2.8"/></svg><svg style="left:0.0px;top:0.0px;width:600.0px;height:60.0px;" viewBox="0 0 200 20"><path d="M12.30 17.8 L12.30 13.5 Q12.30 12.9 14.50 12.9 L31.00 12.9 Q32.00 12.9 32.60 13.700000000000001 L36.00 17.8 Z" fill="#d3d8e1"/><path d="M36.80 17.8 L38.00 13.5 Q38.20 12.9 39.00 12.9 L51.70 12.9 Q52.70 12.9 53.30 13.700000000000001 L56.70 17.8 Z" fill="#d3d8e1"/><path d="M57.50 17.8 L58.70 13.5 Q58.90 12.9 59.70 12.9 L70.80 12.9 Q71.80 12.9 72.40 13.700000000000001 L75.80 17.8 Z" fill="#d3d8e1"/><path d="M76.60 17.8 L77.80 13.5 Q78.00 12.9 78.80 12.9 L90.70 12.9 Q91.70 12.9 92.30 13.700000000000001 L95.70 17.8 Z" fill="#d3d8e1"/><path d="M96.50 17.8 L97.70 13.5 Q97.90 12.9 98.70 12.9 L109.90 12.9 Q110.90 12.9 111.50 13.700000000000001 L114.90 17.8 Z" fill="#d3d8e1"/><path d="M115.70 17.8 L116.90 13.5 Q117.10 12.9 117.90 12.9 L130.50 12.9 Q131.50 12.9 132.10 13.700000000000001 L135.50 17.8 Z" fill="#eef1f5"/><path d="M136.30 17.8 L137.50 13.5 Q137.70 12.9 138.50 12.9 L154.30 12.9 Q155.30 12.9 155.90 13.700000000000001 L159.30 17.8 Z" fill="#d3d8e1"/></svg><span class="t c" style="left:67.9px;top:46.2px;color:#6b7480;font-size:11.6px;">通用</span><span class="t c" style="left:134.8px;top:46.2px;color:#6b7480;font-size:11.6px;">给排水</span><span class="t c" style="left:194.6px;top:46.2px;color:#6b7480;font-size:11.6px;">暖通</span><span class="t c" style="left:253.1px;top:46.2px;color:#6b7480;font-size:11.6px;">电气</span><span class="t c" style="left:311.7px;top:46.2px;color:#6b7480;font-size:11.6px;">管综</span><span class="t c" style="left:371.4px;top:46.2px;color:#1f2329;font-size:11.6px;">注释</span><span class="t c" style="left:438.0px;top:46.2px;color:#6b7480;font-size:11.6px;">视图拓展</span><div style="left:36.9px;top:53.4px;width:1895.1px;height:59.1px;background:#eef1f5;"></div><svg style="left:421.2px;top:59.1px;width:30.6px;height:30.6px;opacity:.33;" viewBox="0 0 24 24"><rect x="2" y="3" width="20" height="18" fill="#cddbf0" stroke="#4f6f9f" stroke-width="1.8"/><path d="M2 9H22M2 15H22M8.7 3V21M15.3 3V21" stroke="#4f6f9f" stroke-width="1.5" fill="none"/></svg><span class="t c" style="left:436.5px;top:99.3px;color:#a9b0bb;font-size:11.6px;">表格</span><svg style="left:475.2px;top:59.1px;width:30.6px;height:30.6px;opacity:.33;" viewBox="0 0 24 24"><path d="M4 20L20 4" stroke="#3c5273" stroke-width="1.6"/><circle cx="4" cy="20" r="2" fill="#3d8af2"/><circle cx="20" cy="4" r="2" fill="#3c5273"/></svg><span class="t c" style="left:490.5px;top:99.3px;color:#a9b0bb;font-size:11.6px;">二维线</span><svg style="left:530.7px;top:59.1px;width:30.6px;height:30.6px;opacity:.33;" viewBox="0 0 24 24"><path d="M4 11a8 7 0 0 1 16 0z" fill="none" stroke="#3c5273" stroke-width="1.6"/><path d="M8 11v3M12 11v5M16 11v3" stroke="#3c5273" stroke-width="1.4"/><rect x="11" y="13" width="11" height="9" fill="#c9d6ea" opacity=".9"/><circle cx="17" cy="17" r="2.2" fill="none" stroke="#3d8af2" stroke-width="1.3"/></svg><span class="t c" style="left:546.0px;top:99.3px;color:#a9b0bb;font-size:11.6px;">填充</span><svg style="left:587.1px;top:59.1px;width:30.6px;height:30.6px;opacity:.33;" viewBox="0 0 24 24"><path d="M3 3H17V8H15V5.5H11.5V19H14V21H6V19H8.5V5.5H5V8H3z" fill="#e8eef8" stroke="#3c5273" stroke-width="1.3"/><path d="M14 11H23V15H21.5V13H19.5V20H21V21.5H16V20H17.5V13H15.5V15H14z" fill="#3d8af2"/></svg><span class="t c" style="left:602.4px;top:99.3px;color:#a9b0bb;font-size:11.6px;">文字</span><svg style="left:671.7px;top:59.1px;width:30.6px;height:30.6px;" viewBox="0 0 24 24"><path d="M5 19L19 5" stroke="#3c5273" stroke-width="1.6"/><path d="M2 16l6 6M16 2l6 6" stroke="#3c5273" stroke-width="1.6"/><circle cx="20" cy="20" r="1.3" fill="#3c5273"/></svg><span class="t c" style="left:687.0px;top:99.3px;color:#1f2329;font-size:11.6px;">尺寸标注</span><svg style="left:740.7px;top:59.1px;width:30.6px;height:30.6px;opacity:.33;" viewBox="0 0 24 24"><path d="M5 2V12M10 2V14M15 2V12" stroke="#3c5273" stroke-width="1.5"/><path d="M3 7H8M8 9H12M13 7H18" stroke="#3c5273" stroke-width="1.2"/><path d="M21 5L13 19" stroke="#3c5273" stroke-width="1.5"/><circle cx="12" cy="20" r="2.4" fill="#3d8af2"/><path d="M17 16h5" stroke="#3d8af2" stroke-width="1.5"/></svg><span class="t c" style="left:756.0px;top:99.3px;color:#a9b0bb;font-size:11.6px;">管线定位</span><svg style="left:809.7px;top:59.1px;width:30.6px;height:30.6px;opacity:.33;" viewBox="0 0 24 24"><path d="M2 8H22M2 16H22" stroke="#3d8af2" stroke-width="1.7"/><path d="M8 2V22M16 2V22" stroke="#3c5273" stroke-width="1.6"/><path d="M10 12h9" stroke="#3d8af2" stroke-width="2"/><path d="M17 8.5l5 3.5-5 3.5z" fill="#3d8af2"/><circle cx="8" cy="8" r="1.6" fill="#3d8af2"/><circle cx="16" cy="16" r="1.6" fill="#3d8af2"/></svg><span class="t c" style="left:825.0px;top:99.3px;color:#a9b0bb;font-size:11.6px;">墙间标注</span><svg style="left:899.7px;top:59.1px;width:30.6px;height:30.6px;opacity:.33;" viewBox="0 0 24 24"><path d="M5 1V23" stroke="#3c5273" stroke-width="3"/><path d="M5 6H14" stroke="#3c5273" stroke-width="1.4"/><path d="M14 4h8M14 7h8" stroke="#3c5273" stroke-width="1.2"/><path d="M12 13a5 5 0 0 1 10 0v6h-10z" fill="#3d8af2"/><path d="M15 15v3M19 15v3" stroke="#fff" stroke-width="1.2"/></svg><span class="t c" style="left:915.0px;top:99.3px;color:#a9b0bb;font-size:11.6px;">标注管道</span><svg style="left:968.7px;top:59.1px;width:30.6px;height:30.6px;opacity:.33;" viewBox="0 0 24 24"><path d="M3 22L9 7Q10 5 12 5H14" stroke="#3c5273" stroke-width="1.5" fill="none"/><path d="M14 4h8M14 7h8" stroke="#3c5273" stroke-width="1.2"/><rect x="14" y="9" width="8" height="2" fill="#3c5273"/></svg><span class="t c" style="left:984.0px;top:99.3px;color:#a9b0bb;font-size:11.6px;">引出标注</span><svg style="left:1037.7px;top:59.1px;width:30.6px;height:30.6px;opacity:.33;" viewBox="0 0 24 24"><path d="M5 1V23" stroke="#3c5273" stroke-width="3"/><path d="M5 8H13" stroke="#3c5273" stroke-width="1.4"/><rect x="13" y="6" width="9" height="3" fill="#3c5273"/></svg><span class="t c" style="left:1053.0px;top:99.3px;color:#a9b0bb;font-size:11.6px;">单个标注</span><svg style="left:1106.7px;top:59.1px;width:30.6px;height:30.6px;opacity:.33;" viewBox="0 0 24 24"><path d="M3 21H16" stroke="#3c5273" stroke-width="2.4"/><path d="M9 21V4" stroke="#3c5273" stroke-width="1.4"/><path d="M9 5h13M9 9h13M9 13h13" stroke="#3c5273" stroke-width="1.5"/><rect x="11" y="15" width="11" height="3" fill="#9fb4d6"/></svg><span class="t c" style="left:1122.0px;top:99.3px;color:#a9b0bb;font-size:11.6px;">平行标注</span><svg style="left:1174.2px;top:59.1px;width:30.6px;height:30.6px;opacity:.33;" viewBox="0 0 24 24"><rect x="3" y="4" width="17" height="5" rx="2.5" fill="#dfe8f5" stroke="#3c5273" stroke-width="1.4"/><rect x="3" y="15" width="17" height="5" rx="2.5" fill="#dfe8f5" stroke="#3c5273" stroke-width="1.4"/><path d="M20 3l3 2-3 2M20 17l3 2-3 2" stroke="#3c5273" stroke-width="1.2" fill="none"/></svg><span class="t c" style="left:1189.5px;top:99.3px;color:#a9b0bb;font-size:11.6px;">断面符号</span><svg style="left:1242.6px;top:59.1px;width:30.6px;height:30.6px;" viewBox="0 0 24 24"><path d="M2 12H8M16 12H22" stroke="#3c5273" stroke-width="1.8"/><path d="M9 12h6" stroke="#3d8af2" stroke-width="2.4"/></svg><span class="t c" style="left:1257.9px;top:99.3px;color:#1f2329;font-size:11.6px;">管线文字</span><svg style="left:1310.7px;top:59.1px;width:30.6px;height:30.6px;opacity:.33;" viewBox="0 0 24 24"><path d="M5 1V23" stroke="#3c5273" stroke-width="3"/><path d="M5 7H13" stroke="#3c5273" stroke-width="1.4"/><path d="M13 5h9M13 8h9" stroke="#3c5273" stroke-width="1.2"/><path d="M13 12l8 9M21 12l-8 9" stroke="#3d8af2" stroke-width="2"/><circle cx="21" cy="21" r="1.8" fill="#3d8af2"/></svg><span class="t c" style="left:1326.0px;top:99.3px;color:#a9b0bb;font-size:11.6px;">自动标注</span><svg style="left:1379.7px;top:59.1px;width:30.6px;height:30.6px;" viewBox="0 0 24 24"><rect x="3" y="2" width="18" height="20" fill="#eef1f6" stroke="#b5bdc9" stroke-width="1.4"/><path d="M3 8H21M3 15H21M9 2V22M15 2V22" stroke="#b5bdc9" stroke-width="1.1" stroke-dasharray="2 1.5"/></svg><span class="t c" style="left:1395.0px;top:99.3px;color:#a9b0bb;font-size:11.6px;">显示设置</span><svg style="left:1447.2px;top:59.1px;width:30.6px;height:30.6px;opacity:.33;" viewBox="0 0 24 24"><rect x="2" y="3" width="20" height="5" rx="2.5" fill="#dfe8f5" stroke="#3c5273" stroke-width="1.5"/><path d="M12 8V19" stroke="#3d8af2" stroke-width="1.6"/><path d="M9.5 17l2.5 4 2.5-4z" fill="#3d8af2"/></svg><span class="t c" style="left:1462.5px;top:99.3px;color:#a9b0bb;font-size:11.6px;">梁底净高</span><svg style="left:1514.7px;top:59.1px;width:30.6px;height:30.6px;opacity:.33;" viewBox="0 0 24 24"><rect x="4" y="5" width="5" height="17" fill="#dfe8f5" stroke="#3c5273" stroke-width="1.5"/><path d="M4 3h5" stroke="#3c5273" stroke-width="1.6"/><path d="M11 6l5-3M16 3h5" stroke="#3c5273" stroke-width="1.2" fill="none"/><path d="M14 12h4v4M14 16l4 0M13 21h7" stroke="#3d8af2" stroke-width="1.5" fill="none"/></svg><span class="t c" style="left:1530.0px;top:99.3px;color:#a9b0bb;font-size:11.6px;">立管排序</span><div style="left:640.8px;top:58.5px;width:1.5px;height:51.0px;background:#d5d9e0;"></div><div style="left:869.1px;top:58.5px;width:1.5px;height:51.0px;background:#d5d9e0;"></div><div style="left:6.0px;top:37.8px;width:31.2px;height:1009.2px;background:#f1f3f7;"></div><div style="left:36.6px;top:37.8px;width:1.0px;height:1009.2px;background:#dfe3ea;"></div><div style="left:6.0px;top:75.0px;width:31.2px;height:1.2px;background:#dde1e8;"></div><svg style="left:12.9px;top:49.8px;width:18.6px;height:17.4px;" viewBox="0 0 24 24"><path d="M3 3l8 9-8 9M12 3l8 9-8 9" stroke="#15181d" stroke-width="3.6" fill="none"/></svg><svg style="left:10.8px;top:92.4px;width:22.2px;height:22.2px;" viewBox="0 0 24 24"><circle cx="12" cy="12" r="11" fill="#7db8fb"/><path d="M6 14v-3a6 6 0 0 1 12 0v3" stroke="#fff" stroke-width="2.4" fill="none"/><rect x="4.5" y="12" width="4" height="6" rx="1.5" fill="#fff"/><rect x="15.5" y="12" width="4" height="6" rx="1.5" fill="#fff"/></svg><svg style="left:11.7px;top:145.5px;width:20.4px;height:20.4px;" viewBox="0 0 24 24"><path d="M12 2L22 7V17L12 22L2 17V7z" fill="#fff" stroke="#1d3461" stroke-width="2.2"/><path d="M12 12L22 7V17L12 22z" fill="#1d3461"/><path d="M2 7l10 5" stroke="#1d3461" stroke-width="2"/></svg><div style="left:6.0px;top:174.9px;width:31.2px;height:36.0px;background:#dce6f6;"></div><svg style="left:11.7px;top:182.7px;width:20.4px;height:20.4px;" viewBox="0 0 24 24"><circle cx="12" cy="12" r="11" fill="#4a90f0"/><ellipse cx="12" cy="12" rx="10" ry="4" fill="none" stroke="#cfe2fb" stroke-width="1.8" transform="rotate(-35 12 12)"/></svg><svg style="left:12.3px;top:218.4px;width:19.2px;height:19.2px;" viewBox="0 0 24 24"><path d="M1 3H10L12 7H23V22H1z" fill="#1d3461"/><rect x="10" y="11" width="8" height="8" fill="#fff"/><path d="M12 13h4v4h-4z" fill="#1d3461"/></svg><svg style="left:12.3px;top:254.7px;width:19.2px;height:18.6px;" viewBox="0 0 24 24"><rect x="1" y="2" width="22" height="5.4" fill="#1d3461"/><rect x="1" y="9.3" width="22" height="5.4" fill="#1d3461"/><rect x="1" y="16.6" width="22" height="5.4" fill="#1d3461"/></svg><svg style="left:12.6px;top:292.2px;width:18.6px;height:18.6px;" viewBox="0 0 24 24"><circle cx="12" cy="12" r="11.5" fill="#1d3461"/><path d="M8.5 9.5a3.5 3.5 0 1 1 5 3q-1.5 .8-1.5 2.5" stroke="#fff" stroke-width="2.6" fill="none"/><circle cx="12" cy="18.6" r="1.6" fill="#fff"/></svg><svg style="left:12.6px;top:976.5px;width:18.6px;height:19.8px;" viewBox="0 0 24 24"><path d="M12 2a7 7 0 0 1 7 7v6l3 4H2l3-4V9a7 7 0 0 1 7-7z" fill="#1d3461"/><circle cx="12" cy="21.5" r="2" fill="#1d3461"/></svg><div style="left:17.4px;top:969.6px;width:24.6px;height:12.6px;background:#f5343f;border-radius:6px;z-index:5;"></div><span class="t c" style="left:30.9px;top:975.9px;color:#fff;font-size:9px;z-index:6;">18</span><svg style="left:11.4px;top:1011.6px;width:21.0px;height:18.0px;" viewBox="0 0 24 21"><path d="M6 20a5 5 0 0 1-.5-10A7 7 0 0 1 19 9.5 5.3 5.3 0 0 1 18.5 20z" fill="#1d3461"/><path d="M12 17V11M9 13.5l3-3 3 3" stroke="#fff" stroke-width="2" fill="none"/></svg><div style="left:37.5px;top:112.5px;width:195.6px;height:40.8px;background:#e9ecf2;"></div><div style="left:81.6px;top:114.6px;width:1.4px;height:37.8px;background:#f7f8fa;"></div><div style="left:124.2px;top:114.6px;width:1.4px;height:37.8px;background:#f7f8fa;"></div><div style="left:166.8px;top:114.6px;width:1.4px;height:37.8px;background:#f7f8fa;"></div><div style="left:37.5px;top:112.5px;width:195.6px;height:1.2px;background:#f7f8fa;"></div><svg style="left:52.2px;top:127.8px;width:16.2px;height:16.8px;" viewBox="0 0 24 24"><rect x="1" y="1" width="22" height="22" rx="4" fill="#4a90f0"/><rect x="5" y="5" width="6" height="14" fill="#fff"/><rect x="12.5" y="5" width="6.5" height="14" fill="#bcd6fa"/></svg><svg style="left:93.6px;top:127.8px;width:18.0px;height:16.8px;" viewBox="0 0 24 24"><path d="M2 3H22L14 12V19L10 22V12z" fill="none" stroke="#1d3461" stroke-width="2.6"/><path d="M8 7h8" stroke="#1d3461" stroke-width="2.4"/></svg><svg style="left:135.6px;top:126.6px;width:19.2px;height:19.2px;" viewBox="0 0 24 24"><circle cx="12" cy="12" r="10" fill="none" stroke="#1d3461" stroke-width="2.2"/><path d="M7 10l5 4 5-4" stroke="#1d3461" stroke-width="2" fill="none"/></svg><div style="left:39.0px;top:153.6px;width:192.6px;height:848.4px;background:#fdfdfe;"></div><div style="left:228.6px;top:156.0px;width:2.7px;height:582.0px;background:#e3e6ec;border-radius:2px;"></div><svg style="left:45.3px;top:165.3px;width:7.8px;height:6.0px;" viewBox="0 0 10 7"><path d="M1 1.5L5 5.5L9 1.5" stroke="#5b6573" stroke-width="1.8" fill="none"/></svg><svg style="left:59.4px;top:160.2px;width:15.6px;height:16.2px;" viewBox="0 0 24 24"><rect x="2" y="2" width="20" height="20" rx="2" fill="#fff" stroke="#8e98a6" stroke-width="1.6"/><path d="M2 8H14V2" stroke="#8e98a6" stroke-width="1.4" fill="none"/><path d="M14 8l8-6" stroke="#8e98a6" stroke-width="1.2"/></svg><span class="t" style="left:82.5px;top:168.6px;">平面视图</span><div style="left:64.2px;top:192.7px;width:6.6px;height:0.9px;background:#c6ccd6;"></div><span class="t" style="left:75.3px;top:192.7px;">建筑-1F</span><div style="left:64.2px;top:216.8px;width:6.6px;height:0.9px;background:#c6ccd6;"></div><span class="t" style="left:75.3px;top:216.8px;">建筑室外地坪</span><div style="left:64.2px;top:240.9px;width:6.6px;height:0.9px;background:#c6ccd6;"></div><span class="t" style="left:75.3px;top:240.9px;">建筑1F</span><div style="left:64.2px;top:265.0px;width:6.6px;height:0.9px;background:#c6ccd6;"></div><span class="t" style="left:75.3px;top:265.0px;">建筑2F</span><div style="left:64.2px;top:289.0px;width:6.6px;height:0.9px;background:#c6ccd6;"></div><span class="t" style="left:75.3px;top:289.0px;">建筑3F</span><div style="left:64.2px;top:313.1px;width:6.6px;height:0.9px;background:#c6ccd6;"></div><span class="t" style="left:75.3px;top:313.1px;">建筑4F</span><div style="left:64.2px;top:337.2px;width:6.6px;height:0.9px;background:#c6ccd6;"></div><span class="t" style="left:75.3px;top:337.2px;">建筑4F(天花)</span><div style="left:64.2px;top:361.3px;width:6.6px;height:0.9px;background:#c6ccd6;"></div><span class="t" style="left:75.3px;top:361.3px;">建筑5F</span><div style="left:64.2px;top:385.4px;width:6.6px;height:0.9px;background:#c6ccd6;"></div><span class="t" style="left:75.3px;top:385.4px;">建筑6F</span><div style="left:64.2px;top:409.5px;width:6.6px;height:0.9px;background:#c6ccd6;"></div><span class="t" style="left:75.3px;top:409.5px;">建筑7F</span><div style="left:64.2px;top:433.6px;width:6.6px;height:0.9px;background:#c6ccd6;"></div><span class="t" style="left:75.3px;top:433.6px;">建筑8F</span><div style="left:64.2px;top:457.7px;width:6.6px;height:0.9px;background:#c6ccd6;"></div><span class="t" style="left:75.3px;top:457.7px;">建筑9F</span><div style="left:64.2px;top:481.8px;width:6.6px;height:0.9px;background:#c6ccd6;"></div><span class="t" style="left:75.3px;top:481.8px;">建筑10F</span><div style="left:64.2px;top:505.9px;width:6.6px;height:0.9px;background:#c6ccd6;"></div><span class="t" style="left:75.3px;top:505.9px;">建筑11F</span><div style="left:64.2px;top:529.9px;width:6.6px;height:0.9px;background:#c6ccd6;"></div><span class="t" style="left:75.3px;top:529.9px;">建筑12F</span><div style="left:64.2px;top:554.0px;width:6.6px;height:0.9px;background:#c6ccd6;"></div><span class="t" style="left:75.3px;top:554.0px;">建筑13F</span><div style="left:64.2px;top:578.1px;width:6.6px;height:0.9px;background:#c6ccd6;"></div><span class="t" style="left:75.3px;top:578.1px;">建筑14F</span><div style="left:64.2px;top:602.2px;width:6.6px;height:0.9px;background:#c6ccd6;"></div><span class="t" style="left:75.3px;top:602.2px;">建筑15F</span><div style="left:64.2px;top:626.3px;width:6.6px;height:0.9px;background:#c6ccd6;"></div><span class="t" style="left:75.3px;top:626.3px;">建筑16F</span><div style="left:64.2px;top:650.4px;width:6.6px;height:0.9px;background:#c6ccd6;"></div><span class="t" style="left:75.3px;top:650.4px;">建筑17F</span><div style="left:64.2px;top:674.5px;width:6.6px;height:0.9px;background:#c6ccd6;"></div><span class="t" style="left:75.3px;top:674.5px;">建筑18F</span><div style="left:64.2px;top:698.6px;width:6.6px;height:0.9px;background:#c6ccd6;"></div><span class="t" style="left:75.3px;top:698.6px;">建筑19F</span><div style="left:64.2px;top:722.7px;width:6.6px;height:0.9px;background:#c6ccd6;"></div><span class="t" style="left:75.3px;top:722.7px;">建筑20F</span><div style="left:64.2px;top:746.8px;width:6.6px;height:0.9px;background:#c6ccd6;"></div><span class="t" style="left:75.3px;top:746.8px;">建筑21F</span><div style="left:64.2px;top:770.8px;width:6.6px;height:0.9px;background:#c6ccd6;"></div><span class="t" style="left:75.3px;top:770.8px;">建筑RF</span><div style="left:64.2px;top:794.9px;width:6.6px;height:0.9px;background:#c6ccd6;"></div><span class="t" style="left:75.3px;top:794.9px;">建筑RF(架构层)</span><svg style="left:45.3px;top:815.7px;width:7.8px;height:6.0px;" viewBox="0 0 10 7"><path d="M1 1.5L5 5.5L9 1.5" stroke="#5b6573" stroke-width="1.8" fill="none"/></svg><svg style="left:59.4px;top:810.6px;width:15.6px;height:16.2px;" viewBox="0 0 24 24"><rect x="2" y="2" width="20" height="20" rx="2" fill="#fff" stroke="#8e98a6" stroke-width="1.6"/><path d="M2 8H14V2" stroke="#8e98a6" stroke-width="1.4" fill="none"/><path d="M14 8l8-6" stroke="#8e98a6" stroke-width="1.2"/></svg><span class="t" style="left:82.5px;top:819.0px;">三维视图</span><div style="left:64.2px;top:843.1px;width:6.6px;height:0.9px;background:#c6ccd6;"></div><span class="t" style="left:75.3px;top:843.1px;">三维</span><div style="left:39.6px;top:855.5px;width:189.0px;height:23.4px;background:#dbe7f8;"></div><div style="left:64.2px;top:867.2px;width:6.6px;height:0.9px;background:#c6ccd6;"></div><span class="t" style="left:75.3px;top:867.2px;">三维(雨水)</span><svg style="left:45.3px;top:888.0px;width:7.8px;height:6.0px;" viewBox="0 0 10 7"><path d="M1 1.5L5 5.5L9 1.5" stroke="#5b6573" stroke-width="1.8" fill="none"/></svg><svg style="left:59.4px;top:882.9px;width:15.6px;height:16.2px;" viewBox="0 0 24 24"><rect x="2" y="2" width="20" height="20" rx="2" fill="#fff" stroke="#8e98a6" stroke-width="1.6"/><path d="M2 8H14V2" stroke="#8e98a6" stroke-width="1.4" fill="none"/><path d="M14 8l8-6" stroke="#8e98a6" stroke-width="1.2"/></svg><span class="t" style="left:82.5px;top:891.3px;">立面视图</span><div style="left:64.2px;top:915.4px;width:6.6px;height:0.9px;background:#c6ccd6;"></div><span class="t" style="left:75.3px;top:915.4px;">东</span><div style="left:64.2px;top:939.5px;width:6.6px;height:0.9px;background:#c6ccd6;"></div><span class="t" style="left:75.3px;top:939.5px;">南</span><div style="left:64.2px;top:963.6px;width:6.6px;height:0.9px;background:#c6ccd6;"></div><span class="t" style="left:75.3px;top:963.6px;">西</span><div style="left:64.2px;top:987.7px;width:6.6px;height:0.9px;background:#c6ccd6;"></div><span class="t" style="left:75.3px;top:987.7px;">北</span><div style="left:63.9px;top:179.1px;width:0.9px;height:615.8px;background:#c6ccd6;"></div><div style="left:63.9px;top:829.5px;width:0.9px;height:37.7px;background:#c6ccd6;"></div><div style="left:63.9px;top:901.8px;width:0.9px;height:85.9px;background:#c6ccd6;"></div><div style="left:49.2px;top:179.1px;width:0.9px;height:819.1px;background:#c6ccd6;"></div><div style="left:233.1px;top:112.5px;width:1698.9px;height:32.4px;background:#dfe3ea;"></div><div style="left:233.1px;top:112.5px;width:6.9px;height:912.0px;background:#e6e9ef;"></div><div style="left:240.0px;top:112.5px;width:816.0px;height:32.7px;background:#e8ebf1;"></div><div style="left:240.0px;top:144.9px;width:1398.0px;height:2.4px;background:#f3f5f8;z-index:3;"></div><svg style="left:247.8px;top:120.9px;width:12.6px;height:15.0px;" viewBox="0 0 20 24"><rect x="2" y="2" width="6" height="8" fill="#9aa7bd"/><rect x="12" y="2" width="6" height="8" fill="#9aa7bd"/><rect x="2" y="14" width="6" height="8" fill="#9aa7bd"/><rect x="12" y="14" width="6" height="8" fill="#9aa7bd"/></svg><svg style="left:277.2px;top:122.4px;width:15.0px;height:12.6px;" viewBox="0 0 24 24"><path d="M3 3H21V17H12L9 21V17H3z" fill="none" stroke="#9aa7bd" stroke-width="2.4"/></svg><span class="t c" style="left:347.0px;top:129.6px;color:#9aa3b0;">建筑R1F</span><div style="left:421.5px;top:115.2px;width:1.4px;height:28.2px;background:#f4f6f9;"></div><span class="t c" style="left:461.0px;top:129.6px;color:#9aa3b0;">三维</span><div style="left:528.0px;top:114.6px;width:135.0px;height:30.6px;background:#fbfbfc;"></div><span class="t c" style="left:582.6px;top:129.6px;color:#1f2329;">三维(雨水)</span><svg style="left:645.9px;top:124.2px;width:10.8px;height:10.8px;" viewBox="0 0 24 24"><path d="M2 2L22 22M22 2L2 22" stroke="#2a2f36" stroke-width="3"/></svg><span class="t c" style="left:709.2px;top:129.6px;color:#9aa3b0;">建筑1F</span><div style="left:783.0px;top:115.2px;width:1.4px;height:28.2px;background:#f4f6f9;"></div><span class="t c" style="left:847.6px;top:129.6px;color:#9aa3b0;">建筑4F(天花)</span><div style="left:939.9px;top:115.2px;width:1.4px;height:28.2px;background:#f4f6f9;"></div><span class="t c" style="left:984.1px;top:129.6px;color:#9aa3b0;">建筑5F</span><div style="left:1056.0px;top:115.2px;width:1.4px;height:28.2px;background:#f4f6f9;"></div><div style="left:299.1px;top:115.2px;width:1.4px;height:28.2px;background:#f4f6f9;"></div><div style="left:240.0px;top:145.2px;width:1398.6px;height:879.6px;background:#fbfbfb;overflow:hidden;"><svg style="left:0;top:0;width:1397.4px;height:879.6px;" viewBox="80 48.4 465.8 293.2"><defs><radialGradient id="gt" cx=".4" cy=".35" r=".75"><stop offset="0" stop-color="#aab4be"/><stop offset="1" stop-color="#8893a0"/></radialGradient><radialGradient id="gl" cx=".65" cy=".5" r=".8"><stop offset="0" stop-color="#a6b0bb"/><stop offset="1" stop-color="#66717d"/></radialGradient><radialGradient id="gr" cx=".35" cy=".5" r=".8"><stop offset="0" stop-color="#a9b3bd"/><stop offset="1" stop-color="#6f7a86"/></radialGradient><linearGradient id="cyl" x1="0" x2="1"><stop offset="0" stop-color="#8a96a3"/><stop offset=".35" stop-color="#b3bdc7"/><stop offset="1" stop-color="#77828e"/></linearGradient></defs><g transform="scale(1.0012 1) translate(-661.1 -427.05)"><path d="M740 717.2L825.5 760L841 769.5" stroke="#0c0cf0" stroke-width="2.3" fill="none" stroke-linejoin="round" stroke-linecap="round" /><path d="M740 724.3L826 768L830 771" stroke="#28e414" stroke-width="2.3" fill="none" stroke-linejoin="round" stroke-linecap="round" /><path d="M827.4 759.5L981.4 634.4L972 628" stroke="#0c0cf0" stroke-width="2.3" fill="none" stroke-linejoin="round" stroke-linecap="round" /><path d="M905 704.5L990.5 634.4L975.5 623" stroke="#28e414" stroke-width="2.3" fill="none" stroke-linejoin="round" stroke-linecap="round" /><path d="M911 675.5L987.9 621.3L986 616.5" stroke="#0c0cf0" stroke-width="2.3" fill="none" stroke-linejoin="round" stroke-linecap="round" /><path d="M921.7 703.2L954.6 676.2" stroke="#0c0cf0" stroke-width="2.3" fill="none" stroke-linejoin="round" stroke-linecap="round" /><path d="M871.8 763.5L896.7 747.4L905.6 743.9L905.6 770" stroke="#28e414" stroke-width="1.9549999999999998" fill="none" stroke-linejoin="round" stroke-linecap="round" /><path d="M870 767L893.1 754.6L893.1 770" stroke="#0c0cf0" stroke-width="1.9549999999999998" fill="none" stroke-linejoin="round" stroke-linecap="round" /><circle cx="871.8" cy="763.5" r="2" fill="#28e414" stroke="none" stroke-width="0.4"/><path d="M988 620L1023.2 636.4L1050.6 613.5L1062 605.5" stroke="#0c0cf0" stroke-width="2.3" fill="none" stroke-linejoin="round" stroke-linecap="round" /><path d="M1011.4 628.5L1038.5 606.5L1040.2 605.7L1042 606.5L1051.9 611.5" stroke="#0c0cf0" stroke-width="2.07" fill="none" stroke-linejoin="round" stroke-linecap="round" /><circle cx="1025.8" cy="615.5" r="1.9" fill="#0c0cf0" stroke="none" stroke-width="0.4"/><circle cx="1027.2" cy="614.1" r="1.3" fill="#0c0cf0" stroke="none" stroke-width="0.4"/><circle cx="1044" cy="620.7" r="1.9" fill="#0c0cf0" stroke="none" stroke-width="0.4"/><circle cx="1045.4" cy="619.3" r="1.3" fill="#0c0cf0" stroke="none" stroke-width="0.4"/><circle cx="1027" cy="631.8" r="1.9" fill="#0c0cf0" stroke="none" stroke-width="0.4"/><circle cx="1028.4" cy="630.4" r="1.3" fill="#0c0cf0" stroke="none" stroke-width="0.4"/><path d="M974.9 648.1L992.5 657L994.4 659L992.5 662L968.5 681.5L965.5 682.2L954.6 676.2" stroke="#0c0cf0" stroke-width="2.1849999999999996" fill="none" stroke-linejoin="round" stroke-linecap="round" /><path d="M981.4 653.5L964.4 667" stroke="#0c0cf0" stroke-width="2.07" fill="none" stroke-linejoin="round" stroke-linecap="round" /><circle cx="967" cy="662.5" r="1.9" fill="#0c0cf0" stroke="none" stroke-width="0.4"/><circle cx="968.4" cy="661.1" r="1.3" fill="#0c0cf0" stroke="none" stroke-width="0.4"/><circle cx="992" cy="660" r="1.9" fill="#0c0cf0" stroke="none" stroke-width="0.4"/><circle cx="993.4" cy="658.6" r="1.3" fill="#0c0cf0" stroke="none" stroke-width="0.4"/><circle cx="975" cy="676" r="1.9" fill="#0c0cf0" stroke="none" stroke-width="0.4"/><circle cx="976.4" cy="674.6" r="1.3" fill="#0c0cf0" stroke="none" stroke-width="0.4"/><path d="M950 667.7L980 684" stroke="#28e414" stroke-width="2.07" fill="none" stroke-linejoin="round" stroke-linecap="round" /><path d="M1205.4 558.7L985.5 739L982.5 742L985.5 745L1024 765.5L1024 770" stroke="#0c0cf0" stroke-width="2.53" fill="none" stroke-linejoin="round" stroke-linecap="round" /><path d="M1205.4 565.8L994.5 739.5L991.5 742L994.5 745L1032 764L1034 770" stroke="#28e414" stroke-width="2.53" fill="none" stroke-linejoin="round" stroke-linecap="round" /><path d="M1205.4 615.6L1070.5 728L1067.5 728.6L1033.6 709.7L1012.7 698.8" stroke="#28e414" stroke-width="2.3" fill="none" stroke-linejoin="round" stroke-linecap="round" /><path d="M1033.6 709.7L1047 699.5L1049.5 698.8L1052 699.5L1080.4 715.7L1080.4 717.5L1068 728.5" stroke="#28e414" stroke-width="2.07" fill="none" stroke-linejoin="round" stroke-linecap="round" /><circle cx="1040" cy="713.3" r="1.9" fill="#28e414" stroke="none" stroke-width="0.4"/><circle cx="1045.5" cy="716.4" r="1.9" fill="#28e414" stroke="none" stroke-width="0.4"/><circle cx="1053.5" cy="720.8" r="1.9" fill="#28e414" stroke="none" stroke-width="0.4"/><circle cx="1063" cy="706" r="1.9" fill="#28e414" stroke="none" stroke-width="0.4"/><path d="M1205.4 622.5L1172 649.5L1167.5 650.8L1125.7 624.2" stroke="#0c0cf0" stroke-width="2.3" fill="none" stroke-linejoin="round" stroke-linecap="round" /><path d="M1057.5 667L1069.5 670.5L1077.4 665" stroke="#0c0cf0" stroke-width="1.8399999999999999" fill="none" stroke-linejoin="round" stroke-linecap="round" /><path d="M1013 700L1013 770" stroke="#0c0cf0" stroke-width="2.1849999999999996" fill="none" stroke-linejoin="round" stroke-linecap="round" /><path d="M1025.5 706L1025.5 762" stroke="#28e414" stroke-width="2.1849999999999996" fill="none" stroke-linejoin="round" stroke-linecap="round" /><path d="M1064 679L1067 682L1070 685L1070 770" stroke="#0c0cf0" stroke-width="2.1849999999999996" fill="none" stroke-linejoin="round" stroke-linecap="round" /><path d="M1076 676.5L1082.5 678L1082.5 770" stroke="#28e414" stroke-width="2.1849999999999996" fill="none" stroke-linejoin="round" stroke-linecap="round" /><circle cx="1064.5" cy="680" r="2" fill="#0c0cf0" stroke="none" stroke-width="0.4"/><circle cx="1078" cy="677.5" r="1.8" fill="#28e414" stroke="none" stroke-width="0.4"/><path d="M1132.4 616L1132.4 770" stroke="#0c0cf0" stroke-width="2.1849999999999996" fill="none" stroke-linejoin="round" stroke-linecap="round" /><path d="M1144.8 546.2L1144.8 770" stroke="#28e414" stroke-width="2.1849999999999996" fill="none" stroke-linejoin="round" stroke-linecap="round" /><path d="M1144.8 548L1146 544L1168 528.4" stroke="#28e414" stroke-width="2.1849999999999996" fill="none" stroke-linejoin="round" stroke-linecap="round" /><path d="M1189.4 585L1189.4 770" stroke="#0c0cf0" stroke-width="2.1849999999999996" fill="none" stroke-linejoin="round" stroke-linecap="round" /><path d="M1201.8 566L1201.8 770" stroke="#28e414" stroke-width="2.1849999999999996" fill="none" stroke-linejoin="round" stroke-linecap="round" /><circle cx="1191.5" cy="582.5" r="1.9" fill="#0c0cf0" stroke="none" stroke-width="0.4"/><circle cx="1192.9" cy="581.1" r="1.3" fill="#0c0cf0" stroke="none" stroke-width="0.4"/><path d="M1132 557L1140 559L1148 553" stroke="#0c0cf0" stroke-width="1.8399999999999999" fill="none" stroke-linejoin="round" stroke-linecap="round" /><path d="M1014 738L1020.5 733.5" stroke="#0c0cf0" stroke-width="0.8" fill="none" /><path d="M1014 741.2L1020.5 736.7" stroke="#0c0cf0" stroke-width="0.8" fill="none" /><path d="M1014 744.4L1020.5 739.9" stroke="#0c0cf0" stroke-width="0.8" fill="none" /><path d="M1014.5 747L1021 742.5" stroke="#28e414" stroke-width="0.8" fill="none" /><path d="M1014.5 750.2L1021 745.7" stroke="#28e414" stroke-width="0.8" fill="none" /><path d="M1014.5 753.4L1021 748.9" stroke="#28e414" stroke-width="0.8" fill="none" /><path d="M1133.4 640L1139.9 635.5" stroke="#0c0cf0" stroke-width="0.8" fill="none" /><path d="M1133.4 643.2L1139.9 638.7" stroke="#0c0cf0" stroke-width="0.8" fill="none" /><path d="M1133.4 646.4L1139.9 641.9" stroke="#0c0cf0" stroke-width="0.8" fill="none" /><path d="M1133.9 649L1140.4 644.5" stroke="#28e414" stroke-width="0.8" fill="none" /><path d="M1133.9 652.2L1140.4 647.7" stroke="#28e414" stroke-width="0.8" fill="none" /><path d="M1133.9 655.4L1140.4 650.9" stroke="#28e414" stroke-width="0.8" fill="none" /><path d="M1133.4 692L1139.9 687.5" stroke="#0c0cf0" stroke-width="0.8" fill="none" /><path d="M1133.4 695.2L1139.9 690.7" stroke="#0c0cf0" stroke-width="0.8" fill="none" /><path d="M1133.4 698.4L1139.9 693.9" stroke="#0c0cf0" stroke-width="0.8" fill="none" /><path d="M1133.9 701L1140.4 696.5" stroke="#28e414" stroke-width="0.8" fill="none" /><path d="M1133.9 704.2L1140.4 699.7" stroke="#28e414" stroke-width="0.8" fill="none" /><path d="M1133.9 707.4L1140.4 702.9" stroke="#28e414" stroke-width="0.8" fill="none" /><path d="M1133.4 748L1139.9 743.5" stroke="#0c0cf0" stroke-width="0.8" fill="none" /><path d="M1133.4 751.2L1139.9 746.7" stroke="#0c0cf0" stroke-width="0.8" fill="none" /><path d="M1133.4 754.4L1139.9 749.9" stroke="#0c0cf0" stroke-width="0.8" fill="none" /><path d="M1133.9 757L1140.4 752.5" stroke="#28e414" stroke-width="0.8" fill="none" /><path d="M1133.9 760.2L1140.4 755.7" stroke="#28e414" stroke-width="0.8" fill="none" /><path d="M1133.9 763.4L1140.4 758.9" stroke="#28e414" stroke-width="0.8" fill="none" /><path d="M1190.4 617L1196.9 612.5" stroke="#0c0cf0" stroke-width="0.8" fill="none" /><path d="M1190.4 620.2L1196.9 615.7" stroke="#0c0cf0" stroke-width="0.8" fill="none" /><path d="M1190.4 623.4L1196.9 618.9" stroke="#0c0cf0" stroke-width="0.8" fill="none" /><path d="M1190.9 626L1197.4 621.5" stroke="#28e414" stroke-width="0.8" fill="none" /><path d="M1190.9 629.2L1197.4 624.7" stroke="#28e414" stroke-width="0.8" fill="none" /><path d="M1190.9 632.4L1197.4 627.9" stroke="#28e414" stroke-width="0.8" fill="none" /><path d="M1190.4 668L1196.9 663.5" stroke="#0c0cf0" stroke-width="0.8" fill="none" /><path d="M1190.4 671.2L1196.9 666.7" stroke="#0c0cf0" stroke-width="0.8" fill="none" /><path d="M1190.4 674.4L1196.9 669.9" stroke="#0c0cf0" stroke-width="0.8" fill="none" /><path d="M1190.9 677L1197.4 672.5" stroke="#28e414" stroke-width="0.8" fill="none" /><path d="M1190.9 680.2L1197.4 675.7" stroke="#28e414" stroke-width="0.8" fill="none" /><path d="M1190.9 683.4L1197.4 678.9" stroke="#28e414" stroke-width="0.8" fill="none" /><path d="M1190.4 722L1196.9 717.5" stroke="#0c0cf0" stroke-width="0.8" fill="none" /><path d="M1190.4 725.2L1196.9 720.7" stroke="#0c0cf0" stroke-width="0.8" fill="none" /><path d="M1190.4 728.4L1196.9 723.9" stroke="#0c0cf0" stroke-width="0.8" fill="none" /><path d="M1190.9 731L1197.4 726.5" stroke="#28e414" stroke-width="0.8" fill="none" /><path d="M1190.9 734.2L1197.4 729.7" stroke="#28e414" stroke-width="0.8" fill="none" /><path d="M1190.9 737.4L1197.4 732.9" stroke="#28e414" stroke-width="0.8" fill="none" /><path d="M1071 718L1077.5 713.5" stroke="#0c0cf0" stroke-width="0.8" fill="none" /><path d="M1071 721.2L1077.5 716.7" stroke="#0c0cf0" stroke-width="0.8" fill="none" /><path d="M1071 724.4L1077.5 719.9" stroke="#0c0cf0" stroke-width="0.8" fill="none" /><path d="M1071 765L1077.5 760.5" stroke="#0c0cf0" stroke-width="0.8" fill="none" /><path d="M1071 768.2L1077.5 763.7" stroke="#0c0cf0" stroke-width="0.8" fill="none" /><path d="M1071 771.4L1077.5 766.9" stroke="#0c0cf0" stroke-width="0.8" fill="none" /><path d="M969.7 764.2L1000 747.4" stroke="#28e414" stroke-width="2.07" fill="none" stroke-linejoin="round" stroke-linecap="round" /><circle cx="969.7" cy="764.5" r="2" fill="#28e414" stroke="none" stroke-width="0.4"/><path d="M982.2 740.3L1000 751" stroke="#0c0cf0" stroke-width="2.07" fill="none" stroke-linejoin="round" stroke-linecap="round" /><polygon points="862.2,584.3 937.6,622.8 937.6,658.4 862.2,619.9" fill="#7a8591" stroke="#3a4047" stroke-width=".45"/><g transform="matrix(18.85 9.62 0 17.8 862.2 584.3)"><circle cx="0.5" cy="0.5" r=".39" fill="url(#gl)" stroke="#434b54" stroke-width="1.25" vector-effect="non-scaling-stroke"/><circle cx="0.5" cy="1.5" r=".39" fill="url(#gl)" stroke="#434b54" stroke-width="1.25" vector-effect="non-scaling-stroke"/><circle cx="1.5" cy="0.5" r=".39" fill="url(#gl)" stroke="#434b54" stroke-width="1.25" vector-effect="non-scaling-stroke"/><circle cx="1.5" cy="1.5" r=".39" fill="url(#gl)" stroke="#434b54" stroke-width="1.25" vector-effect="non-scaling-stroke"/><circle cx="2.5" cy="0.5" r=".39" fill="url(#gl)" stroke="#434b54" stroke-width="1.25" vector-effect="non-scaling-stroke"/><circle cx="2.5" cy="1.5" r=".39" fill="url(#gl)" stroke="#434b54" stroke-width="1.25" vector-effect="non-scaling-stroke"/><circle cx="3.5" cy="0.5" r=".39" fill="url(#gl)" stroke="#434b54" stroke-width="1.25" vector-effect="non-scaling-stroke"/><circle cx="3.5" cy="1.5" r=".39" fill="url(#gl)" stroke="#434b54" stroke-width="1.25" vector-effect="non-scaling-stroke"/><path d="M1 0V2M2 0V2M3 0V2M0 1H4" stroke="#3a4047" stroke-width="1.4" fill="none" vector-effect="non-scaling-stroke"/></g><polygon points="937.6,622.8 995.7,573 995.7,608.6 937.6,658.4" fill="#828d99" stroke="#3a4047" stroke-width=".45"/><g transform="matrix(14.53 -12.45 0 17.8 937.6 622.8)"><circle cx="0.5" cy="0.5" r=".39" fill="url(#gr)" stroke="#464e57" stroke-width="1.25" vector-effect="non-scaling-stroke"/><circle cx="0.5" cy="1.5" r=".39" fill="url(#gr)" stroke="#464e57" stroke-width="1.25" vector-effect="non-scaling-stroke"/><circle cx="1.5" cy="0.5" r=".39" fill="url(#gr)" stroke="#464e57" stroke-width="1.25" vector-effect="non-scaling-stroke"/><circle cx="1.5" cy="1.5" r=".39" fill="url(#gr)" stroke="#464e57" stroke-width="1.25" vector-effect="non-scaling-stroke"/><circle cx="2.5" cy="0.5" r=".39" fill="url(#gr)" stroke="#464e57" stroke-width="1.25" vector-effect="non-scaling-stroke"/><circle cx="2.5" cy="1.5" r=".39" fill="url(#gr)" stroke="#464e57" stroke-width="1.25" vector-effect="non-scaling-stroke"/><circle cx="3.5" cy="0.5" r=".39" fill="url(#gr)" stroke="#464e57" stroke-width="1.25" vector-effect="non-scaling-stroke"/><circle cx="3.5" cy="1.5" r=".39" fill="url(#gr)" stroke="#464e57" stroke-width="1.25" vector-effect="non-scaling-stroke"/><path d="M1 0V2M2 0V2M3 0V2M0 1H4" stroke="#3a4047" stroke-width="1.4" fill="none" vector-effect="non-scaling-stroke"/></g><polygon points="921.6,534.8 862.2,584.3 936.3,622.5 995.7,573" fill="#8a95a1" stroke="#3a4047" stroke-width=".45"/><g transform="matrix(-14.85 12.38 18.53 9.55 921.6 534.8)"><circle cx="0.5" cy="0.5" r=".39" fill="url(#gt)" stroke="#4a525b" stroke-width="1.25" vector-effect="non-scaling-stroke"/><circle cx="0.5" cy="1.5" r=".39" fill="url(#gt)" stroke="#4a525b" stroke-width="1.25" vector-effect="non-scaling-stroke"/><circle cx="0.5" cy="2.5" r=".39" fill="url(#gt)" stroke="#4a525b" stroke-width="1.25" vector-effect="non-scaling-stroke"/><circle cx="0.5" cy="3.5" r=".39" fill="url(#gt)" stroke="#4a525b" stroke-width="1.25" vector-effect="non-scaling-stroke"/><circle cx="1.5" cy="0.5" r=".39" fill="url(#gt)" stroke="#4a525b" stroke-width="1.25" vector-effect="non-scaling-stroke"/><circle cx="1.5" cy="1.5" r=".39" fill="url(#gt)" stroke="#4a525b" stroke-width="1.25" vector-effect="non-scaling-stroke"/><circle cx="1.5" cy="2.5" r=".39" fill="url(#gt)" stroke="#4a525b" stroke-width="1.25" vector-effect="non-scaling-stroke"/><circle cx="1.5" cy="3.5" r=".39" fill="url(#gt)" stroke="#4a525b" stroke-width="1.25" vector-effect="non-scaling-stroke"/><circle cx="2.5" cy="0.5" r=".39" fill="url(#gt)" stroke="#4a525b" stroke-width="1.25" vector-effect="non-scaling-stroke"/><circle cx="2.5" cy="1.5" r=".39" fill="url(#gt)" stroke="#4a525b" stroke-width="1.25" vector-effect="non-scaling-stroke"/><circle cx="2.5" cy="2.5" r=".39" fill="url(#gt)" stroke="#4a525b" stroke-width="1.25" vector-effect="non-scaling-stroke"/><circle cx="2.5" cy="3.5" r=".39" fill="url(#gt)" stroke="#4a525b" stroke-width="1.25" vector-effect="non-scaling-stroke"/><circle cx="3.5" cy="0.5" r=".39" fill="url(#gt)" stroke="#4a525b" stroke-width="1.25" vector-effect="non-scaling-stroke"/><circle cx="3.5" cy="1.5" r=".39" fill="url(#gt)" stroke="#4a525b" stroke-width="1.25" vector-effect="non-scaling-stroke"/><circle cx="3.5" cy="2.5" r=".39" fill="url(#gt)" stroke="#4a525b" stroke-width="1.25" vector-effect="non-scaling-stroke"/><circle cx="3.5" cy="3.5" r=".39" fill="url(#gt)" stroke="#4a525b" stroke-width="1.25" vector-effect="non-scaling-stroke"/><path d="M1 0V4M2 0V4M3 0V4M0 1H4M0 2H4M0 3H4" stroke="#3a4047" stroke-width="1.4" fill="none" vector-effect="non-scaling-stroke"/></g><path d="M862.2 584.3L937.6 622.8L995.7 573" stroke="#2f353c" stroke-width="0.55" fill="none" stroke-linejoin="round"/><path d="M937.6 622.8L937.6 658.4" stroke="#2f353c" stroke-width="0.55" fill="none" /><path d="M921.6 534.8L862.2 584.3L862.2 619.9L937.6 658.4L995.7 608.6L995.7 573L921.6 534.8" stroke="#2f353c" stroke-width="0.5" fill="none" stroke-linejoin="round"/><polygon points="783.4,648.4 857.5,687.6 857.5,723.2 783.4,684" fill="#7a8591" stroke="#3a4047" stroke-width=".45"/><g transform="matrix(18.53 9.8 0 17.8 783.4 648.4)"><circle cx="0.5" cy="0.5" r=".39" fill="url(#gl)" stroke="#434b54" stroke-width="1.25" vector-effect="non-scaling-stroke"/><circle cx="0.5" cy="1.5" r=".39" fill="url(#gl)" stroke="#434b54" stroke-width="1.25" vector-effect="non-scaling-stroke"/><circle cx="1.5" cy="0.5" r=".39" fill="url(#gl)" stroke="#434b54" stroke-width="1.25" vector-effect="non-scaling-stroke"/><circle cx="1.5" cy="1.5" r=".39" fill="url(#gl)" stroke="#434b54" stroke-width="1.25" vector-effect="non-scaling-stroke"/><circle cx="2.5" cy="0.5" r=".39" fill="url(#gl)" stroke="#434b54" stroke-width="1.25" vector-effect="non-scaling-stroke"/><circle cx="2.5" cy="1.5" r=".39" fill="url(#gl)" stroke="#434b54" stroke-width="1.25" vector-effect="non-scaling-stroke"/><circle cx="3.5" cy="0.5" r=".39" fill="url(#gl)" stroke="#434b54" stroke-width="1.25" vector-effect="non-scaling-stroke"/><circle cx="3.5" cy="1.5" r=".39" fill="url(#gl)" stroke="#434b54" stroke-width="1.25" vector-effect="non-scaling-stroke"/><path d="M1 0V2M2 0V2M3 0V2M0 1H4" stroke="#3a4047" stroke-width="1.4" fill="none" vector-effect="non-scaling-stroke"/></g><polygon points="857.5,687.6 917,637.7 917,673.3 857.5,723.2" fill="#828d99" stroke="#3a4047" stroke-width=".45"/><g transform="matrix(14.88 -12.47 0 17.8 857.5 687.6)"><circle cx="0.5" cy="0.5" r=".39" fill="url(#gr)" stroke="#464e57" stroke-width="1.25" vector-effect="non-scaling-stroke"/><circle cx="0.5" cy="1.5" r=".39" fill="url(#gr)" stroke="#464e57" stroke-width="1.25" vector-effect="non-scaling-stroke"/><circle cx="1.5" cy="0.5" r=".39" fill="url(#gr)" stroke="#464e57" stroke-width="1.25" vector-effect="non-scaling-stroke"/><circle cx="1.5" cy="1.5" r=".39" fill="url(#gr)" stroke="#464e57" stroke-width="1.25" vector-effect="non-scaling-stroke"/><circle cx="2.5" cy="0.5" r=".39" fill="url(#gr)" stroke="#464e57" stroke-width="1.25" vector-effect="non-scaling-stroke"/><circle cx="2.5" cy="1.5" r=".39" fill="url(#gr)" stroke="#464e57" stroke-width="1.25" vector-effect="non-scaling-stroke"/><circle cx="3.5" cy="0.5" r=".39" fill="url(#gr)" stroke="#464e57" stroke-width="1.25" vector-effect="non-scaling-stroke"/><circle cx="3.5" cy="1.5" r=".39" fill="url(#gr)" stroke="#464e57" stroke-width="1.25" vector-effect="non-scaling-stroke"/><path d="M1 0V2M2 0V2M3 0V2M0 1H4" stroke="#3a4047" stroke-width="1.4" fill="none" vector-effect="non-scaling-stroke"/></g><polygon points="843.3,599.6 783.4,648.4 857.1,686.5 917,637.7" fill="#8a95a1" stroke="#3a4047" stroke-width=".45"/><g transform="matrix(-14.97 12.2 18.43 9.53 843.3 599.6)"><circle cx="0.5" cy="0.5" r=".39" fill="url(#gt)" stroke="#4a525b" stroke-width="1.25" vector-effect="non-scaling-stroke"/><circle cx="0.5" cy="1.5" r=".39" fill="url(#gt)" stroke="#4a525b" stroke-width="1.25" vector-effect="non-scaling-stroke"/><circle cx="0.5" cy="2.5" r=".39" fill="url(#gt)" stroke="#4a525b" stroke-width="1.25" vector-effect="non-scaling-stroke"/><circle cx="0.5" cy="3.5" r=".39" fill="url(#gt)" stroke="#4a525b" stroke-width="1.25" vector-effect="non-scaling-stroke"/><circle cx="1.5" cy="0.5" r=".39" fill="url(#gt)" stroke="#4a525b" stroke-width="1.25" vector-effect="non-scaling-stroke"/><circle cx="1.5" cy="1.5" r=".39" fill="url(#gt)" stroke="#4a525b" stroke-width="1.25" vector-effect="non-scaling-stroke"/><circle cx="1.5" cy="2.5" r=".39" fill="url(#gt)" stroke="#4a525b" stroke-width="1.25" vector-effect="non-scaling-stroke"/><circle cx="1.5" cy="3.5" r=".39" fill="url(#gt)" stroke="#4a525b" stroke-width="1.25" vector-effect="non-scaling-stroke"/><circle cx="2.5" cy="0.5" r=".39" fill="url(#gt)" stroke="#4a525b" stroke-width="1.25" vector-effect="non-scaling-stroke"/><circle cx="2.5" cy="1.5" r=".39" fill="url(#gt)" stroke="#4a525b" stroke-width="1.25" vector-effect="non-scaling-stroke"/><circle cx="2.5" cy="2.5" r=".39" fill="url(#gt)" stroke="#4a525b" stroke-width="1.25" vector-effect="non-scaling-stroke"/><circle cx="2.5" cy="3.5" r=".39" fill="url(#gt)" stroke="#4a525b" stroke-width="1.25" vector-effect="non-scaling-stroke"/><circle cx="3.5" cy="0.5" r=".39" fill="url(#gt)" stroke="#4a525b" stroke-width="1.25" vector-effect="non-scaling-stroke"/><circle cx="3.5" cy="1.5" r=".39" fill="url(#gt)" stroke="#4a525b" stroke-width="1.25" vector-effect="non-scaling-stroke"/><circle cx="3.5" cy="2.5" r=".39" fill="url(#gt)" stroke="#4a525b" stroke-width="1.25" vector-effect="non-scaling-stroke"/><circle cx="3.5" cy="3.5" r=".39" fill="url(#gt)" stroke="#4a525b" stroke-width="1.25" vector-effect="non-scaling-stroke"/><path d="M1 0V4M2 0V4M3 0V4M0 1H4M0 2H4M0 3H4" stroke="#3a4047" stroke-width="1.4" fill="none" vector-effect="non-scaling-stroke"/></g><path d="M783.4 648.4L857.5 687.6L917 637.7" stroke="#2f353c" stroke-width="0.55" fill="none" stroke-linejoin="round"/><path d="M857.5 687.6L857.5 723.2" stroke="#2f353c" stroke-width="0.55" fill="none" /><path d="M843.3 599.6L783.4 648.4L783.4 684L857.5 723.2L917 673.3L917 637.7L843.3 599.6" stroke="#2f353c" stroke-width="0.5" fill="none" stroke-linejoin="round"/><circle cx="947.5" cy="647.5" r="1.9" fill="#0c0cf0" stroke="none" stroke-width="0.4"/><circle cx="948.9" cy="646.1" r="1.3" fill="#0c0cf0" stroke="none" stroke-width="0.4"/><circle cx="971.6" cy="627.9" r="1.9" fill="#0c0cf0" stroke="none" stroke-width="0.4"/><circle cx="973" cy="626.5" r="1.3" fill="#0c0cf0" stroke="none" stroke-width="0.4"/><circle cx="986" cy="616.1" r="1.9" fill="#0c0cf0" stroke="none" stroke-width="0.4"/><circle cx="987.4" cy="614.7" r="1.3" fill="#0c0cf0" stroke="none" stroke-width="0.4"/><circle cx="911" cy="674.5" r="1.9" fill="#0c0cf0" stroke="none" stroke-width="0.4"/><circle cx="912.4" cy="673.1" r="1.3" fill="#0c0cf0" stroke="none" stroke-width="0.4"/><circle cx="974.9" cy="622.6" r="2.3" fill="#28e414" stroke="none" stroke-width="0.4"/><circle cx="976.3" cy="621.2" r="1.5" fill="#28e414" stroke="none" stroke-width="0.4"/><path d="M900.5 724L899.5 737.5" stroke="#6b747e" stroke-width="0.8" fill="none" /><path d="M916.5 724L917.5 738" stroke="#6b747e" stroke-width="0.8" fill="none" /><path d="M908 727L905 735" stroke="#6b747e" stroke-width="0.7" fill="none" /><path d="M897.8 689Q897.8 680 908.800 679.800Q919.8 680 919.8 689V718Q919.8 727.500 908.800 727.800Q897.8 727.500 897.8 718Z" fill="url(#cyl)" stroke="#5a636d" stroke-width=".4"/><path d="M897.8 689.500Q908.800 693.500 919.8 689.500" fill="none" stroke="#5a636d" stroke-width=".35"/><rect x="907" y="676.5" width="3.5" height="3.5" fill="#0c0cf0" stroke="none" stroke-width="0.4" /><circle cx="903.5" cy="735.5" r="0.9" fill="#333" stroke="none" stroke-width="0.4"/><rect x="933.2" y="736" width="6.6" height="8.5" fill="url(#cyl)" stroke="#5a636d" stroke-width="0.35" /><ellipse cx="936.500" cy="736" rx="3.300" ry="1.300" fill="#c9d0d7" stroke="#5a636d" stroke-width=".3"/><path d="M932.500 746q0-2.500 4-2.500q4 0 4 2.500v3q-4 2.500-8 0z" fill="#6b747e"/><circle cx="936.5" cy="748" r="1.8" fill="#3a4047" stroke="none" stroke-width="0.4"/><polygon points="1155.15,509.2 1162.75,500.65 1176.05,501.6 1181.75,510.15 1168.45,511.1" fill="#9aa0a8"/><polygon points="1155.15,509.2 1162.75,500.65 1168.45,511.1 1158.95,512.05" fill="#b4b9c0"/><polygon points="1157.05,511.1 1166.55,512.05 1166.55,525.35 1158,521.55" fill="#d4d7db"/><polygon points="1166.55,512.05 1179.85,510.15 1179.85,521.55 1166.55,525.35" fill="#c4c8cd"/><polygon points="1171.3,515.85 1175.1,515.38 1175.1,522.98 1171.3,524.02" fill="#8d939b"/><polygon points="1159.9,514.9 1163.7,515.47 1163.7,519.65 1159.9,518.7" fill="#a9aeb5"/><polygon points="1166.55,525.35 1179.85,521.55 1181.75,522.5 1169.4,527.25" fill="#8d939b" opacity=".6"/><polygon points="1155.5,573.03 1171.8,581.04 1200.3,558.74 1200.3,556.23 1171.8,578.53 1155.5,570.83" fill="#555b63" /><polygon points="1155.5,541 1171.8,548.7 1171.8,580.1 1155.5,572.4" fill="#8d98a4" /><polygon points="1157.13,544.91 1169.52,550.76 1169.52,562.38 1157.13,556.53" fill="#10202f" /><polygon points="1157.13,557.47 1169.52,563.32 1169.52,578.08 1157.13,572.23" fill="#2f2825" /><polygon points="1171.8,548.7 1200.3,526.4 1200.3,557.8 1171.8,580.1" fill="#6d7782" /><polygon points="1174.65,548.98 1185.19,540.73 1185.19,552.98 1174.65,561.23" fill="#0d1c2a" /><polygon points="1188.04,538.5 1199.44,529.58 1199.44,541.83 1188.04,550.75" fill="#0d1c2a" /><polygon points="1185.19,540.73 1188.04,538.5 1188.04,550.75 1185.19,552.98" fill="#2a241f" /><polygon points="1174.65,562.17 1200.01,542.32 1200.01,557.08 1174.65,576.93" fill="#2b2420" /><polygon points="1169.84,547.78 1171.8,548.7 1174.08,546.92 1174.08,578.32 1171.8,580.73 1169.84,579.18" fill="#98a3af" /><polygon points="1171.8,548.7 1174.08,546.92 1174.08,578.32 1171.8,580.73" fill="#78828d" /><polygon points="1155.5,541 1156.8,541.62 1156.8,573.02 1155.5,572.4" fill="#7c8691" /><polygon points="1155.5,541 1171.8,548.7 1200.3,526.4 1184,518.7" fill="#8f9ba7" stroke="#3a4047" stroke-width=".35"/><g transform="matrix(8.15 3.85 14.25 -11.15 1171.35 538.83)"><circle r=".4" cx="0" cy="0" fill="#222528" transform="scale(2.100 1)"/><circle r=".27" cx="0" cy="0" fill="none" stroke="#6b737c" stroke-width=".9" vector-effect="non-scaling-stroke" transform="scale(2.100 1)"/><path d="M-.8 0H.8M0 -.38V.38M-.56 -.27L.56 .27M-.56 .27L.56 -.27" stroke="#7a828b" stroke-width=".8" vector-effect="non-scaling-stroke"/><circle r=".13" cx="0" cy="0" fill="none" stroke="#7a828b" stroke-width=".8" vector-effect="non-scaling-stroke" transform="scale(2.100 1)"/></g><g transform="matrix(8.15 3.85 14.25 -11.15 1184.74 528.35)"><circle r=".4" cx="0" cy="0" fill="#222528" transform="scale(2.100 1)"/><circle r=".27" cx="0" cy="0" fill="none" stroke="#6b737c" stroke-width=".9" vector-effect="non-scaling-stroke" transform="scale(2.100 1)"/><path d="M-.8 0H.8M0 -.38V.38M-.56 -.27L.56 .27M-.56 .27L.56 -.27" stroke="#7a828b" stroke-width=".8" vector-effect="non-scaling-stroke"/><circle r=".13" cx="0" cy="0" fill="none" stroke="#7a828b" stroke-width=".8" vector-effect="non-scaling-stroke" transform="scale(2.100 1)"/></g><polygon points="1180.5,519.7 1182.5,516.9 1185.5,516.9 1187,520.2" fill="#8f9ba7" /><polygon points="1107.1,612.93 1123.4,620.94 1151.9,598.64 1151.9,596.13 1123.4,618.43 1107.1,610.73" fill="#555b63" /><polygon points="1107.1,580.9 1123.4,588.6 1123.4,620 1107.1,612.3" fill="#8d98a4" /><polygon points="1108.73,584.81 1121.12,590.66 1121.12,602.28 1108.73,596.43" fill="#10202f" /><polygon points="1108.73,597.37 1121.12,603.22 1121.12,617.98 1108.73,612.13" fill="#2f2825" /><polygon points="1123.4,588.6 1151.9,566.3 1151.9,597.7 1123.4,620" fill="#6d7782" /><polygon points="1126.25,588.88 1136.79,580.63 1136.79,592.88 1126.25,601.13" fill="#0d1c2a" /><polygon points="1139.64,578.4 1151.04,569.48 1151.04,581.73 1139.64,590.65" fill="#0d1c2a" /><polygon points="1136.79,580.63 1139.64,578.4 1139.64,590.65 1136.79,592.88" fill="#2a241f" /><polygon points="1126.25,602.07 1151.61,582.22 1151.61,596.98 1126.25,616.83" fill="#2b2420" /><polygon points="1121.44,587.68 1123.4,588.6 1125.68,586.82 1125.68,618.22 1123.4,620.63 1121.44,619.08" fill="#98a3af" /><polygon points="1123.4,588.6 1125.68,586.82 1125.68,618.22 1123.4,620.63" fill="#78828d" /><polygon points="1107.1,580.9 1108.4,581.52 1108.4,612.92 1107.1,612.3" fill="#7c8691" /><polygon points="1107.1,580.9 1123.4,588.6 1151.9,566.3 1135.6,558.6" fill="#8f9ba7" stroke="#3a4047" stroke-width=".35"/><g transform="matrix(8.15 3.85 14.25 -11.15 1122.94 578.73)"><circle r=".4" cx="0" cy="0" fill="#222528" transform="scale(2.100 1)"/><circle r=".27" cx="0" cy="0" fill="none" stroke="#6b737c" stroke-width=".9" vector-effect="non-scaling-stroke" transform="scale(2.100 1)"/><path d="M-.8 0H.8M0 -.38V.38M-.56 -.27L.56 .27M-.56 .27L.56 -.27" stroke="#7a828b" stroke-width=".8" vector-effect="non-scaling-stroke"/><circle r=".13" cx="0" cy="0" fill="none" stroke="#7a828b" stroke-width=".8" vector-effect="non-scaling-stroke" transform="scale(2.100 1)"/></g><g transform="matrix(8.15 3.85 14.25 -11.15 1136.34 568.25)"><circle r=".4" cx="0" cy="0" fill="#222528" transform="scale(2.100 1)"/><circle r=".27" cx="0" cy="0" fill="none" stroke="#6b737c" stroke-width=".9" vector-effect="non-scaling-stroke" transform="scale(2.100 1)"/><path d="M-.8 0H.8M0 -.38V.38M-.56 -.27L.56 .27M-.56 .27L.56 -.27" stroke="#7a828b" stroke-width=".8" vector-effect="non-scaling-stroke"/><circle r=".13" cx="0" cy="0" fill="none" stroke="#7a828b" stroke-width=".8" vector-effect="non-scaling-stroke" transform="scale(2.100 1)"/></g><polygon points="1132.1,559.6 1134.1,556.8 1137.1,556.8 1138.6,560.1" fill="#8f9ba7" /><polygon points="1059,651.33 1075.3,659.34 1103.8,637.04 1103.8,634.53 1075.3,656.83 1059,649.13" fill="#555b63" /><polygon points="1059,619.3 1075.3,627 1075.3,658.4 1059,650.7" fill="#8d98a4" /><polygon points="1060.63,623.21 1073.02,629.06 1073.02,640.68 1060.63,634.83" fill="#10202f" /><polygon points="1060.63,635.77 1073.02,641.62 1073.02,656.38 1060.63,650.53" fill="#2f2825" /><polygon points="1075.3,627 1103.8,604.7 1103.8,636.1 1075.3,658.4" fill="#6d7782" /><polygon points="1078.15,627.28 1088.69,619.03 1088.69,631.28 1078.15,639.53" fill="#0d1c2a" /><polygon points="1091.54,616.8 1102.94,607.88 1102.94,620.13 1091.54,629.05" fill="#0d1c2a" /><polygon points="1088.69,619.03 1091.54,616.8 1091.54,629.05 1088.69,631.28" fill="#2a241f" /><polygon points="1078.15,640.47 1103.51,620.62 1103.51,635.38 1078.15,655.23" fill="#2b2420" /><polygon points="1073.34,626.08 1075.3,627 1077.58,625.22 1077.58,656.62 1075.3,659.03 1073.34,657.48" fill="#98a3af" /><polygon points="1075.3,627 1077.58,625.22 1077.58,656.62 1075.3,659.03" fill="#78828d" /><polygon points="1059,619.3 1060.3,619.92 1060.3,651.32 1059,650.7" fill="#7c8691" /><polygon points="1059,619.3 1075.3,627 1103.8,604.7 1087.5,597" fill="#8f9ba7" stroke="#3a4047" stroke-width=".35"/><g transform="matrix(8.15 3.85 14.25 -11.15 1074.85 617.13)"><circle r=".4" cx="0" cy="0" fill="#222528" transform="scale(2.100 1)"/><circle r=".27" cx="0" cy="0" fill="none" stroke="#6b737c" stroke-width=".9" vector-effect="non-scaling-stroke" transform="scale(2.100 1)"/><path d="M-.8 0H.8M0 -.38V.38M-.56 -.27L.56 .27M-.56 .27L.56 -.27" stroke="#7a828b" stroke-width=".8" vector-effect="non-scaling-stroke"/><circle r=".13" cx="0" cy="0" fill="none" stroke="#7a828b" stroke-width=".8" vector-effect="non-scaling-stroke" transform="scale(2.100 1)"/></g><g transform="matrix(8.15 3.85 14.25 -11.15 1088.24 606.65)"><circle r=".4" cx="0" cy="0" fill="#222528" transform="scale(2.100 1)"/><circle r=".27" cx="0" cy="0" fill="none" stroke="#6b737c" stroke-width=".9" vector-effect="non-scaling-stroke" transform="scale(2.100 1)"/><path d="M-.8 0H.8M0 -.38V.38M-.56 -.27L.56 .27M-.56 .27L.56 -.27" stroke="#7a828b" stroke-width=".8" vector-effect="non-scaling-stroke"/><circle r=".13" cx="0" cy="0" fill="none" stroke="#7a828b" stroke-width=".8" vector-effect="non-scaling-stroke" transform="scale(2.100 1)"/></g><polygon points="1084,598 1086,595.2 1089,595.2 1090.5,598.5" fill="#8f9ba7" /><polygon points="1011,691.83 1027.3,699.84 1055.8,677.54 1055.8,675.03 1027.3,697.33 1011,689.63" fill="#555b63" /><polygon points="1011,659.8 1027.3,667.5 1027.3,698.9 1011,691.2" fill="#8d98a4" /><polygon points="1012.63,663.71 1025.02,669.56 1025.02,681.18 1012.63,675.33" fill="#10202f" /><polygon points="1012.63,676.27 1025.02,682.12 1025.02,696.88 1012.63,691.03" fill="#2f2825" /><polygon points="1027.3,667.5 1055.8,645.2 1055.8,676.6 1027.3,698.9" fill="#6d7782" /><polygon points="1030.15,667.78 1040.69,659.53 1040.69,671.78 1030.15,680.03" fill="#0d1c2a" /><polygon points="1043.54,657.3 1054.94,648.38 1054.94,660.63 1043.54,669.55" fill="#0d1c2a" /><polygon points="1040.69,659.53 1043.54,657.3 1043.54,669.55 1040.69,671.78" fill="#2a241f" /><polygon points="1030.15,680.97 1055.51,661.12 1055.51,675.88 1030.15,695.73" fill="#2b2420" /><polygon points="1025.34,666.58 1027.3,667.5 1029.58,665.72 1029.58,697.12 1027.3,699.53 1025.34,697.98" fill="#98a3af" /><polygon points="1027.3,667.5 1029.58,665.72 1029.58,697.12 1027.3,699.53" fill="#78828d" /><polygon points="1011,659.8 1012.3,660.42 1012.3,691.82 1011,691.2" fill="#7c8691" /><polygon points="1011,659.8 1027.3,667.5 1055.8,645.2 1039.5,637.5" fill="#8f9ba7" stroke="#3a4047" stroke-width=".35"/><g transform="matrix(8.15 3.85 14.25 -11.15 1026.85 657.63)"><circle r=".4" cx="0" cy="0" fill="#222528" transform="scale(2.100 1)"/><circle r=".27" cx="0" cy="0" fill="none" stroke="#6b737c" stroke-width=".9" vector-effect="non-scaling-stroke" transform="scale(2.100 1)"/><path d="M-.8 0H.8M0 -.38V.38M-.56 -.27L.56 .27M-.56 .27L.56 -.27" stroke="#7a828b" stroke-width=".8" vector-effect="non-scaling-stroke"/><circle r=".13" cx="0" cy="0" fill="none" stroke="#7a828b" stroke-width=".8" vector-effect="non-scaling-stroke" transform="scale(2.100 1)"/></g><g transform="matrix(8.15 3.85 14.25 -11.15 1040.24 647.15)"><circle r=".4" cx="0" cy="0" fill="#222528" transform="scale(2.100 1)"/><circle r=".27" cx="0" cy="0" fill="none" stroke="#6b737c" stroke-width=".9" vector-effect="non-scaling-stroke" transform="scale(2.100 1)"/><path d="M-.8 0H.8M0 -.38V.38M-.56 -.27L.56 .27M-.56 .27L.56 -.27" stroke="#7a828b" stroke-width=".8" vector-effect="non-scaling-stroke"/><circle r=".13" cx="0" cy="0" fill="none" stroke="#7a828b" stroke-width=".8" vector-effect="non-scaling-stroke" transform="scale(2.100 1)"/></g><polygon points="1036,638.5 1038,635.7 1041,635.7 1042.5,639" fill="#8f9ba7" /><polygon points="967.8,728.03 984.1,736.04 1012.6,713.74 1012.6,711.23 984.1,733.53 967.8,725.83" fill="#555b63" /><polygon points="967.8,696 984.1,703.7 984.1,735.1 967.8,727.4" fill="#8d98a4" /><polygon points="969.43,699.91 981.82,705.76 981.82,717.38 969.43,711.53" fill="#10202f" /><polygon points="969.43,712.47 981.82,718.32 981.82,733.08 969.43,727.23" fill="#2f2825" /><polygon points="984.1,703.7 1012.6,681.4 1012.6,712.8 984.1,735.1" fill="#6d7782" /><polygon points="986.95,703.98 997.49,695.73 997.49,707.98 986.95,716.23" fill="#0d1c2a" /><polygon points="1000.34,693.5 1011.74,684.58 1011.74,696.83 1000.34,705.75" fill="#0d1c2a" /><polygon points="997.49,695.73 1000.34,693.5 1000.34,705.75 997.49,707.98" fill="#2a241f" /><polygon points="986.95,717.17 1012.31,697.32 1012.31,712.08 986.95,731.93" fill="#2b2420" /><polygon points="982.14,702.78 984.1,703.7 986.38,701.92 986.38,733.32 984.1,735.73 982.14,734.18" fill="#98a3af" /><polygon points="984.1,703.7 986.38,701.92 986.38,733.32 984.1,735.73" fill="#78828d" /><polygon points="967.8,696 969.1,696.62 969.1,728.02 967.8,727.4" fill="#7c8691" /><polygon points="967.8,696 984.1,703.7 1012.6,681.4 996.3,673.7" fill="#8f9ba7" stroke="#3a4047" stroke-width=".35"/><g transform="matrix(8.15 3.85 14.25 -11.15 983.64 693.83)"><circle r=".4" cx="0" cy="0" fill="#222528" transform="scale(2.100 1)"/><circle r=".27" cx="0" cy="0" fill="none" stroke="#6b737c" stroke-width=".9" vector-effect="non-scaling-stroke" transform="scale(2.100 1)"/><path d="M-.8 0H.8M0 -.38V.38M-.56 -.27L.56 .27M-.56 .27L.56 -.27" stroke="#7a828b" stroke-width=".8" vector-effect="non-scaling-stroke"/><circle r=".13" cx="0" cy="0" fill="none" stroke="#7a828b" stroke-width=".8" vector-effect="non-scaling-stroke" transform="scale(2.100 1)"/></g><g transform="matrix(8.15 3.85 14.25 -11.15 997.04 683.35)"><circle r=".4" cx="0" cy="0" fill="#222528" transform="scale(2.100 1)"/><circle r=".27" cx="0" cy="0" fill="none" stroke="#6b737c" stroke-width=".9" vector-effect="non-scaling-stroke" transform="scale(2.100 1)"/><path d="M-.8 0H.8M0 -.38V.38M-.56 -.27L.56 .27M-.56 .27L.56 -.27" stroke="#7a828b" stroke-width=".8" vector-effect="non-scaling-stroke"/><circle r=".13" cx="0" cy="0" fill="none" stroke="#7a828b" stroke-width=".8" vector-effect="non-scaling-stroke" transform="scale(2.100 1)"/></g><polygon points="992.8,674.7 994.8,671.9 997.8,671.9 999.3,675.2" fill="#8f9ba7" /><path d="M757.5 754L757.5 747" stroke="#2030e0" stroke-width="0.9" /><path d="M756.2 747.5L757.5 744.5L758.8 747.5z" fill="#2030e0"/><path d="M757.5 754L764 755.5" stroke="#20c020" stroke-width="0.9" /><circle cx="764.5" cy="755.7" r="1.1" fill="#20c020" stroke="none" stroke-width="0.4"/><path d="M757.5 754L752 757" stroke="#e02020" stroke-width="0.9" /><path d="M750.0 758.2l3-.300-1.200-2.200z" fill="#e02020"/><text x="757" y="744" font-size="3.2" fill="#2030e0" font-weight="700" >Z</text><text x="766" y="758" font-size="3.2" fill="#20c020" font-weight="700" >Y</text><text x="747.5" y="761" font-size="3.2" fill="#e02020" font-weight="700" >X</text></g></svg></div><div style="left:1638.0px;top:144.9px;width:294.0px;height:874.2px;background:#eef1f5;"></div><div style="left:1638.3px;top:144.9px;width:1.2px;height:879.0px;background:#e6e9ee;"></div><span class="t" style="left:1647.6px;top:163.2px;color:#5b6573;font-size:11.6px;">通用工具</span><div style="left:1908.9px;top:162.9px;width:8.4px;height:1.2px;background:#6b7480;"></div><svg style="left:1662.0px;top:203.1px;width:22.2px;height:22.2px;" viewBox="0 0 24 24"><path d="M12 1l3 4h-6zM12 23l3-4h-6zM1 12l4-3v6zM23 12l-4-3v6z" fill="#4a6484"/><path d="M12 4v16M4 12h16" stroke="#4a6484" stroke-width="1.6"/></svg><svg style="left:1701.3px;top:203.1px;width:22.2px;height:22.2px;" viewBox="0 0 24 24"><rect x="5" y="5" width="18" height="18" fill="#4a6484"/><rect x="2" y="2" width="18" height="18" fill="#fff" stroke="#4a6484" stroke-width="2"/><rect x="9" y="9" width="4" height="4" fill="none" stroke="#4a6484" stroke-width="1.2"/></svg><svg style="left:1738.8px;top:203.1px;width:22.2px;height:22.2px;" viewBox="0 0 24 24"><circle cx="11" cy="12" r="9.500" fill="none" stroke="#4a6484" stroke-width="1.8"/><circle cx="11" cy="12" r="4" fill="#4a6484"/><path d="M11 12h12" stroke="#4a6484" stroke-width="2"/><path d="M19 8l4 4-4 4" stroke="#4a6484" stroke-width="1.6" fill="none"/></svg><svg style="left:1776.6px;top:203.1px;width:22.2px;height:22.2px;" viewBox="0 0 24 24"><path d="M13 1V23" stroke="#9fb0c6" stroke-width="1.6"/><rect x="3" y="7" width="10" height="9" fill="#4a6484"/><rect x="9" y="14" width="6" height="8" fill="#4a6484"/><path d="M15 8h7M15 15h7" stroke="#9fb0c6" stroke-width="1.6"/></svg><svg style="left:1815.0px;top:203.1px;width:22.2px;height:22.2px;" viewBox="0 0 24 24"><path d="M12 1V23" stroke="#9fb0c6" stroke-width="1.6"/><rect x="1" y="8" width="9" height="8" fill="#4a6484"/><rect x="14" y="8" width="9" height="8" fill="#4a6484"/></svg><svg style="left:1854.3px;top:203.1px;width:22.2px;height:22.2px;" viewBox="0 0 24 24"><rect x="2" y="2" width="12" height="12" rx="3.500" fill="none" stroke="#4a6484" stroke-width="2.6"/><rect x="10" y="10" width="12" height="12" rx="3.500" fill="#eef1f5" stroke="#4a6484" stroke-width="2.6"/></svg><svg style="left:1662.0px;top:242.1px;width:22.2px;height:22.2px;" viewBox="0 0 24 24"><path d="M21 2V23" stroke="#4a6484" stroke-width="1.6"/><rect x="8" y="4" width="12" height="7" fill="#4a6484"/><rect x="3" y="13" width="17" height="7" fill="#fff" stroke="#4a6484" stroke-width="2"/></svg><svg style="left:1701.3px;top:242.1px;width:22.2px;height:22.2px;" viewBox="0 0 24 24"><path d="M20 2V23M23 2V23" stroke="#9fb0c6" stroke-width="1.4"/><rect x="2" y="9" width="10" height="6" fill="#4a6484"/><path d="M12 12h7" stroke="#4a6484" stroke-width="1.8"/></svg><svg style="left:1738.8px;top:242.1px;width:22.2px;height:22.2px;" viewBox="0 0 24 24"><path d="M22 2V23" stroke="#9fb0c6" stroke-width="1.6"/><rect x="3" y="4" width="13" height="7" fill="#4a6484"/><rect x="3" y="14" width="13" height="7" fill="#4a6484"/><path d="M16 7.5h5M16 17.500h5" stroke="#4a6484" stroke-width="1.6"/></svg><svg style="left:1776.6px;top:242.1px;width:22.2px;height:22.2px;" viewBox="0 0 24 24"><rect x="1" y="16" width="7" height="7" fill="#4a6484"/><rect x="16" y="1" width="7" height="7" fill="#fff" stroke="#4a6484" stroke-width="1.8"/><path d="M7 17L17 7" stroke="#4a6484" stroke-width="1.8"/><circle cx="12" cy="12" r="2.2" fill="#fff" stroke="#4a6484" stroke-width="1.4"/></svg><svg style="left:1815.0px;top:242.1px;width:22.2px;height:22.2px;" viewBox="0 0 24 24"><path d="M12 1V23" stroke="#9fb0c6" stroke-width="1.6"/><path d="M2 5v14l7-7z" fill="none" stroke="#4a6484" stroke-width="1.8"/><path d="M22 5v14l-7-7z" fill="#4a6484"/></svg><svg style="left:1854.3px;top:242.1px;width:22.2px;height:22.2px;" viewBox="0 0 24 24"><path d="M4 7H20L18.500 23H5.500z" fill="#4a6484"/><path d="M2 5.500H22" stroke="#4a6484" stroke-width="2.4"/><path d="M8 4.500V2H16V4.500" stroke="#4a6484" stroke-width="2" fill="none"/><path d="M9.500 10v10M14.500 10v10" stroke="#c8d3e2" stroke-width="1.4"/></svg><svg style="left:1662.0px;top:279.6px;width:22.2px;height:22.2px;opacity:.35;" viewBox="0 0 24 24"><rect x="1" y="5" width="22" height="14" fill="#dfe6f0" stroke="#4a6484" stroke-width="2"/><path d="M5 15v-5M9 15v-3M13 15v-5M17 15v-3" stroke="#4a6484" stroke-width="1.6"/><path d="M1 19h22" stroke="#4a6484" stroke-width="2.4"/></svg><svg style="left:1701.3px;top:279.6px;width:22.2px;height:22.2px;" viewBox="0 0 24 24"><path d="M3 6Q17 2 18 12L17 22" stroke="#7fb0f8" stroke-width="4.500" fill="none"/><path d="M3 4.500Q8 3 11 4M16.500 17L15.800 22" stroke="#4a6484" stroke-width="1.6" fill="none"/></svg><div style="left:1638.0px;top:344.7px;width:294.0px;height:1.5px;background:#f9fafb;"></div><span class="t" style="left:1647.6px;top:361.8px;color:#5b6573;font-size:11.6px;">属性面板</span><div style="left:1651.8px;top:378.9px;width:240.6px;height:46.2px;background:#f3f5f8;border:1px solid #e1e4ea;border-radius:2px;"></div><span class="t" style="left:1658.4px;top:394.5px;color:#b4bac4;font-size:11.4px;">视图名称</span><span class="t" style="left:1658.4px;top:409.5px;color:#b4bac4;font-size:11.4px;">三维视图</span><svg style="left:1879.5px;top:399.9px;width:9.0px;height:6.3px;" viewBox="0 0 10 7"><path d="M1 1.5L5 5.5L9 1.5" stroke="#6b7480" stroke-width="1.7" fill="none"/></svg><div style="left:1899.0px;top:378.3px;width:19.8px;height:20.4px;background:#f7f8fa;border:1px solid #e1e4ea;"></div><div style="left:1899.0px;top:404.1px;width:19.8px;height:20.4px;background:#f7f8fa;border:1px solid #e1e4ea;"></div><span class="t c" style="left:1908.9px;top:388.2px;color:#7c8593;font-size:13px;">+</span><svg style="left:1903.8px;top:409.5px;width:10.2px;height:9.6px;" viewBox="0 0 24 24"><path d="M2 5h20M2 12h20M2 19h20" stroke="#5b6573" stroke-width="2.6"/></svg><svg style="left:1653.0px;top:446.7px;width:8.4px;height:6.3px;" viewBox="0 0 10 7"><path d="M1 1.5L5 5.5L9 1.5" stroke="#6b7480" stroke-width="1.8" fill="none"/></svg><span class="t" style="left:1671.6px;top:450.0px;color:#5b6573;">基本属性</span><span class="t" style="left:1650.0px;top:477.3px;">视图名称</span><div class="inp" style="left:1721.4px;top:467.1px;width:199.2px;height:20.7px;"></div><span class="t" style="left:1728.0px;top:477.3px;color:#1f2329;">三维(雨水)</span><span class="t" style="left:1650.0px;top:508.3px;">工作平面</span><div class="inp" style="left:1721.4px;top:498.1px;width:199.2px;height:20.7px;"></div><span class="t" style="left:1728.0px;top:508.3px;color:#1f2329;">结构-1F</span><svg style="left:1906.5px;top:505.3px;width:9.0px;height:6.3px;" viewBox="0 0 10 7"><path d="M1 1.5L5 5.5L9 1.5" stroke="#6b7480" stroke-width="1.7" fill="none"/></svg><span class="t" style="left:1650.0px;top:539.3px;">视图对象···</span><div class="inp" style="left:1721.4px;top:529.1px;width:199.2px;height:20.7px;"></div><span class="t c" style="left:1821.0px;top:539.3px;">设置</span><span class="t" style="left:1650.0px;top:570.3px;">视图比例</span><div class="inp dis" style="left:1721.4px;top:560.1px;width:199.2px;height:20.7px;"></div><span class="t" style="left:1728.0px;top:570.3px;color:#a5acb8;">1:100</span><svg style="left:1906.5px;top:567.3px;width:9.0px;height:6.3px;" viewBox="0 0 10 7"><path d="M1 1.5L5 5.5L9 1.5" stroke="#a5acb8" stroke-width="1.7" fill="none"/></svg><span class="t" style="left:1650.0px;top:601.3px;">显示模式</span><div class="inp dis" style="left:1721.4px;top:591.1px;width:199.2px;height:20.7px;"></div><span class="t" style="left:1728.0px;top:601.3px;color:#a5acb8;">着色: 有边线、有阴影</span><svg style="left:1906.5px;top:598.3px;width:9.0px;height:6.3px;" viewBox="0 0 10 7"><path d="M1 1.5L5 5.5L9 1.5" stroke="#a5acb8" stroke-width="1.7" fill="none"/></svg><span class="t" style="left:1650.0px;top:632.3px;">详细程度</span><div class="inp dis" style="left:1721.4px;top:622.1px;width:199.2px;height:20.7px;"></div><span class="t" style="left:1728.0px;top:632.3px;color:#a5acb8;">精细</span><svg style="left:1906.5px;top:629.3px;width:9.0px;height:6.3px;" viewBox="0 0 10 7"><path d="M1 1.5L5 5.5L9 1.5" stroke="#a5acb8" stroke-width="1.7" fill="none"/></svg><span class="t" style="left:1650.0px;top:663.2px;">专业</span><div class="inp" style="left:1721.4px;top:653.0px;width:199.2px;height:20.7px;"></div><span class="t" style="left:1728.0px;top:663.2px;color:#1f2329;">机电</span><svg style="left:1906.5px;top:660.2px;width:9.0px;height:6.3px;" viewBox="0 0 10 7"><path d="M1 1.5L5 5.5L9 1.5" stroke="#6b7480" stroke-width="1.7" fill="none"/></svg><span class="t" style="left:1650.0px;top:694.2px;">显示隐藏线</span><div class="inp" style="left:1721.4px;top:684.0px;width:199.2px;height:20.7px;"></div><span class="t" style="left:1728.0px;top:694.2px;color:#1f2329;">按专业</span><svg style="left:1906.5px;top:691.2px;width:9.0px;height:6.3px;" viewBox="0 0 10 7"><path d="M1 1.5L5 5.5L9 1.5" stroke="#6b7480" stroke-width="1.7" fill="none"/></svg><svg style="left:1653.0px;top:729.7px;width:8.4px;height:6.3px;" viewBox="0 0 10 7"><path d="M1 1.5L5 5.5L9 1.5" stroke="#6b7480" stroke-width="1.8" fill="none"/></svg><span class="t" style="left:1671.6px;top:733.0px;color:#8a93a0;">视图范围</span><span class="t" style="left:1650.0px;top:761.8px;">视图样板</span><div class="inp" style="left:1721.4px;top:751.6px;width:199.2px;height:20.7px;"></div><span class="t" style="left:1728.0px;top:761.8px;color:#1f2329;">视图样板-新建</span><svg style="left:1906.5px;top:758.8px;width:9.0px;height:6.3px;" viewBox="0 0 10 7"><path d="M1 1.5L5 5.5L9 1.5" stroke="#6b7480" stroke-width="1.7" fill="none"/></svg><span class="t" style="left:1650.0px;top:791.6px;">裁切框</span><div class="cb on" style="left:1721.4px;top:783.2px;width:17.1px;height:17.1px;"></div><svg style="left:1723.8px;top:785.6px;width:12.3px;height:12.3px;" viewBox="0 0 24 24"><path d="M4 12.500L10 18L20 6.500" stroke="#fff" stroke-width="3.4" fill="none"/></svg><span class="t" style="left:1650.0px;top:821.4px;">锁定视图···</span><div class="cb" style="left:1721.4px;top:813.0px;width:17.1px;height:17.1px;"></div><div style="left:37.5px;top:1002.0px;width:195.6px;height:22.8px;background:#eef1f5;"></div><div style="left:37.5px;top:1024.8px;width:1894.5px;height:22.2px;background:#e9edf2;"></div><div style="left:37.5px;top:1024.5px;width:1894.5px;height:1.2px;background:#f6f7f9;"></div><svg style="left:58.8px;top:1029.6px;width:15.0px;height:13.2px;" viewBox="0 0 24 24"><path d="M1 12Q12 1 23 12Q12 23 1 12z" fill="none" stroke="#aab2bf" stroke-width="2.4"/><circle cx="12" cy="12" r="4" fill="#aab2bf"/></svg><svg style="left:91.2px;top:1029.6px;width:15.0px;height:13.2px;" viewBox="0 0 24 24"><path d="M1 12Q12 1 23 12Q12 23 1 12z" fill="none" stroke="#aab2bf" stroke-width="2.4"/><circle cx="12" cy="12" r="4" fill="#aab2bf"/><path d="M16 18l6 4" stroke="#6aa6f5" stroke-width="3"/></svg><svg style="left:123.6px;top:1029.6px;width:15.0px;height:13.2px;" viewBox="0 0 24 24"><path d="M1 12Q12 1 23 12Q12 23 1 12z" fill="none" stroke="#55637a" stroke-width="2.4"/><circle cx="12" cy="12" r="4" fill="#55637a"/><path d="M15 17l7 5" stroke="#3d8af2" stroke-width="3.4"/></svg><div style="left:148.8px;top:1026.9px;width:1.2px;height:18.6px;background:#d6dae1;"></div><svg style="left:164.1px;top:1028.4px;width:12.0px;height:15.6px;" viewBox="0 0 24 25"><path d="M12 2a8 8 0 0 1 4.5 14.5V19h-9v-2.500A8 8 0 0 1 12 2z" fill="none" stroke="#1d3461" stroke-width="2.6"/><path d="M8.5 22.500h7" stroke="#1d3461" stroke-width="2.4"/></svg><svg style="left:195.6px;top:1029.9px;width:15.0px;height:12.6px;" viewBox="0 0 24 24"><path d="M1 12Q12 1 23 12Q12 23 1 12z" fill="none" stroke="#55637a" stroke-width="2.4"/><circle cx="12" cy="12" r="4" fill="#55637a"/></svg><div style="left:217.8px;top:1036.5px;width:4.2px;height:1.2px;background:#8a93a0;"></div><div style="left:235.8px;top:1026.9px;width:1.2px;height:18.6px;background:#d6dae1;"></div><svg style="left:253.8px;top:1029.0px;width:13.8px;height:15.0px;" viewBox="0 0 24 24"><rect x="3" y="2" width="7" height="8" fill="#1d3461"/><rect x="3" y="13" width="7" height="8" fill="#1d3461"/><path d="M13 2V22" stroke="#1d3461" stroke-width="2"/><path d="M14 6h7M14 17h7" stroke="#8a93a0" stroke-width="2"/></svg><svg style="left:288.0px;top:1029.0px;width:13.8px;height:15.0px;" viewBox="0 0 24 24"><path d="M4 2V20H22" stroke="#3d6fd0" stroke-width="2.6" fill="none"/><path d="M4 12a8 8 0 0 1 8 8" stroke="#3d8af2" stroke-width="2" fill="none"/></svg><div style="left:321.9px;top:1026.9px;width:1.2px;height:18.6px;background:#d6dae1;"></div><div style="left:1837.8px;top:1026.9px;width:1.2px;height:18.6px;background:#d6dae1;"></div><svg style="left:1851.6px;top:1029.0px;width:18.0px;height:15.0px;" viewBox="0 0 24 24"><rect x="2" y="8" width="20" height="8" rx="1" fill="#8fd9c0" transform="rotate(-40 12 12)"/></svg><svg style="left:1885.2px;top:1029.6px;width:14.4px;height:14.4px;" viewBox="0 0 24 24"><rect x="3" y="3" width="16" height="16" rx="2" fill="none" stroke="#7d8aa0" stroke-width="2.4"/><path d="M7 22h15V7" stroke="#b7c0ce" stroke-width="2.2" fill="none"/></svg><svg style="left:1915.8px;top:1029.6px;width:15.0px;height:14.4px;" viewBox="0 0 24 24"><path d="M3 3l7 7M21 3l-7 7M3 21l7-7M21 21l-7-7" stroke="#7d8aa0" stroke-width="2.4"/><rect x="8" y="8" width="8" height="8" fill="none" stroke="#7d8aa0" stroke-width="2"/></svg><svg style="left:240.0px;top:550.8px;width:16.2px;height:33.6px;" viewBox="0 0 10.8 22.4"><path d="M0 0A10.500 11.200 0 0 1 0 22.400z" fill="#c5cad3"/><path d="M3 9l3 2.200-3 2.200" stroke="#fff" stroke-width="1.2" fill="none"/></svg><svg style="left:1621.8px;top:568.2px;width:16.2px;height:33.6px;" viewBox="0 0 10.8 22.4"><path d="M10.8 0A10.500 11.200 0 0 0 10.8 22.400z" fill="#c5cad3"/><path d="M5 9l3 2.200-3 2.200" stroke="#fff" stroke-width="1.2" fill="none"/></svg><div style="left:1594.2px;top:930.0px;width:28.8px;height:50.4px;background:#3b3b3b;"></div><svg style="left:1599.6px;top:934.2px;width:18.0px;height:18.0px;" viewBox="0 0 24 24"><path d="M19 12a7 7 0 1 1-3-5.700" stroke="#fff" stroke-width="2.6" fill="none"/><path d="M12 3h6v6" stroke="#fff" stroke-width="2.4" fill="none"/><circle cx="12" cy="12" r="1.8" fill="#fff"/></svg><svg style="left:1600.8px;top:958.8px;width:15.6px;height:15.6px;" viewBox="0 0 24 24"><path d="M3 3L21 21M21 3L3 21" stroke="#fff" stroke-width="3.6"/></svg><div class="bd"></div></div><div class="cap" style="left:173.6px;top:367.5px;">首层给排水平面图</div><div class="cap" style="left:813.4px;top:367.5px;">4F给排水平面图</div><div class="cap" style="left:173.6px;top:787.6px;">雨水系统三维模型</div><div class="cap" style="left:813.6px;top:787.6px;">设备接管大样展示</div></body></html>
